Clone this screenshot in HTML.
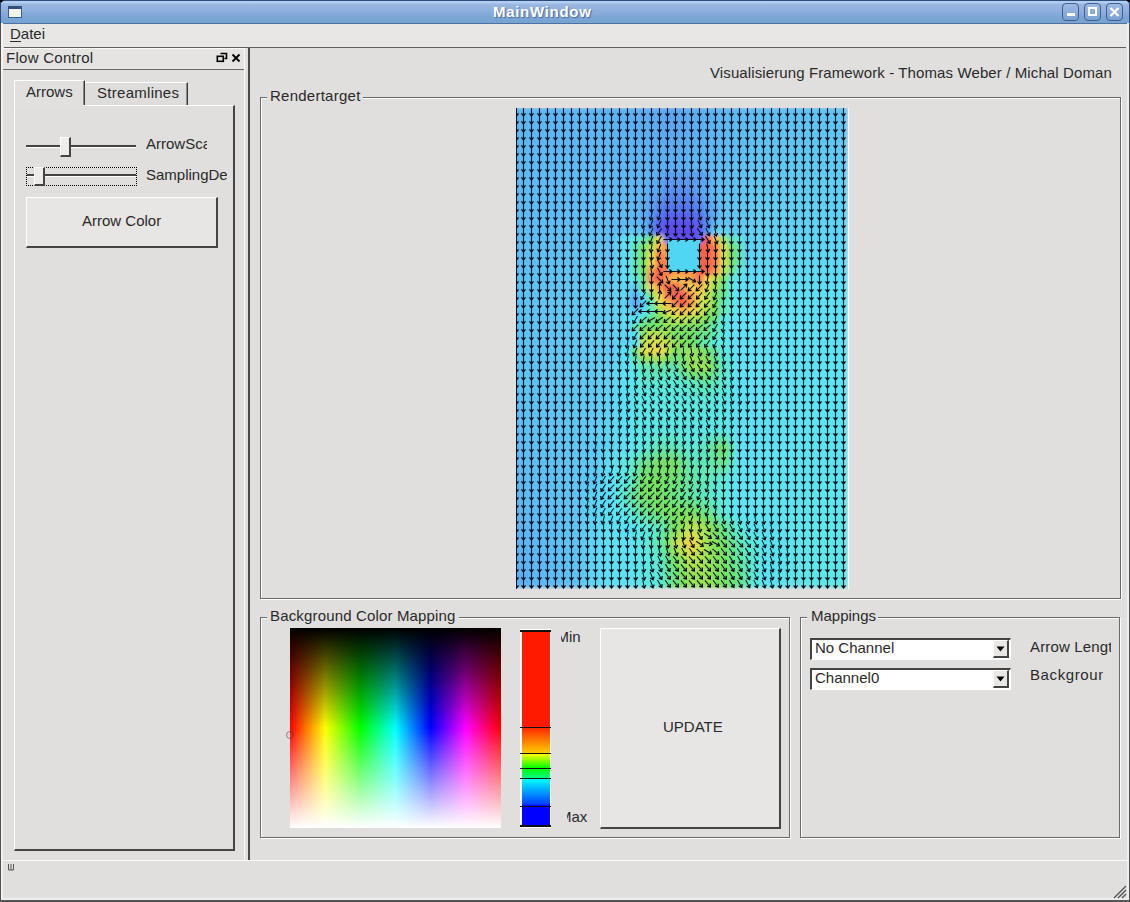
<!DOCTYPE html>
<html><head><meta charset="utf-8">
<style>
*{margin:0;padding:0;box-sizing:border-box}
html,body{width:1130px;height:902px;overflow:hidden;background:#e0dfdd;font-family:"Liberation Sans",sans-serif;font-size:15px;color:#2a2a2a}
.a{position:absolute}
.t{position:absolute;white-space:nowrap;line-height:15px;font-size:15px}
.hl{position:absolute;height:1px}
.vl{position:absolute;width:1px}
</style></head><body>
<!-- title bar -->
<div class="a" style="left:0;top:0;width:1130px;height:24px;background:linear-gradient(#b2cdf2 0,#b2cdf2 2px,#9ab7e0 3px,#8eafdf 10px,#7ba5d5 16px,#76a3d2 22px);border-top:1px solid #2f4d7a"></div>
<div class="a" style="left:0;top:23px;width:1130px;height:1px;background:#50709f"></div>
<div class="a" style="left:0;top:0;width:4px;height:4px;background:#000;clip-path:polygon(0 0,100% 0,0 100%)"></div>
<div class="a" style="left:1126px;top:0;width:4px;height:4px;background:#000;clip-path:polygon(0 0,100% 0,100% 100%)"></div>
<div class="vl" style="left:0;top:2px;height:22px;background:#2f4a78"></div>
<div class="vl" style="left:1129px;top:2px;height:22px;background:#2f4a78"></div>
<!-- window icon -->
<div class="a" style="left:8px;top:6px;width:14px;height:12px;background:#f4f3ea;border:1px solid #3a5c8f;border-top:3px solid #2f4d7d"></div>
<div class="t" style="left:493px;top:4px;font-weight:bold;color:#fff;font-size:15px;letter-spacing:0.7px;text-shadow:1px 1px 1px #4a6a9a">MainWindow</div>
<!-- title buttons -->
<div class="a" style="left:1062px;top:3px;width:17px;height:18px;border:1px solid #3f5f92;border-radius:4px;background:linear-gradient(#9fbbe3,#7c9fd2)"></div>
<div class="a" style="left:1067px;top:13px;width:8px;height:3px;background:#fff"></div>
<div class="a" style="left:1084px;top:3px;width:17px;height:18px;border:1px solid #3f5f92;border-radius:4px;background:linear-gradient(#9fbbe3,#7c9fd2)"></div>
<div class="a" style="left:1088px;top:7px;width:9px;height:9px;border:2px solid #fff"></div>
<div class="a" style="left:1106px;top:3px;width:17px;height:18px;border:1px solid #3f5f92;border-radius:4px;background:linear-gradient(#9fbbe3,#7c9fd2)"></div>
<svg class="a" style="left:1106px;top:3px" width="17" height="18"><path d="M4.5 5 L12.5 13 M12.5 5 L4.5 13" stroke="#fff" stroke-width="2.2"/></svg>
<!-- window borders -->
<div class="vl" style="left:0;top:23px;height:879px;background:#505050"></div>
<div class="a" style="left:1px;top:23px;width:2px;height:877px;background:#f4f3f1"></div>
<div class="vl" style="left:1129px;top:23px;height:879px;background:#505050"></div>
<div class="a" style="left:1127px;top:23px;width:2px;height:877px;background:#efeeec"></div>
<div class="a" style="left:1px;top:898px;width:1128px;height:2px;background:#efeeec"></div>
<div class="a" style="left:0;top:900px;width:1130px;height:2px;background:#555"></div>
<!-- menubar -->
<div class="a" style="left:3px;top:24px;width:1124px;height:23px;background:#e8e7e5"></div>
<div class="hl" style="left:4px;top:47px;width:1122px;background:#606060"></div>
<div class="t" style="left:10px;top:26px">Datei</div>
<div class="hl" style="left:10px;top:41px;width:11px;background:#2a2a2a"></div>
<!-- dock -->
<div class="a" style="left:3px;top:48px;width:242px;height:1px;background:#fafafa"></div>
<div class="a" style="left:3px;top:49px;width:241px;height:20px;background:#e5e4e2"></div>
<div class="hl" style="left:3px;top:69px;width:241px;background:#6a6a6a"></div>
<div class="t" style="left:6px;top:50px;letter-spacing:0.27px">Flow Control</div>
<svg class="a" style="left:214px;top:50px" width="30" height="16">
 <path d="M6.5 3.5h6v5h-2" fill="none" stroke="#000" stroke-width="1.6"/>
 <rect x="3.3" y="6.3" width="6" height="5" fill="none" stroke="#000" stroke-width="1.6"/>
 <path d="M18.5 4.5l7 7M25.5 4.5l-7 7" stroke="#000" stroke-width="1.8"/>
</svg>
<!-- splitter -->
<div class="vl" style="left:244px;top:48px;height:812px;background:#fbfbfa"></div>
<div class="a" style="left:248px;top:48px;width:2px;height:812px;background:#4a4a4a"></div>
<!-- tabs -->
<div class="a" style="left:14px;top:80px;width:71px;height:26px;background:#e1e0de;border-left:1px solid #fff;border-top:1px solid #fff;border-right:1px solid #3a3a3a;box-shadow:inset -1px 0 0 #8a8a8a"></div>
<div class="t" style="left:26px;top:84px">Arrows</div>
<div class="a" style="left:85px;top:82px;width:103px;height:23px;background:#dedddb;border-top:1px solid #fff;border-right:1px solid #3a3a3a;box-shadow:inset -1px 0 0 #8a8a8a"></div>
<div class="t" style="left:97px;top:85px;letter-spacing:0.28px">Streamlines</div>
<div class="a" style="left:14px;top:105px;width:221px;height:746px;border-left:1px solid #fff;border-top:1px solid #fff;border-right:2px solid #444;border-bottom:2px solid #444"></div>
<div class="a" style="left:15px;top:104px;width:68px;height:3px;background:#e1e0de"></div>
<!-- slider1 -->
<div class="a" style="left:26px;top:145px;width:110px;height:2px;background:#444"></div>
<div class="a" style="left:26px;top:147px;width:110px;height:1px;background:#fff"></div>
<div class="a" style="left:60px;top:137px;width:11px;height:20px;background:#edecea;border-left:1px solid #fff;border-top:1px solid #fff;border-right:2px solid #444;border-bottom:2px solid #444"></div>
<div class="t" style="left:146px;top:136px;width:61px;height:19px;overflow:hidden">ArrowScale</div>
<!-- slider2 -->
<div class="a" style="left:26px;top:167px;width:111px;height:19px;border:1px dotted #000"></div>
<div class="a" style="left:27px;top:174px;width:109px;height:2px;background:#444"></div>
<div class="a" style="left:27px;top:176px;width:109px;height:1px;background:#fff"></div>
<div class="a" style="left:34px;top:167px;width:11px;height:19px;background:#edecea;border-left:1px solid #fff;border-top:1px solid #fff;border-right:2px solid #444;border-bottom:2px solid #444"></div>
<div class="t" style="left:146px;top:167px;width:81px;height:19px;overflow:hidden">SamplingDensity</div>
<!-- button -->
<div class="a" style="left:26px;top:197px;width:192px;height:51px;background:#e7e6e4;border-left:1px solid #fff;border-top:1px solid #fff;border-right:2px solid #444;border-bottom:2px solid #444"></div>
<div class="t" style="left:82px;top:213px">Arrow Color</div>
<!-- statusbar -->
<div class="hl" style="left:3px;top:860px;width:1124px;background:#fbfbfa"></div>
<svg class="a" style="left:6px;top:862px" width="10" height="10"><path d="M2.5 2v6h5v-6M5 2v6" fill="none" stroke="#555" stroke-width="1"/></svg>
<svg class="a" style="left:1112px;top:884px" width="16" height="16"><path d="M2 14L14 2M6 14L14 6M10 14L14 10" stroke="#555" stroke-width="1.4"/></svg>
<!-- header label -->
<div class="t" style="left:710px;top:65px;letter-spacing:0.11px">Visualisierung Framework - Thomas Weber / Michal Doman</div>
<!-- groupbox Rendertarget -->
<div class="a" style="left:260px;top:97px;width:861px;height:502px;border:1px solid #6a6a6a;box-shadow:inset 1px 1px 0 #fff,1px 1px 0 #fff"></div>
<div class="a" style="left:267px;top:90px;width:96px;height:12px;background:#e0dfdd"></div>
<div class="t" style="left:270px;top:88px;letter-spacing:0.25px">Rendertarget</div>
<!-- groupbox BCM -->
<div class="a" style="left:260px;top:617px;width:530px;height:221px;border:1px solid #6a6a6a;box-shadow:inset 1px 1px 0 #fff,1px 1px 0 #fff"></div>
<div class="a" style="left:267px;top:610px;width:192px;height:12px;background:#e0dfdd"></div>
<div class="t" style="left:270px;top:608px;letter-spacing:0.16px">Background Color Mapping</div>
<!-- groupbox Mappings -->
<div class="a" style="left:800px;top:617px;width:320px;height:221px;border:1px solid #6a6a6a;box-shadow:inset 1px 1px 0 #fff,1px 1px 0 #fff"></div>
<div class="a" style="left:807px;top:610px;width:71px;height:12px;background:#e0dfdd"></div>
<div class="t" style="left:811px;top:608px">Mappings</div>
<!-- color picker -->
<div class="a" style="left:290px;top:628px;width:211px;height:200px;background:linear-gradient(to bottom,#000 0%,rgba(0,0,0,0) 50%,rgba(255,255,255,0) 50%,#fff 100%),linear-gradient(to right,#f00,#ff0 16.667%,#0f0 33.333%,#0ff 50%,#00f 66.667%,#f0f 83.333%,#f00)"></div>
<!-- color bar -->
<div class="a" style="left:520px;top:629px;width:31px;height:199px;background:#fff"></div>
<div class="a" style="left:522px;top:630px;width:28px;height:197px;background:linear-gradient(to bottom,#ff1a00 0px,#ff1a00 97px,#ff2a00 98px,#ffcc00 123px,#ffff00 124px,#00ff00 138px,#00ff80 148px,#00ffff 149px,#0040ff 174px,#0000ff 176px,#0000ff 197px)"></div>
<div class="a" style="left:520px;top:630px;width:31px;height:2px;background:#111"></div>
<div class="a" style="left:520px;top:727px;width:31px;height:1px;background:#111"></div>
<div class="a" style="left:520px;top:753px;width:31px;height:1px;background:#111"></div>
<div class="a" style="left:520px;top:768px;width:31px;height:1px;background:#111"></div>
<div class="a" style="left:520px;top:778px;width:31px;height:1px;background:#111"></div>
<div class="a" style="left:520px;top:806px;width:31px;height:1px;background:#111"></div>
<div class="a" style="left:520px;top:825px;width:31px;height:2px;background:#111"></div>
<div class="a" style="left:561px;top:629px;width:30px;height:16px;overflow:hidden"><div class="t" style="left:-4.5px;top:0">Min</div></div>
<div class="a" style="left:567px;top:809px;width:30px;height:16px;overflow:hidden"><div class="t" style="left:-8px;top:0">Max</div></div>
<!-- UPDATE -->
<div class="a" style="left:600px;top:628px;width:181px;height:201px;background:#e7e6e4;border-left:1px solid #fff;border-top:1px solid #fff;border-right:2px solid #444;border-bottom:2px solid #444"></div>
<div class="t" style="left:663px;top:719px">UPDATE</div>
<!-- combos -->
<div class="a" style="left:810px;top:638px;width:201px;height:22px;background:#fff;border-left:2px solid #444;border-top:2px solid #444;border-right:1px solid #fff;border-bottom:1px solid #fff"></div>
<div class="a" style="left:993px;top:640px;width:16px;height:18px;background:#e9e8e6;border-left:1px solid #fff;border-top:1px solid #fff;border-right:2px solid #444;border-bottom:2px solid #444"></div>
<svg class="a" style="left:996px;top:646px" width="10" height="6"><path d="M0.5 0.5h8l-4 5z" fill="#000"/></svg>
<div class="t" style="left:815px;top:640px">No Channel</div>
<div class="a" style="left:810px;top:668px;width:201px;height:22px;background:#fff;border-left:2px solid #444;border-top:2px solid #444;border-right:1px solid #fff;border-bottom:1px solid #fff"></div>
<div class="a" style="left:993px;top:670px;width:16px;height:18px;background:#e9e8e6;border-left:1px solid #fff;border-top:1px solid #fff;border-right:2px solid #444;border-bottom:2px solid #444"></div>
<svg class="a" style="left:996px;top:676px" width="10" height="6"><path d="M0.5 0.5h8l-4 5z" fill="#000"/></svg>
<div class="t" style="left:815px;top:670px">Channel0</div>
<div class="t" style="left:1030px;top:639px;width:81px;height:19px;overflow:hidden;letter-spacing:0.15px">Arrow Length</div>
<div class="t" style="left:1030px;top:667px;width:73px;height:19px;overflow:hidden;letter-spacing:0.6px">Background</div>

<svg class="a" style="left:284px;top:728px" width="12" height="14"><circle cx="6" cy="7" r="3.5" fill="none" stroke="rgba(90,40,40,0.55)" stroke-width="1"/></svg>
<svg class="a" style="left:516px;top:108px" width="332" height="481" viewBox="0 0 332 481">
<defs><filter id="bl" x="-5%" y="-5%" width="110%" height="110%"><feGaussianBlur stdDeviation="2.2"/></filter><clipPath id="cp"><rect x="0" y="0" width="332" height="481"/></clipPath></defs>
<g clip-path="url(#cp)"><g filter="url(#bl)"><rect x="-4.5" y="-0.5" width="8" height="8" fill="#51b4f5"/><rect x="3.5" y="-0.5" width="8" height="8" fill="#51b4f5"/><rect x="11.5" y="-0.5" width="8" height="8" fill="#51b4f5"/><rect x="19.5" y="-0.5" width="8" height="8" fill="#51b4f5"/><rect x="27.5" y="-0.5" width="8" height="8" fill="#51b3f5"/><rect x="35.5" y="-0.5" width="8" height="8" fill="#50b3f5"/><rect x="43.5" y="-0.5" width="8" height="8" fill="#50b3f5"/><rect x="51.5" y="-0.5" width="8" height="8" fill="#50b2f5"/><rect x="59.5" y="-0.5" width="8" height="8" fill="#50b2f5"/><rect x="67.5" y="-0.5" width="8" height="8" fill="#50b2f5"/><rect x="75.5" y="-0.5" width="8" height="8" fill="#50b2f5"/><rect x="83.5" y="-0.5" width="8" height="8" fill="#50b0f5"/><rect x="91.5" y="-0.5" width="8" height="8" fill="#50aff5"/><rect x="99.5" y="-0.5" width="8" height="8" fill="#50aef5"/><rect x="107.5" y="-0.5" width="8" height="8" fill="#50adf5"/><rect x="115.5" y="-0.5" width="8" height="8" fill="#50acf5"/><rect x="123.5" y="-0.5" width="8" height="8" fill="#50aaf5"/><rect x="131.5" y="-0.5" width="8" height="8" fill="#50a8f5"/><rect x="139.5" y="-0.5" width="8" height="8" fill="#4fa6f4"/><rect x="147.5" y="-0.5" width="8" height="8" fill="#4fa4f4"/><rect x="155.5" y="-0.5" width="8" height="8" fill="#4fa2f4"/><rect x="163.5" y="-0.5" width="8" height="8" fill="#4fa5f4"/><rect x="171.5" y="-0.5" width="8" height="8" fill="#50a9f5"/><rect x="179.5" y="-0.5" width="8" height="8" fill="#50acf5"/><rect x="187.5" y="-0.5" width="8" height="8" fill="#50aef5"/><rect x="195.5" y="-0.5" width="8" height="8" fill="#50b0f5"/><rect x="203.5" y="-0.5" width="8" height="8" fill="#50b2f5"/><rect x="211.5" y="-0.5" width="8" height="8" fill="#51b4f5"/><rect x="219.5" y="-0.5" width="8" height="8" fill="#51b6f5"/><rect x="227.5" y="-0.5" width="8" height="8" fill="#51b8f5"/><rect x="235.5" y="-0.5" width="8" height="8" fill="#51baf6"/><rect x="243.5" y="-0.5" width="8" height="8" fill="#51bbf6"/><rect x="251.5" y="-0.5" width="8" height="8" fill="#51bcf6"/><rect x="259.5" y="-0.5" width="8" height="8" fill="#51bdf6"/><rect x="267.5" y="-0.5" width="8" height="8" fill="#51bdf6"/><rect x="275.5" y="-0.5" width="8" height="8" fill="#51bef6"/><rect x="283.5" y="-0.5" width="8" height="8" fill="#51bff6"/><rect x="291.5" y="-0.5" width="8" height="8" fill="#51c0f6"/><rect x="299.5" y="-0.5" width="8" height="8" fill="#51c1f6"/><rect x="307.5" y="-0.5" width="8" height="8" fill="#52c2f6"/><rect x="315.5" y="-0.5" width="8" height="8" fill="#52c2f6"/><rect x="323.5" y="-0.5" width="8" height="8" fill="#52c2f6"/><rect x="-4.5" y="7.5" width="8" height="8" fill="#51b5f5"/><rect x="3.5" y="7.5" width="8" height="8" fill="#51b5f5"/><rect x="11.5" y="7.5" width="8" height="8" fill="#51b4f5"/><rect x="19.5" y="7.5" width="8" height="8" fill="#51b4f5"/><rect x="27.5" y="7.5" width="8" height="8" fill="#51b4f5"/><rect x="35.5" y="7.5" width="8" height="8" fill="#51b4f5"/><rect x="43.5" y="7.5" width="8" height="8" fill="#51b3f5"/><rect x="51.5" y="7.5" width="8" height="8" fill="#51b3f5"/><rect x="59.5" y="7.5" width="8" height="8" fill="#50b3f5"/><rect x="67.5" y="7.5" width="8" height="8" fill="#50b3f5"/><rect x="75.5" y="7.5" width="8" height="8" fill="#50b2f5"/><rect x="83.5" y="7.5" width="8" height="8" fill="#50b1f5"/><rect x="91.5" y="7.5" width="8" height="8" fill="#50b0f5"/><rect x="99.5" y="7.5" width="8" height="8" fill="#50aff5"/><rect x="107.5" y="7.5" width="8" height="8" fill="#50aef5"/><rect x="115.5" y="7.5" width="8" height="8" fill="#50adf5"/><rect x="123.5" y="7.5" width="8" height="8" fill="#50abf5"/><rect x="131.5" y="7.5" width="8" height="8" fill="#50a9f5"/><rect x="139.5" y="7.5" width="8" height="8" fill="#4fa7f5"/><rect x="147.5" y="7.5" width="8" height="8" fill="#4fa5f4"/><rect x="155.5" y="7.5" width="8" height="8" fill="#4fa3f4"/><rect x="163.5" y="7.5" width="8" height="8" fill="#4fa7f5"/><rect x="171.5" y="7.5" width="8" height="8" fill="#50abf5"/><rect x="179.5" y="7.5" width="8" height="8" fill="#50adf5"/><rect x="187.5" y="7.5" width="8" height="8" fill="#50aff5"/><rect x="195.5" y="7.5" width="8" height="8" fill="#50b1f5"/><rect x="203.5" y="7.5" width="8" height="8" fill="#51b3f5"/><rect x="211.5" y="7.5" width="8" height="8" fill="#51b5f5"/><rect x="219.5" y="7.5" width="8" height="8" fill="#51b7f5"/><rect x="227.5" y="7.5" width="8" height="8" fill="#51b9f5"/><rect x="235.5" y="7.5" width="8" height="8" fill="#51bbf6"/><rect x="243.5" y="7.5" width="8" height="8" fill="#51bcf6"/><rect x="251.5" y="7.5" width="8" height="8" fill="#51bdf6"/><rect x="259.5" y="7.5" width="8" height="8" fill="#51bef6"/><rect x="267.5" y="7.5" width="8" height="8" fill="#51bff6"/><rect x="275.5" y="7.5" width="8" height="8" fill="#51c0f6"/><rect x="283.5" y="7.5" width="8" height="8" fill="#51c0f6"/><rect x="291.5" y="7.5" width="8" height="8" fill="#52c1f6"/><rect x="299.5" y="7.5" width="8" height="8" fill="#52c2f6"/><rect x="307.5" y="7.5" width="8" height="8" fill="#52c3f6"/><rect x="315.5" y="7.5" width="8" height="8" fill="#52c4f6"/><rect x="323.5" y="7.5" width="8" height="8" fill="#52c4f6"/><rect x="-4.5" y="15.5" width="8" height="8" fill="#51b5f5"/><rect x="3.5" y="15.5" width="8" height="8" fill="#51b5f5"/><rect x="11.5" y="15.5" width="8" height="8" fill="#51b5f5"/><rect x="19.5" y="15.5" width="8" height="8" fill="#51b5f5"/><rect x="27.5" y="15.5" width="8" height="8" fill="#51b4f5"/><rect x="35.5" y="15.5" width="8" height="8" fill="#51b4f5"/><rect x="43.5" y="15.5" width="8" height="8" fill="#51b4f5"/><rect x="51.5" y="15.5" width="8" height="8" fill="#51b4f5"/><rect x="59.5" y="15.5" width="8" height="8" fill="#51b4f5"/><rect x="67.5" y="15.5" width="8" height="8" fill="#51b3f5"/><rect x="75.5" y="15.5" width="8" height="8" fill="#51b3f5"/><rect x="83.5" y="15.5" width="8" height="8" fill="#50b2f5"/><rect x="91.5" y="15.5" width="8" height="8" fill="#50b1f5"/><rect x="99.5" y="15.5" width="8" height="8" fill="#50b0f5"/><rect x="107.5" y="15.5" width="8" height="8" fill="#50aff5"/><rect x="115.5" y="15.5" width="8" height="8" fill="#50aef5"/><rect x="123.5" y="15.5" width="8" height="8" fill="#50acf5"/><rect x="131.5" y="15.5" width="8" height="8" fill="#50abf5"/><rect x="139.5" y="15.5" width="8" height="8" fill="#50a9f5"/><rect x="147.5" y="15.5" width="8" height="8" fill="#4fa7f4"/><rect x="155.5" y="15.5" width="8" height="8" fill="#4fa5f4"/><rect x="163.5" y="15.5" width="8" height="8" fill="#50a8f5"/><rect x="171.5" y="15.5" width="8" height="8" fill="#50acf5"/><rect x="179.5" y="15.5" width="8" height="8" fill="#50aef5"/><rect x="187.5" y="15.5" width="8" height="8" fill="#50b0f5"/><rect x="195.5" y="15.5" width="8" height="8" fill="#50b2f5"/><rect x="203.5" y="15.5" width="8" height="8" fill="#51b4f5"/><rect x="211.5" y="15.5" width="8" height="8" fill="#51b7f5"/><rect x="219.5" y="15.5" width="8" height="8" fill="#51b9f5"/><rect x="227.5" y="15.5" width="8" height="8" fill="#51bbf6"/><rect x="235.5" y="15.5" width="8" height="8" fill="#51bdf6"/><rect x="243.5" y="15.5" width="8" height="8" fill="#51bef6"/><rect x="251.5" y="15.5" width="8" height="8" fill="#51bef6"/><rect x="259.5" y="15.5" width="8" height="8" fill="#51bff6"/><rect x="267.5" y="15.5" width="8" height="8" fill="#51c0f6"/><rect x="275.5" y="15.5" width="8" height="8" fill="#51c1f6"/><rect x="283.5" y="15.5" width="8" height="8" fill="#52c2f6"/><rect x="291.5" y="15.5" width="8" height="8" fill="#52c2f6"/><rect x="299.5" y="15.5" width="8" height="8" fill="#52c3f6"/><rect x="307.5" y="15.5" width="8" height="8" fill="#52c4f6"/><rect x="315.5" y="15.5" width="8" height="8" fill="#52c5f6"/><rect x="323.5" y="15.5" width="8" height="8" fill="#52c5f6"/><rect x="-4.5" y="23.5" width="8" height="8" fill="#51b6f5"/><rect x="3.5" y="23.5" width="8" height="8" fill="#51b5f5"/><rect x="11.5" y="23.5" width="8" height="8" fill="#51b5f5"/><rect x="19.5" y="23.5" width="8" height="8" fill="#51b5f5"/><rect x="27.5" y="23.5" width="8" height="8" fill="#51b5f5"/><rect x="35.5" y="23.5" width="8" height="8" fill="#51b5f5"/><rect x="43.5" y="23.5" width="8" height="8" fill="#51b5f5"/><rect x="51.5" y="23.5" width="8" height="8" fill="#51b4f5"/><rect x="59.5" y="23.5" width="8" height="8" fill="#51b4f5"/><rect x="67.5" y="23.5" width="8" height="8" fill="#51b4f5"/><rect x="75.5" y="23.5" width="8" height="8" fill="#51b4f5"/><rect x="83.5" y="23.5" width="8" height="8" fill="#50b3f5"/><rect x="91.5" y="23.5" width="8" height="8" fill="#50b2f5"/><rect x="99.5" y="23.5" width="8" height="8" fill="#50b1f5"/><rect x="107.5" y="23.5" width="8" height="8" fill="#50b0f5"/><rect x="115.5" y="23.5" width="8" height="8" fill="#50aef5"/><rect x="123.5" y="23.5" width="8" height="8" fill="#50adf5"/><rect x="131.5" y="23.5" width="8" height="8" fill="#50acf5"/><rect x="139.5" y="23.5" width="8" height="8" fill="#50aaf5"/><rect x="147.5" y="23.5" width="8" height="8" fill="#50a8f5"/><rect x="155.5" y="23.5" width="8" height="8" fill="#4fa6f4"/><rect x="163.5" y="23.5" width="8" height="8" fill="#50aaf5"/><rect x="171.5" y="23.5" width="8" height="8" fill="#50adf5"/><rect x="179.5" y="23.5" width="8" height="8" fill="#50aff5"/><rect x="187.5" y="23.5" width="8" height="8" fill="#50b1f5"/><rect x="195.5" y="23.5" width="8" height="8" fill="#51b4f5"/><rect x="203.5" y="23.5" width="8" height="8" fill="#51b6f5"/><rect x="211.5" y="23.5" width="8" height="8" fill="#51b8f5"/><rect x="219.5" y="23.5" width="8" height="8" fill="#51baf5"/><rect x="227.5" y="23.5" width="8" height="8" fill="#51bcf6"/><rect x="235.5" y="23.5" width="8" height="8" fill="#51bef6"/><rect x="243.5" y="23.5" width="8" height="8" fill="#51bff6"/><rect x="251.5" y="23.5" width="8" height="8" fill="#51c0f6"/><rect x="259.5" y="23.5" width="8" height="8" fill="#51c1f6"/><rect x="267.5" y="23.5" width="8" height="8" fill="#52c1f6"/><rect x="275.5" y="23.5" width="8" height="8" fill="#52c2f6"/><rect x="283.5" y="23.5" width="8" height="8" fill="#52c3f6"/><rect x="291.5" y="23.5" width="8" height="8" fill="#52c4f6"/><rect x="299.5" y="23.5" width="8" height="8" fill="#52c4f6"/><rect x="307.5" y="23.5" width="8" height="8" fill="#52c5f6"/><rect x="315.5" y="23.5" width="8" height="8" fill="#52c6f6"/><rect x="323.5" y="23.5" width="8" height="8" fill="#52c6f6"/><rect x="-4.5" y="31.5" width="8" height="8" fill="#51b6f5"/><rect x="3.5" y="31.5" width="8" height="8" fill="#51b6f5"/><rect x="11.5" y="31.5" width="8" height="8" fill="#51b6f5"/><rect x="19.5" y="31.5" width="8" height="8" fill="#51b6f5"/><rect x="27.5" y="31.5" width="8" height="8" fill="#51b6f5"/><rect x="35.5" y="31.5" width="8" height="8" fill="#51b5f5"/><rect x="43.5" y="31.5" width="8" height="8" fill="#51b5f5"/><rect x="51.5" y="31.5" width="8" height="8" fill="#51b5f5"/><rect x="59.5" y="31.5" width="8" height="8" fill="#51b5f5"/><rect x="67.5" y="31.5" width="8" height="8" fill="#51b5f5"/><rect x="75.5" y="31.5" width="8" height="8" fill="#51b5f5"/><rect x="83.5" y="31.5" width="8" height="8" fill="#51b4f5"/><rect x="91.5" y="31.5" width="8" height="8" fill="#50b3f5"/><rect x="99.5" y="31.5" width="8" height="8" fill="#50b1f5"/><rect x="107.5" y="31.5" width="8" height="8" fill="#50b0f5"/><rect x="115.5" y="31.5" width="8" height="8" fill="#50aff5"/><rect x="123.5" y="31.5" width="8" height="8" fill="#50aef5"/><rect x="131.5" y="31.5" width="8" height="8" fill="#50adf5"/><rect x="139.5" y="31.5" width="8" height="8" fill="#50acf5"/><rect x="147.5" y="31.5" width="8" height="8" fill="#50aaf5"/><rect x="155.5" y="31.5" width="8" height="8" fill="#4fa8f5"/><rect x="163.5" y="31.5" width="8" height="8" fill="#50acf5"/><rect x="171.5" y="31.5" width="8" height="8" fill="#50aef5"/><rect x="179.5" y="31.5" width="8" height="8" fill="#50b0f5"/><rect x="187.5" y="31.5" width="8" height="8" fill="#50b2f5"/><rect x="195.5" y="31.5" width="8" height="8" fill="#51b5f5"/><rect x="203.5" y="31.5" width="8" height="8" fill="#51b7f5"/><rect x="211.5" y="31.5" width="8" height="8" fill="#51b9f5"/><rect x="219.5" y="31.5" width="8" height="8" fill="#51bbf6"/><rect x="227.5" y="31.5" width="8" height="8" fill="#51bdf6"/><rect x="235.5" y="31.5" width="8" height="8" fill="#51c0f6"/><rect x="243.5" y="31.5" width="8" height="8" fill="#51c0f6"/><rect x="251.5" y="31.5" width="8" height="8" fill="#52c1f6"/><rect x="259.5" y="31.5" width="8" height="8" fill="#52c2f6"/><rect x="267.5" y="31.5" width="8" height="8" fill="#52c3f6"/><rect x="275.5" y="31.5" width="8" height="8" fill="#52c3f6"/><rect x="283.5" y="31.5" width="8" height="8" fill="#52c4f6"/><rect x="291.5" y="31.5" width="8" height="8" fill="#52c5f6"/><rect x="299.5" y="31.5" width="8" height="8" fill="#52c6f6"/><rect x="307.5" y="31.5" width="8" height="8" fill="#52c6f6"/><rect x="315.5" y="31.5" width="8" height="8" fill="#52c7f6"/><rect x="323.5" y="31.5" width="8" height="8" fill="#52c7f6"/><rect x="-4.5" y="39.5" width="8" height="8" fill="#51b6f5"/><rect x="3.5" y="39.5" width="8" height="8" fill="#51b6f5"/><rect x="11.5" y="39.5" width="8" height="8" fill="#51b6f5"/><rect x="19.5" y="39.5" width="8" height="8" fill="#51b6f5"/><rect x="27.5" y="39.5" width="8" height="8" fill="#51b6f5"/><rect x="35.5" y="39.5" width="8" height="8" fill="#51b6f5"/><rect x="43.5" y="39.5" width="8" height="8" fill="#51b6f5"/><rect x="51.5" y="39.5" width="8" height="8" fill="#51b6f5"/><rect x="59.5" y="39.5" width="8" height="8" fill="#51b6f5"/><rect x="67.5" y="39.5" width="8" height="8" fill="#51b6f5"/><rect x="75.5" y="39.5" width="8" height="8" fill="#51b6f5"/><rect x="83.5" y="39.5" width="8" height="8" fill="#51b4f5"/><rect x="91.5" y="39.5" width="8" height="8" fill="#51b3f5"/><rect x="99.5" y="39.5" width="8" height="8" fill="#50b2f5"/><rect x="107.5" y="39.5" width="8" height="8" fill="#50b1f5"/><rect x="115.5" y="39.5" width="8" height="8" fill="#50b0f5"/><rect x="123.5" y="39.5" width="8" height="8" fill="#50aff5"/><rect x="131.5" y="39.5" width="8" height="8" fill="#50aef5"/><rect x="139.5" y="39.5" width="8" height="8" fill="#50adf5"/><rect x="147.5" y="39.5" width="8" height="8" fill="#50abf5"/><rect x="155.5" y="39.5" width="8" height="8" fill="#50a9f5"/><rect x="163.5" y="39.5" width="8" height="8" fill="#50adf5"/><rect x="171.5" y="39.5" width="8" height="8" fill="#50aff5"/><rect x="179.5" y="39.5" width="8" height="8" fill="#50b1f5"/><rect x="187.5" y="39.5" width="8" height="8" fill="#51b3f5"/><rect x="195.5" y="39.5" width="8" height="8" fill="#51b6f5"/><rect x="203.5" y="39.5" width="8" height="8" fill="#51b8f5"/><rect x="211.5" y="39.5" width="8" height="8" fill="#51baf6"/><rect x="219.5" y="39.5" width="8" height="8" fill="#51bcf6"/><rect x="227.5" y="39.5" width="8" height="8" fill="#51bff6"/><rect x="235.5" y="39.5" width="8" height="8" fill="#52c1f6"/><rect x="243.5" y="39.5" width="8" height="8" fill="#52c2f6"/><rect x="251.5" y="39.5" width="8" height="8" fill="#52c2f6"/><rect x="259.5" y="39.5" width="8" height="8" fill="#52c3f6"/><rect x="267.5" y="39.5" width="8" height="8" fill="#52c4f6"/><rect x="275.5" y="39.5" width="8" height="8" fill="#52c5f6"/><rect x="283.5" y="39.5" width="8" height="8" fill="#52c5f6"/><rect x="291.5" y="39.5" width="8" height="8" fill="#52c6f6"/><rect x="299.5" y="39.5" width="8" height="8" fill="#52c7f6"/><rect x="307.5" y="39.5" width="8" height="8" fill="#52c8f6"/><rect x="315.5" y="39.5" width="8" height="8" fill="#52c8f6"/><rect x="323.5" y="39.5" width="8" height="8" fill="#52c8f6"/><rect x="-4.5" y="47.5" width="8" height="8" fill="#51b7f5"/><rect x="3.5" y="47.5" width="8" height="8" fill="#51b7f5"/><rect x="11.5" y="47.5" width="8" height="8" fill="#51b7f5"/><rect x="19.5" y="47.5" width="8" height="8" fill="#51b7f5"/><rect x="27.5" y="47.5" width="8" height="8" fill="#51b7f5"/><rect x="35.5" y="47.5" width="8" height="8" fill="#51b7f5"/><rect x="43.5" y="47.5" width="8" height="8" fill="#51b7f5"/><rect x="51.5" y="47.5" width="8" height="8" fill="#51b7f5"/><rect x="59.5" y="47.5" width="8" height="8" fill="#51b6f5"/><rect x="67.5" y="47.5" width="8" height="8" fill="#51b6f5"/><rect x="75.5" y="47.5" width="8" height="8" fill="#51b6f5"/><rect x="83.5" y="47.5" width="8" height="8" fill="#51b5f5"/><rect x="91.5" y="47.5" width="8" height="8" fill="#51b4f5"/><rect x="99.5" y="47.5" width="8" height="8" fill="#51b3f5"/><rect x="107.5" y="47.5" width="8" height="8" fill="#50b2f5"/><rect x="115.5" y="47.5" width="8" height="8" fill="#50b1f5"/><rect x="123.5" y="47.5" width="8" height="8" fill="#50b0f5"/><rect x="131.5" y="47.5" width="8" height="8" fill="#50aff5"/><rect x="139.5" y="47.5" width="8" height="8" fill="#50adf5"/><rect x="147.5" y="47.5" width="8" height="8" fill="#50acf5"/><rect x="155.5" y="47.5" width="8" height="8" fill="#50abf5"/><rect x="163.5" y="47.5" width="8" height="8" fill="#50aef5"/><rect x="171.5" y="47.5" width="8" height="8" fill="#50b0f5"/><rect x="179.5" y="47.5" width="8" height="8" fill="#50b2f5"/><rect x="187.5" y="47.5" width="8" height="8" fill="#51b4f5"/><rect x="195.5" y="47.5" width="8" height="8" fill="#51b7f5"/><rect x="203.5" y="47.5" width="8" height="8" fill="#51b9f5"/><rect x="211.5" y="47.5" width="8" height="8" fill="#51bbf6"/><rect x="219.5" y="47.5" width="8" height="8" fill="#51bef6"/><rect x="227.5" y="47.5" width="8" height="8" fill="#51c0f6"/><rect x="235.5" y="47.5" width="8" height="8" fill="#52c2f6"/><rect x="243.5" y="47.5" width="8" height="8" fill="#52c3f6"/><rect x="251.5" y="47.5" width="8" height="8" fill="#52c4f6"/><rect x="259.5" y="47.5" width="8" height="8" fill="#52c5f6"/><rect x="267.5" y="47.5" width="8" height="8" fill="#52c5f6"/><rect x="275.5" y="47.5" width="8" height="8" fill="#52c6f6"/><rect x="283.5" y="47.5" width="8" height="8" fill="#52c7f6"/><rect x="291.5" y="47.5" width="8" height="8" fill="#52c7f6"/><rect x="299.5" y="47.5" width="8" height="8" fill="#52c8f6"/><rect x="307.5" y="47.5" width="8" height="8" fill="#52c9f6"/><rect x="315.5" y="47.5" width="8" height="8" fill="#52caf6"/><rect x="323.5" y="47.5" width="8" height="8" fill="#52caf6"/><rect x="-4.5" y="55.5" width="8" height="8" fill="#51b7f5"/><rect x="3.5" y="55.5" width="8" height="8" fill="#51b7f5"/><rect x="11.5" y="55.5" width="8" height="8" fill="#51b7f5"/><rect x="19.5" y="55.5" width="8" height="8" fill="#51b7f5"/><rect x="27.5" y="55.5" width="8" height="8" fill="#51b7f5"/><rect x="35.5" y="55.5" width="8" height="8" fill="#51b7f5"/><rect x="43.5" y="55.5" width="8" height="8" fill="#51b7f5"/><rect x="51.5" y="55.5" width="8" height="8" fill="#51b7f5"/><rect x="59.5" y="55.5" width="8" height="8" fill="#51b7f5"/><rect x="67.5" y="55.5" width="8" height="8" fill="#51b7f5"/><rect x="75.5" y="55.5" width="8" height="8" fill="#51b7f5"/><rect x="83.5" y="55.5" width="8" height="8" fill="#51b6f5"/><rect x="91.5" y="55.5" width="8" height="8" fill="#51b5f5"/><rect x="99.5" y="55.5" width="8" height="8" fill="#51b4f5"/><rect x="107.5" y="55.5" width="8" height="8" fill="#50b3f5"/><rect x="115.5" y="55.5" width="8" height="8" fill="#50b2f5"/><rect x="123.5" y="55.5" width="8" height="8" fill="#50b0f5"/><rect x="131.5" y="55.5" width="8" height="8" fill="#50aff5"/><rect x="139.5" y="55.5" width="8" height="8" fill="#50aef5"/><rect x="147.5" y="55.5" width="8" height="8" fill="#50adf5"/><rect x="155.5" y="55.5" width="8" height="8" fill="#50acf5"/><rect x="163.5" y="55.5" width="8" height="8" fill="#50aef5"/><rect x="171.5" y="55.5" width="8" height="8" fill="#50b1f5"/><rect x="179.5" y="55.5" width="8" height="8" fill="#51b3f5"/><rect x="187.5" y="55.5" width="8" height="8" fill="#51b6f5"/><rect x="195.5" y="55.5" width="8" height="8" fill="#51b8f5"/><rect x="203.5" y="55.5" width="8" height="8" fill="#51baf6"/><rect x="211.5" y="55.5" width="8" height="8" fill="#51bdf6"/><rect x="219.5" y="55.5" width="8" height="8" fill="#51bff6"/><rect x="227.5" y="55.5" width="8" height="8" fill="#52c1f6"/><rect x="235.5" y="55.5" width="8" height="8" fill="#52c4f6"/><rect x="243.5" y="55.5" width="8" height="8" fill="#52c4f6"/><rect x="251.5" y="55.5" width="8" height="8" fill="#52c5f6"/><rect x="259.5" y="55.5" width="8" height="8" fill="#52c6f6"/><rect x="267.5" y="55.5" width="8" height="8" fill="#52c7f6"/><rect x="275.5" y="55.5" width="8" height="8" fill="#52c7f6"/><rect x="283.5" y="55.5" width="8" height="8" fill="#52c8f6"/><rect x="291.5" y="55.5" width="8" height="8" fill="#52c9f6"/><rect x="299.5" y="55.5" width="8" height="8" fill="#52c9f6"/><rect x="307.5" y="55.5" width="8" height="8" fill="#52caf6"/><rect x="315.5" y="55.5" width="8" height="8" fill="#52cbf6"/><rect x="323.5" y="55.5" width="8" height="8" fill="#52cbf6"/><rect x="-4.5" y="63.5" width="8" height="8" fill="#51b8f5"/><rect x="3.5" y="63.5" width="8" height="8" fill="#51b8f5"/><rect x="11.5" y="63.5" width="8" height="8" fill="#51b8f5"/><rect x="19.5" y="63.5" width="8" height="8" fill="#51b8f5"/><rect x="27.5" y="63.5" width="8" height="8" fill="#51b8f5"/><rect x="35.5" y="63.5" width="8" height="8" fill="#51b8f5"/><rect x="43.5" y="63.5" width="8" height="8" fill="#51b8f5"/><rect x="51.5" y="63.5" width="8" height="8" fill="#51b8f5"/><rect x="59.5" y="63.5" width="8" height="8" fill="#51b8f5"/><rect x="67.5" y="63.5" width="8" height="8" fill="#51b8f5"/><rect x="75.5" y="63.5" width="8" height="8" fill="#51b8f5"/><rect x="83.5" y="63.5" width="8" height="8" fill="#51b7f5"/><rect x="91.5" y="63.5" width="8" height="8" fill="#51b6f5"/><rect x="99.5" y="63.5" width="8" height="8" fill="#51b5f5"/><rect x="107.5" y="63.5" width="8" height="8" fill="#51b4f5"/><rect x="115.5" y="63.5" width="8" height="8" fill="#50b2f5"/><rect x="123.5" y="63.5" width="8" height="8" fill="#50b1f5"/><rect x="131.5" y="63.5" width="8" height="8" fill="#50b0f5"/><rect x="139.5" y="63.5" width="8" height="8" fill="#4fa2f4"/><rect x="147.5" y="63.5" width="8" height="8" fill="#4e9cf4"/><rect x="155.5" y="63.5" width="8" height="8" fill="#4e9cf4"/><rect x="163.5" y="63.5" width="8" height="8" fill="#4e9cf4"/><rect x="171.5" y="63.5" width="8" height="8" fill="#4e9cf4"/><rect x="179.5" y="63.5" width="8" height="8" fill="#4e9cf4"/><rect x="187.5" y="63.5" width="8" height="8" fill="#4fa2f4"/><rect x="195.5" y="63.5" width="8" height="8" fill="#51b9f5"/><rect x="203.5" y="63.5" width="8" height="8" fill="#51bbf6"/><rect x="211.5" y="63.5" width="8" height="8" fill="#51bef6"/><rect x="219.5" y="63.5" width="8" height="8" fill="#51c0f6"/><rect x="227.5" y="63.5" width="8" height="8" fill="#52c3f6"/><rect x="235.5" y="63.5" width="8" height="8" fill="#52c5f6"/><rect x="243.5" y="63.5" width="8" height="8" fill="#52c6f6"/><rect x="251.5" y="63.5" width="8" height="8" fill="#52c7f6"/><rect x="259.5" y="63.5" width="8" height="8" fill="#52c7f6"/><rect x="267.5" y="63.5" width="8" height="8" fill="#52c8f6"/><rect x="275.5" y="63.5" width="8" height="8" fill="#52c9f6"/><rect x="283.5" y="63.5" width="8" height="8" fill="#52c9f6"/><rect x="291.5" y="63.5" width="8" height="8" fill="#52caf6"/><rect x="299.5" y="63.5" width="8" height="8" fill="#52cbf6"/><rect x="307.5" y="63.5" width="8" height="8" fill="#52cbf6"/><rect x="315.5" y="63.5" width="8" height="8" fill="#52ccf6"/><rect x="323.5" y="63.5" width="8" height="8" fill="#52ccf6"/><rect x="-4.5" y="71.5" width="8" height="8" fill="#51b8f5"/><rect x="3.5" y="71.5" width="8" height="8" fill="#51b8f5"/><rect x="11.5" y="71.5" width="8" height="8" fill="#51b8f5"/><rect x="19.5" y="71.5" width="8" height="8" fill="#51b8f5"/><rect x="27.5" y="71.5" width="8" height="8" fill="#51b8f5"/><rect x="35.5" y="71.5" width="8" height="8" fill="#51b8f5"/><rect x="43.5" y="71.5" width="8" height="8" fill="#51b8f5"/><rect x="51.5" y="71.5" width="8" height="8" fill="#51b9f5"/><rect x="59.5" y="71.5" width="8" height="8" fill="#51b9f5"/><rect x="67.5" y="71.5" width="8" height="8" fill="#51b9f5"/><rect x="75.5" y="71.5" width="8" height="8" fill="#51b9f5"/><rect x="83.5" y="71.5" width="8" height="8" fill="#51b8f5"/><rect x="91.5" y="71.5" width="8" height="8" fill="#51b7f5"/><rect x="99.5" y="71.5" width="8" height="8" fill="#51b5f5"/><rect x="107.5" y="71.5" width="8" height="8" fill="#51b4f5"/><rect x="115.5" y="71.5" width="8" height="8" fill="#51b3f5"/><rect x="123.5" y="71.5" width="8" height="8" fill="#50b2f5"/><rect x="131.5" y="71.5" width="8" height="8" fill="#50adf5"/><rect x="139.5" y="71.5" width="8" height="8" fill="#4fa2f4"/><rect x="147.5" y="71.5" width="8" height="8" fill="#4d95f3"/><rect x="155.5" y="71.5" width="8" height="8" fill="#4d95f3"/><rect x="163.5" y="71.5" width="8" height="8" fill="#4d95f3"/><rect x="171.5" y="71.5" width="8" height="8" fill="#4d95f3"/><rect x="179.5" y="71.5" width="8" height="8" fill="#4e9ff4"/><rect x="187.5" y="71.5" width="8" height="8" fill="#4fa4f4"/><rect x="195.5" y="71.5" width="8" height="8" fill="#51baf6"/><rect x="203.5" y="71.5" width="8" height="8" fill="#51bdf6"/><rect x="211.5" y="71.5" width="8" height="8" fill="#51bff6"/><rect x="219.5" y="71.5" width="8" height="8" fill="#52c2f6"/><rect x="227.5" y="71.5" width="8" height="8" fill="#52c4f6"/><rect x="235.5" y="71.5" width="8" height="8" fill="#52c7f6"/><rect x="243.5" y="71.5" width="8" height="8" fill="#52c7f6"/><rect x="251.5" y="71.5" width="8" height="8" fill="#52c8f6"/><rect x="259.5" y="71.5" width="8" height="8" fill="#52c9f6"/><rect x="267.5" y="71.5" width="8" height="8" fill="#52c9f6"/><rect x="275.5" y="71.5" width="8" height="8" fill="#52caf6"/><rect x="283.5" y="71.5" width="8" height="8" fill="#52cbf6"/><rect x="291.5" y="71.5" width="8" height="8" fill="#52cbf6"/><rect x="299.5" y="71.5" width="8" height="8" fill="#52ccf6"/><rect x="307.5" y="71.5" width="8" height="8" fill="#52cdf6"/><rect x="315.5" y="71.5" width="8" height="8" fill="#52cdf6"/><rect x="323.5" y="71.5" width="8" height="8" fill="#52cdf6"/><rect x="-4.5" y="79.5" width="8" height="8" fill="#51b8f5"/><rect x="3.5" y="79.5" width="8" height="8" fill="#51b9f5"/><rect x="11.5" y="79.5" width="8" height="8" fill="#51b9f5"/><rect x="19.5" y="79.5" width="8" height="8" fill="#51b9f5"/><rect x="27.5" y="79.5" width="8" height="8" fill="#51b9f5"/><rect x="35.5" y="79.5" width="8" height="8" fill="#51b9f5"/><rect x="43.5" y="79.5" width="8" height="8" fill="#51b9f5"/><rect x="51.5" y="79.5" width="8" height="8" fill="#51b9f5"/><rect x="59.5" y="79.5" width="8" height="8" fill="#51b9f5"/><rect x="67.5" y="79.5" width="8" height="8" fill="#51b9f5"/><rect x="75.5" y="79.5" width="8" height="8" fill="#51baf5"/><rect x="83.5" y="79.5" width="8" height="8" fill="#51b8f5"/><rect x="91.5" y="79.5" width="8" height="8" fill="#51b7f5"/><rect x="99.5" y="79.5" width="8" height="8" fill="#51b6f5"/><rect x="107.5" y="79.5" width="8" height="8" fill="#51b5f5"/><rect x="115.5" y="79.5" width="8" height="8" fill="#51b4f5"/><rect x="123.5" y="79.5" width="8" height="8" fill="#50b3f5"/><rect x="131.5" y="79.5" width="8" height="8" fill="#4fa7f4"/><rect x="139.5" y="79.5" width="8" height="8" fill="#4fa2f4"/><rect x="147.5" y="79.5" width="8" height="8" fill="#4c8df2"/><rect x="155.5" y="79.5" width="8" height="8" fill="#4c8df2"/><rect x="163.5" y="79.5" width="8" height="8" fill="#4c8df2"/><rect x="171.5" y="79.5" width="8" height="8" fill="#4c8df2"/><rect x="179.5" y="79.5" width="8" height="8" fill="#4fa2f4"/><rect x="187.5" y="79.5" width="8" height="8" fill="#4fa7f4"/><rect x="195.5" y="79.5" width="8" height="8" fill="#51bbf6"/><rect x="203.5" y="79.5" width="8" height="8" fill="#51bef6"/><rect x="211.5" y="79.5" width="8" height="8" fill="#51c0f6"/><rect x="219.5" y="79.5" width="8" height="8" fill="#52c3f6"/><rect x="227.5" y="79.5" width="8" height="8" fill="#52c5f6"/><rect x="235.5" y="79.5" width="8" height="8" fill="#52c8f6"/><rect x="243.5" y="79.5" width="8" height="8" fill="#52c9f6"/><rect x="251.5" y="79.5" width="8" height="8" fill="#52c9f6"/><rect x="259.5" y="79.5" width="8" height="8" fill="#52caf6"/><rect x="267.5" y="79.5" width="8" height="8" fill="#52cbf6"/><rect x="275.5" y="79.5" width="8" height="8" fill="#52cbf6"/><rect x="283.5" y="79.5" width="8" height="8" fill="#52ccf6"/><rect x="291.5" y="79.5" width="8" height="8" fill="#52ccf6"/><rect x="299.5" y="79.5" width="8" height="8" fill="#52cdf6"/><rect x="307.5" y="79.5" width="8" height="8" fill="#52cef6"/><rect x="315.5" y="79.5" width="8" height="8" fill="#52cef6"/><rect x="323.5" y="79.5" width="8" height="8" fill="#52cef6"/><rect x="-4.5" y="87.5" width="8" height="8" fill="#51b9f5"/><rect x="3.5" y="87.5" width="8" height="8" fill="#51b9f5"/><rect x="11.5" y="87.5" width="8" height="8" fill="#51b9f5"/><rect x="19.5" y="87.5" width="8" height="8" fill="#51b9f5"/><rect x="27.5" y="87.5" width="8" height="8" fill="#51b9f5"/><rect x="35.5" y="87.5" width="8" height="8" fill="#51baf5"/><rect x="43.5" y="87.5" width="8" height="8" fill="#51baf5"/><rect x="51.5" y="87.5" width="8" height="8" fill="#51baf5"/><rect x="59.5" y="87.5" width="8" height="8" fill="#51baf6"/><rect x="67.5" y="87.5" width="8" height="8" fill="#51baf6"/><rect x="75.5" y="87.5" width="8" height="8" fill="#51baf6"/><rect x="83.5" y="87.5" width="8" height="8" fill="#51b9f5"/><rect x="91.5" y="87.5" width="8" height="8" fill="#51b8f5"/><rect x="99.5" y="87.5" width="8" height="8" fill="#51b7f5"/><rect x="107.5" y="87.5" width="8" height="8" fill="#51b6f5"/><rect x="115.5" y="87.5" width="8" height="8" fill="#51b5f5"/><rect x="123.5" y="87.5" width="8" height="8" fill="#50aff5"/><rect x="131.5" y="87.5" width="8" height="8" fill="#4fa2f4"/><rect x="139.5" y="87.5" width="8" height="8" fill="#4d92f2"/><rect x="147.5" y="87.5" width="8" height="8" fill="#4b80f1"/><rect x="155.5" y="87.5" width="8" height="8" fill="#4b80f1"/><rect x="163.5" y="87.5" width="8" height="8" fill="#4b80f1"/><rect x="171.5" y="87.5" width="8" height="8" fill="#4b80f1"/><rect x="179.5" y="87.5" width="8" height="8" fill="#4d92f2"/><rect x="187.5" y="87.5" width="8" height="8" fill="#4fa2f4"/><rect x="195.5" y="87.5" width="8" height="8" fill="#51b4f5"/><rect x="203.5" y="87.5" width="8" height="8" fill="#51bff6"/><rect x="211.5" y="87.5" width="8" height="8" fill="#52c2f6"/><rect x="219.5" y="87.5" width="8" height="8" fill="#52c4f6"/><rect x="227.5" y="87.5" width="8" height="8" fill="#52c7f6"/><rect x="235.5" y="87.5" width="8" height="8" fill="#52c9f6"/><rect x="243.5" y="87.5" width="8" height="8" fill="#52caf6"/><rect x="251.5" y="87.5" width="8" height="8" fill="#52cbf6"/><rect x="259.5" y="87.5" width="8" height="8" fill="#52cbf6"/><rect x="267.5" y="87.5" width="8" height="8" fill="#52ccf6"/><rect x="275.5" y="87.5" width="8" height="8" fill="#52ccf6"/><rect x="283.5" y="87.5" width="8" height="8" fill="#52cdf6"/><rect x="291.5" y="87.5" width="8" height="8" fill="#52cef6"/><rect x="299.5" y="87.5" width="8" height="8" fill="#52cef6"/><rect x="307.5" y="87.5" width="8" height="8" fill="#52cff6"/><rect x="315.5" y="87.5" width="8" height="8" fill="#51d0f7"/><rect x="323.5" y="87.5" width="8" height="8" fill="#51d0f7"/><rect x="-4.5" y="95.5" width="8" height="8" fill="#51b9f5"/><rect x="3.5" y="95.5" width="8" height="8" fill="#51b9f5"/><rect x="11.5" y="95.5" width="8" height="8" fill="#51baf5"/><rect x="19.5" y="95.5" width="8" height="8" fill="#51baf5"/><rect x="27.5" y="95.5" width="8" height="8" fill="#51baf6"/><rect x="35.5" y="95.5" width="8" height="8" fill="#51baf6"/><rect x="43.5" y="95.5" width="8" height="8" fill="#51baf6"/><rect x="51.5" y="95.5" width="8" height="8" fill="#51bbf6"/><rect x="59.5" y="95.5" width="8" height="8" fill="#51bbf6"/><rect x="67.5" y="95.5" width="8" height="8" fill="#51bbf6"/><rect x="75.5" y="95.5" width="8" height="8" fill="#51bbf6"/><rect x="83.5" y="95.5" width="8" height="8" fill="#51baf6"/><rect x="91.5" y="95.5" width="8" height="8" fill="#51b9f5"/><rect x="99.5" y="95.5" width="8" height="8" fill="#51b8f5"/><rect x="107.5" y="95.5" width="8" height="8" fill="#51b7f5"/><rect x="115.5" y="95.5" width="8" height="8" fill="#51b6f5"/><rect x="123.5" y="95.5" width="8" height="8" fill="#50acf5"/><rect x="131.5" y="95.5" width="8" height="8" fill="#4e9cf4"/><rect x="139.5" y="95.5" width="8" height="8" fill="#4b82f1"/><rect x="147.5" y="95.5" width="8" height="8" fill="#4b72f0"/><rect x="155.5" y="95.5" width="8" height="8" fill="#4b72f0"/><rect x="163.5" y="95.5" width="8" height="8" fill="#4b72f0"/><rect x="171.5" y="95.5" width="8" height="8" fill="#4b72f0"/><rect x="179.5" y="95.5" width="8" height="8" fill="#4b82f1"/><rect x="187.5" y="95.5" width="8" height="8" fill="#4e9cf4"/><rect x="195.5" y="95.5" width="8" height="8" fill="#50acf5"/><rect x="203.5" y="95.5" width="8" height="8" fill="#51c0f6"/><rect x="211.5" y="95.5" width="8" height="8" fill="#52c3f6"/><rect x="219.5" y="95.5" width="8" height="8" fill="#52c5f6"/><rect x="227.5" y="95.5" width="8" height="8" fill="#52c8f6"/><rect x="235.5" y="95.5" width="8" height="8" fill="#52cbf6"/><rect x="243.5" y="95.5" width="8" height="8" fill="#52cbf6"/><rect x="251.5" y="95.5" width="8" height="8" fill="#52ccf6"/><rect x="259.5" y="95.5" width="8" height="8" fill="#52cdf6"/><rect x="267.5" y="95.5" width="8" height="8" fill="#52cdf6"/><rect x="275.5" y="95.5" width="8" height="8" fill="#52cef6"/><rect x="283.5" y="95.5" width="8" height="8" fill="#52cef6"/><rect x="291.5" y="95.5" width="8" height="8" fill="#52cff6"/><rect x="299.5" y="95.5" width="8" height="8" fill="#51d0f7"/><rect x="307.5" y="95.5" width="8" height="8" fill="#51d0f7"/><rect x="315.5" y="95.5" width="8" height="8" fill="#51d1f7"/><rect x="323.5" y="95.5" width="8" height="8" fill="#51d1f7"/><rect x="-4.5" y="103.5" width="8" height="8" fill="#51baf5"/><rect x="3.5" y="103.5" width="8" height="8" fill="#51baf5"/><rect x="11.5" y="103.5" width="8" height="8" fill="#51baf6"/><rect x="19.5" y="103.5" width="8" height="8" fill="#51baf6"/><rect x="27.5" y="103.5" width="8" height="8" fill="#51bbf6"/><rect x="35.5" y="103.5" width="8" height="8" fill="#51bbf6"/><rect x="43.5" y="103.5" width="8" height="8" fill="#51bbf6"/><rect x="51.5" y="103.5" width="8" height="8" fill="#51bbf6"/><rect x="59.5" y="103.5" width="8" height="8" fill="#51bcf6"/><rect x="67.5" y="103.5" width="8" height="8" fill="#51bcf6"/><rect x="75.5" y="103.5" width="8" height="8" fill="#51bcf6"/><rect x="83.5" y="103.5" width="8" height="8" fill="#51bbf6"/><rect x="91.5" y="103.5" width="8" height="8" fill="#51baf5"/><rect x="99.5" y="103.5" width="8" height="8" fill="#51b9f5"/><rect x="107.5" y="103.5" width="8" height="8" fill="#51b8f5"/><rect x="115.5" y="103.5" width="8" height="8" fill="#51b6f5"/><rect x="123.5" y="103.5" width="8" height="8" fill="#50acf5"/><rect x="131.5" y="103.5" width="8" height="8" fill="#4d92f2"/><rect x="139.5" y="103.5" width="8" height="8" fill="#4b72f0"/><rect x="147.5" y="103.5" width="8" height="8" fill="#515bf0"/><rect x="155.5" y="103.5" width="8" height="8" fill="#515bf0"/><rect x="163.5" y="103.5" width="8" height="8" fill="#515bf0"/><rect x="171.5" y="103.5" width="8" height="8" fill="#515bf0"/><rect x="179.5" y="103.5" width="8" height="8" fill="#4b72f0"/><rect x="187.5" y="103.5" width="8" height="8" fill="#4d92f2"/><rect x="195.5" y="103.5" width="8" height="8" fill="#50acf5"/><rect x="203.5" y="103.5" width="8" height="8" fill="#52c1f6"/><rect x="211.5" y="103.5" width="8" height="8" fill="#52c4f6"/><rect x="219.5" y="103.5" width="8" height="8" fill="#52c7f6"/><rect x="227.5" y="103.5" width="8" height="8" fill="#52c9f6"/><rect x="235.5" y="103.5" width="8" height="8" fill="#52ccf6"/><rect x="243.5" y="103.5" width="8" height="8" fill="#52cdf6"/><rect x="251.5" y="103.5" width="8" height="8" fill="#52cdf6"/><rect x="259.5" y="103.5" width="8" height="8" fill="#52cef6"/><rect x="267.5" y="103.5" width="8" height="8" fill="#52cff6"/><rect x="275.5" y="103.5" width="8" height="8" fill="#51cff7"/><rect x="283.5" y="103.5" width="8" height="8" fill="#51d0f7"/><rect x="291.5" y="103.5" width="8" height="8" fill="#51d0f7"/><rect x="299.5" y="103.5" width="8" height="8" fill="#51d1f7"/><rect x="307.5" y="103.5" width="8" height="8" fill="#51d1f7"/><rect x="315.5" y="103.5" width="8" height="8" fill="#51d2f7"/><rect x="323.5" y="103.5" width="8" height="8" fill="#51d2f7"/><rect x="-4.5" y="111.5" width="8" height="8" fill="#51baf6"/><rect x="3.5" y="111.5" width="8" height="8" fill="#51baf6"/><rect x="11.5" y="111.5" width="8" height="8" fill="#51bbf6"/><rect x="19.5" y="111.5" width="8" height="8" fill="#51bbf6"/><rect x="27.5" y="111.5" width="8" height="8" fill="#51bbf6"/><rect x="35.5" y="111.5" width="8" height="8" fill="#51bbf6"/><rect x="43.5" y="111.5" width="8" height="8" fill="#51bcf6"/><rect x="51.5" y="111.5" width="8" height="8" fill="#51bcf6"/><rect x="59.5" y="111.5" width="8" height="8" fill="#51bcf6"/><rect x="67.5" y="111.5" width="8" height="8" fill="#51bdf6"/><rect x="75.5" y="111.5" width="8" height="8" fill="#51bdf6"/><rect x="83.5" y="111.5" width="8" height="8" fill="#51bcf6"/><rect x="91.5" y="111.5" width="8" height="8" fill="#51bbf6"/><rect x="99.5" y="111.5" width="8" height="8" fill="#51b9f5"/><rect x="107.5" y="111.5" width="8" height="8" fill="#51b8f5"/><rect x="115.5" y="111.5" width="8" height="8" fill="#51b7f5"/><rect x="123.5" y="111.5" width="8" height="8" fill="#50b2f5"/><rect x="131.5" y="111.5" width="8" height="8" fill="#4c88f2"/><rect x="139.5" y="111.5" width="8" height="8" fill="#515bf0"/><rect x="147.5" y="111.5" width="8" height="8" fill="#554af0"/><rect x="155.5" y="111.5" width="8" height="8" fill="#554af0"/><rect x="163.5" y="111.5" width="8" height="8" fill="#554af0"/><rect x="171.5" y="111.5" width="8" height="8" fill="#554af0"/><rect x="179.5" y="111.5" width="8" height="8" fill="#515bf0"/><rect x="187.5" y="111.5" width="8" height="8" fill="#4c88f2"/><rect x="195.5" y="111.5" width="8" height="8" fill="#51baf6"/><rect x="203.5" y="111.5" width="8" height="8" fill="#52c2f6"/><rect x="211.5" y="111.5" width="8" height="8" fill="#52c5f6"/><rect x="219.5" y="111.5" width="8" height="8" fill="#52c8f6"/><rect x="227.5" y="111.5" width="8" height="8" fill="#52cbf6"/><rect x="235.5" y="111.5" width="8" height="8" fill="#52cef6"/><rect x="243.5" y="111.5" width="8" height="8" fill="#52cef6"/><rect x="251.5" y="111.5" width="8" height="8" fill="#52cff6"/><rect x="259.5" y="111.5" width="8" height="8" fill="#51cff7"/><rect x="267.5" y="111.5" width="8" height="8" fill="#51d0f7"/><rect x="275.5" y="111.5" width="8" height="8" fill="#51d0f7"/><rect x="283.5" y="111.5" width="8" height="8" fill="#51d1f7"/><rect x="291.5" y="111.5" width="8" height="8" fill="#51d2f7"/><rect x="299.5" y="111.5" width="8" height="8" fill="#51d2f7"/><rect x="307.5" y="111.5" width="8" height="8" fill="#51d3f7"/><rect x="315.5" y="111.5" width="8" height="8" fill="#51d3f7"/><rect x="323.5" y="111.5" width="8" height="8" fill="#51d3f7"/><rect x="-4.5" y="119.5" width="8" height="8" fill="#51bbf6"/><rect x="3.5" y="119.5" width="8" height="8" fill="#51bbf6"/><rect x="11.5" y="119.5" width="8" height="8" fill="#51bbf6"/><rect x="19.5" y="119.5" width="8" height="8" fill="#51bcf6"/><rect x="27.5" y="119.5" width="8" height="8" fill="#51bcf6"/><rect x="35.5" y="119.5" width="8" height="8" fill="#51bcf6"/><rect x="43.5" y="119.5" width="8" height="8" fill="#51bdf6"/><rect x="51.5" y="119.5" width="8" height="8" fill="#51bdf6"/><rect x="59.5" y="119.5" width="8" height="8" fill="#51bdf6"/><rect x="67.5" y="119.5" width="8" height="8" fill="#51bef6"/><rect x="75.5" y="119.5" width="8" height="8" fill="#51bef6"/><rect x="83.5" y="119.5" width="8" height="8" fill="#51bdf6"/><rect x="91.5" y="119.5" width="8" height="8" fill="#51bcf6"/><rect x="99.5" y="119.5" width="8" height="8" fill="#51bbf6"/><rect x="107.5" y="119.5" width="8" height="8" fill="#52c8f6"/><rect x="115.5" y="119.5" width="8" height="8" fill="#52c2f6"/><rect x="123.5" y="119.5" width="8" height="8" fill="#51baf6"/><rect x="131.5" y="119.5" width="8" height="8" fill="#4c88f2"/><rect x="139.5" y="119.5" width="8" height="8" fill="#544ff0"/><rect x="147.5" y="119.5" width="8" height="8" fill="#583ef0"/><rect x="155.5" y="119.5" width="8" height="8" fill="#583ef0"/><rect x="163.5" y="119.5" width="8" height="8" fill="#583ef0"/><rect x="171.5" y="119.5" width="8" height="8" fill="#583ef0"/><rect x="179.5" y="119.5" width="8" height="8" fill="#544ff0"/><rect x="187.5" y="119.5" width="8" height="8" fill="#4d92f2"/><rect x="195.5" y="119.5" width="8" height="8" fill="#52cef6"/><rect x="203.5" y="119.5" width="8" height="8" fill="#51d6f7"/><rect x="211.5" y="119.5" width="8" height="8" fill="#52c8f6"/><rect x="219.5" y="119.5" width="8" height="8" fill="#52cbf6"/><rect x="227.5" y="119.5" width="8" height="8" fill="#52cdf6"/><rect x="235.5" y="119.5" width="8" height="8" fill="#51d0f7"/><rect x="243.5" y="119.5" width="8" height="8" fill="#51d0f7"/><rect x="251.5" y="119.5" width="8" height="8" fill="#51d1f7"/><rect x="259.5" y="119.5" width="8" height="8" fill="#51d1f7"/><rect x="267.5" y="119.5" width="8" height="8" fill="#51d2f7"/><rect x="275.5" y="119.5" width="8" height="8" fill="#51d2f7"/><rect x="283.5" y="119.5" width="8" height="8" fill="#51d3f7"/><rect x="291.5" y="119.5" width="8" height="8" fill="#51d3f7"/><rect x="299.5" y="119.5" width="8" height="8" fill="#51d4f7"/><rect x="307.5" y="119.5" width="8" height="8" fill="#51d4f7"/><rect x="315.5" y="119.5" width="8" height="8" fill="#51d5f7"/><rect x="323.5" y="119.5" width="8" height="8" fill="#51d5f7"/><rect x="-4.5" y="127.5" width="8" height="8" fill="#51bbf6"/><rect x="3.5" y="127.5" width="8" height="8" fill="#51bcf6"/><rect x="11.5" y="127.5" width="8" height="8" fill="#51bcf6"/><rect x="19.5" y="127.5" width="8" height="8" fill="#51bcf6"/><rect x="27.5" y="127.5" width="8" height="8" fill="#51bdf6"/><rect x="35.5" y="127.5" width="8" height="8" fill="#51bdf6"/><rect x="43.5" y="127.5" width="8" height="8" fill="#51bdf6"/><rect x="51.5" y="127.5" width="8" height="8" fill="#51bef6"/><rect x="59.5" y="127.5" width="8" height="8" fill="#51bef6"/><rect x="67.5" y="127.5" width="8" height="8" fill="#51bff6"/><rect x="75.5" y="127.5" width="8" height="8" fill="#51bff6"/><rect x="83.5" y="127.5" width="8" height="8" fill="#51bef6"/><rect x="91.5" y="127.5" width="8" height="8" fill="#51bef6"/><rect x="99.5" y="127.5" width="8" height="8" fill="#51d6f7"/><rect x="107.5" y="127.5" width="8" height="8" fill="#50e4f8"/><rect x="115.5" y="127.5" width="8" height="8" fill="#50ece1"/><rect x="123.5" y="127.5" width="8" height="8" fill="#54eab4"/><rect x="131.5" y="127.5" width="8" height="8" fill="#6ee25a"/><rect x="139.5" y="127.5" width="8" height="8" fill="#f5d740"/><rect x="147.5" y="127.5" width="8" height="8" fill="#515bf0"/><rect x="155.5" y="127.5" width="8" height="8" fill="#583ef0"/><rect x="163.5" y="127.5" width="8" height="8" fill="#583ef0"/><rect x="171.5" y="127.5" width="8" height="8" fill="#583ef0"/><rect x="179.5" y="127.5" width="8" height="8" fill="#515bf0"/><rect x="187.5" y="127.5" width="8" height="8" fill="#ff5a40"/><rect x="195.5" y="127.5" width="8" height="8" fill="#fab640"/><rect x="203.5" y="127.5" width="8" height="8" fill="#96e34d"/><rect x="211.5" y="127.5" width="8" height="8" fill="#54eab4"/><rect x="219.5" y="127.5" width="8" height="8" fill="#50ece1"/><rect x="227.5" y="127.5" width="8" height="8" fill="#51d0f7"/><rect x="235.5" y="127.5" width="8" height="8" fill="#51d2f7"/><rect x="243.5" y="127.5" width="8" height="8" fill="#51d3f7"/><rect x="251.5" y="127.5" width="8" height="8" fill="#51d3f7"/><rect x="259.5" y="127.5" width="8" height="8" fill="#51d3f7"/><rect x="267.5" y="127.5" width="8" height="8" fill="#51d4f7"/><rect x="275.5" y="127.5" width="8" height="8" fill="#51d4f7"/><rect x="283.5" y="127.5" width="8" height="8" fill="#51d5f7"/><rect x="291.5" y="127.5" width="8" height="8" fill="#51d5f7"/><rect x="299.5" y="127.5" width="8" height="8" fill="#51d6f7"/><rect x="307.5" y="127.5" width="8" height="8" fill="#51d6f7"/><rect x="315.5" y="127.5" width="8" height="8" fill="#51d7f7"/><rect x="323.5" y="127.5" width="8" height="8" fill="#51d7f7"/><rect x="-4.5" y="135.5" width="8" height="8" fill="#51bcf6"/><rect x="3.5" y="135.5" width="8" height="8" fill="#51bcf6"/><rect x="11.5" y="135.5" width="8" height="8" fill="#51bdf6"/><rect x="19.5" y="135.5" width="8" height="8" fill="#51bdf6"/><rect x="27.5" y="135.5" width="8" height="8" fill="#51bdf6"/><rect x="35.5" y="135.5" width="8" height="8" fill="#51bef6"/><rect x="43.5" y="135.5" width="8" height="8" fill="#51bef6"/><rect x="51.5" y="135.5" width="8" height="8" fill="#51bff6"/><rect x="59.5" y="135.5" width="8" height="8" fill="#51bff6"/><rect x="67.5" y="135.5" width="8" height="8" fill="#51c0f6"/><rect x="75.5" y="135.5" width="8" height="8" fill="#51c0f6"/><rect x="83.5" y="135.5" width="8" height="8" fill="#51c0f6"/><rect x="91.5" y="135.5" width="8" height="8" fill="#51bff6"/><rect x="99.5" y="135.5" width="8" height="8" fill="#51d6f7"/><rect x="107.5" y="135.5" width="8" height="8" fill="#50e4f8"/><rect x="115.5" y="135.5" width="8" height="8" fill="#54eab4"/><rect x="123.5" y="135.5" width="8" height="8" fill="#6ee25a"/><rect x="131.5" y="135.5" width="8" height="8" fill="#bee440"/><rect x="139.5" y="135.5" width="8" height="8" fill="#fab640"/><rect x="147.5" y="135.5" width="8" height="8" fill="#ff9640"/><rect x="155.5" y="135.5" width="8" height="8" fill="#ff9640"/><rect x="163.5" y="135.5" width="8" height="8" fill="#583ef0"/><rect x="171.5" y="135.5" width="8" height="8" fill="#ff5a40"/><rect x="179.5" y="135.5" width="8" height="8" fill="#ff5a40"/><rect x="187.5" y="135.5" width="8" height="8" fill="#ff5a40"/><rect x="195.5" y="135.5" width="8" height="8" fill="#ff7840"/><rect x="203.5" y="135.5" width="8" height="8" fill="#dade40"/><rect x="211.5" y="135.5" width="8" height="8" fill="#6ee25a"/><rect x="219.5" y="135.5" width="8" height="8" fill="#54eab4"/><rect x="227.5" y="135.5" width="8" height="8" fill="#51d2f7"/><rect x="235.5" y="135.5" width="8" height="8" fill="#51d4f7"/><rect x="243.5" y="135.5" width="8" height="8" fill="#51d5f7"/><rect x="251.5" y="135.5" width="8" height="8" fill="#51d5f7"/><rect x="259.5" y="135.5" width="8" height="8" fill="#51d5f7"/><rect x="267.5" y="135.5" width="8" height="8" fill="#51d6f7"/><rect x="275.5" y="135.5" width="8" height="8" fill="#51d6f7"/><rect x="283.5" y="135.5" width="8" height="8" fill="#51d7f7"/><rect x="291.5" y="135.5" width="8" height="8" fill="#51d7f7"/><rect x="299.5" y="135.5" width="8" height="8" fill="#51d7f7"/><rect x="307.5" y="135.5" width="8" height="8" fill="#51d8f7"/><rect x="315.5" y="135.5" width="8" height="8" fill="#51d8f7"/><rect x="323.5" y="135.5" width="8" height="8" fill="#51d8f7"/><rect x="-4.5" y="143.5" width="8" height="8" fill="#51bcf6"/><rect x="3.5" y="143.5" width="8" height="8" fill="#51bdf6"/><rect x="11.5" y="143.5" width="8" height="8" fill="#51bdf6"/><rect x="19.5" y="143.5" width="8" height="8" fill="#51bef6"/><rect x="27.5" y="143.5" width="8" height="8" fill="#51bef6"/><rect x="35.5" y="143.5" width="8" height="8" fill="#51bff6"/><rect x="43.5" y="143.5" width="8" height="8" fill="#51bff6"/><rect x="51.5" y="143.5" width="8" height="8" fill="#51c0f6"/><rect x="59.5" y="143.5" width="8" height="8" fill="#51c0f6"/><rect x="67.5" y="143.5" width="8" height="8" fill="#51c1f6"/><rect x="75.5" y="143.5" width="8" height="8" fill="#52c1f6"/><rect x="83.5" y="143.5" width="8" height="8" fill="#52c1f6"/><rect x="91.5" y="143.5" width="8" height="8" fill="#52c1f6"/><rect x="99.5" y="143.5" width="8" height="8" fill="#51d6f7"/><rect x="107.5" y="143.5" width="8" height="8" fill="#50e4f8"/><rect x="115.5" y="143.5" width="8" height="8" fill="#54eab4"/><rect x="123.5" y="143.5" width="8" height="8" fill="#6ee25a"/><rect x="131.5" y="143.5" width="8" height="8" fill="#dade40"/><rect x="139.5" y="143.5" width="8" height="8" fill="#ff7840"/><rect x="147.5" y="143.5" width="8" height="8" fill="#ff9640"/><rect x="155.5" y="143.5" width="8" height="8" fill="#ff9640"/><rect x="163.5" y="143.5" width="8" height="8" fill="#ff9640"/><rect x="171.5" y="143.5" width="8" height="8" fill="#ff5a40"/><rect x="179.5" y="143.5" width="8" height="8" fill="#ff5a40"/><rect x="187.5" y="143.5" width="8" height="8" fill="#ff5a40"/><rect x="195.5" y="143.5" width="8" height="8" fill="#ff7840"/><rect x="203.5" y="143.5" width="8" height="8" fill="#dade40"/><rect x="211.5" y="143.5" width="8" height="8" fill="#6ee25a"/><rect x="219.5" y="143.5" width="8" height="8" fill="#54eab4"/><rect x="227.5" y="143.5" width="8" height="8" fill="#51d4f7"/><rect x="235.5" y="143.5" width="8" height="8" fill="#51d7f7"/><rect x="243.5" y="143.5" width="8" height="8" fill="#51d7f7"/><rect x="251.5" y="143.5" width="8" height="8" fill="#51d7f7"/><rect x="259.5" y="143.5" width="8" height="8" fill="#51d8f7"/><rect x="267.5" y="143.5" width="8" height="8" fill="#51d8f7"/><rect x="275.5" y="143.5" width="8" height="8" fill="#51d8f7"/><rect x="283.5" y="143.5" width="8" height="8" fill="#51d9f7"/><rect x="291.5" y="143.5" width="8" height="8" fill="#51d9f7"/><rect x="299.5" y="143.5" width="8" height="8" fill="#51d9f7"/><rect x="307.5" y="143.5" width="8" height="8" fill="#51daf7"/><rect x="315.5" y="143.5" width="8" height="8" fill="#51daf7"/><rect x="323.5" y="143.5" width="8" height="8" fill="#51daf7"/><rect x="-4.5" y="151.5" width="8" height="8" fill="#51bdf6"/><rect x="3.5" y="151.5" width="8" height="8" fill="#51bdf6"/><rect x="11.5" y="151.5" width="8" height="8" fill="#51bef6"/><rect x="19.5" y="151.5" width="8" height="8" fill="#51bef6"/><rect x="27.5" y="151.5" width="8" height="8" fill="#51bff6"/><rect x="35.5" y="151.5" width="8" height="8" fill="#51c0f6"/><rect x="43.5" y="151.5" width="8" height="8" fill="#51c0f6"/><rect x="51.5" y="151.5" width="8" height="8" fill="#51c1f6"/><rect x="59.5" y="151.5" width="8" height="8" fill="#52c1f6"/><rect x="67.5" y="151.5" width="8" height="8" fill="#52c2f6"/><rect x="75.5" y="151.5" width="8" height="8" fill="#52c2f6"/><rect x="83.5" y="151.5" width="8" height="8" fill="#52c3f6"/><rect x="91.5" y="151.5" width="8" height="8" fill="#52c3f6"/><rect x="99.5" y="151.5" width="8" height="8" fill="#51d6f7"/><rect x="107.5" y="151.5" width="8" height="8" fill="#50e4f8"/><rect x="115.5" y="151.5" width="8" height="8" fill="#54eab4"/><rect x="123.5" y="151.5" width="8" height="8" fill="#6ee25a"/><rect x="131.5" y="151.5" width="8" height="8" fill="#f5d740"/><rect x="139.5" y="151.5" width="8" height="8" fill="#ff7840"/><rect x="147.5" y="151.5" width="8" height="8" fill="#ff7840"/><rect x="155.5" y="151.5" width="8" height="8" fill="#ff9640"/><rect x="163.5" y="151.5" width="8" height="8" fill="#ff9640"/><rect x="171.5" y="151.5" width="8" height="8" fill="#ff9640"/><rect x="179.5" y="151.5" width="8" height="8" fill="#ff5a40"/><rect x="187.5" y="151.5" width="8" height="8" fill="#ff5a40"/><rect x="195.5" y="151.5" width="8" height="8" fill="#ff7840"/><rect x="203.5" y="151.5" width="8" height="8" fill="#dade40"/><rect x="211.5" y="151.5" width="8" height="8" fill="#6ee25a"/><rect x="219.5" y="151.5" width="8" height="8" fill="#54eab4"/><rect x="227.5" y="151.5" width="8" height="8" fill="#51d7f7"/><rect x="235.5" y="151.5" width="8" height="8" fill="#51d9f7"/><rect x="243.5" y="151.5" width="8" height="8" fill="#51d9f7"/><rect x="251.5" y="151.5" width="8" height="8" fill="#51d9f7"/><rect x="259.5" y="151.5" width="8" height="8" fill="#51daf7"/><rect x="267.5" y="151.5" width="8" height="8" fill="#51daf7"/><rect x="275.5" y="151.5" width="8" height="8" fill="#51daf7"/><rect x="283.5" y="151.5" width="8" height="8" fill="#51daf7"/><rect x="291.5" y="151.5" width="8" height="8" fill="#51dbf7"/><rect x="299.5" y="151.5" width="8" height="8" fill="#51dbf7"/><rect x="307.5" y="151.5" width="8" height="8" fill="#51dbf7"/><rect x="315.5" y="151.5" width="8" height="8" fill="#51dcf7"/><rect x="323.5" y="151.5" width="8" height="8" fill="#51dcf7"/><rect x="-4.5" y="159.5" width="8" height="8" fill="#51bdf6"/><rect x="3.5" y="159.5" width="8" height="8" fill="#51bef6"/><rect x="11.5" y="159.5" width="8" height="8" fill="#51bff6"/><rect x="19.5" y="159.5" width="8" height="8" fill="#51bff6"/><rect x="27.5" y="159.5" width="8" height="8" fill="#51c0f6"/><rect x="35.5" y="159.5" width="8" height="8" fill="#51c0f6"/><rect x="43.5" y="159.5" width="8" height="8" fill="#52c1f6"/><rect x="51.5" y="159.5" width="8" height="8" fill="#52c2f6"/><rect x="59.5" y="159.5" width="8" height="8" fill="#52c2f6"/><rect x="67.5" y="159.5" width="8" height="8" fill="#52c3f6"/><rect x="75.5" y="159.5" width="8" height="8" fill="#52c4f6"/><rect x="83.5" y="159.5" width="8" height="8" fill="#52c4f6"/><rect x="91.5" y="159.5" width="8" height="8" fill="#52c4f6"/><rect x="99.5" y="159.5" width="8" height="8" fill="#51d6f7"/><rect x="107.5" y="159.5" width="8" height="8" fill="#50e4f8"/><rect x="115.5" y="159.5" width="8" height="8" fill="#54eab4"/><rect x="123.5" y="159.5" width="8" height="8" fill="#6ee25a"/><rect x="131.5" y="159.5" width="8" height="8" fill="#ff9640"/><rect x="139.5" y="159.5" width="8" height="8" fill="#ff5a40"/><rect x="147.5" y="159.5" width="8" height="8" fill="#ff7840"/><rect x="155.5" y="159.5" width="8" height="8" fill="#ff9640"/><rect x="163.5" y="159.5" width="8" height="8" fill="#ff9640"/><rect x="171.5" y="159.5" width="8" height="8" fill="#ff9640"/><rect x="179.5" y="159.5" width="8" height="8" fill="#ff5a40"/><rect x="187.5" y="159.5" width="8" height="8" fill="#ff5a40"/><rect x="195.5" y="159.5" width="8" height="8" fill="#ff9640"/><rect x="203.5" y="159.5" width="8" height="8" fill="#bee440"/><rect x="211.5" y="159.5" width="8" height="8" fill="#61e687"/><rect x="219.5" y="159.5" width="8" height="8" fill="#50ece1"/><rect x="227.5" y="159.5" width="8" height="8" fill="#51d9f7"/><rect x="235.5" y="159.5" width="8" height="8" fill="#51dbf7"/><rect x="243.5" y="159.5" width="8" height="8" fill="#51dbf7"/><rect x="251.5" y="159.5" width="8" height="8" fill="#51dbf7"/><rect x="259.5" y="159.5" width="8" height="8" fill="#51dcf7"/><rect x="267.5" y="159.5" width="8" height="8" fill="#51dcf7"/><rect x="275.5" y="159.5" width="8" height="8" fill="#51dcf7"/><rect x="283.5" y="159.5" width="8" height="8" fill="#51dcf7"/><rect x="291.5" y="159.5" width="8" height="8" fill="#51ddf7"/><rect x="299.5" y="159.5" width="8" height="8" fill="#51ddf7"/><rect x="307.5" y="159.5" width="8" height="8" fill="#50ddf8"/><rect x="315.5" y="159.5" width="8" height="8" fill="#50ddf8"/><rect x="323.5" y="159.5" width="8" height="8" fill="#50ddf8"/><rect x="-4.5" y="167.5" width="8" height="8" fill="#51bef6"/><rect x="3.5" y="167.5" width="8" height="8" fill="#51bff6"/><rect x="11.5" y="167.5" width="8" height="8" fill="#51bff6"/><rect x="19.5" y="167.5" width="8" height="8" fill="#51c0f6"/><rect x="27.5" y="167.5" width="8" height="8" fill="#51c1f6"/><rect x="35.5" y="167.5" width="8" height="8" fill="#52c1f6"/><rect x="43.5" y="167.5" width="8" height="8" fill="#52c2f6"/><rect x="51.5" y="167.5" width="8" height="8" fill="#52c3f6"/><rect x="59.5" y="167.5" width="8" height="8" fill="#52c3f6"/><rect x="67.5" y="167.5" width="8" height="8" fill="#52c4f6"/><rect x="75.5" y="167.5" width="8" height="8" fill="#52c5f6"/><rect x="83.5" y="167.5" width="8" height="8" fill="#52c5f6"/><rect x="91.5" y="167.5" width="8" height="8" fill="#52c6f6"/><rect x="99.5" y="167.5" width="8" height="8" fill="#51d6f7"/><rect x="107.5" y="167.5" width="8" height="8" fill="#50e4f8"/><rect x="115.5" y="167.5" width="8" height="8" fill="#50ece1"/><rect x="123.5" y="167.5" width="8" height="8" fill="#61e687"/><rect x="131.5" y="167.5" width="8" height="8" fill="#ff7840"/><rect x="139.5" y="167.5" width="8" height="8" fill="#ff5a40"/><rect x="147.5" y="167.5" width="8" height="8" fill="#ff9640"/><rect x="155.5" y="167.5" width="8" height="8" fill="#fab640"/><rect x="163.5" y="167.5" width="8" height="8" fill="#fab640"/><rect x="171.5" y="167.5" width="8" height="8" fill="#ff9640"/><rect x="179.5" y="167.5" width="8" height="8" fill="#ff7840"/><rect x="187.5" y="167.5" width="8" height="8" fill="#f5d740"/><rect x="195.5" y="167.5" width="8" height="8" fill="#bee440"/><rect x="203.5" y="167.5" width="8" height="8" fill="#6ee25a"/><rect x="211.5" y="167.5" width="8" height="8" fill="#50ece1"/><rect x="219.5" y="167.5" width="8" height="8" fill="#50e4f8"/><rect x="227.5" y="167.5" width="8" height="8" fill="#51dbf7"/><rect x="235.5" y="167.5" width="8" height="8" fill="#50ddf8"/><rect x="243.5" y="167.5" width="8" height="8" fill="#50ddf8"/><rect x="251.5" y="167.5" width="8" height="8" fill="#50def8"/><rect x="259.5" y="167.5" width="8" height="8" fill="#50def8"/><rect x="267.5" y="167.5" width="8" height="8" fill="#50def8"/><rect x="275.5" y="167.5" width="8" height="8" fill="#50def8"/><rect x="283.5" y="167.5" width="8" height="8" fill="#50def8"/><rect x="291.5" y="167.5" width="8" height="8" fill="#50def8"/><rect x="299.5" y="167.5" width="8" height="8" fill="#50dff8"/><rect x="307.5" y="167.5" width="8" height="8" fill="#50dff8"/><rect x="315.5" y="167.5" width="8" height="8" fill="#50dff8"/><rect x="323.5" y="167.5" width="8" height="8" fill="#50dff8"/><rect x="-4.5" y="175.5" width="8" height="8" fill="#51bef6"/><rect x="3.5" y="175.5" width="8" height="8" fill="#51bff6"/><rect x="11.5" y="175.5" width="8" height="8" fill="#51c0f6"/><rect x="19.5" y="175.5" width="8" height="8" fill="#51c1f6"/><rect x="27.5" y="175.5" width="8" height="8" fill="#52c1f6"/><rect x="35.5" y="175.5" width="8" height="8" fill="#52c2f6"/><rect x="43.5" y="175.5" width="8" height="8" fill="#52c3f6"/><rect x="51.5" y="175.5" width="8" height="8" fill="#52c4f6"/><rect x="59.5" y="175.5" width="8" height="8" fill="#52c4f6"/><rect x="67.5" y="175.5" width="8" height="8" fill="#52c5f6"/><rect x="75.5" y="175.5" width="8" height="8" fill="#52c6f6"/><rect x="83.5" y="175.5" width="8" height="8" fill="#52c7f6"/><rect x="91.5" y="175.5" width="8" height="8" fill="#52c8f6"/><rect x="99.5" y="175.5" width="8" height="8" fill="#51d6f7"/><rect x="107.5" y="175.5" width="8" height="8" fill="#51d6f7"/><rect x="115.5" y="175.5" width="8" height="8" fill="#52c8f6"/><rect x="123.5" y="175.5" width="8" height="8" fill="#61e687"/><rect x="131.5" y="175.5" width="8" height="8" fill="#f5d740"/><rect x="139.5" y="175.5" width="8" height="8" fill="#ff9640"/><rect x="147.5" y="175.5" width="8" height="8" fill="#ff5a40"/><rect x="155.5" y="175.5" width="8" height="8" fill="#ff5a40"/><rect x="163.5" y="175.5" width="8" height="8" fill="#ff9640"/><rect x="171.5" y="175.5" width="8" height="8" fill="#f5d740"/><rect x="179.5" y="175.5" width="8" height="8" fill="#fab640"/><rect x="187.5" y="175.5" width="8" height="8" fill="#dade40"/><rect x="195.5" y="175.5" width="8" height="8" fill="#96e34d"/><rect x="203.5" y="175.5" width="8" height="8" fill="#61e687"/><rect x="211.5" y="175.5" width="8" height="8" fill="#50ece1"/><rect x="219.5" y="175.5" width="8" height="8" fill="#50e4f8"/><rect x="227.5" y="175.5" width="8" height="8" fill="#50def8"/><rect x="235.5" y="175.5" width="8" height="8" fill="#50e0f8"/><rect x="243.5" y="175.5" width="8" height="8" fill="#50e0f8"/><rect x="251.5" y="175.5" width="8" height="8" fill="#50e0f8"/><rect x="259.5" y="175.5" width="8" height="8" fill="#50e0f8"/><rect x="267.5" y="175.5" width="8" height="8" fill="#50e0f8"/><rect x="275.5" y="175.5" width="8" height="8" fill="#50e0f8"/><rect x="283.5" y="175.5" width="8" height="8" fill="#50e0f8"/><rect x="291.5" y="175.5" width="8" height="8" fill="#50e0f8"/><rect x="299.5" y="175.5" width="8" height="8" fill="#50e0f8"/><rect x="307.5" y="175.5" width="8" height="8" fill="#50e1f8"/><rect x="315.5" y="175.5" width="8" height="8" fill="#50e1f8"/><rect x="323.5" y="175.5" width="8" height="8" fill="#50e1f8"/><rect x="-4.5" y="183.5" width="8" height="8" fill="#51bff6"/><rect x="3.5" y="183.5" width="8" height="8" fill="#51c0f6"/><rect x="11.5" y="183.5" width="8" height="8" fill="#51c1f6"/><rect x="19.5" y="183.5" width="8" height="8" fill="#52c1f6"/><rect x="27.5" y="183.5" width="8" height="8" fill="#52c2f6"/><rect x="35.5" y="183.5" width="8" height="8" fill="#52c3f6"/><rect x="43.5" y="183.5" width="8" height="8" fill="#52c4f6"/><rect x="51.5" y="183.5" width="8" height="8" fill="#52c5f6"/><rect x="59.5" y="183.5" width="8" height="8" fill="#52c5f6"/><rect x="67.5" y="183.5" width="8" height="8" fill="#52c6f6"/><rect x="75.5" y="183.5" width="8" height="8" fill="#52c7f6"/><rect x="83.5" y="183.5" width="8" height="8" fill="#52c8f6"/><rect x="91.5" y="183.5" width="8" height="8" fill="#52c9f6"/><rect x="99.5" y="183.5" width="8" height="8" fill="#51d6f7"/><rect x="107.5" y="183.5" width="8" height="8" fill="#51d6f7"/><rect x="115.5" y="183.5" width="8" height="8" fill="#50acf5"/><rect x="123.5" y="183.5" width="8" height="8" fill="#50e4f8"/><rect x="131.5" y="183.5" width="8" height="8" fill="#6ee25a"/><rect x="139.5" y="183.5" width="8" height="8" fill="#f5d740"/><rect x="147.5" y="183.5" width="8" height="8" fill="#ff7840"/><rect x="155.5" y="183.5" width="8" height="8" fill="#ff5a40"/><rect x="163.5" y="183.5" width="8" height="8" fill="#ff5a40"/><rect x="171.5" y="183.5" width="8" height="8" fill="#ff9640"/><rect x="179.5" y="183.5" width="8" height="8" fill="#f5d740"/><rect x="187.5" y="183.5" width="8" height="8" fill="#bee440"/><rect x="195.5" y="183.5" width="8" height="8" fill="#6ee25a"/><rect x="203.5" y="183.5" width="8" height="8" fill="#61e687"/><rect x="211.5" y="183.5" width="8" height="8" fill="#50ece1"/><rect x="219.5" y="183.5" width="8" height="8" fill="#50e4f8"/><rect x="227.5" y="183.5" width="8" height="8" fill="#50e0f8"/><rect x="235.5" y="183.5" width="8" height="8" fill="#50e2f8"/><rect x="243.5" y="183.5" width="8" height="8" fill="#50e2f8"/><rect x="251.5" y="183.5" width="8" height="8" fill="#50e2f8"/><rect x="259.5" y="183.5" width="8" height="8" fill="#50e2f8"/><rect x="267.5" y="183.5" width="8" height="8" fill="#50e2f8"/><rect x="275.5" y="183.5" width="8" height="8" fill="#50e2f8"/><rect x="283.5" y="183.5" width="8" height="8" fill="#50e2f8"/><rect x="291.5" y="183.5" width="8" height="8" fill="#50e2f8"/><rect x="299.5" y="183.5" width="8" height="8" fill="#50e2f8"/><rect x="307.5" y="183.5" width="8" height="8" fill="#50e2f8"/><rect x="315.5" y="183.5" width="8" height="8" fill="#50e2f8"/><rect x="323.5" y="183.5" width="8" height="8" fill="#50e2f8"/><rect x="-4.5" y="191.5" width="8" height="8" fill="#51c0f6"/><rect x="3.5" y="191.5" width="8" height="8" fill="#51c0f6"/><rect x="11.5" y="191.5" width="8" height="8" fill="#52c1f6"/><rect x="19.5" y="191.5" width="8" height="8" fill="#52c2f6"/><rect x="27.5" y="191.5" width="8" height="8" fill="#52c3f6"/><rect x="35.5" y="191.5" width="8" height="8" fill="#52c4f6"/><rect x="43.5" y="191.5" width="8" height="8" fill="#52c5f6"/><rect x="51.5" y="191.5" width="8" height="8" fill="#52c5f6"/><rect x="59.5" y="191.5" width="8" height="8" fill="#52c6f6"/><rect x="67.5" y="191.5" width="8" height="8" fill="#52c7f6"/><rect x="75.5" y="191.5" width="8" height="8" fill="#52c8f6"/><rect x="83.5" y="191.5" width="8" height="8" fill="#52c9f6"/><rect x="91.5" y="191.5" width="8" height="8" fill="#52cbf6"/><rect x="99.5" y="191.5" width="8" height="8" fill="#51d6f7"/><rect x="107.5" y="191.5" width="8" height="8" fill="#52c8f6"/><rect x="115.5" y="191.5" width="8" height="8" fill="#4fa2f4"/><rect x="123.5" y="191.5" width="8" height="8" fill="#52c8f6"/><rect x="131.5" y="191.5" width="8" height="8" fill="#54eab4"/><rect x="139.5" y="191.5" width="8" height="8" fill="#dade40"/><rect x="147.5" y="191.5" width="8" height="8" fill="#fab640"/><rect x="155.5" y="191.5" width="8" height="8" fill="#ff7840"/><rect x="163.5" y="191.5" width="8" height="8" fill="#ff5a40"/><rect x="171.5" y="191.5" width="8" height="8" fill="#ff9640"/><rect x="179.5" y="191.5" width="8" height="8" fill="#dade40"/><rect x="187.5" y="191.5" width="8" height="8" fill="#bee440"/><rect x="195.5" y="191.5" width="8" height="8" fill="#6ee25a"/><rect x="203.5" y="191.5" width="8" height="8" fill="#54eab4"/><rect x="211.5" y="191.5" width="8" height="8" fill="#50ece1"/><rect x="219.5" y="191.5" width="8" height="8" fill="#50e4f8"/><rect x="227.5" y="191.5" width="8" height="8" fill="#50e3f8"/><rect x="235.5" y="191.5" width="8" height="8" fill="#50e4f8"/><rect x="243.5" y="191.5" width="8" height="8" fill="#50e4f8"/><rect x="251.5" y="191.5" width="8" height="8" fill="#50e4f8"/><rect x="259.5" y="191.5" width="8" height="8" fill="#50e4f8"/><rect x="267.5" y="191.5" width="8" height="8" fill="#50e4f8"/><rect x="275.5" y="191.5" width="8" height="8" fill="#50e4f8"/><rect x="283.5" y="191.5" width="8" height="8" fill="#50e4f8"/><rect x="291.5" y="191.5" width="8" height="8" fill="#50e4f8"/><rect x="299.5" y="191.5" width="8" height="8" fill="#50e4f8"/><rect x="307.5" y="191.5" width="8" height="8" fill="#50e4f8"/><rect x="315.5" y="191.5" width="8" height="8" fill="#50e4f8"/><rect x="323.5" y="191.5" width="8" height="8" fill="#50e4f8"/><rect x="-4.5" y="199.5" width="8" height="8" fill="#51bff6"/><rect x="3.5" y="199.5" width="8" height="8" fill="#51c0f6"/><rect x="11.5" y="199.5" width="8" height="8" fill="#52c1f6"/><rect x="19.5" y="199.5" width="8" height="8" fill="#52c2f6"/><rect x="27.5" y="199.5" width="8" height="8" fill="#52c3f6"/><rect x="35.5" y="199.5" width="8" height="8" fill="#52c4f6"/><rect x="43.5" y="199.5" width="8" height="8" fill="#52c5f6"/><rect x="51.5" y="199.5" width="8" height="8" fill="#52c5f6"/><rect x="59.5" y="199.5" width="8" height="8" fill="#52c6f6"/><rect x="67.5" y="199.5" width="8" height="8" fill="#52c7f6"/><rect x="75.5" y="199.5" width="8" height="8" fill="#52c8f6"/><rect x="83.5" y="199.5" width="8" height="8" fill="#52c9f6"/><rect x="91.5" y="199.5" width="8" height="8" fill="#52cbf6"/><rect x="99.5" y="199.5" width="8" height="8" fill="#51d6f7"/><rect x="107.5" y="199.5" width="8" height="8" fill="#51d6f7"/><rect x="115.5" y="199.5" width="8" height="8" fill="#52c8f6"/><rect x="123.5" y="199.5" width="8" height="8" fill="#50e4f8"/><rect x="131.5" y="199.5" width="8" height="8" fill="#54eab4"/><rect x="139.5" y="199.5" width="8" height="8" fill="#96e34d"/><rect x="147.5" y="199.5" width="8" height="8" fill="#dade40"/><rect x="155.5" y="199.5" width="8" height="8" fill="#f5d740"/><rect x="163.5" y="199.5" width="8" height="8" fill="#fab640"/><rect x="171.5" y="199.5" width="8" height="8" fill="#f5d740"/><rect x="179.5" y="199.5" width="8" height="8" fill="#dade40"/><rect x="187.5" y="199.5" width="8" height="8" fill="#96e34d"/><rect x="195.5" y="199.5" width="8" height="8" fill="#6ee25a"/><rect x="203.5" y="199.5" width="8" height="8" fill="#54eab4"/><rect x="211.5" y="199.5" width="8" height="8" fill="#50ece1"/><rect x="219.5" y="199.5" width="8" height="8" fill="#50e4f8"/><rect x="227.5" y="199.5" width="8" height="8" fill="#50e3f8"/><rect x="235.5" y="199.5" width="8" height="8" fill="#50e4f8"/><rect x="243.5" y="199.5" width="8" height="8" fill="#50e4f8"/><rect x="251.5" y="199.5" width="8" height="8" fill="#50e4f8"/><rect x="259.5" y="199.5" width="8" height="8" fill="#50e4f8"/><rect x="267.5" y="199.5" width="8" height="8" fill="#50e4f8"/><rect x="275.5" y="199.5" width="8" height="8" fill="#50e4f8"/><rect x="283.5" y="199.5" width="8" height="8" fill="#50e4f8"/><rect x="291.5" y="199.5" width="8" height="8" fill="#50e4f8"/><rect x="299.5" y="199.5" width="8" height="8" fill="#50e4f8"/><rect x="307.5" y="199.5" width="8" height="8" fill="#50e4f8"/><rect x="315.5" y="199.5" width="8" height="8" fill="#50e4f8"/><rect x="323.5" y="199.5" width="8" height="8" fill="#50e4f8"/><rect x="-4.5" y="207.5" width="8" height="8" fill="#51bff6"/><rect x="3.5" y="207.5" width="8" height="8" fill="#51c0f6"/><rect x="11.5" y="207.5" width="8" height="8" fill="#52c1f6"/><rect x="19.5" y="207.5" width="8" height="8" fill="#52c2f6"/><rect x="27.5" y="207.5" width="8" height="8" fill="#52c3f6"/><rect x="35.5" y="207.5" width="8" height="8" fill="#52c4f6"/><rect x="43.5" y="207.5" width="8" height="8" fill="#52c4f6"/><rect x="51.5" y="207.5" width="8" height="8" fill="#52c5f6"/><rect x="59.5" y="207.5" width="8" height="8" fill="#52c6f6"/><rect x="67.5" y="207.5" width="8" height="8" fill="#52c7f6"/><rect x="75.5" y="207.5" width="8" height="8" fill="#52c8f6"/><rect x="83.5" y="207.5" width="8" height="8" fill="#52caf6"/><rect x="91.5" y="207.5" width="8" height="8" fill="#52cbf6"/><rect x="99.5" y="207.5" width="8" height="8" fill="#51d6f7"/><rect x="107.5" y="207.5" width="8" height="8" fill="#50e4f8"/><rect x="115.5" y="207.5" width="8" height="8" fill="#50e4f8"/><rect x="123.5" y="207.5" width="8" height="8" fill="#54eab4"/><rect x="131.5" y="207.5" width="8" height="8" fill="#61e687"/><rect x="139.5" y="207.5" width="8" height="8" fill="#6ee25a"/><rect x="147.5" y="207.5" width="8" height="8" fill="#96e34d"/><rect x="155.5" y="207.5" width="8" height="8" fill="#bee440"/><rect x="163.5" y="207.5" width="8" height="8" fill="#bee440"/><rect x="171.5" y="207.5" width="8" height="8" fill="#96e34d"/><rect x="179.5" y="207.5" width="8" height="8" fill="#96e34d"/><rect x="187.5" y="207.5" width="8" height="8" fill="#6ee25a"/><rect x="195.5" y="207.5" width="8" height="8" fill="#61e687"/><rect x="203.5" y="207.5" width="8" height="8" fill="#50ece1"/><rect x="211.5" y="207.5" width="8" height="8" fill="#50e4f8"/><rect x="219.5" y="207.5" width="8" height="8" fill="#50e4f8"/><rect x="227.5" y="207.5" width="8" height="8" fill="#50e3f8"/><rect x="235.5" y="207.5" width="8" height="8" fill="#50e4f8"/><rect x="243.5" y="207.5" width="8" height="8" fill="#50e4f8"/><rect x="251.5" y="207.5" width="8" height="8" fill="#50e4f8"/><rect x="259.5" y="207.5" width="8" height="8" fill="#50e4f8"/><rect x="267.5" y="207.5" width="8" height="8" fill="#50e4f8"/><rect x="275.5" y="207.5" width="8" height="8" fill="#50e4f8"/><rect x="283.5" y="207.5" width="8" height="8" fill="#50e4f8"/><rect x="291.5" y="207.5" width="8" height="8" fill="#50e4f8"/><rect x="299.5" y="207.5" width="8" height="8" fill="#50e4f8"/><rect x="307.5" y="207.5" width="8" height="8" fill="#50e4f7"/><rect x="315.5" y="207.5" width="8" height="8" fill="#50e4f7"/><rect x="323.5" y="207.5" width="8" height="8" fill="#50e4f7"/><rect x="-4.5" y="215.5" width="8" height="8" fill="#51bff6"/><rect x="3.5" y="215.5" width="8" height="8" fill="#51c0f6"/><rect x="11.5" y="215.5" width="8" height="8" fill="#51c1f6"/><rect x="19.5" y="215.5" width="8" height="8" fill="#52c2f6"/><rect x="27.5" y="215.5" width="8" height="8" fill="#52c3f6"/><rect x="35.5" y="215.5" width="8" height="8" fill="#52c4f6"/><rect x="43.5" y="215.5" width="8" height="8" fill="#52c4f6"/><rect x="51.5" y="215.5" width="8" height="8" fill="#52c5f6"/><rect x="59.5" y="215.5" width="8" height="8" fill="#52c6f6"/><rect x="67.5" y="215.5" width="8" height="8" fill="#52c7f6"/><rect x="75.5" y="215.5" width="8" height="8" fill="#52c8f6"/><rect x="83.5" y="215.5" width="8" height="8" fill="#52caf6"/><rect x="91.5" y="215.5" width="8" height="8" fill="#52cbf6"/><rect x="99.5" y="215.5" width="8" height="8" fill="#51d6f7"/><rect x="107.5" y="215.5" width="8" height="8" fill="#51d6f7"/><rect x="115.5" y="215.5" width="8" height="8" fill="#54eab4"/><rect x="123.5" y="215.5" width="8" height="8" fill="#6ee25a"/><rect x="131.5" y="215.5" width="8" height="8" fill="#6ee25a"/><rect x="139.5" y="215.5" width="8" height="8" fill="#6ee25a"/><rect x="147.5" y="215.5" width="8" height="8" fill="#96e34d"/><rect x="155.5" y="215.5" width="8" height="8" fill="#6ee25a"/><rect x="163.5" y="215.5" width="8" height="8" fill="#6ee25a"/><rect x="171.5" y="215.5" width="8" height="8" fill="#6ee25a"/><rect x="179.5" y="215.5" width="8" height="8" fill="#6ee25a"/><rect x="187.5" y="215.5" width="8" height="8" fill="#61e687"/><rect x="195.5" y="215.5" width="8" height="8" fill="#54eab4"/><rect x="203.5" y="215.5" width="8" height="8" fill="#50ece1"/><rect x="211.5" y="215.5" width="8" height="8" fill="#50e4f8"/><rect x="219.5" y="215.5" width="8" height="8" fill="#50e4f8"/><rect x="227.5" y="215.5" width="8" height="8" fill="#50e3f8"/><rect x="235.5" y="215.5" width="8" height="8" fill="#50e4f8"/><rect x="243.5" y="215.5" width="8" height="8" fill="#50e4f8"/><rect x="251.5" y="215.5" width="8" height="8" fill="#50e4f8"/><rect x="259.5" y="215.5" width="8" height="8" fill="#50e4f8"/><rect x="267.5" y="215.5" width="8" height="8" fill="#50e4f8"/><rect x="275.5" y="215.5" width="8" height="8" fill="#50e4f8"/><rect x="283.5" y="215.5" width="8" height="8" fill="#50e4f7"/><rect x="291.5" y="215.5" width="8" height="8" fill="#50e4f7"/><rect x="299.5" y="215.5" width="8" height="8" fill="#50e4f7"/><rect x="307.5" y="215.5" width="8" height="8" fill="#50e4f7"/><rect x="315.5" y="215.5" width="8" height="8" fill="#50e4f7"/><rect x="323.5" y="215.5" width="8" height="8" fill="#50e4f7"/><rect x="-4.5" y="223.5" width="8" height="8" fill="#51bff6"/><rect x="3.5" y="223.5" width="8" height="8" fill="#51c0f6"/><rect x="11.5" y="223.5" width="8" height="8" fill="#51c1f6"/><rect x="19.5" y="223.5" width="8" height="8" fill="#52c2f6"/><rect x="27.5" y="223.5" width="8" height="8" fill="#52c3f6"/><rect x="35.5" y="223.5" width="8" height="8" fill="#52c3f6"/><rect x="43.5" y="223.5" width="8" height="8" fill="#52c4f6"/><rect x="51.5" y="223.5" width="8" height="8" fill="#52c5f6"/><rect x="59.5" y="223.5" width="8" height="8" fill="#52c6f6"/><rect x="67.5" y="223.5" width="8" height="8" fill="#52c7f6"/><rect x="75.5" y="223.5" width="8" height="8" fill="#52c8f6"/><rect x="83.5" y="223.5" width="8" height="8" fill="#52caf6"/><rect x="91.5" y="223.5" width="8" height="8" fill="#52ccf6"/><rect x="99.5" y="223.5" width="8" height="8" fill="#51d6f7"/><rect x="107.5" y="223.5" width="8" height="8" fill="#51d6f7"/><rect x="115.5" y="223.5" width="8" height="8" fill="#50e4f8"/><rect x="123.5" y="223.5" width="8" height="8" fill="#96e34d"/><rect x="131.5" y="223.5" width="8" height="8" fill="#bee440"/><rect x="139.5" y="223.5" width="8" height="8" fill="#bee440"/><rect x="147.5" y="223.5" width="8" height="8" fill="#96e34d"/><rect x="155.5" y="223.5" width="8" height="8" fill="#6ee25a"/><rect x="163.5" y="223.5" width="8" height="8" fill="#6ee25a"/><rect x="171.5" y="223.5" width="8" height="8" fill="#6ee25a"/><rect x="179.5" y="223.5" width="8" height="8" fill="#61e687"/><rect x="187.5" y="223.5" width="8" height="8" fill="#61e687"/><rect x="195.5" y="223.5" width="8" height="8" fill="#54eab4"/><rect x="203.5" y="223.5" width="8" height="8" fill="#50ece1"/><rect x="211.5" y="223.5" width="8" height="8" fill="#50e4f8"/><rect x="219.5" y="223.5" width="8" height="8" fill="#50e4f8"/><rect x="227.5" y="223.5" width="8" height="8" fill="#50e3f8"/><rect x="235.5" y="223.5" width="8" height="8" fill="#50e4f8"/><rect x="243.5" y="223.5" width="8" height="8" fill="#50e4f8"/><rect x="251.5" y="223.5" width="8" height="8" fill="#50e4f8"/><rect x="259.5" y="223.5" width="8" height="8" fill="#50e4f8"/><rect x="267.5" y="223.5" width="8" height="8" fill="#50e4f8"/><rect x="275.5" y="223.5" width="8" height="8" fill="#50e4f7"/><rect x="283.5" y="223.5" width="8" height="8" fill="#50e4f7"/><rect x="291.5" y="223.5" width="8" height="8" fill="#50e4f7"/><rect x="299.5" y="223.5" width="8" height="8" fill="#50e4f7"/><rect x="307.5" y="223.5" width="8" height="8" fill="#50e4f7"/><rect x="315.5" y="223.5" width="8" height="8" fill="#50e4f7"/><rect x="323.5" y="223.5" width="8" height="8" fill="#50e4f7"/><rect x="-4.5" y="231.5" width="8" height="8" fill="#51bff6"/><rect x="3.5" y="231.5" width="8" height="8" fill="#51c0f6"/><rect x="11.5" y="231.5" width="8" height="8" fill="#51c1f6"/><rect x="19.5" y="231.5" width="8" height="8" fill="#52c2f6"/><rect x="27.5" y="231.5" width="8" height="8" fill="#52c2f6"/><rect x="35.5" y="231.5" width="8" height="8" fill="#52c3f6"/><rect x="43.5" y="231.5" width="8" height="8" fill="#52c4f6"/><rect x="51.5" y="231.5" width="8" height="8" fill="#52c5f6"/><rect x="59.5" y="231.5" width="8" height="8" fill="#52c6f6"/><rect x="67.5" y="231.5" width="8" height="8" fill="#52c7f6"/><rect x="75.5" y="231.5" width="8" height="8" fill="#52c8f6"/><rect x="83.5" y="231.5" width="8" height="8" fill="#52c9f6"/><rect x="91.5" y="231.5" width="8" height="8" fill="#52caf6"/><rect x="99.5" y="231.5" width="8" height="8" fill="#51d6f7"/><rect x="107.5" y="231.5" width="8" height="8" fill="#51d6f7"/><rect x="115.5" y="231.5" width="8" height="8" fill="#50e4f8"/><rect x="123.5" y="231.5" width="8" height="8" fill="#bee440"/><rect x="131.5" y="231.5" width="8" height="8" fill="#dade40"/><rect x="139.5" y="231.5" width="8" height="8" fill="#dade40"/><rect x="147.5" y="231.5" width="8" height="8" fill="#bee440"/><rect x="155.5" y="231.5" width="8" height="8" fill="#96e34d"/><rect x="163.5" y="231.5" width="8" height="8" fill="#6ee25a"/><rect x="171.5" y="231.5" width="8" height="8" fill="#6ee25a"/><rect x="179.5" y="231.5" width="8" height="8" fill="#61e687"/><rect x="187.5" y="231.5" width="8" height="8" fill="#54eab4"/><rect x="195.5" y="231.5" width="8" height="8" fill="#50ece1"/><rect x="203.5" y="231.5" width="8" height="8" fill="#50ece1"/><rect x="211.5" y="231.5" width="8" height="8" fill="#50e4f8"/><rect x="219.5" y="231.5" width="8" height="8" fill="#50e4f8"/><rect x="227.5" y="231.5" width="8" height="8" fill="#50e3f8"/><rect x="235.5" y="231.5" width="8" height="8" fill="#50e4f8"/><rect x="243.5" y="231.5" width="8" height="8" fill="#50e4f8"/><rect x="251.5" y="231.5" width="8" height="8" fill="#50e4f8"/><rect x="259.5" y="231.5" width="8" height="8" fill="#50e4f8"/><rect x="267.5" y="231.5" width="8" height="8" fill="#50e4f7"/><rect x="275.5" y="231.5" width="8" height="8" fill="#50e4f7"/><rect x="283.5" y="231.5" width="8" height="8" fill="#50e4f7"/><rect x="291.5" y="231.5" width="8" height="8" fill="#50e4f7"/><rect x="299.5" y="231.5" width="8" height="8" fill="#50e4f7"/><rect x="307.5" y="231.5" width="8" height="8" fill="#50e4f7"/><rect x="315.5" y="231.5" width="8" height="8" fill="#50e4f7"/><rect x="323.5" y="231.5" width="8" height="8" fill="#50e4f7"/><rect x="-4.5" y="239.5" width="8" height="8" fill="#51bff6"/><rect x="3.5" y="239.5" width="8" height="8" fill="#51bff6"/><rect x="11.5" y="239.5" width="8" height="8" fill="#51c0f6"/><rect x="19.5" y="239.5" width="8" height="8" fill="#52c1f6"/><rect x="27.5" y="239.5" width="8" height="8" fill="#52c2f6"/><rect x="35.5" y="239.5" width="8" height="8" fill="#52c3f6"/><rect x="43.5" y="239.5" width="8" height="8" fill="#52c4f6"/><rect x="51.5" y="239.5" width="8" height="8" fill="#52c5f6"/><rect x="59.5" y="239.5" width="8" height="8" fill="#52c6f6"/><rect x="67.5" y="239.5" width="8" height="8" fill="#52c7f6"/><rect x="75.5" y="239.5" width="8" height="8" fill="#52c8f6"/><rect x="83.5" y="239.5" width="8" height="8" fill="#52c8f6"/><rect x="91.5" y="239.5" width="8" height="8" fill="#52c8f6"/><rect x="99.5" y="239.5" width="8" height="8" fill="#51d6f7"/><rect x="107.5" y="239.5" width="8" height="8" fill="#50e4f8"/><rect x="115.5" y="239.5" width="8" height="8" fill="#68e470"/><rect x="123.5" y="239.5" width="8" height="8" fill="#dade40"/><rect x="131.5" y="239.5" width="8" height="8" fill="#e7da40"/><rect x="139.5" y="239.5" width="8" height="8" fill="#f5d740"/><rect x="147.5" y="239.5" width="8" height="8" fill="#bee440"/><rect x="155.5" y="239.5" width="8" height="8" fill="#6ee25a"/><rect x="163.5" y="239.5" width="8" height="8" fill="#82e254"/><rect x="171.5" y="239.5" width="8" height="8" fill="#96e34d"/><rect x="179.5" y="239.5" width="8" height="8" fill="#82e254"/><rect x="187.5" y="239.5" width="8" height="8" fill="#6ee25a"/><rect x="195.5" y="239.5" width="8" height="8" fill="#5ae89e"/><rect x="203.5" y="239.5" width="8" height="8" fill="#50ece1"/><rect x="211.5" y="239.5" width="8" height="8" fill="#50e8ec"/><rect x="219.5" y="239.5" width="8" height="8" fill="#50e4f8"/><rect x="227.5" y="239.5" width="8" height="8" fill="#50e4f8"/><rect x="235.5" y="239.5" width="8" height="8" fill="#50e4f8"/><rect x="243.5" y="239.5" width="8" height="8" fill="#50e4f8"/><rect x="251.5" y="239.5" width="8" height="8" fill="#50e4f8"/><rect x="259.5" y="239.5" width="8" height="8" fill="#50e4f7"/><rect x="267.5" y="239.5" width="8" height="8" fill="#50e4f7"/><rect x="275.5" y="239.5" width="8" height="8" fill="#50e4f7"/><rect x="283.5" y="239.5" width="8" height="8" fill="#50e4f7"/><rect x="291.5" y="239.5" width="8" height="8" fill="#50e4f7"/><rect x="299.5" y="239.5" width="8" height="8" fill="#50e4f7"/><rect x="307.5" y="239.5" width="8" height="8" fill="#50e5f6"/><rect x="315.5" y="239.5" width="8" height="8" fill="#50e5f6"/><rect x="323.5" y="239.5" width="8" height="8" fill="#50e5f6"/><rect x="-4.5" y="247.5" width="8" height="8" fill="#51bef6"/><rect x="3.5" y="247.5" width="8" height="8" fill="#51bff6"/><rect x="11.5" y="247.5" width="8" height="8" fill="#51c0f6"/><rect x="19.5" y="247.5" width="8" height="8" fill="#52c1f6"/><rect x="27.5" y="247.5" width="8" height="8" fill="#52c2f6"/><rect x="35.5" y="247.5" width="8" height="8" fill="#52c3f6"/><rect x="43.5" y="247.5" width="8" height="8" fill="#52c4f6"/><rect x="51.5" y="247.5" width="8" height="8" fill="#52c5f6"/><rect x="59.5" y="247.5" width="8" height="8" fill="#52c6f6"/><rect x="67.5" y="247.5" width="8" height="8" fill="#52c7f6"/><rect x="75.5" y="247.5" width="8" height="8" fill="#52c8f6"/><rect x="83.5" y="247.5" width="8" height="8" fill="#52caf6"/><rect x="91.5" y="247.5" width="8" height="8" fill="#52ccf6"/><rect x="99.5" y="247.5" width="8" height="8" fill="#51d8f7"/><rect x="107.5" y="247.5" width="8" height="8" fill="#50e4f8"/><rect x="115.5" y="247.5" width="8" height="8" fill="#57e9a9"/><rect x="123.5" y="247.5" width="8" height="8" fill="#82e254"/><rect x="131.5" y="247.5" width="8" height="8" fill="#90e34f"/><rect x="139.5" y="247.5" width="8" height="8" fill="#9ee34a"/><rect x="147.5" y="247.5" width="8" height="8" fill="#72e259"/><rect x="155.5" y="247.5" width="8" height="8" fill="#61e687"/><rect x="163.5" y="247.5" width="8" height="8" fill="#6ee25a"/><rect x="171.5" y="247.5" width="8" height="8" fill="#96e34d"/><rect x="179.5" y="247.5" width="8" height="8" fill="#8ce350"/><rect x="187.5" y="247.5" width="8" height="8" fill="#82e254"/><rect x="195.5" y="247.5" width="8" height="8" fill="#60e68c"/><rect x="203.5" y="247.5" width="8" height="8" fill="#51ebd3"/><rect x="211.5" y="247.5" width="8" height="8" fill="#50e9e9"/><rect x="219.5" y="247.5" width="8" height="8" fill="#50e4f8"/><rect x="227.5" y="247.5" width="8" height="8" fill="#50e4f8"/><rect x="235.5" y="247.5" width="8" height="8" fill="#50e4f8"/><rect x="243.5" y="247.5" width="8" height="8" fill="#50e4f8"/><rect x="251.5" y="247.5" width="8" height="8" fill="#50e4f8"/><rect x="259.5" y="247.5" width="8" height="8" fill="#50e4f7"/><rect x="267.5" y="247.5" width="8" height="8" fill="#50e4f7"/><rect x="275.5" y="247.5" width="8" height="8" fill="#50e4f7"/><rect x="283.5" y="247.5" width="8" height="8" fill="#50e4f7"/><rect x="291.5" y="247.5" width="8" height="8" fill="#50e4f7"/><rect x="299.5" y="247.5" width="8" height="8" fill="#50e5f6"/><rect x="307.5" y="247.5" width="8" height="8" fill="#50e5f6"/><rect x="315.5" y="247.5" width="8" height="8" fill="#50e5f6"/><rect x="323.5" y="247.5" width="8" height="8" fill="#50e5f6"/><rect x="-4.5" y="255.5" width="8" height="8" fill="#51bef6"/><rect x="3.5" y="255.5" width="8" height="8" fill="#51bff6"/><rect x="11.5" y="255.5" width="8" height="8" fill="#51c0f6"/><rect x="19.5" y="255.5" width="8" height="8" fill="#52c1f6"/><rect x="27.5" y="255.5" width="8" height="8" fill="#52c2f6"/><rect x="35.5" y="255.5" width="8" height="8" fill="#52c3f6"/><rect x="43.5" y="255.5" width="8" height="8" fill="#52c4f6"/><rect x="51.5" y="255.5" width="8" height="8" fill="#52c5f6"/><rect x="59.5" y="255.5" width="8" height="8" fill="#52c6f6"/><rect x="67.5" y="255.5" width="8" height="8" fill="#52c7f6"/><rect x="75.5" y="255.5" width="8" height="8" fill="#52c8f6"/><rect x="83.5" y="255.5" width="8" height="8" fill="#52ccf6"/><rect x="91.5" y="255.5" width="8" height="8" fill="#51d0f7"/><rect x="99.5" y="255.5" width="8" height="8" fill="#51daf7"/><rect x="107.5" y="255.5" width="8" height="8" fill="#50e4f8"/><rect x="115.5" y="255.5" width="8" height="8" fill="#50ece1"/><rect x="123.5" y="255.5" width="8" height="8" fill="#54eab4"/><rect x="131.5" y="255.5" width="8" height="8" fill="#57e9ab"/><rect x="139.5" y="255.5" width="8" height="8" fill="#59e8a2"/><rect x="147.5" y="255.5" width="8" height="8" fill="#57e9ab"/><rect x="155.5" y="255.5" width="8" height="8" fill="#54eab4"/><rect x="163.5" y="255.5" width="8" height="8" fill="#68e470"/><rect x="171.5" y="255.5" width="8" height="8" fill="#96e34d"/><rect x="179.5" y="255.5" width="8" height="8" fill="#96e34d"/><rect x="187.5" y="255.5" width="8" height="8" fill="#96e34d"/><rect x="195.5" y="255.5" width="8" height="8" fill="#65e579"/><rect x="203.5" y="255.5" width="8" height="8" fill="#52ebc6"/><rect x="211.5" y="255.5" width="8" height="8" fill="#50eae6"/><rect x="219.5" y="255.5" width="8" height="8" fill="#50e4f8"/><rect x="227.5" y="255.5" width="8" height="8" fill="#50e4f8"/><rect x="235.5" y="255.5" width="8" height="8" fill="#50e4f8"/><rect x="243.5" y="255.5" width="8" height="8" fill="#50e4f8"/><rect x="251.5" y="255.5" width="8" height="8" fill="#50e4f8"/><rect x="259.5" y="255.5" width="8" height="8" fill="#50e4f7"/><rect x="267.5" y="255.5" width="8" height="8" fill="#50e4f7"/><rect x="275.5" y="255.5" width="8" height="8" fill="#50e4f7"/><rect x="283.5" y="255.5" width="8" height="8" fill="#50e4f7"/><rect x="291.5" y="255.5" width="8" height="8" fill="#50e5f6"/><rect x="299.5" y="255.5" width="8" height="8" fill="#50e5f6"/><rect x="307.5" y="255.5" width="8" height="8" fill="#50e5f6"/><rect x="315.5" y="255.5" width="8" height="8" fill="#50e5f6"/><rect x="323.5" y="255.5" width="8" height="8" fill="#50e5f6"/><rect x="-4.5" y="263.5" width="8" height="8" fill="#51bef6"/><rect x="3.5" y="263.5" width="8" height="8" fill="#51bff6"/><rect x="11.5" y="263.5" width="8" height="8" fill="#51c0f6"/><rect x="19.5" y="263.5" width="8" height="8" fill="#52c1f6"/><rect x="27.5" y="263.5" width="8" height="8" fill="#52c2f6"/><rect x="35.5" y="263.5" width="8" height="8" fill="#52c3f6"/><rect x="43.5" y="263.5" width="8" height="8" fill="#52c4f6"/><rect x="51.5" y="263.5" width="8" height="8" fill="#52c5f6"/><rect x="59.5" y="263.5" width="8" height="8" fill="#52c6f6"/><rect x="67.5" y="263.5" width="8" height="8" fill="#52c7f6"/><rect x="75.5" y="263.5" width="8" height="8" fill="#52c8f6"/><rect x="83.5" y="263.5" width="8" height="8" fill="#52cef6"/><rect x="91.5" y="263.5" width="8" height="8" fill="#51d3f7"/><rect x="99.5" y="263.5" width="8" height="8" fill="#51dcf7"/><rect x="107.5" y="263.5" width="8" height="8" fill="#50e4f8"/><rect x="115.5" y="263.5" width="8" height="8" fill="#50eae6"/><rect x="123.5" y="263.5" width="8" height="8" fill="#52ebc6"/><rect x="131.5" y="263.5" width="8" height="8" fill="#53ebc2"/><rect x="139.5" y="263.5" width="8" height="8" fill="#53eabd"/><rect x="147.5" y="263.5" width="8" height="8" fill="#53ebc2"/><rect x="155.5" y="263.5" width="8" height="8" fill="#52ebc6"/><rect x="163.5" y="263.5" width="8" height="8" fill="#5ae8a0"/><rect x="171.5" y="263.5" width="8" height="8" fill="#65e579"/><rect x="179.5" y="263.5" width="8" height="8" fill="#68e470"/><rect x="187.5" y="263.5" width="8" height="8" fill="#6ae368"/><rect x="195.5" y="263.5" width="8" height="8" fill="#5be89b"/><rect x="203.5" y="263.5" width="8" height="8" fill="#52ebcf"/><rect x="211.5" y="263.5" width="8" height="8" fill="#50eae8"/><rect x="219.5" y="263.5" width="8" height="8" fill="#50e4f8"/><rect x="227.5" y="263.5" width="8" height="8" fill="#50e4f8"/><rect x="235.5" y="263.5" width="8" height="8" fill="#50e4f8"/><rect x="243.5" y="263.5" width="8" height="8" fill="#50e4f8"/><rect x="251.5" y="263.5" width="8" height="8" fill="#50e4f7"/><rect x="259.5" y="263.5" width="8" height="8" fill="#50e4f7"/><rect x="267.5" y="263.5" width="8" height="8" fill="#50e4f7"/><rect x="275.5" y="263.5" width="8" height="8" fill="#50e4f7"/><rect x="283.5" y="263.5" width="8" height="8" fill="#50e5f6"/><rect x="291.5" y="263.5" width="8" height="8" fill="#50e5f6"/><rect x="299.5" y="263.5" width="8" height="8" fill="#50e5f6"/><rect x="307.5" y="263.5" width="8" height="8" fill="#50e5f6"/><rect x="315.5" y="263.5" width="8" height="8" fill="#50e5f5"/><rect x="323.5" y="263.5" width="8" height="8" fill="#50e5f5"/><rect x="-4.5" y="271.5" width="8" height="8" fill="#51bef6"/><rect x="3.5" y="271.5" width="8" height="8" fill="#51bff6"/><rect x="11.5" y="271.5" width="8" height="8" fill="#51c0f6"/><rect x="19.5" y="271.5" width="8" height="8" fill="#51c1f6"/><rect x="27.5" y="271.5" width="8" height="8" fill="#52c2f6"/><rect x="35.5" y="271.5" width="8" height="8" fill="#52c3f6"/><rect x="43.5" y="271.5" width="8" height="8" fill="#52c4f6"/><rect x="51.5" y="271.5" width="8" height="8" fill="#52c5f6"/><rect x="59.5" y="271.5" width="8" height="8" fill="#52c6f6"/><rect x="67.5" y="271.5" width="8" height="8" fill="#52c7f6"/><rect x="75.5" y="271.5" width="8" height="8" fill="#52c8f6"/><rect x="83.5" y="271.5" width="8" height="8" fill="#52cff6"/><rect x="91.5" y="271.5" width="8" height="8" fill="#51d6f7"/><rect x="99.5" y="271.5" width="8" height="8" fill="#50ddf8"/><rect x="107.5" y="271.5" width="8" height="8" fill="#50e4f8"/><rect x="115.5" y="271.5" width="8" height="8" fill="#50e9ea"/><rect x="123.5" y="271.5" width="8" height="8" fill="#51ecd8"/><rect x="131.5" y="271.5" width="8" height="8" fill="#51ecd8"/><rect x="139.5" y="271.5" width="8" height="8" fill="#51ecd8"/><rect x="147.5" y="271.5" width="8" height="8" fill="#51ecd8"/><rect x="155.5" y="271.5" width="8" height="8" fill="#51ecd8"/><rect x="163.5" y="271.5" width="8" height="8" fill="#52ebcf"/><rect x="171.5" y="271.5" width="8" height="8" fill="#52ebc6"/><rect x="179.5" y="271.5" width="8" height="8" fill="#54eab4"/><rect x="187.5" y="271.5" width="8" height="8" fill="#59e8a2"/><rect x="195.5" y="271.5" width="8" height="8" fill="#53eabd"/><rect x="203.5" y="271.5" width="8" height="8" fill="#51ecd8"/><rect x="211.5" y="271.5" width="8" height="8" fill="#50e9ea"/><rect x="219.5" y="271.5" width="8" height="8" fill="#50e4f8"/><rect x="227.5" y="271.5" width="8" height="8" fill="#50e4f8"/><rect x="235.5" y="271.5" width="8" height="8" fill="#50e4f8"/><rect x="243.5" y="271.5" width="8" height="8" fill="#50e4f8"/><rect x="251.5" y="271.5" width="8" height="8" fill="#50e4f7"/><rect x="259.5" y="271.5" width="8" height="8" fill="#50e4f7"/><rect x="267.5" y="271.5" width="8" height="8" fill="#50e4f7"/><rect x="275.5" y="271.5" width="8" height="8" fill="#50e4f7"/><rect x="283.5" y="271.5" width="8" height="8" fill="#50e5f6"/><rect x="291.5" y="271.5" width="8" height="8" fill="#50e5f6"/><rect x="299.5" y="271.5" width="8" height="8" fill="#50e5f6"/><rect x="307.5" y="271.5" width="8" height="8" fill="#50e5f5"/><rect x="315.5" y="271.5" width="8" height="8" fill="#50e5f5"/><rect x="323.5" y="271.5" width="8" height="8" fill="#50e5f5"/><rect x="-4.5" y="279.5" width="8" height="8" fill="#51bef6"/><rect x="3.5" y="279.5" width="8" height="8" fill="#51bff6"/><rect x="11.5" y="279.5" width="8" height="8" fill="#51c0f6"/><rect x="19.5" y="279.5" width="8" height="8" fill="#51c1f6"/><rect x="27.5" y="279.5" width="8" height="8" fill="#52c2f6"/><rect x="35.5" y="279.5" width="8" height="8" fill="#52c3f6"/><rect x="43.5" y="279.5" width="8" height="8" fill="#52c4f6"/><rect x="51.5" y="279.5" width="8" height="8" fill="#52c5f6"/><rect x="59.5" y="279.5" width="8" height="8" fill="#52c6f6"/><rect x="67.5" y="279.5" width="8" height="8" fill="#52c7f6"/><rect x="75.5" y="279.5" width="8" height="8" fill="#52c8f6"/><rect x="83.5" y="279.5" width="8" height="8" fill="#52cff6"/><rect x="91.5" y="279.5" width="8" height="8" fill="#51d6f7"/><rect x="99.5" y="279.5" width="8" height="8" fill="#50ddf8"/><rect x="107.5" y="279.5" width="8" height="8" fill="#50e4f8"/><rect x="115.5" y="279.5" width="8" height="8" fill="#50e8ec"/><rect x="123.5" y="279.5" width="8" height="8" fill="#50ece1"/><rect x="131.5" y="279.5" width="8" height="8" fill="#50ece1"/><rect x="139.5" y="279.5" width="8" height="8" fill="#50ece1"/><rect x="147.5" y="279.5" width="8" height="8" fill="#50ecdf"/><rect x="155.5" y="279.5" width="8" height="8" fill="#50ecdd"/><rect x="163.5" y="279.5" width="8" height="8" fill="#51ecd8"/><rect x="171.5" y="279.5" width="8" height="8" fill="#51ebd3"/><rect x="179.5" y="279.5" width="8" height="8" fill="#52ebc8"/><rect x="187.5" y="279.5" width="8" height="8" fill="#53eabd"/><rect x="195.5" y="279.5" width="8" height="8" fill="#52ebcf"/><rect x="203.5" y="279.5" width="8" height="8" fill="#50ece1"/><rect x="211.5" y="279.5" width="8" height="8" fill="#50e8ec"/><rect x="219.5" y="279.5" width="8" height="8" fill="#50e4f8"/><rect x="227.5" y="279.5" width="8" height="8" fill="#50e4f8"/><rect x="235.5" y="279.5" width="8" height="8" fill="#50e4f8"/><rect x="243.5" y="279.5" width="8" height="8" fill="#50e4f8"/><rect x="251.5" y="279.5" width="8" height="8" fill="#50e4f7"/><rect x="259.5" y="279.5" width="8" height="8" fill="#50e4f7"/><rect x="267.5" y="279.5" width="8" height="8" fill="#50e4f7"/><rect x="275.5" y="279.5" width="8" height="8" fill="#50e5f6"/><rect x="283.5" y="279.5" width="8" height="8" fill="#50e5f6"/><rect x="291.5" y="279.5" width="8" height="8" fill="#50e5f6"/><rect x="299.5" y="279.5" width="8" height="8" fill="#50e5f5"/><rect x="307.5" y="279.5" width="8" height="8" fill="#50e5f5"/><rect x="315.5" y="279.5" width="8" height="8" fill="#50e5f5"/><rect x="323.5" y="279.5" width="8" height="8" fill="#50e5f5"/><rect x="-4.5" y="287.5" width="8" height="8" fill="#51bef6"/><rect x="3.5" y="287.5" width="8" height="8" fill="#51bff6"/><rect x="11.5" y="287.5" width="8" height="8" fill="#51c0f6"/><rect x="19.5" y="287.5" width="8" height="8" fill="#51c1f6"/><rect x="27.5" y="287.5" width="8" height="8" fill="#52c2f6"/><rect x="35.5" y="287.5" width="8" height="8" fill="#52c3f6"/><rect x="43.5" y="287.5" width="8" height="8" fill="#52c4f6"/><rect x="51.5" y="287.5" width="8" height="8" fill="#52c5f6"/><rect x="59.5" y="287.5" width="8" height="8" fill="#52c6f6"/><rect x="67.5" y="287.5" width="8" height="8" fill="#52c7f6"/><rect x="75.5" y="287.5" width="8" height="8" fill="#52c8f6"/><rect x="83.5" y="287.5" width="8" height="8" fill="#52cff6"/><rect x="91.5" y="287.5" width="8" height="8" fill="#51d6f7"/><rect x="99.5" y="287.5" width="8" height="8" fill="#50ddf8"/><rect x="107.5" y="287.5" width="8" height="8" fill="#50e4f8"/><rect x="115.5" y="287.5" width="8" height="8" fill="#50e7ef"/><rect x="123.5" y="287.5" width="8" height="8" fill="#50eae6"/><rect x="131.5" y="287.5" width="8" height="8" fill="#50eae6"/><rect x="139.5" y="287.5" width="8" height="8" fill="#50eae6"/><rect x="147.5" y="287.5" width="8" height="8" fill="#50ebe3"/><rect x="155.5" y="287.5" width="8" height="8" fill="#50ece1"/><rect x="163.5" y="287.5" width="8" height="8" fill="#50ece1"/><rect x="171.5" y="287.5" width="8" height="8" fill="#50ece1"/><rect x="179.5" y="287.5" width="8" height="8" fill="#50ecdd"/><rect x="187.5" y="287.5" width="8" height="8" fill="#51ecd8"/><rect x="195.5" y="287.5" width="8" height="8" fill="#50ece1"/><rect x="203.5" y="287.5" width="8" height="8" fill="#50eae6"/><rect x="211.5" y="287.5" width="8" height="8" fill="#50e7ef"/><rect x="219.5" y="287.5" width="8" height="8" fill="#50e4f8"/><rect x="227.5" y="287.5" width="8" height="8" fill="#50e4f8"/><rect x="235.5" y="287.5" width="8" height="8" fill="#50e4f8"/><rect x="243.5" y="287.5" width="8" height="8" fill="#50e4f8"/><rect x="251.5" y="287.5" width="8" height="8" fill="#50e4f7"/><rect x="259.5" y="287.5" width="8" height="8" fill="#50e4f7"/><rect x="267.5" y="287.5" width="8" height="8" fill="#50e4f7"/><rect x="275.5" y="287.5" width="8" height="8" fill="#50e5f6"/><rect x="283.5" y="287.5" width="8" height="8" fill="#50e5f6"/><rect x="291.5" y="287.5" width="8" height="8" fill="#50e5f6"/><rect x="299.5" y="287.5" width="8" height="8" fill="#50e5f5"/><rect x="307.5" y="287.5" width="8" height="8" fill="#50e5f5"/><rect x="315.5" y="287.5" width="8" height="8" fill="#50e5f5"/><rect x="323.5" y="287.5" width="8" height="8" fill="#50e5f5"/><rect x="-4.5" y="295.5" width="8" height="8" fill="#51bdf6"/><rect x="3.5" y="295.5" width="8" height="8" fill="#51bef6"/><rect x="11.5" y="295.5" width="8" height="8" fill="#51bff6"/><rect x="19.5" y="295.5" width="8" height="8" fill="#51c1f6"/><rect x="27.5" y="295.5" width="8" height="8" fill="#52c2f6"/><rect x="35.5" y="295.5" width="8" height="8" fill="#52c3f6"/><rect x="43.5" y="295.5" width="8" height="8" fill="#52c4f6"/><rect x="51.5" y="295.5" width="8" height="8" fill="#52c5f6"/><rect x="59.5" y="295.5" width="8" height="8" fill="#52c6f6"/><rect x="67.5" y="295.5" width="8" height="8" fill="#52c7f6"/><rect x="75.5" y="295.5" width="8" height="8" fill="#52c8f6"/><rect x="83.5" y="295.5" width="8" height="8" fill="#52cff6"/><rect x="91.5" y="295.5" width="8" height="8" fill="#51d6f7"/><rect x="99.5" y="295.5" width="8" height="8" fill="#50ddf8"/><rect x="107.5" y="295.5" width="8" height="8" fill="#50e4f8"/><rect x="115.5" y="295.5" width="8" height="8" fill="#50e7f0"/><rect x="123.5" y="295.5" width="8" height="8" fill="#50eae8"/><rect x="131.5" y="295.5" width="8" height="8" fill="#50eae8"/><rect x="139.5" y="295.5" width="8" height="8" fill="#50eae8"/><rect x="147.5" y="295.5" width="8" height="8" fill="#50eae6"/><rect x="155.5" y="295.5" width="8" height="8" fill="#50ebe3"/><rect x="163.5" y="295.5" width="8" height="8" fill="#50ebe3"/><rect x="171.5" y="295.5" width="8" height="8" fill="#50ebe3"/><rect x="179.5" y="295.5" width="8" height="8" fill="#50ece2"/><rect x="187.5" y="295.5" width="8" height="8" fill="#50ece1"/><rect x="195.5" y="295.5" width="8" height="8" fill="#50ebe4"/><rect x="203.5" y="295.5" width="8" height="8" fill="#50eae8"/><rect x="211.5" y="295.5" width="8" height="8" fill="#50e7f0"/><rect x="219.5" y="295.5" width="8" height="8" fill="#50e4f8"/><rect x="227.5" y="295.5" width="8" height="8" fill="#50e4f8"/><rect x="235.5" y="295.5" width="8" height="8" fill="#50e4f8"/><rect x="243.5" y="295.5" width="8" height="8" fill="#50e4f8"/><rect x="251.5" y="295.5" width="8" height="8" fill="#50e4f7"/><rect x="259.5" y="295.5" width="8" height="8" fill="#50e4f7"/><rect x="267.5" y="295.5" width="8" height="8" fill="#50e5f7"/><rect x="275.5" y="295.5" width="8" height="8" fill="#50e5f6"/><rect x="283.5" y="295.5" width="8" height="8" fill="#50e5f6"/><rect x="291.5" y="295.5" width="8" height="8" fill="#50e5f5"/><rect x="299.5" y="295.5" width="8" height="8" fill="#50e5f5"/><rect x="307.5" y="295.5" width="8" height="8" fill="#50e5f5"/><rect x="315.5" y="295.5" width="8" height="8" fill="#50e5f4"/><rect x="323.5" y="295.5" width="8" height="8" fill="#50e5f4"/><rect x="-4.5" y="303.5" width="8" height="8" fill="#51bdf6"/><rect x="3.5" y="303.5" width="8" height="8" fill="#51bef6"/><rect x="11.5" y="303.5" width="8" height="8" fill="#51bff6"/><rect x="19.5" y="303.5" width="8" height="8" fill="#51c0f6"/><rect x="27.5" y="303.5" width="8" height="8" fill="#52c1f6"/><rect x="35.5" y="303.5" width="8" height="8" fill="#52c3f6"/><rect x="43.5" y="303.5" width="8" height="8" fill="#52c4f6"/><rect x="51.5" y="303.5" width="8" height="8" fill="#52c5f6"/><rect x="59.5" y="303.5" width="8" height="8" fill="#52c6f6"/><rect x="67.5" y="303.5" width="8" height="8" fill="#52c7f6"/><rect x="75.5" y="303.5" width="8" height="8" fill="#52c8f6"/><rect x="83.5" y="303.5" width="8" height="8" fill="#52cff6"/><rect x="91.5" y="303.5" width="8" height="8" fill="#51d6f7"/><rect x="99.5" y="303.5" width="8" height="8" fill="#50ddf8"/><rect x="107.5" y="303.5" width="8" height="8" fill="#50e4f8"/><rect x="115.5" y="303.5" width="8" height="8" fill="#50e6f1"/><rect x="123.5" y="303.5" width="8" height="8" fill="#50e9ea"/><rect x="131.5" y="303.5" width="8" height="8" fill="#50e9ea"/><rect x="139.5" y="303.5" width="8" height="8" fill="#50e9ea"/><rect x="147.5" y="303.5" width="8" height="8" fill="#50eae8"/><rect x="155.5" y="303.5" width="8" height="8" fill="#50eae6"/><rect x="163.5" y="303.5" width="8" height="8" fill="#50eae6"/><rect x="171.5" y="303.5" width="8" height="8" fill="#50eae6"/><rect x="179.5" y="303.5" width="8" height="8" fill="#50eae6"/><rect x="187.5" y="303.5" width="8" height="8" fill="#50eae6"/><rect x="195.5" y="303.5" width="8" height="8" fill="#50eae8"/><rect x="203.5" y="303.5" width="8" height="8" fill="#50e9ea"/><rect x="211.5" y="303.5" width="8" height="8" fill="#50e6f1"/><rect x="219.5" y="303.5" width="8" height="8" fill="#50e4f8"/><rect x="227.5" y="303.5" width="8" height="8" fill="#50e4f8"/><rect x="235.5" y="303.5" width="8" height="8" fill="#50e4f8"/><rect x="243.5" y="303.5" width="8" height="8" fill="#50e4f8"/><rect x="251.5" y="303.5" width="8" height="8" fill="#50e4f7"/><rect x="259.5" y="303.5" width="8" height="8" fill="#50e4f7"/><rect x="267.5" y="303.5" width="8" height="8" fill="#50e5f6"/><rect x="275.5" y="303.5" width="8" height="8" fill="#50e5f6"/><rect x="283.5" y="303.5" width="8" height="8" fill="#50e5f6"/><rect x="291.5" y="303.5" width="8" height="8" fill="#50e5f5"/><rect x="299.5" y="303.5" width="8" height="8" fill="#50e5f5"/><rect x="307.5" y="303.5" width="8" height="8" fill="#50e5f4"/><rect x="315.5" y="303.5" width="8" height="8" fill="#50e5f4"/><rect x="323.5" y="303.5" width="8" height="8" fill="#50e5f4"/><rect x="-4.5" y="311.5" width="8" height="8" fill="#51bdf6"/><rect x="3.5" y="311.5" width="8" height="8" fill="#51bef6"/><rect x="11.5" y="311.5" width="8" height="8" fill="#51bff6"/><rect x="19.5" y="311.5" width="8" height="8" fill="#51c0f6"/><rect x="27.5" y="311.5" width="8" height="8" fill="#52c1f6"/><rect x="35.5" y="311.5" width="8" height="8" fill="#52c2f6"/><rect x="43.5" y="311.5" width="8" height="8" fill="#52c4f6"/><rect x="51.5" y="311.5" width="8" height="8" fill="#52c5f6"/><rect x="59.5" y="311.5" width="8" height="8" fill="#52c6f6"/><rect x="67.5" y="311.5" width="8" height="8" fill="#52c8f6"/><rect x="75.5" y="311.5" width="8" height="8" fill="#52cbf6"/><rect x="83.5" y="311.5" width="8" height="8" fill="#51d1f7"/><rect x="91.5" y="311.5" width="8" height="8" fill="#51d7f7"/><rect x="99.5" y="311.5" width="8" height="8" fill="#50def8"/><rect x="107.5" y="311.5" width="8" height="8" fill="#50e4f8"/><rect x="115.5" y="311.5" width="8" height="8" fill="#50e7f0"/><rect x="123.5" y="311.5" width="8" height="8" fill="#50eae8"/><rect x="131.5" y="311.5" width="8" height="8" fill="#50eae8"/><rect x="139.5" y="311.5" width="8" height="8" fill="#50eae8"/><rect x="147.5" y="311.5" width="8" height="8" fill="#50eae6"/><rect x="155.5" y="311.5" width="8" height="8" fill="#50ebe3"/><rect x="163.5" y="311.5" width="8" height="8" fill="#50ebe4"/><rect x="171.5" y="311.5" width="8" height="8" fill="#50eae6"/><rect x="179.5" y="311.5" width="8" height="8" fill="#50eae6"/><rect x="187.5" y="311.5" width="8" height="8" fill="#50eae6"/><rect x="195.5" y="311.5" width="8" height="8" fill="#50eae7"/><rect x="203.5" y="311.5" width="8" height="8" fill="#50eae8"/><rect x="211.5" y="311.5" width="8" height="8" fill="#50e7f0"/><rect x="219.5" y="311.5" width="8" height="8" fill="#50e4f8"/><rect x="227.5" y="311.5" width="8" height="8" fill="#50e4f8"/><rect x="235.5" y="311.5" width="8" height="8" fill="#50e4f8"/><rect x="243.5" y="311.5" width="8" height="8" fill="#50e4f8"/><rect x="251.5" y="311.5" width="8" height="8" fill="#50e4f7"/><rect x="259.5" y="311.5" width="8" height="8" fill="#50e4f7"/><rect x="267.5" y="311.5" width="8" height="8" fill="#50e5f6"/><rect x="275.5" y="311.5" width="8" height="8" fill="#50e5f6"/><rect x="283.5" y="311.5" width="8" height="8" fill="#50e5f5"/><rect x="291.5" y="311.5" width="8" height="8" fill="#50e5f5"/><rect x="299.5" y="311.5" width="8" height="8" fill="#50e5f5"/><rect x="307.5" y="311.5" width="8" height="8" fill="#50e5f4"/><rect x="315.5" y="311.5" width="8" height="8" fill="#50e6f4"/><rect x="323.5" y="311.5" width="8" height="8" fill="#50e6f4"/><rect x="-4.5" y="319.5" width="8" height="8" fill="#51bdf6"/><rect x="3.5" y="319.5" width="8" height="8" fill="#51bef6"/><rect x="11.5" y="319.5" width="8" height="8" fill="#51bff6"/><rect x="19.5" y="319.5" width="8" height="8" fill="#51c0f6"/><rect x="27.5" y="319.5" width="8" height="8" fill="#52c1f6"/><rect x="35.5" y="319.5" width="8" height="8" fill="#52c2f6"/><rect x="43.5" y="319.5" width="8" height="8" fill="#52c4f6"/><rect x="51.5" y="319.5" width="8" height="8" fill="#52c5f6"/><rect x="59.5" y="319.5" width="8" height="8" fill="#52c6f6"/><rect x="67.5" y="319.5" width="8" height="8" fill="#52caf6"/><rect x="75.5" y="319.5" width="8" height="8" fill="#52cef6"/><rect x="83.5" y="319.5" width="8" height="8" fill="#51d3f7"/><rect x="91.5" y="319.5" width="8" height="8" fill="#51d9f7"/><rect x="99.5" y="319.5" width="8" height="8" fill="#50def8"/><rect x="107.5" y="319.5" width="8" height="8" fill="#50e4f8"/><rect x="115.5" y="319.5" width="8" height="8" fill="#50e7ef"/><rect x="123.5" y="319.5" width="8" height="8" fill="#50eae6"/><rect x="131.5" y="319.5" width="8" height="8" fill="#50eae6"/><rect x="139.5" y="319.5" width="8" height="8" fill="#50eae6"/><rect x="147.5" y="319.5" width="8" height="8" fill="#50ebe3"/><rect x="155.5" y="319.5" width="8" height="8" fill="#50ece1"/><rect x="163.5" y="319.5" width="8" height="8" fill="#50ebe3"/><rect x="171.5" y="319.5" width="8" height="8" fill="#50eae6"/><rect x="179.5" y="319.5" width="8" height="8" fill="#50eae6"/><rect x="187.5" y="319.5" width="8" height="8" fill="#50eae6"/><rect x="195.5" y="319.5" width="8" height="8" fill="#50eae6"/><rect x="203.5" y="319.5" width="8" height="8" fill="#50eae6"/><rect x="211.5" y="319.5" width="8" height="8" fill="#50e7ef"/><rect x="219.5" y="319.5" width="8" height="8" fill="#50e4f8"/><rect x="227.5" y="319.5" width="8" height="8" fill="#50e4f8"/><rect x="235.5" y="319.5" width="8" height="8" fill="#50e4f8"/><rect x="243.5" y="319.5" width="8" height="8" fill="#50e4f8"/><rect x="251.5" y="319.5" width="8" height="8" fill="#50e4f7"/><rect x="259.5" y="319.5" width="8" height="8" fill="#50e4f7"/><rect x="267.5" y="319.5" width="8" height="8" fill="#50e5f6"/><rect x="275.5" y="319.5" width="8" height="8" fill="#50e5f6"/><rect x="283.5" y="319.5" width="8" height="8" fill="#50e5f5"/><rect x="291.5" y="319.5" width="8" height="8" fill="#50e5f5"/><rect x="299.5" y="319.5" width="8" height="8" fill="#50e5f4"/><rect x="307.5" y="319.5" width="8" height="8" fill="#50e5f4"/><rect x="315.5" y="319.5" width="8" height="8" fill="#50e6f3"/><rect x="323.5" y="319.5" width="8" height="8" fill="#50e6f3"/><rect x="-4.5" y="327.5" width="8" height="8" fill="#51bcf6"/><rect x="3.5" y="327.5" width="8" height="8" fill="#51bdf6"/><rect x="11.5" y="327.5" width="8" height="8" fill="#51bef6"/><rect x="19.5" y="327.5" width="8" height="8" fill="#51c0f6"/><rect x="27.5" y="327.5" width="8" height="8" fill="#51c1f6"/><rect x="35.5" y="327.5" width="8" height="8" fill="#52c2f6"/><rect x="43.5" y="327.5" width="8" height="8" fill="#52c3f6"/><rect x="51.5" y="327.5" width="8" height="8" fill="#52c4f6"/><rect x="59.5" y="327.5" width="8" height="8" fill="#52c6f6"/><rect x="67.5" y="327.5" width="8" height="8" fill="#52c8f6"/><rect x="75.5" y="327.5" width="8" height="8" fill="#52cbf6"/><rect x="83.5" y="327.5" width="8" height="8" fill="#51d1f7"/><rect x="91.5" y="327.5" width="8" height="8" fill="#51d7f7"/><rect x="99.5" y="327.5" width="8" height="8" fill="#50def8"/><rect x="107.5" y="327.5" width="8" height="8" fill="#50e4f8"/><rect x="115.5" y="327.5" width="8" height="8" fill="#50e8ee"/><rect x="123.5" y="327.5" width="8" height="8" fill="#50ebe3"/><rect x="131.5" y="327.5" width="8" height="8" fill="#51ecda"/><rect x="139.5" y="327.5" width="8" height="8" fill="#52ebcf"/><rect x="147.5" y="327.5" width="8" height="8" fill="#52ebcd"/><rect x="155.5" y="327.5" width="8" height="8" fill="#52ebca"/><rect x="163.5" y="327.5" width="8" height="8" fill="#51ecd8"/><rect x="171.5" y="327.5" width="8" height="8" fill="#50ebe3"/><rect x="179.5" y="327.5" width="8" height="8" fill="#51ecda"/><rect x="187.5" y="327.5" width="8" height="8" fill="#52ebcf"/><rect x="195.5" y="327.5" width="8" height="8" fill="#54eab8"/><rect x="203.5" y="327.5" width="8" height="8" fill="#59e8a2"/><rect x="211.5" y="327.5" width="8" height="8" fill="#51ecd8"/><rect x="219.5" y="327.5" width="8" height="8" fill="#50e4f8"/><rect x="227.5" y="327.5" width="8" height="8" fill="#50e4f8"/><rect x="235.5" y="327.5" width="8" height="8" fill="#50e4f7"/><rect x="243.5" y="327.5" width="8" height="8" fill="#50e4f7"/><rect x="251.5" y="327.5" width="8" height="8" fill="#50e4f7"/><rect x="259.5" y="327.5" width="8" height="8" fill="#50e5f6"/><rect x="267.5" y="327.5" width="8" height="8" fill="#50e5f6"/><rect x="275.5" y="327.5" width="8" height="8" fill="#50e5f5"/><rect x="283.5" y="327.5" width="8" height="8" fill="#50e5f5"/><rect x="291.5" y="327.5" width="8" height="8" fill="#50e5f4"/><rect x="299.5" y="327.5" width="8" height="8" fill="#50e5f4"/><rect x="307.5" y="327.5" width="8" height="8" fill="#50e6f3"/><rect x="315.5" y="327.5" width="8" height="8" fill="#50e6f3"/><rect x="323.5" y="327.5" width="8" height="8" fill="#50e6f3"/><rect x="-4.5" y="335.5" width="8" height="8" fill="#51bbf6"/><rect x="3.5" y="335.5" width="8" height="8" fill="#51bcf6"/><rect x="11.5" y="335.5" width="8" height="8" fill="#51bef6"/><rect x="19.5" y="335.5" width="8" height="8" fill="#51bff6"/><rect x="27.5" y="335.5" width="8" height="8" fill="#51c0f6"/><rect x="35.5" y="335.5" width="8" height="8" fill="#52c1f6"/><rect x="43.5" y="335.5" width="8" height="8" fill="#52c3f6"/><rect x="51.5" y="335.5" width="8" height="8" fill="#52c4f6"/><rect x="59.5" y="335.5" width="8" height="8" fill="#52c5f6"/><rect x="67.5" y="335.5" width="8" height="8" fill="#52c7f6"/><rect x="75.5" y="335.5" width="8" height="8" fill="#52c8f6"/><rect x="83.5" y="335.5" width="8" height="8" fill="#52cff6"/><rect x="91.5" y="335.5" width="8" height="8" fill="#51d6f7"/><rect x="99.5" y="335.5" width="8" height="8" fill="#50ddf8"/><rect x="107.5" y="335.5" width="8" height="8" fill="#50e4f8"/><rect x="115.5" y="335.5" width="8" height="8" fill="#50e8ec"/><rect x="123.5" y="335.5" width="8" height="8" fill="#50ece1"/><rect x="131.5" y="335.5" width="8" height="8" fill="#52ebca"/><rect x="139.5" y="335.5" width="8" height="8" fill="#54eab4"/><rect x="147.5" y="335.5" width="8" height="8" fill="#54eab4"/><rect x="155.5" y="335.5" width="8" height="8" fill="#54eab4"/><rect x="163.5" y="335.5" width="8" height="8" fill="#52ebca"/><rect x="171.5" y="335.5" width="8" height="8" fill="#50ece1"/><rect x="179.5" y="335.5" width="8" height="8" fill="#52ebca"/><rect x="187.5" y="335.5" width="8" height="8" fill="#54eab4"/><rect x="195.5" y="335.5" width="8" height="8" fill="#61e687"/><rect x="203.5" y="335.5" width="8" height="8" fill="#6ee25a"/><rect x="211.5" y="335.5" width="8" height="8" fill="#54eab4"/><rect x="219.5" y="335.5" width="8" height="8" fill="#50e4f8"/><rect x="227.5" y="335.5" width="8" height="8" fill="#50e4f7"/><rect x="235.5" y="335.5" width="8" height="8" fill="#50e4f7"/><rect x="243.5" y="335.5" width="8" height="8" fill="#50e5f7"/><rect x="251.5" y="335.5" width="8" height="8" fill="#50e5f6"/><rect x="259.5" y="335.5" width="8" height="8" fill="#50e5f6"/><rect x="267.5" y="335.5" width="8" height="8" fill="#50e5f5"/><rect x="275.5" y="335.5" width="8" height="8" fill="#50e5f5"/><rect x="283.5" y="335.5" width="8" height="8" fill="#50e5f4"/><rect x="291.5" y="335.5" width="8" height="8" fill="#50e5f4"/><rect x="299.5" y="335.5" width="8" height="8" fill="#50e6f3"/><rect x="307.5" y="335.5" width="8" height="8" fill="#50e6f3"/><rect x="315.5" y="335.5" width="8" height="8" fill="#50e6f2"/><rect x="323.5" y="335.5" width="8" height="8" fill="#50e6f2"/><rect x="-4.5" y="343.5" width="8" height="8" fill="#51baf6"/><rect x="3.5" y="343.5" width="8" height="8" fill="#51bbf6"/><rect x="11.5" y="343.5" width="8" height="8" fill="#51bdf6"/><rect x="19.5" y="343.5" width="8" height="8" fill="#51bef6"/><rect x="27.5" y="343.5" width="8" height="8" fill="#51c0f6"/><rect x="35.5" y="343.5" width="8" height="8" fill="#52c1f6"/><rect x="43.5" y="343.5" width="8" height="8" fill="#52c2f6"/><rect x="51.5" y="343.5" width="8" height="8" fill="#52c4f6"/><rect x="59.5" y="343.5" width="8" height="8" fill="#52c5f6"/><rect x="67.5" y="343.5" width="8" height="8" fill="#52c7f6"/><rect x="75.5" y="343.5" width="8" height="8" fill="#52c8f6"/><rect x="83.5" y="343.5" width="8" height="8" fill="#51d2f7"/><rect x="91.5" y="343.5" width="8" height="8" fill="#50ddf8"/><rect x="99.5" y="343.5" width="8" height="8" fill="#50e4f8"/><rect x="107.5" y="343.5" width="8" height="8" fill="#50e8ec"/><rect x="115.5" y="343.5" width="8" height="8" fill="#51ecd6"/><rect x="123.5" y="343.5" width="8" height="8" fill="#54eab4"/><rect x="131.5" y="343.5" width="8" height="8" fill="#5ae89e"/><rect x="139.5" y="343.5" width="8" height="8" fill="#61e687"/><rect x="147.5" y="343.5" width="8" height="8" fill="#61e687"/><rect x="155.5" y="343.5" width="8" height="8" fill="#61e687"/><rect x="163.5" y="343.5" width="8" height="8" fill="#57e9a9"/><rect x="171.5" y="343.5" width="8" height="8" fill="#52ebca"/><rect x="179.5" y="343.5" width="8" height="8" fill="#53eabf"/><rect x="187.5" y="343.5" width="8" height="8" fill="#54eab4"/><rect x="195.5" y="343.5" width="8" height="8" fill="#5ee792"/><rect x="203.5" y="343.5" width="8" height="8" fill="#68e470"/><rect x="211.5" y="343.5" width="8" height="8" fill="#53eabf"/><rect x="219.5" y="343.5" width="8" height="8" fill="#50e4f8"/><rect x="227.5" y="343.5" width="8" height="8" fill="#50e4f7"/><rect x="235.5" y="343.5" width="8" height="8" fill="#50e5f6"/><rect x="243.5" y="343.5" width="8" height="8" fill="#50e5f6"/><rect x="251.5" y="343.5" width="8" height="8" fill="#50e5f6"/><rect x="259.5" y="343.5" width="8" height="8" fill="#50e5f5"/><rect x="267.5" y="343.5" width="8" height="8" fill="#50e5f5"/><rect x="275.5" y="343.5" width="8" height="8" fill="#50e5f4"/><rect x="283.5" y="343.5" width="8" height="8" fill="#50e5f4"/><rect x="291.5" y="343.5" width="8" height="8" fill="#50e6f3"/><rect x="299.5" y="343.5" width="8" height="8" fill="#50e6f3"/><rect x="307.5" y="343.5" width="8" height="8" fill="#50e6f2"/><rect x="315.5" y="343.5" width="8" height="8" fill="#50e6f2"/><rect x="323.5" y="343.5" width="8" height="8" fill="#50e6f2"/><rect x="-4.5" y="351.5" width="8" height="8" fill="#51b9f5"/><rect x="3.5" y="351.5" width="8" height="8" fill="#51bbf6"/><rect x="11.5" y="351.5" width="8" height="8" fill="#51bcf6"/><rect x="19.5" y="351.5" width="8" height="8" fill="#51bef6"/><rect x="27.5" y="351.5" width="8" height="8" fill="#51bff6"/><rect x="35.5" y="351.5" width="8" height="8" fill="#51c1f6"/><rect x="43.5" y="351.5" width="8" height="8" fill="#52c2f6"/><rect x="51.5" y="351.5" width="8" height="8" fill="#52c4f6"/><rect x="59.5" y="351.5" width="8" height="8" fill="#52c5f6"/><rect x="67.5" y="351.5" width="8" height="8" fill="#52c7f6"/><rect x="75.5" y="351.5" width="8" height="8" fill="#52c8f6"/><rect x="83.5" y="351.5" width="8" height="8" fill="#51d6f7"/><rect x="91.5" y="351.5" width="8" height="8" fill="#50e4f8"/><rect x="99.5" y="351.5" width="8" height="8" fill="#50e8ec"/><rect x="107.5" y="351.5" width="8" height="8" fill="#50ece1"/><rect x="115.5" y="351.5" width="8" height="8" fill="#54eab4"/><rect x="123.5" y="351.5" width="8" height="8" fill="#61e687"/><rect x="131.5" y="351.5" width="8" height="8" fill="#68e470"/><rect x="139.5" y="351.5" width="8" height="8" fill="#6ee25a"/><rect x="147.5" y="351.5" width="8" height="8" fill="#6ee25a"/><rect x="155.5" y="351.5" width="8" height="8" fill="#6ee25a"/><rect x="163.5" y="351.5" width="8" height="8" fill="#61e687"/><rect x="171.5" y="351.5" width="8" height="8" fill="#54eab4"/><rect x="179.5" y="351.5" width="8" height="8" fill="#54eab4"/><rect x="187.5" y="351.5" width="8" height="8" fill="#54eab4"/><rect x="195.5" y="351.5" width="8" height="8" fill="#5ae89e"/><rect x="203.5" y="351.5" width="8" height="8" fill="#61e687"/><rect x="211.5" y="351.5" width="8" height="8" fill="#52ebca"/><rect x="219.5" y="351.5" width="8" height="8" fill="#50e4f8"/><rect x="227.5" y="351.5" width="8" height="8" fill="#50e4f7"/><rect x="235.5" y="351.5" width="8" height="8" fill="#50e5f6"/><rect x="243.5" y="351.5" width="8" height="8" fill="#50e5f5"/><rect x="251.5" y="351.5" width="8" height="8" fill="#50e5f5"/><rect x="259.5" y="351.5" width="8" height="8" fill="#50e5f5"/><rect x="267.5" y="351.5" width="8" height="8" fill="#50e5f4"/><rect x="275.5" y="351.5" width="8" height="8" fill="#50e6f4"/><rect x="283.5" y="351.5" width="8" height="8" fill="#50e6f3"/><rect x="291.5" y="351.5" width="8" height="8" fill="#50e6f3"/><rect x="299.5" y="351.5" width="8" height="8" fill="#50e6f2"/><rect x="307.5" y="351.5" width="8" height="8" fill="#50e6f2"/><rect x="315.5" y="351.5" width="8" height="8" fill="#50e6f1"/><rect x="323.5" y="351.5" width="8" height="8" fill="#50e6f1"/><rect x="-4.5" y="359.5" width="8" height="8" fill="#51b8f5"/><rect x="3.5" y="359.5" width="8" height="8" fill="#51baf5"/><rect x="11.5" y="359.5" width="8" height="8" fill="#51bbf6"/><rect x="19.5" y="359.5" width="8" height="8" fill="#51bdf6"/><rect x="27.5" y="359.5" width="8" height="8" fill="#51bef6"/><rect x="35.5" y="359.5" width="8" height="8" fill="#51c0f6"/><rect x="43.5" y="359.5" width="8" height="8" fill="#52c2f6"/><rect x="51.5" y="359.5" width="8" height="8" fill="#52c3f6"/><rect x="59.5" y="359.5" width="8" height="8" fill="#52c5f6"/><rect x="67.5" y="359.5" width="8" height="8" fill="#52c6f6"/><rect x="75.5" y="359.5" width="8" height="8" fill="#52c8f6"/><rect x="83.5" y="359.5" width="8" height="8" fill="#51d6f7"/><rect x="91.5" y="359.5" width="8" height="8" fill="#50e4f8"/><rect x="99.5" y="359.5" width="8" height="8" fill="#50e8ec"/><rect x="107.5" y="359.5" width="8" height="8" fill="#50ece1"/><rect x="115.5" y="359.5" width="8" height="8" fill="#57e9a9"/><rect x="123.5" y="359.5" width="8" height="8" fill="#68e470"/><rect x="131.5" y="359.5" width="8" height="8" fill="#6be365"/><rect x="139.5" y="359.5" width="8" height="8" fill="#6ee25a"/><rect x="147.5" y="359.5" width="8" height="8" fill="#6de25e"/><rect x="155.5" y="359.5" width="8" height="8" fill="#6be363"/><rect x="163.5" y="359.5" width="8" height="8" fill="#61e687"/><rect x="171.5" y="359.5" width="8" height="8" fill="#57e9ab"/><rect x="179.5" y="359.5" width="8" height="8" fill="#55eab0"/><rect x="187.5" y="359.5" width="8" height="8" fill="#54eab4"/><rect x="195.5" y="359.5" width="8" height="8" fill="#54eab4"/><rect x="203.5" y="359.5" width="8" height="8" fill="#54eab4"/><rect x="211.5" y="359.5" width="8" height="8" fill="#50ece1"/><rect x="219.5" y="359.5" width="8" height="8" fill="#50e4f8"/><rect x="227.5" y="359.5" width="8" height="8" fill="#50e4f7"/><rect x="235.5" y="359.5" width="8" height="8" fill="#50e5f5"/><rect x="243.5" y="359.5" width="8" height="8" fill="#50e5f5"/><rect x="251.5" y="359.5" width="8" height="8" fill="#50e5f5"/><rect x="259.5" y="359.5" width="8" height="8" fill="#50e5f4"/><rect x="267.5" y="359.5" width="8" height="8" fill="#50e6f4"/><rect x="275.5" y="359.5" width="8" height="8" fill="#50e6f3"/><rect x="283.5" y="359.5" width="8" height="8" fill="#50e6f3"/><rect x="291.5" y="359.5" width="8" height="8" fill="#50e6f2"/><rect x="299.5" y="359.5" width="8" height="8" fill="#50e6f2"/><rect x="307.5" y="359.5" width="8" height="8" fill="#50e6f1"/><rect x="315.5" y="359.5" width="8" height="8" fill="#50e6f1"/><rect x="323.5" y="359.5" width="8" height="8" fill="#50e6f1"/><rect x="-4.5" y="367.5" width="8" height="8" fill="#51b7f5"/><rect x="3.5" y="367.5" width="8" height="8" fill="#51b9f5"/><rect x="11.5" y="367.5" width="8" height="8" fill="#51bbf6"/><rect x="19.5" y="367.5" width="8" height="8" fill="#51bcf6"/><rect x="27.5" y="367.5" width="8" height="8" fill="#51bef6"/><rect x="35.5" y="367.5" width="8" height="8" fill="#51c0f6"/><rect x="43.5" y="367.5" width="8" height="8" fill="#52c1f6"/><rect x="51.5" y="367.5" width="8" height="8" fill="#52c3f6"/><rect x="59.5" y="367.5" width="8" height="8" fill="#52c5f6"/><rect x="67.5" y="367.5" width="8" height="8" fill="#52c6f6"/><rect x="75.5" y="367.5" width="8" height="8" fill="#52c8f6"/><rect x="83.5" y="367.5" width="8" height="8" fill="#51d6f7"/><rect x="91.5" y="367.5" width="8" height="8" fill="#50e4f8"/><rect x="99.5" y="367.5" width="8" height="8" fill="#50e8ec"/><rect x="107.5" y="367.5" width="8" height="8" fill="#50ece1"/><rect x="115.5" y="367.5" width="8" height="8" fill="#5ae89e"/><rect x="123.5" y="367.5" width="8" height="8" fill="#6ee25a"/><rect x="131.5" y="367.5" width="8" height="8" fill="#6ee25a"/><rect x="139.5" y="367.5" width="8" height="8" fill="#6ee25a"/><rect x="147.5" y="367.5" width="8" height="8" fill="#6be363"/><rect x="155.5" y="367.5" width="8" height="8" fill="#69e46c"/><rect x="163.5" y="367.5" width="8" height="8" fill="#61e687"/><rect x="171.5" y="367.5" width="8" height="8" fill="#59e8a2"/><rect x="179.5" y="367.5" width="8" height="8" fill="#57e9ab"/><rect x="187.5" y="367.5" width="8" height="8" fill="#54eab4"/><rect x="195.5" y="367.5" width="8" height="8" fill="#52ebca"/><rect x="203.5" y="367.5" width="8" height="8" fill="#50ece1"/><rect x="211.5" y="367.5" width="8" height="8" fill="#50e8ec"/><rect x="219.5" y="367.5" width="8" height="8" fill="#50e4f8"/><rect x="227.5" y="367.5" width="8" height="8" fill="#50e5f6"/><rect x="235.5" y="367.5" width="8" height="8" fill="#50e5f5"/><rect x="243.5" y="367.5" width="8" height="8" fill="#50e5f4"/><rect x="251.5" y="367.5" width="8" height="8" fill="#50e5f4"/><rect x="259.5" y="367.5" width="8" height="8" fill="#50e6f4"/><rect x="267.5" y="367.5" width="8" height="8" fill="#50e6f3"/><rect x="275.5" y="367.5" width="8" height="8" fill="#50e6f3"/><rect x="283.5" y="367.5" width="8" height="8" fill="#50e6f2"/><rect x="291.5" y="367.5" width="8" height="8" fill="#50e6f2"/><rect x="299.5" y="367.5" width="8" height="8" fill="#50e6f1"/><rect x="307.5" y="367.5" width="8" height="8" fill="#50e7f1"/><rect x="315.5" y="367.5" width="8" height="8" fill="#50e7f0"/><rect x="323.5" y="367.5" width="8" height="8" fill="#50e7f0"/><rect x="-4.5" y="375.5" width="8" height="8" fill="#51b6f5"/><rect x="3.5" y="375.5" width="8" height="8" fill="#51b8f5"/><rect x="11.5" y="375.5" width="8" height="8" fill="#51baf5"/><rect x="19.5" y="375.5" width="8" height="8" fill="#51bcf6"/><rect x="27.5" y="375.5" width="8" height="8" fill="#51bdf6"/><rect x="35.5" y="375.5" width="8" height="8" fill="#51bff6"/><rect x="43.5" y="375.5" width="8" height="8" fill="#51c1f6"/><rect x="51.5" y="375.5" width="8" height="8" fill="#52c3f6"/><rect x="59.5" y="375.5" width="8" height="8" fill="#52c4f6"/><rect x="67.5" y="375.5" width="8" height="8" fill="#52caf6"/><rect x="75.5" y="375.5" width="8" height="8" fill="#52cff6"/><rect x="83.5" y="375.5" width="8" height="8" fill="#51daf7"/><rect x="91.5" y="375.5" width="8" height="8" fill="#50e4f8"/><rect x="99.5" y="375.5" width="8" height="8" fill="#50eae7"/><rect x="107.5" y="375.5" width="8" height="8" fill="#52ebca"/><rect x="115.5" y="375.5" width="8" height="8" fill="#5ee792"/><rect x="123.5" y="375.5" width="8" height="8" fill="#6ee25a"/><rect x="131.5" y="375.5" width="8" height="8" fill="#6ee25a"/><rect x="139.5" y="375.5" width="8" height="8" fill="#6ee25a"/><rect x="147.5" y="375.5" width="8" height="8" fill="#6ae368"/><rect x="155.5" y="375.5" width="8" height="8" fill="#66e475"/><rect x="163.5" y="375.5" width="8" height="8" fill="#60e68c"/><rect x="171.5" y="375.5" width="8" height="8" fill="#59e8a2"/><rect x="179.5" y="375.5" width="8" height="8" fill="#55eab0"/><rect x="187.5" y="375.5" width="8" height="8" fill="#53eabd"/><rect x="195.5" y="375.5" width="8" height="8" fill="#52ebcf"/><rect x="203.5" y="375.5" width="8" height="8" fill="#50ece1"/><rect x="211.5" y="375.5" width="8" height="8" fill="#50e8ec"/><rect x="219.5" y="375.5" width="8" height="8" fill="#50e4f8"/><rect x="227.5" y="375.5" width="8" height="8" fill="#50e5f6"/><rect x="235.5" y="375.5" width="8" height="8" fill="#50e5f4"/><rect x="243.5" y="375.5" width="8" height="8" fill="#50e5f4"/><rect x="251.5" y="375.5" width="8" height="8" fill="#50e6f4"/><rect x="259.5" y="375.5" width="8" height="8" fill="#50e6f3"/><rect x="267.5" y="375.5" width="8" height="8" fill="#50e6f3"/><rect x="275.5" y="375.5" width="8" height="8" fill="#50e6f2"/><rect x="283.5" y="375.5" width="8" height="8" fill="#50e6f2"/><rect x="291.5" y="375.5" width="8" height="8" fill="#50e6f1"/><rect x="299.5" y="375.5" width="8" height="8" fill="#50e7f1"/><rect x="307.5" y="375.5" width="8" height="8" fill="#50e7f0"/><rect x="315.5" y="375.5" width="8" height="8" fill="#50e7f0"/><rect x="323.5" y="375.5" width="8" height="8" fill="#50e7f0"/><rect x="-4.5" y="383.5" width="8" height="8" fill="#51b5f5"/><rect x="3.5" y="383.5" width="8" height="8" fill="#51b7f5"/><rect x="11.5" y="383.5" width="8" height="8" fill="#51b9f5"/><rect x="19.5" y="383.5" width="8" height="8" fill="#51bbf6"/><rect x="27.5" y="383.5" width="8" height="8" fill="#51bdf6"/><rect x="35.5" y="383.5" width="8" height="8" fill="#51bff6"/><rect x="43.5" y="383.5" width="8" height="8" fill="#51c1f6"/><rect x="51.5" y="383.5" width="8" height="8" fill="#52c2f6"/><rect x="59.5" y="383.5" width="8" height="8" fill="#52c4f6"/><rect x="67.5" y="383.5" width="8" height="8" fill="#52cdf6"/><rect x="75.5" y="383.5" width="8" height="8" fill="#51d6f7"/><rect x="83.5" y="383.5" width="8" height="8" fill="#50ddf8"/><rect x="91.5" y="383.5" width="8" height="8" fill="#50e4f8"/><rect x="99.5" y="383.5" width="8" height="8" fill="#50ece1"/><rect x="107.5" y="383.5" width="8" height="8" fill="#54eab4"/><rect x="115.5" y="383.5" width="8" height="8" fill="#61e687"/><rect x="123.5" y="383.5" width="8" height="8" fill="#6ee25a"/><rect x="131.5" y="383.5" width="8" height="8" fill="#6ee25a"/><rect x="139.5" y="383.5" width="8" height="8" fill="#6ee25a"/><rect x="147.5" y="383.5" width="8" height="8" fill="#69e46c"/><rect x="155.5" y="383.5" width="8" height="8" fill="#64e57e"/><rect x="163.5" y="383.5" width="8" height="8" fill="#5ee790"/><rect x="171.5" y="383.5" width="8" height="8" fill="#59e8a2"/><rect x="179.5" y="383.5" width="8" height="8" fill="#54eab4"/><rect x="187.5" y="383.5" width="8" height="8" fill="#52ebc6"/><rect x="195.5" y="383.5" width="8" height="8" fill="#51ebd3"/><rect x="203.5" y="383.5" width="8" height="8" fill="#50ece1"/><rect x="211.5" y="383.5" width="8" height="8" fill="#50e8ec"/><rect x="219.5" y="383.5" width="8" height="8" fill="#50e4f8"/><rect x="227.5" y="383.5" width="8" height="8" fill="#50e5f6"/><rect x="235.5" y="383.5" width="8" height="8" fill="#50e5f4"/><rect x="243.5" y="383.5" width="8" height="8" fill="#50e6f3"/><rect x="251.5" y="383.5" width="8" height="8" fill="#50e6f3"/><rect x="259.5" y="383.5" width="8" height="8" fill="#50e6f3"/><rect x="267.5" y="383.5" width="8" height="8" fill="#50e6f2"/><rect x="275.5" y="383.5" width="8" height="8" fill="#50e6f2"/><rect x="283.5" y="383.5" width="8" height="8" fill="#50e6f1"/><rect x="291.5" y="383.5" width="8" height="8" fill="#50e7f1"/><rect x="299.5" y="383.5" width="8" height="8" fill="#50e7f0"/><rect x="307.5" y="383.5" width="8" height="8" fill="#50e7f0"/><rect x="315.5" y="383.5" width="8" height="8" fill="#50e7ef"/><rect x="323.5" y="383.5" width="8" height="8" fill="#50e7ef"/><rect x="-4.5" y="391.5" width="8" height="8" fill="#51b4f5"/><rect x="3.5" y="391.5" width="8" height="8" fill="#51b6f5"/><rect x="11.5" y="391.5" width="8" height="8" fill="#51b8f5"/><rect x="19.5" y="391.5" width="8" height="8" fill="#51baf6"/><rect x="27.5" y="391.5" width="8" height="8" fill="#51bcf6"/><rect x="35.5" y="391.5" width="8" height="8" fill="#51bef6"/><rect x="43.5" y="391.5" width="8" height="8" fill="#51c0f6"/><rect x="51.5" y="391.5" width="8" height="8" fill="#52c2f6"/><rect x="59.5" y="391.5" width="8" height="8" fill="#52c4f6"/><rect x="67.5" y="391.5" width="8" height="8" fill="#52cdf6"/><rect x="75.5" y="391.5" width="8" height="8" fill="#51d6f7"/><rect x="83.5" y="391.5" width="8" height="8" fill="#50ddf8"/><rect x="91.5" y="391.5" width="8" height="8" fill="#50e4f8"/><rect x="99.5" y="391.5" width="8" height="8" fill="#50eae7"/><rect x="107.5" y="391.5" width="8" height="8" fill="#52ebca"/><rect x="115.5" y="391.5" width="8" height="8" fill="#5ae89e"/><rect x="123.5" y="391.5" width="8" height="8" fill="#68e470"/><rect x="131.5" y="391.5" width="8" height="8" fill="#6be365"/><rect x="139.5" y="391.5" width="8" height="8" fill="#6ee25a"/><rect x="147.5" y="391.5" width="8" height="8" fill="#6be363"/><rect x="155.5" y="391.5" width="8" height="8" fill="#69e46c"/><rect x="163.5" y="391.5" width="8" height="8" fill="#66e475"/><rect x="171.5" y="391.5" width="8" height="8" fill="#64e57e"/><rect x="179.5" y="391.5" width="8" height="8" fill="#5ee792"/><rect x="187.5" y="391.5" width="8" height="8" fill="#58e9a6"/><rect x="195.5" y="391.5" width="8" height="8" fill="#53ebc4"/><rect x="203.5" y="391.5" width="8" height="8" fill="#50ece1"/><rect x="211.5" y="391.5" width="8" height="8" fill="#50e8ec"/><rect x="219.5" y="391.5" width="8" height="8" fill="#50e4f8"/><rect x="227.5" y="391.5" width="8" height="8" fill="#50e5f6"/><rect x="235.5" y="391.5" width="8" height="8" fill="#50e6f3"/><rect x="243.5" y="391.5" width="8" height="8" fill="#50e6f3"/><rect x="251.5" y="391.5" width="8" height="8" fill="#50e6f2"/><rect x="259.5" y="391.5" width="8" height="8" fill="#50e6f2"/><rect x="267.5" y="391.5" width="8" height="8" fill="#50e6f2"/><rect x="275.5" y="391.5" width="8" height="8" fill="#50e6f1"/><rect x="283.5" y="391.5" width="8" height="8" fill="#50e7f1"/><rect x="291.5" y="391.5" width="8" height="8" fill="#50e7f0"/><rect x="299.5" y="391.5" width="8" height="8" fill="#50e7f0"/><rect x="307.5" y="391.5" width="8" height="8" fill="#50e7ef"/><rect x="315.5" y="391.5" width="8" height="8" fill="#50e7ef"/><rect x="323.5" y="391.5" width="8" height="8" fill="#50e7ef"/><rect x="-4.5" y="399.5" width="8" height="8" fill="#51b3f5"/><rect x="3.5" y="399.5" width="8" height="8" fill="#51b6f5"/><rect x="11.5" y="399.5" width="8" height="8" fill="#51b8f5"/><rect x="19.5" y="399.5" width="8" height="8" fill="#51baf5"/><rect x="27.5" y="399.5" width="8" height="8" fill="#51bcf6"/><rect x="35.5" y="399.5" width="8" height="8" fill="#51bef6"/><rect x="43.5" y="399.5" width="8" height="8" fill="#51c0f6"/><rect x="51.5" y="399.5" width="8" height="8" fill="#52c2f6"/><rect x="59.5" y="399.5" width="8" height="8" fill="#52c4f6"/><rect x="67.5" y="399.5" width="8" height="8" fill="#52cdf6"/><rect x="75.5" y="399.5" width="8" height="8" fill="#51d6f7"/><rect x="83.5" y="399.5" width="8" height="8" fill="#50ddf8"/><rect x="91.5" y="399.5" width="8" height="8" fill="#50e4f8"/><rect x="99.5" y="399.5" width="8" height="8" fill="#50e8ec"/><rect x="107.5" y="399.5" width="8" height="8" fill="#50ece1"/><rect x="115.5" y="399.5" width="8" height="8" fill="#54eab4"/><rect x="123.5" y="399.5" width="8" height="8" fill="#61e687"/><rect x="131.5" y="399.5" width="8" height="8" fill="#68e470"/><rect x="139.5" y="399.5" width="8" height="8" fill="#6ee25a"/><rect x="147.5" y="399.5" width="8" height="8" fill="#6ee25a"/><rect x="155.5" y="399.5" width="8" height="8" fill="#6ee25a"/><rect x="163.5" y="399.5" width="8" height="8" fill="#6ee25a"/><rect x="171.5" y="399.5" width="8" height="8" fill="#6ee25a"/><rect x="179.5" y="399.5" width="8" height="8" fill="#68e470"/><rect x="187.5" y="399.5" width="8" height="8" fill="#61e687"/><rect x="195.5" y="399.5" width="8" height="8" fill="#54eab4"/><rect x="203.5" y="399.5" width="8" height="8" fill="#50ece1"/><rect x="211.5" y="399.5" width="8" height="8" fill="#50e8ec"/><rect x="219.5" y="399.5" width="8" height="8" fill="#50e4f8"/><rect x="227.5" y="399.5" width="8" height="8" fill="#50e5f5"/><rect x="235.5" y="399.5" width="8" height="8" fill="#50e6f3"/><rect x="243.5" y="399.5" width="8" height="8" fill="#50e6f2"/><rect x="251.5" y="399.5" width="8" height="8" fill="#50e6f2"/><rect x="259.5" y="399.5" width="8" height="8" fill="#50e6f2"/><rect x="267.5" y="399.5" width="8" height="8" fill="#50e6f1"/><rect x="275.5" y="399.5" width="8" height="8" fill="#50e7f1"/><rect x="283.5" y="399.5" width="8" height="8" fill="#50e7f0"/><rect x="291.5" y="399.5" width="8" height="8" fill="#50e7f0"/><rect x="299.5" y="399.5" width="8" height="8" fill="#50e7ef"/><rect x="307.5" y="399.5" width="8" height="8" fill="#50e7ef"/><rect x="315.5" y="399.5" width="8" height="8" fill="#50e7ee"/><rect x="323.5" y="399.5" width="8" height="8" fill="#50e7ee"/><rect x="-4.5" y="407.5" width="8" height="8" fill="#50b3f5"/><rect x="3.5" y="407.5" width="8" height="8" fill="#51b5f5"/><rect x="11.5" y="407.5" width="8" height="8" fill="#51b7f5"/><rect x="19.5" y="407.5" width="8" height="8" fill="#51b9f5"/><rect x="27.5" y="407.5" width="8" height="8" fill="#51bbf6"/><rect x="35.5" y="407.5" width="8" height="8" fill="#51bdf6"/><rect x="43.5" y="407.5" width="8" height="8" fill="#51bff6"/><rect x="51.5" y="407.5" width="8" height="8" fill="#52c2f6"/><rect x="59.5" y="407.5" width="8" height="8" fill="#52c4f6"/><rect x="67.5" y="407.5" width="8" height="8" fill="#52cdf6"/><rect x="75.5" y="407.5" width="8" height="8" fill="#51d6f7"/><rect x="83.5" y="407.5" width="8" height="8" fill="#50ddf8"/><rect x="91.5" y="407.5" width="8" height="8" fill="#50e4f8"/><rect x="99.5" y="407.5" width="8" height="8" fill="#50e6f2"/><rect x="107.5" y="407.5" width="8" height="8" fill="#50e8ec"/><rect x="115.5" y="407.5" width="8" height="8" fill="#51ecd6"/><rect x="123.5" y="407.5" width="8" height="8" fill="#54eab4"/><rect x="131.5" y="407.5" width="8" height="8" fill="#5ae89e"/><rect x="139.5" y="407.5" width="8" height="8" fill="#61e687"/><rect x="147.5" y="407.5" width="8" height="8" fill="#68e470"/><rect x="155.5" y="407.5" width="8" height="8" fill="#6ee25a"/><rect x="163.5" y="407.5" width="8" height="8" fill="#82e254"/><rect x="171.5" y="407.5" width="8" height="8" fill="#96e34d"/><rect x="179.5" y="407.5" width="8" height="8" fill="#82e254"/><rect x="187.5" y="407.5" width="8" height="8" fill="#6ee25a"/><rect x="195.5" y="407.5" width="8" height="8" fill="#61e687"/><rect x="203.5" y="407.5" width="8" height="8" fill="#54eab4"/><rect x="211.5" y="407.5" width="8" height="8" fill="#51ecd6"/><rect x="219.5" y="407.5" width="8" height="8" fill="#50e8ec"/><rect x="227.5" y="407.5" width="8" height="8" fill="#50e6f1"/><rect x="235.5" y="407.5" width="8" height="8" fill="#50e5f5"/><rect x="243.5" y="407.5" width="8" height="8" fill="#50e5f5"/><rect x="251.5" y="407.5" width="8" height="8" fill="#50e5f5"/><rect x="259.5" y="407.5" width="8" height="8" fill="#50e6f3"/><rect x="267.5" y="407.5" width="8" height="8" fill="#50e7f1"/><rect x="275.5" y="407.5" width="8" height="8" fill="#50e7f0"/><rect x="283.5" y="407.5" width="8" height="8" fill="#50e7f0"/><rect x="291.5" y="407.5" width="8" height="8" fill="#50e7ef"/><rect x="299.5" y="407.5" width="8" height="8" fill="#50e7ef"/><rect x="307.5" y="407.5" width="8" height="8" fill="#50e7ee"/><rect x="315.5" y="407.5" width="8" height="8" fill="#50e8ee"/><rect x="323.5" y="407.5" width="8" height="8" fill="#50e8ee"/><rect x="-4.5" y="415.5" width="8" height="8" fill="#50b2f5"/><rect x="3.5" y="415.5" width="8" height="8" fill="#51b4f5"/><rect x="11.5" y="415.5" width="8" height="8" fill="#51b6f5"/><rect x="19.5" y="415.5" width="8" height="8" fill="#51b8f5"/><rect x="27.5" y="415.5" width="8" height="8" fill="#51bbf6"/><rect x="35.5" y="415.5" width="8" height="8" fill="#51bdf6"/><rect x="43.5" y="415.5" width="8" height="8" fill="#51bff6"/><rect x="51.5" y="415.5" width="8" height="8" fill="#52c1f6"/><rect x="59.5" y="415.5" width="8" height="8" fill="#52c4f6"/><rect x="67.5" y="415.5" width="8" height="8" fill="#52cdf6"/><rect x="75.5" y="415.5" width="8" height="8" fill="#51d6f7"/><rect x="83.5" y="415.5" width="8" height="8" fill="#50ddf8"/><rect x="91.5" y="415.5" width="8" height="8" fill="#50e4f8"/><rect x="99.5" y="415.5" width="8" height="8" fill="#50e4f8"/><rect x="107.5" y="415.5" width="8" height="8" fill="#50e4f8"/><rect x="115.5" y="415.5" width="8" height="8" fill="#50e8ec"/><rect x="123.5" y="415.5" width="8" height="8" fill="#50ece1"/><rect x="131.5" y="415.5" width="8" height="8" fill="#52ebca"/><rect x="139.5" y="415.5" width="8" height="8" fill="#54eab4"/><rect x="147.5" y="415.5" width="8" height="8" fill="#61e687"/><rect x="155.5" y="415.5" width="8" height="8" fill="#6ee25a"/><rect x="163.5" y="415.5" width="8" height="8" fill="#96e34d"/><rect x="171.5" y="415.5" width="8" height="8" fill="#bee440"/><rect x="179.5" y="415.5" width="8" height="8" fill="#aae446"/><rect x="187.5" y="415.5" width="8" height="8" fill="#96e34d"/><rect x="195.5" y="415.5" width="8" height="8" fill="#6ee25a"/><rect x="203.5" y="415.5" width="8" height="8" fill="#61e687"/><rect x="211.5" y="415.5" width="8" height="8" fill="#54eab4"/><rect x="219.5" y="415.5" width="8" height="8" fill="#50ece1"/><rect x="227.5" y="415.5" width="8" height="8" fill="#50e8ec"/><rect x="235.5" y="415.5" width="8" height="8" fill="#50e4f8"/><rect x="243.5" y="415.5" width="8" height="8" fill="#50e4f8"/><rect x="251.5" y="415.5" width="8" height="8" fill="#50e4f8"/><rect x="259.5" y="415.5" width="8" height="8" fill="#50e5f4"/><rect x="267.5" y="415.5" width="8" height="8" fill="#50e7f0"/><rect x="275.5" y="415.5" width="8" height="8" fill="#50e7f0"/><rect x="283.5" y="415.5" width="8" height="8" fill="#50e7ef"/><rect x="291.5" y="415.5" width="8" height="8" fill="#50e7ef"/><rect x="299.5" y="415.5" width="8" height="8" fill="#50e7ee"/><rect x="307.5" y="415.5" width="8" height="8" fill="#50e8ee"/><rect x="315.5" y="415.5" width="8" height="8" fill="#50e8ed"/><rect x="323.5" y="415.5" width="8" height="8" fill="#50e8ed"/><rect x="-4.5" y="423.5" width="8" height="8" fill="#50b1f5"/><rect x="3.5" y="423.5" width="8" height="8" fill="#50b3f5"/><rect x="11.5" y="423.5" width="8" height="8" fill="#51b5f5"/><rect x="19.5" y="423.5" width="8" height="8" fill="#51b8f5"/><rect x="27.5" y="423.5" width="8" height="8" fill="#51baf6"/><rect x="35.5" y="423.5" width="8" height="8" fill="#51bcf6"/><rect x="43.5" y="423.5" width="8" height="8" fill="#51bff6"/><rect x="51.5" y="423.5" width="8" height="8" fill="#52c1f6"/><rect x="59.5" y="423.5" width="8" height="8" fill="#52c3f6"/><rect x="67.5" y="423.5" width="8" height="8" fill="#52cdf6"/><rect x="75.5" y="423.5" width="8" height="8" fill="#51d6f7"/><rect x="83.5" y="423.5" width="8" height="8" fill="#50ddf8"/><rect x="91.5" y="423.5" width="8" height="8" fill="#50e4f8"/><rect x="99.5" y="423.5" width="8" height="8" fill="#50e4f8"/><rect x="107.5" y="423.5" width="8" height="8" fill="#50e4f8"/><rect x="115.5" y="423.5" width="8" height="8" fill="#50e8ec"/><rect x="123.5" y="423.5" width="8" height="8" fill="#50ece1"/><rect x="131.5" y="423.5" width="8" height="8" fill="#52ebca"/><rect x="139.5" y="423.5" width="8" height="8" fill="#54eab4"/><rect x="147.5" y="423.5" width="8" height="8" fill="#68e470"/><rect x="155.5" y="423.5" width="8" height="8" fill="#96e34d"/><rect x="163.5" y="423.5" width="8" height="8" fill="#c1e340"/><rect x="171.5" y="423.5" width="8" height="8" fill="#dfdc40"/><rect x="179.5" y="423.5" width="8" height="8" fill="#c1e340"/><rect x="187.5" y="423.5" width="8" height="8" fill="#96e34d"/><rect x="195.5" y="423.5" width="8" height="8" fill="#78e257"/><rect x="203.5" y="423.5" width="8" height="8" fill="#68e470"/><rect x="211.5" y="423.5" width="8" height="8" fill="#5ae89e"/><rect x="219.5" y="423.5" width="8" height="8" fill="#52ebca"/><rect x="227.5" y="423.5" width="8" height="8" fill="#50ece1"/><rect x="235.5" y="423.5" width="8" height="8" fill="#50e8ec"/><rect x="243.5" y="423.5" width="8" height="8" fill="#50e6f2"/><rect x="251.5" y="423.5" width="8" height="8" fill="#50e4f8"/><rect x="259.5" y="423.5" width="8" height="8" fill="#50e5f4"/><rect x="267.5" y="423.5" width="8" height="8" fill="#50e7f0"/><rect x="275.5" y="423.5" width="8" height="8" fill="#50e7ef"/><rect x="283.5" y="423.5" width="8" height="8" fill="#50e7ef"/><rect x="291.5" y="423.5" width="8" height="8" fill="#50e7ee"/><rect x="299.5" y="423.5" width="8" height="8" fill="#50e8ee"/><rect x="307.5" y="423.5" width="8" height="8" fill="#50e8ed"/><rect x="315.5" y="423.5" width="8" height="8" fill="#50e8ed"/><rect x="323.5" y="423.5" width="8" height="8" fill="#50e8ed"/><rect x="-4.5" y="431.5" width="8" height="8" fill="#50b0f5"/><rect x="3.5" y="431.5" width="8" height="8" fill="#50b2f5"/><rect x="11.5" y="431.5" width="8" height="8" fill="#51b5f5"/><rect x="19.5" y="431.5" width="8" height="8" fill="#51b7f5"/><rect x="27.5" y="431.5" width="8" height="8" fill="#51b9f5"/><rect x="35.5" y="431.5" width="8" height="8" fill="#51bcf6"/><rect x="43.5" y="431.5" width="8" height="8" fill="#51bef6"/><rect x="51.5" y="431.5" width="8" height="8" fill="#51c1f6"/><rect x="59.5" y="431.5" width="8" height="8" fill="#52c3f6"/><rect x="67.5" y="431.5" width="8" height="8" fill="#52cdf6"/><rect x="75.5" y="431.5" width="8" height="8" fill="#51d6f7"/><rect x="83.5" y="431.5" width="8" height="8" fill="#50ddf8"/><rect x="91.5" y="431.5" width="8" height="8" fill="#50e4f8"/><rect x="99.5" y="431.5" width="8" height="8" fill="#50e4f8"/><rect x="107.5" y="431.5" width="8" height="8" fill="#50e4f8"/><rect x="115.5" y="431.5" width="8" height="8" fill="#50e8ec"/><rect x="123.5" y="431.5" width="8" height="8" fill="#50ece1"/><rect x="131.5" y="431.5" width="8" height="8" fill="#52ebca"/><rect x="139.5" y="431.5" width="8" height="8" fill="#54eab4"/><rect x="147.5" y="431.5" width="8" height="8" fill="#6ee25a"/><rect x="155.5" y="431.5" width="8" height="8" fill="#bee440"/><rect x="163.5" y="431.5" width="8" height="8" fill="#dfdc40"/><rect x="171.5" y="431.5" width="8" height="8" fill="#f7ca40"/><rect x="179.5" y="431.5" width="8" height="8" fill="#d1df40"/><rect x="187.5" y="431.5" width="8" height="8" fill="#96e34d"/><rect x="195.5" y="431.5" width="8" height="8" fill="#82e254"/><rect x="203.5" y="431.5" width="8" height="8" fill="#6ee25a"/><rect x="211.5" y="431.5" width="8" height="8" fill="#61e687"/><rect x="219.5" y="431.5" width="8" height="8" fill="#54eab4"/><rect x="227.5" y="431.5" width="8" height="8" fill="#52ebca"/><rect x="235.5" y="431.5" width="8" height="8" fill="#50ece1"/><rect x="243.5" y="431.5" width="8" height="8" fill="#50e8ec"/><rect x="251.5" y="431.5" width="8" height="8" fill="#50e4f8"/><rect x="259.5" y="431.5" width="8" height="8" fill="#50e6f4"/><rect x="267.5" y="431.5" width="8" height="8" fill="#50e7ef"/><rect x="275.5" y="431.5" width="8" height="8" fill="#50e7ef"/><rect x="283.5" y="431.5" width="8" height="8" fill="#50e7ee"/><rect x="291.5" y="431.5" width="8" height="8" fill="#50e8ee"/><rect x="299.5" y="431.5" width="8" height="8" fill="#50e8ed"/><rect x="307.5" y="431.5" width="8" height="8" fill="#50e8ed"/><rect x="315.5" y="431.5" width="8" height="8" fill="#50e8ec"/><rect x="323.5" y="431.5" width="8" height="8" fill="#50e8ec"/><rect x="-4.5" y="439.5" width="8" height="8" fill="#50aff5"/><rect x="3.5" y="439.5" width="8" height="8" fill="#50b1f5"/><rect x="11.5" y="439.5" width="8" height="8" fill="#51b4f5"/><rect x="19.5" y="439.5" width="8" height="8" fill="#51b6f5"/><rect x="27.5" y="439.5" width="8" height="8" fill="#51b9f5"/><rect x="35.5" y="439.5" width="8" height="8" fill="#51bbf6"/><rect x="43.5" y="439.5" width="8" height="8" fill="#51bef6"/><rect x="51.5" y="439.5" width="8" height="8" fill="#51c0f6"/><rect x="59.5" y="439.5" width="8" height="8" fill="#52c3f6"/><rect x="67.5" y="439.5" width="8" height="8" fill="#52ccf6"/><rect x="75.5" y="439.5" width="8" height="8" fill="#51d6f7"/><rect x="83.5" y="439.5" width="8" height="8" fill="#50ddf8"/><rect x="91.5" y="439.5" width="8" height="8" fill="#50e4f8"/><rect x="99.5" y="439.5" width="8" height="8" fill="#50e4f8"/><rect x="107.5" y="439.5" width="8" height="8" fill="#50e4f8"/><rect x="115.5" y="439.5" width="8" height="8" fill="#50e7ef"/><rect x="123.5" y="439.5" width="8" height="8" fill="#50eae6"/><rect x="131.5" y="439.5" width="8" height="8" fill="#51ebd3"/><rect x="139.5" y="439.5" width="8" height="8" fill="#53eabd"/><rect x="147.5" y="439.5" width="8" height="8" fill="#66e475"/><rect x="155.5" y="439.5" width="8" height="8" fill="#96e34d"/><rect x="163.5" y="439.5" width="8" height="8" fill="#c1e340"/><rect x="171.5" y="439.5" width="8" height="8" fill="#dfdc40"/><rect x="179.5" y="439.5" width="8" height="8" fill="#c1e340"/><rect x="187.5" y="439.5" width="8" height="8" fill="#96e34d"/><rect x="195.5" y="439.5" width="8" height="8" fill="#82e254"/><rect x="203.5" y="439.5" width="8" height="8" fill="#6ee25a"/><rect x="211.5" y="439.5" width="8" height="8" fill="#62e682"/><rect x="219.5" y="439.5" width="8" height="8" fill="#57e9ab"/><rect x="227.5" y="439.5" width="8" height="8" fill="#52ebc6"/><rect x="235.5" y="439.5" width="8" height="8" fill="#50ece1"/><rect x="243.5" y="439.5" width="8" height="8" fill="#50e8ec"/><rect x="251.5" y="439.5" width="8" height="8" fill="#50e4f8"/><rect x="259.5" y="439.5" width="8" height="8" fill="#50e6f3"/><rect x="267.5" y="439.5" width="8" height="8" fill="#50e7ee"/><rect x="275.5" y="439.5" width="8" height="8" fill="#50e7ee"/><rect x="283.5" y="439.5" width="8" height="8" fill="#50e8ee"/><rect x="291.5" y="439.5" width="8" height="8" fill="#50e8ed"/><rect x="299.5" y="439.5" width="8" height="8" fill="#50e8ed"/><rect x="307.5" y="439.5" width="8" height="8" fill="#50e8ec"/><rect x="315.5" y="439.5" width="8" height="8" fill="#50e8ec"/><rect x="323.5" y="439.5" width="8" height="8" fill="#50e8ec"/><rect x="-4.5" y="447.5" width="8" height="8" fill="#50aef5"/><rect x="3.5" y="447.5" width="8" height="8" fill="#50b0f5"/><rect x="11.5" y="447.5" width="8" height="8" fill="#51b3f5"/><rect x="19.5" y="447.5" width="8" height="8" fill="#51b6f5"/><rect x="27.5" y="447.5" width="8" height="8" fill="#51b8f5"/><rect x="35.5" y="447.5" width="8" height="8" fill="#51bbf6"/><rect x="43.5" y="447.5" width="8" height="8" fill="#51bef6"/><rect x="51.5" y="447.5" width="8" height="8" fill="#51c0f6"/><rect x="59.5" y="447.5" width="8" height="8" fill="#52c3f6"/><rect x="67.5" y="447.5" width="8" height="8" fill="#52ccf6"/><rect x="75.5" y="447.5" width="8" height="8" fill="#51d6f7"/><rect x="83.5" y="447.5" width="8" height="8" fill="#50ddf8"/><rect x="91.5" y="447.5" width="8" height="8" fill="#50e4f8"/><rect x="99.5" y="447.5" width="8" height="8" fill="#50e4f8"/><rect x="107.5" y="447.5" width="8" height="8" fill="#50e4f8"/><rect x="115.5" y="447.5" width="8" height="8" fill="#50e6f1"/><rect x="123.5" y="447.5" width="8" height="8" fill="#50e9ea"/><rect x="131.5" y="447.5" width="8" height="8" fill="#50ecdd"/><rect x="139.5" y="447.5" width="8" height="8" fill="#52ebc6"/><rect x="147.5" y="447.5" width="8" height="8" fill="#5ee790"/><rect x="155.5" y="447.5" width="8" height="8" fill="#6ee25a"/><rect x="163.5" y="447.5" width="8" height="8" fill="#96e34d"/><rect x="171.5" y="447.5" width="8" height="8" fill="#bee440"/><rect x="179.5" y="447.5" width="8" height="8" fill="#aae446"/><rect x="187.5" y="447.5" width="8" height="8" fill="#96e34d"/><rect x="195.5" y="447.5" width="8" height="8" fill="#82e254"/><rect x="203.5" y="447.5" width="8" height="8" fill="#6ee25a"/><rect x="211.5" y="447.5" width="8" height="8" fill="#64e57e"/><rect x="219.5" y="447.5" width="8" height="8" fill="#59e8a2"/><rect x="227.5" y="447.5" width="8" height="8" fill="#53ebc2"/><rect x="235.5" y="447.5" width="8" height="8" fill="#50ece1"/><rect x="243.5" y="447.5" width="8" height="8" fill="#50e8ec"/><rect x="251.5" y="447.5" width="8" height="8" fill="#50e4f8"/><rect x="259.5" y="447.5" width="8" height="8" fill="#50e6f3"/><rect x="267.5" y="447.5" width="8" height="8" fill="#50e7ee"/><rect x="275.5" y="447.5" width="8" height="8" fill="#50e8ee"/><rect x="283.5" y="447.5" width="8" height="8" fill="#50e8ed"/><rect x="291.5" y="447.5" width="8" height="8" fill="#50e8ed"/><rect x="299.5" y="447.5" width="8" height="8" fill="#50e8ec"/><rect x="307.5" y="447.5" width="8" height="8" fill="#50e8ec"/><rect x="315.5" y="447.5" width="8" height="8" fill="#50e8eb"/><rect x="323.5" y="447.5" width="8" height="8" fill="#50e8eb"/><rect x="-4.5" y="455.5" width="8" height="8" fill="#50adf5"/><rect x="3.5" y="455.5" width="8" height="8" fill="#50b0f5"/><rect x="11.5" y="455.5" width="8" height="8" fill="#50b2f5"/><rect x="19.5" y="455.5" width="8" height="8" fill="#51b5f5"/><rect x="27.5" y="455.5" width="8" height="8" fill="#51b8f5"/><rect x="35.5" y="455.5" width="8" height="8" fill="#51baf6"/><rect x="43.5" y="455.5" width="8" height="8" fill="#51bdf6"/><rect x="51.5" y="455.5" width="8" height="8" fill="#51c0f6"/><rect x="59.5" y="455.5" width="8" height="8" fill="#52c3f6"/><rect x="67.5" y="455.5" width="8" height="8" fill="#52ccf6"/><rect x="75.5" y="455.5" width="8" height="8" fill="#51d6f7"/><rect x="83.5" y="455.5" width="8" height="8" fill="#50ddf8"/><rect x="91.5" y="455.5" width="8" height="8" fill="#50e4f8"/><rect x="99.5" y="455.5" width="8" height="8" fill="#50e4f8"/><rect x="107.5" y="455.5" width="8" height="8" fill="#50e4f8"/><rect x="115.5" y="455.5" width="8" height="8" fill="#50e6f1"/><rect x="123.5" y="455.5" width="8" height="8" fill="#50e9ea"/><rect x="131.5" y="455.5" width="8" height="8" fill="#50ece1"/><rect x="139.5" y="455.5" width="8" height="8" fill="#52ebcf"/><rect x="147.5" y="455.5" width="8" height="8" fill="#5ce899"/><rect x="155.5" y="455.5" width="8" height="8" fill="#6be363"/><rect x="163.5" y="455.5" width="8" height="8" fill="#88e352"/><rect x="171.5" y="455.5" width="8" height="8" fill="#aae446"/><rect x="179.5" y="455.5" width="8" height="8" fill="#a0e34a"/><rect x="187.5" y="455.5" width="8" height="8" fill="#96e34d"/><rect x="195.5" y="455.5" width="8" height="8" fill="#82e254"/><rect x="203.5" y="455.5" width="8" height="8" fill="#6ee25a"/><rect x="211.5" y="455.5" width="8" height="8" fill="#66e577"/><rect x="219.5" y="455.5" width="8" height="8" fill="#5de795"/><rect x="227.5" y="455.5" width="8" height="8" fill="#53eabb"/><rect x="235.5" y="455.5" width="8" height="8" fill="#50ece1"/><rect x="243.5" y="455.5" width="8" height="8" fill="#50e8ec"/><rect x="251.5" y="455.5" width="8" height="8" fill="#50e4f8"/><rect x="259.5" y="455.5" width="8" height="8" fill="#50e6f3"/><rect x="267.5" y="455.5" width="8" height="8" fill="#50e8ed"/><rect x="275.5" y="455.5" width="8" height="8" fill="#50e8ed"/><rect x="283.5" y="455.5" width="8" height="8" fill="#50e8ed"/><rect x="291.5" y="455.5" width="8" height="8" fill="#50e8ec"/><rect x="299.5" y="455.5" width="8" height="8" fill="#50e8ec"/><rect x="307.5" y="455.5" width="8" height="8" fill="#50e8eb"/><rect x="315.5" y="455.5" width="8" height="8" fill="#50e9eb"/><rect x="323.5" y="455.5" width="8" height="8" fill="#50e9eb"/><rect x="-4.5" y="463.5" width="8" height="8" fill="#50acf5"/><rect x="3.5" y="463.5" width="8" height="8" fill="#50aff5"/><rect x="11.5" y="463.5" width="8" height="8" fill="#50b2f5"/><rect x="19.5" y="463.5" width="8" height="8" fill="#51b4f5"/><rect x="27.5" y="463.5" width="8" height="8" fill="#51b7f5"/><rect x="35.5" y="463.5" width="8" height="8" fill="#51baf6"/><rect x="43.5" y="463.5" width="8" height="8" fill="#51bdf6"/><rect x="51.5" y="463.5" width="8" height="8" fill="#51c0f6"/><rect x="59.5" y="463.5" width="8" height="8" fill="#52c2f6"/><rect x="67.5" y="463.5" width="8" height="8" fill="#52ccf6"/><rect x="75.5" y="463.5" width="8" height="8" fill="#51d6f7"/><rect x="83.5" y="463.5" width="8" height="8" fill="#50ddf8"/><rect x="91.5" y="463.5" width="8" height="8" fill="#50e4f8"/><rect x="99.5" y="463.5" width="8" height="8" fill="#50e4f8"/><rect x="107.5" y="463.5" width="8" height="8" fill="#50e4f8"/><rect x="115.5" y="463.5" width="8" height="8" fill="#50e6f1"/><rect x="123.5" y="463.5" width="8" height="8" fill="#50e9ea"/><rect x="131.5" y="463.5" width="8" height="8" fill="#50ebe3"/><rect x="139.5" y="463.5" width="8" height="8" fill="#51ecd8"/><rect x="147.5" y="463.5" width="8" height="8" fill="#59e8a2"/><rect x="155.5" y="463.5" width="8" height="8" fill="#69e46c"/><rect x="163.5" y="463.5" width="8" height="8" fill="#7ae256"/><rect x="171.5" y="463.5" width="8" height="8" fill="#96e34d"/><rect x="179.5" y="463.5" width="8" height="8" fill="#96e34d"/><rect x="187.5" y="463.5" width="8" height="8" fill="#96e34d"/><rect x="195.5" y="463.5" width="8" height="8" fill="#82e254"/><rect x="203.5" y="463.5" width="8" height="8" fill="#6ee25a"/><rect x="211.5" y="463.5" width="8" height="8" fill="#68e470"/><rect x="219.5" y="463.5" width="8" height="8" fill="#61e687"/><rect x="227.5" y="463.5" width="8" height="8" fill="#54eab4"/><rect x="235.5" y="463.5" width="8" height="8" fill="#50ece1"/><rect x="243.5" y="463.5" width="8" height="8" fill="#50e8ec"/><rect x="251.5" y="463.5" width="8" height="8" fill="#50e4f8"/><rect x="259.5" y="463.5" width="8" height="8" fill="#50e6f2"/><rect x="267.5" y="463.5" width="8" height="8" fill="#50e8ed"/><rect x="275.5" y="463.5" width="8" height="8" fill="#50e8ec"/><rect x="283.5" y="463.5" width="8" height="8" fill="#50e8ec"/><rect x="291.5" y="463.5" width="8" height="8" fill="#50e8ec"/><rect x="299.5" y="463.5" width="8" height="8" fill="#50e8eb"/><rect x="307.5" y="463.5" width="8" height="8" fill="#50e9eb"/><rect x="315.5" y="463.5" width="8" height="8" fill="#50e9ea"/><rect x="323.5" y="463.5" width="8" height="8" fill="#50e9ea"/><rect x="-4.5" y="471.5" width="8" height="8" fill="#50acf5"/><rect x="3.5" y="471.5" width="8" height="8" fill="#50aff5"/><rect x="11.5" y="471.5" width="8" height="8" fill="#50b2f5"/><rect x="19.5" y="471.5" width="8" height="8" fill="#51b4f5"/><rect x="27.5" y="471.5" width="8" height="8" fill="#51b7f5"/><rect x="35.5" y="471.5" width="8" height="8" fill="#51baf6"/><rect x="43.5" y="471.5" width="8" height="8" fill="#51bdf6"/><rect x="51.5" y="471.5" width="8" height="8" fill="#51c0f6"/><rect x="59.5" y="471.5" width="8" height="8" fill="#52c2f6"/><rect x="67.5" y="471.5" width="8" height="8" fill="#52ccf6"/><rect x="75.5" y="471.5" width="8" height="8" fill="#51d6f7"/><rect x="83.5" y="471.5" width="8" height="8" fill="#50ddf8"/><rect x="91.5" y="471.5" width="8" height="8" fill="#50e4f8"/><rect x="99.5" y="471.5" width="8" height="8" fill="#50e4f8"/><rect x="107.5" y="471.5" width="8" height="8" fill="#50e4f8"/><rect x="115.5" y="471.5" width="8" height="8" fill="#50e6f1"/><rect x="123.5" y="471.5" width="8" height="8" fill="#50e9ea"/><rect x="131.5" y="471.5" width="8" height="8" fill="#50ebe3"/><rect x="139.5" y="471.5" width="8" height="8" fill="#51ecd8"/><rect x="147.5" y="471.5" width="8" height="8" fill="#59e8a2"/><rect x="155.5" y="471.5" width="8" height="8" fill="#69e46c"/><rect x="163.5" y="471.5" width="8" height="8" fill="#7ae256"/><rect x="171.5" y="471.5" width="8" height="8" fill="#96e34d"/><rect x="179.5" y="471.5" width="8" height="8" fill="#96e34d"/><rect x="187.5" y="471.5" width="8" height="8" fill="#96e34d"/><rect x="195.5" y="471.5" width="8" height="8" fill="#82e254"/><rect x="203.5" y="471.5" width="8" height="8" fill="#6ee25a"/><rect x="211.5" y="471.5" width="8" height="8" fill="#68e470"/><rect x="219.5" y="471.5" width="8" height="8" fill="#61e687"/><rect x="227.5" y="471.5" width="8" height="8" fill="#54eab4"/><rect x="235.5" y="471.5" width="8" height="8" fill="#50ece1"/><rect x="243.5" y="471.5" width="8" height="8" fill="#50e8ec"/><rect x="251.5" y="471.5" width="8" height="8" fill="#50e4f8"/><rect x="259.5" y="471.5" width="8" height="8" fill="#50e6f2"/><rect x="267.5" y="471.5" width="8" height="8" fill="#50e8ed"/><rect x="275.5" y="471.5" width="8" height="8" fill="#50e8ec"/><rect x="283.5" y="471.5" width="8" height="8" fill="#50e8ec"/><rect x="291.5" y="471.5" width="8" height="8" fill="#50e8ec"/><rect x="299.5" y="471.5" width="8" height="8" fill="#50e8eb"/><rect x="307.5" y="471.5" width="8" height="8" fill="#50e9eb"/><rect x="315.5" y="471.5" width="8" height="8" fill="#50e9ea"/><rect x="323.5" y="471.5" width="8" height="8" fill="#50e9ea"/></g>
<rect x="152" y="132" width="32" height="31" fill="#50d6f2"/>
<path d="M0.5 -0.5L0.5 7.5M7.5 -0.5L7.5 7.5M15.5 -0.5L15.5 7.5M23.5 -0.5L23.5 7.5M31.5 -0.5L31.5 7.5M39.5 -0.5L39.5 7.5M47.5 -0.5L47.5 7.5M55.5 -0.5L55.5 7.5M63.5 -0.5L63.5 7.5M71.5 -0.5L71.5 7.5M79.5 -0.5L79.5 7.5M87.5 -0.5L87.5 7.5M95.5 -0.5L95.5 7.5M103.5 -0.5L103.5 7.5M111.5 -0.5L111.5 7.5M119.5 -0.5L119.5 7.5M127.5 -0.5L127.5 7.5M135.5 -0.5L135.5 7.5M143.5 -0.5L143.5 7.5M151.5 -0.5L151.5 7.5M159.5 -0.5L159.5 7.5M167.5 -0.5L167.5 7.5M175.5 -0.5L175.5 7.5M183.5 -0.5L183.5 7.5M191.5 -0.5L191.5 7.5M199.5 -0.5L199.5 7.5M207.5 -0.5L207.5 7.5M215.5 -0.5L215.5 7.5M223.5 -0.5L223.5 7.5M231.5 -0.5L231.5 7.5M239.5 -0.5L239.5 7.5M247.5 -0.5L247.5 7.5M255.5 -0.5L255.5 7.5M263.5 -0.5L263.5 7.5M271.5 -0.5L271.5 7.5M279.5 -0.5L279.5 7.5M287.5 -0.5L287.5 7.5M295.5 -0.5L295.5 7.5M303.5 -0.5L303.5 7.5M311.5 -0.5L311.5 7.5M319.5 -0.5L319.5 7.5M327.5 -0.5L327.5 7.5M0.5 7.5L0.5 15.5M7.5 7.5L7.5 15.5M15.5 7.5L15.5 15.5M23.5 7.5L23.5 15.5M31.5 7.5L31.5 15.5M39.5 7.5L39.5 15.5M47.5 7.5L47.5 15.5M55.5 7.5L55.5 15.5M63.5 7.5L63.5 15.5M71.5 7.5L71.5 15.5M79.5 7.5L79.5 15.5M87.5 7.5L87.5 15.5M95.5 7.5L95.5 15.5M103.5 7.5L103.5 15.5M111.5 7.5L111.5 15.5M119.5 7.5L119.5 15.5M127.5 7.5L127.5 15.5M135.5 7.5L135.5 15.5M143.5 7.5L143.5 15.5M151.5 7.5L151.5 15.5M159.5 7.5L159.5 15.5M167.5 7.5L167.5 15.5M175.5 7.5L175.5 15.5M183.5 7.5L183.5 15.5M191.5 7.5L191.5 15.5M199.5 7.5L199.5 15.5M207.5 7.5L207.5 15.5M215.5 7.5L215.5 15.5M223.5 7.5L223.5 15.5M231.5 7.5L231.5 15.5M239.5 7.5L239.5 15.5M247.5 7.5L247.5 15.5M255.5 7.5L255.5 15.5M263.5 7.5L263.5 15.5M271.5 7.5L271.5 15.5M279.5 7.5L279.5 15.5M287.5 7.5L287.5 15.5M295.5 7.5L295.5 15.5M303.5 7.5L303.5 15.5M311.5 7.5L311.5 15.5M319.5 7.5L319.5 15.5M327.5 7.5L327.5 15.5M0.5 15.5L0.5 23.5M7.5 15.5L7.5 23.5M15.5 15.5L15.5 23.5M23.5 15.5L23.5 23.5M31.5 15.5L31.5 23.5M39.5 15.5L39.5 23.5M47.5 15.5L47.5 23.5M55.5 15.5L55.5 23.5M63.5 15.5L63.5 23.5M71.5 15.5L71.5 23.5M79.5 15.5L79.5 23.5M87.5 15.5L87.5 23.5M95.5 15.5L95.5 23.5M103.5 15.5L103.5 23.5M111.5 15.5L111.5 23.5M119.5 15.5L119.5 23.5M127.5 15.5L127.5 23.5M135.5 15.5L135.5 23.5M143.5 15.5L143.5 23.5M151.5 15.5L151.5 23.5M159.5 15.5L159.5 23.5M167.5 15.5L167.5 23.5M175.5 15.5L175.5 23.5M183.5 15.5L183.5 23.5M191.5 15.5L191.5 23.5M199.5 15.5L199.5 23.5M207.5 15.5L207.5 23.5M215.5 15.5L215.5 23.5M223.5 15.5L223.5 23.5M231.5 15.5L231.5 23.5M239.5 15.5L239.5 23.5M247.5 15.5L247.5 23.5M255.5 15.5L255.5 23.5M263.5 15.5L263.5 23.5M271.5 15.5L271.5 23.5M279.5 15.5L279.5 23.5M287.5 15.5L287.5 23.5M295.5 15.5L295.5 23.5M303.5 15.5L303.5 23.5M311.5 15.5L311.5 23.5M319.5 15.5L319.5 23.5M327.5 15.5L327.5 23.5M0.5 23.5L0.5 31.5M7.5 23.5L7.5 31.5M15.5 23.5L15.5 31.5M23.5 23.5L23.5 31.5M31.5 23.5L31.5 31.5M39.5 23.5L39.5 31.5M47.5 23.5L47.5 31.5M55.5 23.5L55.5 31.5M63.5 23.5L63.5 31.5M71.5 23.5L71.5 31.5M79.5 23.5L79.5 31.5M87.5 23.5L87.5 31.5M95.5 23.5L95.5 31.5M103.5 23.5L103.5 31.5M111.5 23.5L111.5 31.5M119.5 23.5L119.5 31.5M127.5 23.5L127.5 31.5M135.5 23.5L135.5 31.5M143.5 23.5L143.5 31.5M151.5 23.5L151.5 31.5M159.5 23.5L159.5 31.5M167.5 23.5L167.5 31.5M175.5 23.5L175.5 31.5M183.5 23.5L183.5 31.5M191.5 23.5L191.5 31.5M199.5 23.5L199.5 31.5M207.5 23.5L207.5 31.5M215.5 23.5L215.5 31.5M223.5 23.5L223.5 31.5M231.5 23.5L231.5 31.5M239.5 23.5L239.5 31.5M247.5 23.5L247.5 31.5M255.5 23.5L255.5 31.5M263.5 23.5L263.5 31.5M271.5 23.5L271.5 31.5M279.5 23.5L279.5 31.5M287.5 23.5L287.5 31.5M295.5 23.5L295.5 31.5M303.5 23.5L303.5 31.5M311.5 23.5L311.5 31.5M319.5 23.5L319.5 31.5M327.5 23.5L327.5 31.5M0.5 31.5L0.5 39.5M7.5 31.5L7.5 39.5M15.5 31.5L15.5 39.5M23.5 31.5L23.5 39.5M31.5 31.5L31.5 39.5M39.5 31.5L39.5 39.5M47.5 31.5L47.5 39.5M55.5 31.5L55.5 39.5M63.5 31.5L63.5 39.5M71.5 31.5L71.5 39.5M79.5 31.5L79.5 39.5M87.5 31.5L87.5 39.5M95.5 31.5L95.5 39.5M103.5 31.5L103.5 39.5M111.5 31.5L111.5 39.5M119.5 31.5L119.5 39.5M127.5 31.5L127.5 39.5M135.5 31.5L135.5 39.5M143.5 31.5L143.5 39.5M151.5 31.5L151.5 39.5M159.5 31.5L159.5 39.5M167.5 31.5L167.5 39.5M175.5 31.5L175.5 39.5M183.5 31.5L183.5 39.5M191.5 31.5L191.5 39.5M199.5 31.5L199.5 39.5M207.5 31.5L207.5 39.5M215.5 31.5L215.5 39.5M223.5 31.5L223.5 39.5M231.5 31.5L231.5 39.5M239.5 31.5L239.5 39.5M247.5 31.5L247.5 39.5M255.5 31.5L255.5 39.5M263.5 31.5L263.5 39.5M271.5 31.5L271.5 39.5M279.5 31.5L279.5 39.5M287.5 31.5L287.5 39.5M295.5 31.5L295.5 39.5M303.5 31.5L303.5 39.5M311.5 31.5L311.5 39.5M319.5 31.5L319.5 39.5M327.5 31.5L327.5 39.5M0.5 39.5L0.5 47.5M7.5 39.5L7.5 47.5M15.5 39.5L15.5 47.5M23.5 39.5L23.5 47.5M31.5 39.5L31.5 47.5M39.5 39.5L39.5 47.5M47.5 39.5L47.5 47.5M55.5 39.5L55.5 47.5M63.5 39.5L63.5 47.5M71.5 39.5L71.5 47.5M79.5 39.5L79.5 47.5M87.5 39.5L87.5 47.5M95.5 39.5L95.5 47.5M103.5 39.5L103.5 47.5M111.5 39.5L111.5 47.5M119.5 39.5L119.5 47.5M127.5 39.5L127.5 47.5M135.5 39.5L135.5 47.5M143.5 39.5L143.5 47.5M151.5 39.5L151.5 47.5M159.5 39.5L159.5 47.5M167.5 39.5L167.5 47.5M175.5 39.5L175.5 47.5M183.5 39.5L183.5 47.5M191.5 39.5L191.5 47.5M199.5 39.5L199.5 47.5M207.5 39.5L207.5 47.5M215.5 39.5L215.5 47.5M223.5 39.5L223.5 47.5M231.5 39.5L231.5 47.5M239.5 39.5L239.5 47.5M247.5 39.5L247.5 47.5M255.5 39.5L255.5 47.5M263.5 39.5L263.5 47.5M271.5 39.5L271.5 47.5M279.5 39.5L279.5 47.5M287.5 39.5L287.5 47.5M295.5 39.5L295.5 47.5M303.5 39.5L303.5 47.5M311.5 39.5L311.5 47.5M319.5 39.5L319.5 47.5M327.5 39.5L327.5 47.5M0.5 47.5L0.5 55.5M7.5 47.5L7.5 55.5M15.5 47.5L15.5 55.5M23.5 47.5L23.5 55.5M31.5 47.5L31.5 55.5M39.5 47.5L39.5 55.5M47.5 47.5L47.5 55.5M55.5 47.5L55.5 55.5M63.5 47.5L63.5 55.5M71.5 47.5L71.5 55.5M79.5 47.5L79.5 55.5M87.5 47.5L87.5 55.5M95.5 47.5L95.5 55.5M103.5 47.5L103.5 55.5M111.5 47.5L111.5 55.5M119.5 47.5L119.5 55.5M127.5 47.5L127.5 55.5M135.5 47.5L135.5 55.5M143.5 47.5L143.5 55.5M151.5 47.5L151.5 55.5M159.5 47.5L159.5 55.5M167.5 47.5L167.5 55.5M175.5 47.5L175.5 55.5M183.5 47.5L183.5 55.5M191.5 47.5L191.5 55.5M199.5 47.5L199.5 55.5M207.5 47.5L207.5 55.5M215.5 47.5L215.5 55.5M223.5 47.5L223.5 55.5M231.5 47.5L231.5 55.5M239.5 47.5L239.5 55.5M247.5 47.5L247.5 55.5M255.5 47.5L255.5 55.5M263.5 47.5L263.5 55.5M271.5 47.5L271.5 55.5M279.5 47.5L279.5 55.5M287.5 47.5L287.5 55.5M295.5 47.5L295.5 55.5M303.5 47.5L303.5 55.5M311.5 47.5L311.5 55.5M319.5 47.5L319.5 55.5M327.5 47.5L327.5 55.5M0.5 55.5L0.5 63.5M7.5 55.5L7.5 63.5M15.5 55.5L15.5 63.5M23.5 55.5L23.5 63.5M31.5 55.5L31.5 63.5M39.5 55.5L39.5 63.5M47.5 55.5L47.5 63.5M55.5 55.5L55.5 63.5M63.5 55.5L63.5 63.5M71.5 55.5L71.5 63.5M79.5 55.5L79.5 63.5M87.5 55.5L87.5 63.5M95.5 55.5L95.5 63.5M103.5 55.5L103.5 63.5M111.5 55.5L111.5 63.5M119.5 55.5L119.5 63.5M127.5 55.5L127.5 63.5M135.5 55.5L135.5 63.5M143.5 55.5L143.5 63.5M151.5 55.5L151.5 63.5M159.5 55.5L159.5 63.5M167.5 55.5L167.5 63.5M175.5 55.5L175.5 63.5M183.5 55.5L183.5 63.5M191.5 55.5L191.5 63.5M199.5 55.5L199.5 63.5M207.5 55.5L207.5 63.5M215.5 55.5L215.5 63.5M223.5 55.5L223.5 63.5M231.5 55.5L231.5 63.5M239.5 55.5L239.5 63.5M247.5 55.5L247.5 63.5M255.5 55.5L255.5 63.5M263.5 55.5L263.5 63.5M271.5 55.5L271.5 63.5M279.5 55.5L279.5 63.5M287.5 55.5L287.5 63.5M295.5 55.5L295.5 63.5M303.5 55.5L303.5 63.5M311.5 55.5L311.5 63.5M319.5 55.5L319.5 63.5M327.5 55.5L327.5 63.5M0.5 63.5L0.5 71.5M7.5 63.5L7.5 71.5M15.5 63.5L15.5 71.5M23.5 63.5L23.5 71.5M31.5 63.5L31.5 71.5M39.5 63.5L39.5 71.5M47.5 63.5L47.5 71.5M55.5 63.5L55.5 71.5M63.5 63.5L63.5 71.5M71.5 63.5L71.5 71.5M79.5 63.5L79.5 71.5M87.5 63.5L87.5 71.5M95.5 63.5L95.5 71.5M103.5 63.5L103.5 71.5M111.5 63.5L111.5 71.5M119.5 63.5L119.5 71.5M127.5 63.5L127.5 71.5M135.5 63.5L135.5 71.5M143.5 63.5L143.5 71.5M151.5 63.5L151.5 71.5M159.5 63.5L159.5 71.5M167.5 63.5L167.5 71.5M175.5 63.5L175.5 71.5M183.5 63.5L183.5 71.5M191.5 63.5L191.5 71.5M199.5 63.5L199.5 71.5M207.5 63.5L207.5 71.5M215.5 63.5L215.5 71.5M223.5 63.5L223.5 71.5M231.5 63.5L231.5 71.5M239.5 63.5L239.5 71.5M247.5 63.5L247.5 71.5M255.5 63.5L255.5 71.5M263.5 63.5L263.5 71.5M271.5 63.5L271.5 71.5M279.5 63.5L279.5 71.5M287.5 63.5L287.5 71.5M295.5 63.5L295.5 71.5M303.5 63.5L303.5 71.5M311.5 63.5L311.5 71.5M319.5 63.5L319.5 71.5M327.5 63.5L327.5 71.5M0.5 71.5L0.5 79.5M7.5 71.5L7.5 79.5M15.5 71.5L15.5 79.5M23.5 71.5L23.5 79.5M31.5 71.5L31.5 79.5M39.5 71.5L39.5 79.5M47.5 71.5L47.5 79.5M55.5 71.5L55.5 79.5M63.5 71.5L63.5 79.5M71.5 71.5L71.5 79.5M79.5 71.5L79.5 79.5M87.5 71.5L87.5 79.5M95.5 71.5L95.5 79.5M103.5 71.5L103.5 79.5M111.5 71.5L111.5 79.5M119.5 71.5L119.5 79.5M127.5 71.5L127.5 79.5M135.5 71.5L135.5 79.5M143.5 71.5L143.5 79.5M151.5 71.5L151.5 79.5M159.5 71.5L159.5 79.5M167.5 71.5L167.5 79.5M175.5 71.5L175.5 79.5M183.5 71.5L183.5 79.5M191.5 71.5L191.5 79.5M199.5 71.5L199.5 79.5M207.5 71.5L207.5 79.5M215.5 71.5L215.5 79.5M223.5 71.5L223.5 79.5M231.5 71.5L231.5 79.5M239.5 71.5L239.5 79.5M247.5 71.5L247.5 79.5M255.5 71.5L255.5 79.5M263.5 71.5L263.5 79.5M271.5 71.5L271.5 79.5M279.5 71.5L279.5 79.5M287.5 71.5L287.5 79.5M295.5 71.5L295.5 79.5M303.5 71.5L303.5 79.5M311.5 71.5L311.5 79.5M319.5 71.5L319.5 79.5M327.5 71.5L327.5 79.5M0.5 79.5L0.5 87.5M7.5 79.5L7.5 87.5M15.5 79.5L15.5 87.5M23.5 79.5L23.5 87.5M31.5 79.5L31.5 87.5M39.5 79.5L39.5 87.5M47.5 79.5L47.5 87.5M55.5 79.5L55.5 87.5M63.5 79.5L63.5 87.5M71.5 79.5L71.5 87.5M79.5 79.5L79.5 87.5M87.5 79.5L87.5 87.5M95.5 79.5L95.5 87.5M103.5 79.5L103.5 87.5M111.5 79.5L111.5 87.5M119.5 79.5L119.5 87.5M127.5 79.5L127.5 87.5M135.5 79.5L135.5 87.5M143.5 79.5L143.5 87.5M151.5 79.5L151.5 87.5M159.5 79.5L159.5 87.5M167.5 79.5L167.5 87.5M175.5 79.5L175.5 87.5M183.5 79.5L183.5 87.5M191.5 79.5L191.5 87.5M199.5 79.5L199.5 87.5M207.5 79.5L207.5 87.5M215.5 79.5L215.5 87.5M223.5 79.5L223.5 87.5M231.5 79.5L231.5 87.5M239.5 79.5L239.5 87.5M247.5 79.5L247.5 87.5M255.5 79.5L255.5 87.5M263.5 79.5L263.5 87.5M271.5 79.5L271.5 87.5M279.5 79.5L279.5 87.5M287.5 79.5L287.5 87.5M295.5 79.5L295.5 87.5M303.5 79.5L303.5 87.5M311.5 79.5L311.5 87.5M319.5 79.5L319.5 87.5M327.5 79.5L327.5 87.5M0.5 87.5L0.5 95.5M7.5 87.5L7.5 95.5M15.5 87.5L15.5 95.5M23.5 87.5L23.5 95.5M31.5 87.5L31.5 95.5M39.5 87.5L39.5 95.5M47.5 87.5L47.5 95.5M55.5 87.5L55.5 95.5M63.5 87.5L63.5 95.5M71.5 87.5L71.5 95.5M79.5 87.5L79.5 95.5M87.5 87.5L87.5 95.5M95.5 87.5L95.5 95.5M103.5 87.5L103.5 95.5M111.5 87.5L111.5 95.5M119.5 87.5L119.5 95.5M127.5 87.5L127.5 95.5M135.5 87.5L135.5 95.5M143.5 87.5L143.5 95.5M151.5 87.5L151.5 95.5M159.5 87.5L159.5 95.5M167.5 87.5L167.5 95.5M175.5 87.5L175.5 95.5M183.5 87.5L183.5 95.5M191.5 87.5L191.5 95.5M199.5 87.5L199.5 95.5M207.5 87.5L207.5 95.5M215.5 87.5L215.5 95.5M223.5 87.5L223.5 95.5M231.5 87.5L231.5 95.5M239.5 87.5L239.5 95.5M247.5 87.5L247.5 95.5M255.5 87.5L255.5 95.5M263.5 87.5L263.5 95.5M271.5 87.5L271.5 95.5M279.5 87.5L279.5 95.5M287.5 87.5L287.5 95.5M295.5 87.5L295.5 95.5M303.5 87.5L303.5 95.5M311.5 87.5L311.5 95.5M319.5 87.5L319.5 95.5M327.5 87.5L327.5 95.5M0.5 95.5L0.5 103.5M7.5 95.5L7.5 103.5M15.5 95.5L15.5 103.5M23.5 95.5L23.5 103.5M31.5 95.5L31.5 103.5M39.5 95.5L39.5 103.5M47.5 95.5L47.5 103.5M55.5 95.5L55.5 103.5M63.5 95.5L63.5 103.5M71.5 95.5L71.5 103.5M79.5 95.5L79.5 103.5M87.5 95.5L87.5 103.5M95.5 95.5L95.5 103.5M103.5 95.5L103.5 103.5M111.5 95.5L111.5 103.5M119.5 95.5L119.5 103.5M127.5 95.5L127.5 103.5M135.5 95.5L135.5 103.5M143.5 95.5L143.5 103.5M151.5 95.5L151.5 103.5M159.5 95.5L159.5 103.5M167.5 95.5L167.5 103.5M175.5 95.5L175.5 103.5M183.5 95.5L183.5 103.5M191.5 95.5L191.5 103.5M199.5 95.5L199.5 103.5M207.5 95.5L207.5 103.5M215.5 95.5L215.5 103.5M223.5 95.5L223.5 103.5M231.5 95.5L231.5 103.5M239.5 95.5L239.5 103.5M247.5 95.5L247.5 103.5M255.5 95.5L255.5 103.5M263.5 95.5L263.5 103.5M271.5 95.5L271.5 103.5M279.5 95.5L279.5 103.5M287.5 95.5L287.5 103.5M295.5 95.5L295.5 103.5M303.5 95.5L303.5 103.5M311.5 95.5L311.5 103.5M319.5 95.5L319.5 103.5M327.5 95.5L327.5 103.5M0.5 103.5L0.5 111.5M7.5 103.5L7.5 111.5M15.5 103.5L15.5 111.5M23.5 103.5L23.5 111.5M31.5 103.5L31.5 111.5M39.5 103.5L39.5 111.5M47.5 103.5L47.5 111.5M55.5 103.5L55.5 111.5M63.5 103.5L63.5 111.5M71.5 103.5L71.5 111.5M79.5 103.5L79.5 111.5M87.5 103.5L87.5 111.5M95.5 103.5L95.5 111.5M103.5 103.5L103.5 111.5M111.5 103.5L111.5 111.5M119.5 103.5L119.5 111.5M127.5 103.5L127.5 111.5M136.2 103.6L134.8 111.4M144.5 103.6L142.5 111.4M151.5 103.5L151.5 111.5M159.5 103.5L159.5 111.5M167.5 103.5L167.5 111.5M175.5 103.5L175.5 111.5M182.5 103.6L184.5 111.4M190.8 103.6L192.2 111.4M199.5 103.5L199.5 111.5M207.5 103.5L207.5 111.5M215.5 103.5L215.5 111.5M223.5 103.5L223.5 111.5M231.5 103.5L231.5 111.5M239.5 103.5L239.5 111.5M247.5 103.5L247.5 111.5M255.5 103.5L255.5 111.5M263.5 103.5L263.5 111.5M271.5 103.5L271.5 111.5M279.5 103.5L279.5 111.5M287.5 103.5L287.5 111.5M295.5 103.5L295.5 111.5M303.5 103.5L303.5 111.5M311.5 103.5L311.5 111.5M319.5 103.5L319.5 111.5M327.5 103.5L327.5 111.5M0.5 111.5L0.5 119.5M7.5 111.5L7.5 119.5M15.5 111.5L15.5 119.5M23.5 111.5L23.5 119.5M31.5 111.5L31.5 119.5M39.5 111.5L39.5 119.5M47.5 111.5L47.5 119.5M55.5 111.5L55.5 119.5M63.5 111.5L63.5 119.5M71.5 111.5L71.5 119.5M79.5 111.5L79.5 119.5M87.5 111.5L87.5 119.5M95.5 111.5L95.5 119.5M103.5 111.5L103.5 119.5M111.5 111.5L111.5 119.5M119.5 111.5L119.5 119.5M128.2 111.6L126.8 119.4M136.9 111.7L134.1 119.3M145.2 111.9L141.8 119.1M151.8 111.5L151.2 119.5M159.5 111.5L159.5 119.5M167.5 111.5L167.5 119.5M175.2 111.5L175.8 119.5M181.8 111.9L185.2 119.1M190.1 111.7L192.9 119.3M198.8 111.6L200.2 119.4M207.5 111.5L207.5 119.5M215.5 111.5L215.5 119.5M223.5 111.5L223.5 119.5M231.5 111.5L231.5 119.5M239.5 111.5L239.5 119.5M247.5 111.5L247.5 119.5M255.5 111.5L255.5 119.5M263.5 111.5L263.5 119.5M271.5 111.5L271.5 119.5M279.5 111.5L279.5 119.5M287.5 111.5L287.5 119.5M295.5 111.5L295.5 119.5M303.5 111.5L303.5 119.5M311.5 111.5L311.5 119.5M319.5 111.5L319.5 119.5M327.5 111.5L327.5 119.5M0.5 119.5L0.5 127.5M7.5 119.5L7.5 127.5M15.5 119.5L15.5 127.5M23.5 119.5L23.5 127.5M31.5 119.5L31.5 127.5M39.5 119.5L39.5 127.5M47.5 119.5L47.5 127.5M55.5 119.5L55.5 127.5M63.5 119.5L63.5 127.5M71.5 119.5L71.5 127.5M79.5 119.5L79.5 127.5M87.5 119.5L87.5 127.5M95.5 119.5L95.5 127.5M103.5 119.5L103.5 127.5M111.5 119.5L111.5 127.5M119.5 119.5L119.5 127.5M128.2 119.6L126.8 127.4M137.2 119.9L133.8 127.1M145.8 120.2L141.2 126.8M152.2 119.6L150.8 127.4M159.5 119.5L159.5 127.5M167.5 119.5L167.5 127.5M174.8 119.6L176.2 127.4M181.2 120.2L185.8 126.8M189.8 119.9L193.2 127.1M198.8 119.6L200.2 127.4M207.5 119.5L207.5 127.5M215.5 119.5L215.5 127.5M223.5 119.5L223.5 127.5M231.5 119.5L231.5 127.5M239.5 119.5L239.5 127.5M247.5 119.5L247.5 127.5M255.5 119.5L255.5 127.5M263.5 119.5L263.5 127.5M271.5 119.5L271.5 127.5M279.5 119.5L279.5 127.5M287.5 119.5L287.5 127.5M295.5 119.5L295.5 127.5M303.5 119.5L303.5 127.5M311.5 119.5L311.5 127.5M319.5 119.5L319.5 127.5M327.5 119.5L327.5 127.5M0.5 127.5L0.5 135.5M7.5 127.5L7.5 135.5M15.5 127.5L15.5 135.5M23.5 127.5L23.5 135.5M31.5 127.5L31.5 135.5M39.5 127.5L39.5 135.5M47.5 127.5L47.5 135.5M55.5 127.5L55.5 135.5M63.5 127.5L63.5 135.5M71.5 127.5L71.5 135.5M79.5 127.5L79.5 135.5M87.5 127.5L87.5 135.5M95.5 127.5L95.5 135.5M103.5 127.5L103.5 135.5M111.5 127.5L111.5 135.5M119.5 127.5L119.5 135.5M127.8 127.5L127.2 135.5M136.9 127.7L134.1 135.3M145.5 128L141.5 135M147.5 131.5L155.5 131.5M155.5 131.5L163.5 131.5M163.5 131.5L171.5 131.5M171.5 131.5L179.5 131.5M179.5 131.5L187.5 131.5M189.5 128L193.5 135M198.1 127.7L200.9 135.3M207.2 127.5L207.8 135.5M215.5 127.5L215.5 135.5M223.5 127.5L223.5 135.5M231.5 127.5L231.5 135.5M239.5 127.5L239.5 135.5M247.5 127.5L247.5 135.5M255.5 127.5L255.5 135.5M263.5 127.5L263.5 135.5M271.5 127.5L271.5 135.5M279.5 127.5L279.5 135.5M287.5 127.5L287.5 135.5M295.5 127.5L295.5 135.5M303.5 127.5L303.5 135.5M311.5 127.5L311.5 135.5M319.5 127.5L319.5 135.5M327.5 127.5L327.5 135.5M0.5 135.5L0.5 143.5M7.5 135.5L7.5 143.5M15.5 135.5L15.5 143.5M23.5 135.5L23.5 143.5M31.5 135.5L31.5 143.5M39.5 135.5L39.5 143.5M47.5 135.5L47.5 143.5M55.5 135.5L55.5 143.5M63.5 135.5L63.5 143.5M71.5 135.5L71.5 143.5M79.5 135.5L79.5 143.5M87.5 135.5L87.5 143.5M95.5 135.5L95.5 143.5M103.5 135.5L103.5 143.5M111.5 135.5L111.5 143.5M119.5 135.5L119.5 143.5M127.5 135.5L127.5 143.5M136.2 135.6L134.8 143.4M144.9 135.7L142.1 143.3M151.5 135.5L151.5 143.5M183.5 135.5L183.5 143.5M190.8 135.6L192.2 143.4M199.2 135.5L199.8 143.5M207.5 135.5L207.5 143.5M215.5 135.5L215.5 143.5M223.5 135.5L223.5 143.5M231.5 135.5L231.5 143.5M239.5 135.5L239.5 143.5M247.5 135.5L247.5 143.5M255.5 135.5L255.5 143.5M263.5 135.5L263.5 143.5M271.5 135.5L271.5 143.5M279.5 135.5L279.5 143.5M287.5 135.5L287.5 143.5M295.5 135.5L295.5 143.5M303.5 135.5L303.5 143.5M311.5 135.5L311.5 143.5M319.5 135.5L319.5 143.5M327.5 135.5L327.5 143.5M0.5 143.5L0.5 151.5M7.5 143.5L7.5 151.5M15.5 143.5L15.5 151.5M23.5 143.5L23.5 151.5M31.5 143.5L31.5 151.5M39.5 143.5L39.5 151.5M47.5 143.5L47.5 151.5M55.5 143.5L55.5 151.5M63.5 143.5L63.5 151.5M71.5 143.5L71.5 151.5M79.5 143.5L79.5 151.5M87.5 143.5L87.5 151.5M95.5 143.5L95.5 151.5M103.5 143.5L103.5 151.5M111.5 143.5L111.5 151.5M119.5 143.5L119.5 151.5M127.5 143.5L127.5 151.5M135.5 143.5L135.5 151.5M144.9 143.7L142.1 151.3M151.5 143.5L151.5 151.5M183.5 143.5L183.5 151.5M191.5 143.5L191.5 151.5M199.5 143.5L199.5 151.5M207.5 143.5L207.5 151.5M215.5 143.5L215.5 151.5M223.5 143.5L223.5 151.5M231.5 143.5L231.5 151.5M239.5 143.5L239.5 151.5M247.5 143.5L247.5 151.5M255.5 143.5L255.5 151.5M263.5 143.5L263.5 151.5M271.5 143.5L271.5 151.5M279.5 143.5L279.5 151.5M287.5 143.5L287.5 151.5M295.5 143.5L295.5 151.5M303.5 143.5L303.5 151.5M311.5 143.5L311.5 151.5M319.5 143.5L319.5 151.5M327.5 143.5L327.5 151.5M0.5 151.5L0.5 159.5M7.5 151.5L7.5 159.5M15.5 151.5L15.5 159.5M23.5 151.5L23.5 159.5M31.5 151.5L31.5 159.5M39.5 151.5L39.5 159.5M47.5 151.5L47.5 159.5M55.5 151.5L55.5 159.5M63.5 151.5L63.5 159.5M71.5 151.5L71.5 159.5M79.5 151.5L79.5 159.5M87.5 151.5L87.5 159.5M95.5 151.5L95.5 159.5M103.5 151.5L103.5 159.5M111.5 151.5L111.5 159.5M119.5 151.5L119.5 159.5M127.5 151.5L127.5 159.5M134.8 151.6L136.2 159.4M141.5 152L145.5 159M151.5 151.5L151.5 159.5M183.5 151.5L183.5 159.5M191.5 151.5L191.5 159.5M199.5 151.5L199.5 159.5M207.5 151.5L207.5 159.5M215.5 151.5L215.5 159.5M223.5 151.5L223.5 159.5M231.5 151.5L231.5 159.5M239.5 151.5L239.5 159.5M247.5 151.5L247.5 159.5M255.5 151.5L255.5 159.5M263.5 151.5L263.5 159.5M271.5 151.5L271.5 159.5M279.5 151.5L279.5 159.5M287.5 151.5L287.5 159.5M295.5 151.5L295.5 159.5M303.5 151.5L303.5 159.5M311.5 151.5L311.5 159.5M319.5 151.5L319.5 159.5M327.5 151.5L327.5 159.5M0.5 159.5L0.5 167.5M7.5 159.5L7.5 167.5M15.5 159.5L15.5 167.5M23.5 159.5L23.5 167.5M31.5 159.5L31.5 167.5M39.5 159.5L39.5 167.5M47.5 159.5L47.5 167.5M55.5 159.5L55.5 167.5M63.5 159.5L63.5 167.5M71.5 159.5L71.5 167.5M79.5 159.5L79.5 167.5M87.5 159.5L87.5 167.5M95.5 159.5L95.5 167.5M103.5 159.5L103.5 167.5M111.5 159.5L111.5 167.5M119.5 159.5L119.5 167.5M127.5 159.5L127.5 167.5M134.8 159.6L136.2 167.4M141.5 160L145.5 167M147.5 163.5L155.5 163.5M155.5 163.5L163.5 163.5M163.5 163.5L171.5 163.5M171.5 163.5L179.5 163.5M179.5 163.5L187.5 163.5M191.5 159.5L191.5 167.5M199.5 159.5L199.5 167.5M207.5 159.5L207.5 167.5M215.5 159.5L215.5 167.5M223.5 159.5L223.5 167.5M231.5 159.5L231.5 167.5M239.5 159.5L239.5 167.5M247.5 159.5L247.5 167.5M255.5 159.5L255.5 167.5M263.5 159.5L263.5 167.5M271.5 159.5L271.5 167.5M279.5 159.5L279.5 167.5M287.5 159.5L287.5 167.5M295.5 159.5L295.5 167.5M303.5 159.5L303.5 167.5M311.5 159.5L311.5 167.5M319.5 159.5L319.5 167.5M327.5 159.5L327.5 167.5M0.5 167.5L0.5 175.5M7.5 167.5L7.5 175.5M15.5 167.5L15.5 175.5M23.5 167.5L23.5 175.5M31.5 167.5L31.5 175.5M39.5 167.5L39.5 175.5M47.5 167.5L47.5 175.5M55.5 167.5L55.5 175.5M63.5 167.5L63.5 175.5M71.5 167.5L71.5 175.5M79.5 167.5L79.5 175.5M87.5 167.5L87.5 175.5M95.5 167.5L95.5 175.5M103.5 167.5L103.5 175.5M111.5 167.5L111.5 175.5M119.5 167.5L119.5 175.5M127.5 167.5L127.5 175.5M135.5 167.5L135.5 175.5M140.7 168.7L146.3 174.3M150.1 167.7L152.9 175.3M155.5 171.5L163.5 171.5M163.5 171.5L171.5 171.5M172 169.5L179 173.5M183.5 167.5L183.5 175.5M192.2 167.6L190.8 175.4M200.2 167.6L198.8 175.4M207.5 167.5L207.5 175.5M215.5 167.5L215.5 175.5M223.5 167.5L223.5 175.5M231.5 167.5L231.5 175.5M239.5 167.5L239.5 175.5M247.5 167.5L247.5 175.5M255.5 167.5L255.5 175.5M263.5 167.5L263.5 175.5M271.5 167.5L271.5 175.5M279.5 167.5L279.5 175.5M287.5 167.5L287.5 175.5M295.5 167.5L295.5 175.5M303.5 167.5L303.5 175.5M311.5 167.5L311.5 175.5M319.5 167.5L319.5 175.5M327.5 167.5L327.5 175.5M0.5 175.5L0.5 183.5M7.5 175.5L7.5 183.5M15.5 175.5L15.5 183.5M23.5 175.5L23.5 183.5M31.5 175.5L31.5 183.5M39.5 175.5L39.5 183.5M47.5 175.5L47.5 183.5M55.5 175.5L55.5 183.5M63.5 175.5L63.5 183.5M71.5 175.5L71.5 183.5M79.5 175.5L79.5 183.5M87.5 175.5L87.5 183.5M95.5 175.5L95.5 183.5M103.5 175.5L103.5 183.5M111.5 175.5L111.5 183.5M119.5 175.5L119.5 183.5M127.5 175.5L127.5 183.5M135.5 175.5L135.5 183.5M143.5 183.5L143.5 175.5M148.7 176.7L154.3 182.3M156.7 176.7L162.3 182.3M164.7 182.3L170.3 176.7M178.3 176.7L172.7 182.3M186.3 176.7L180.7 182.3M192.9 175.7L190.1 183.3M200.2 175.6L198.8 183.4M207.5 175.5L207.5 183.5M215.5 175.5L215.5 183.5M223.5 175.5L223.5 183.5M231.5 175.5L231.5 183.5M239.5 175.5L239.5 183.5M247.5 175.5L247.5 183.5M255.5 175.5L255.5 183.5M263.5 175.5L263.5 183.5M271.5 175.5L271.5 183.5M279.5 175.5L279.5 183.5M287.5 175.5L287.5 183.5M295.5 175.5L295.5 183.5M303.5 175.5L303.5 183.5M311.5 175.5L311.5 183.5M319.5 175.5L319.5 183.5M327.5 175.5L327.5 183.5M0.5 183.5L0.5 191.5M7.5 183.5L7.5 191.5M15.5 183.5L15.5 191.5M23.5 183.5L23.5 191.5M31.5 183.5L31.5 191.5M39.5 183.5L39.5 191.5M47.5 183.5L47.5 191.5M55.5 183.5L55.5 191.5M63.5 183.5L63.5 191.5M71.5 183.5L71.5 191.5M79.5 183.5L79.5 191.5M87.5 183.5L87.5 191.5M95.5 183.5L95.5 191.5M103.5 183.5L103.5 191.5M111.5 183.5L111.5 191.5M119.5 183.5L119.5 191.5M129.5 184L125.5 191M135.5 183.5L135.5 191.5M142.8 191.4L144.2 183.6M148.7 190.3L154.3 184.7M162.1 184.4L156.9 190.6M170.3 184.7L164.7 190.3M178.3 184.7L172.7 190.3M186.1 184.4L180.9 190.6M193.8 184.2L189.2 190.8M200.9 183.7L198.1 191.3M207.5 183.5L207.5 191.5M215.5 183.5L215.5 191.5M223.5 183.5L223.5 191.5M231.5 183.5L231.5 191.5M239.5 183.5L239.5 191.5M247.5 183.5L247.5 191.5M255.5 183.5L255.5 191.5M263.5 183.5L263.5 191.5M271.5 183.5L271.5 191.5M279.5 183.5L279.5 191.5M287.5 183.5L287.5 191.5M295.5 183.5L295.5 191.5M303.5 183.5L303.5 191.5M311.5 183.5L311.5 191.5M319.5 183.5L319.5 191.5M327.5 183.5L327.5 191.5M0.5 191.5L0.5 199.5M7.5 191.5L7.5 199.5M15.5 191.5L15.5 199.5M23.5 191.5L23.5 199.5M31.5 191.5L31.5 199.5M39.5 191.5L39.5 199.5M47.5 191.5L47.5 199.5M55.5 191.5L55.5 199.5M63.5 191.5L63.5 199.5M71.5 191.5L71.5 199.5M79.5 191.5L79.5 199.5M87.5 191.5L87.5 199.5M95.5 191.5L95.5 199.5M103.5 191.5L103.5 199.5M111.5 191.5L111.5 199.5M119.5 191.5L119.5 199.5M130.3 192.7L124.7 198.3M139.5 195.5L131.5 195.5M147.5 195.5L139.5 195.5M155.5 195.5L147.5 195.5M162.3 192.7L156.7 198.3M170.3 192.7L164.7 198.3M178.3 192.7L172.7 198.3M186.3 192.7L180.7 198.3M194.1 192.4L188.9 198.6M201.5 192L197.5 199M207.5 191.5L207.5 199.5M215.5 191.5L215.5 199.5M223.5 191.5L223.5 199.5M231.5 191.5L231.5 199.5M239.5 191.5L239.5 199.5M247.5 191.5L247.5 199.5M255.5 191.5L255.5 199.5M263.5 191.5L263.5 199.5M271.5 191.5L271.5 199.5M279.5 191.5L279.5 199.5M287.5 191.5L287.5 199.5M295.5 191.5L295.5 199.5M303.5 191.5L303.5 199.5M311.5 191.5L311.5 199.5M319.5 191.5L319.5 199.5M327.5 191.5L327.5 199.5M0.5 199.5L0.5 207.5M7.5 199.5L7.5 207.5M15.5 199.5L15.5 207.5M23.5 199.5L23.5 207.5M31.5 199.5L31.5 207.5M39.5 199.5L39.5 207.5M47.5 199.5L47.5 207.5M55.5 199.5L55.5 207.5M63.5 199.5L63.5 207.5M71.5 199.5L71.5 207.5M79.5 199.5L79.5 207.5M87.5 199.5L87.5 207.5M95.5 199.5L95.5 207.5M103.5 199.5L103.5 207.5M111.5 199.5L111.5 207.5M122.3 200.7L116.7 206.3M131.5 203.5L123.5 203.5M139.5 203.5L131.5 203.5M147.5 203.5L139.5 203.5M155.3 202.1L147.7 204.9M162.6 200.9L156.4 206.1M170.3 200.7L164.7 206.3M178.3 200.7L172.7 206.3M186.3 200.7L180.7 206.3M194.1 200.4L188.9 206.6M201.5 200L197.5 207M207.5 199.5L207.5 207.5M215.5 199.5L215.5 207.5M223.5 199.5L223.5 207.5M231.5 199.5L231.5 207.5M239.5 199.5L239.5 207.5M247.5 199.5L247.5 207.5M255.5 199.5L255.5 207.5M263.5 199.5L263.5 207.5M271.5 199.5L271.5 207.5M279.5 199.5L279.5 207.5M287.5 199.5L287.5 207.5M295.5 199.5L295.5 207.5M303.5 199.5L303.5 207.5M311.5 199.5L311.5 207.5M319.5 199.5L319.5 207.5M327.5 199.5L327.5 207.5M0.5 207.5L0.5 215.5M7.5 207.5L7.5 215.5M15.5 207.5L15.5 215.5M23.5 207.5L23.5 215.5M31.5 207.5L31.5 215.5M39.5 207.5L39.5 215.5M47.5 207.5L47.5 215.5M55.5 207.5L55.5 215.5M63.5 207.5L63.5 215.5M71.5 207.5L71.5 215.5M79.5 207.5L79.5 215.5M87.5 207.5L87.5 215.5M95.5 207.5L95.5 215.5M103.5 207.5L103.5 215.5M111.5 207.5L111.5 215.5M121.5 208L117.5 215M130.6 208.9L124.4 214.1M139 209.5L132 213.5M146.8 209.2L140.2 213.8M154.6 208.9L148.4 214.1M162.6 208.9L156.4 214.1M170.3 208.7L164.7 214.3M178.3 208.7L172.7 214.3M186.1 208.4L180.9 214.6M193.5 208L189.5 215M200.9 207.7L198.1 215.3M208.2 207.6L206.8 215.4M215.5 207.5L215.5 215.5M223.5 207.5L223.5 215.5M231.5 207.5L231.5 215.5M239.5 207.5L239.5 215.5M247.5 207.5L247.5 215.5M255.5 207.5L255.5 215.5M263.5 207.5L263.5 215.5M271.5 207.5L271.5 215.5M279.5 207.5L279.5 215.5M287.5 207.5L287.5 215.5M295.5 207.5L295.5 215.5M303.5 207.5L303.5 215.5M311.5 207.5L311.5 215.5M319.5 207.5L319.5 215.5M327.5 207.5L327.5 215.5M0.5 215.5L0.5 223.5M7.5 215.5L7.5 223.5M15.5 215.5L15.5 223.5M23.5 215.5L23.5 223.5M31.5 215.5L31.5 223.5M39.5 215.5L39.5 223.5M47.5 215.5L47.5 223.5M55.5 215.5L55.5 223.5M63.5 215.5L63.5 223.5M71.5 215.5L71.5 223.5M79.5 215.5L79.5 223.5M87.5 215.5L87.5 223.5M95.5 215.5L95.5 223.5M103.5 215.5L103.5 223.5M111.5 215.5L111.5 223.5M122.3 216.7L116.7 222.3M130.6 216.9L124.4 222.1M138.6 216.9L132.4 222.1M146.6 216.9L140.4 222.1M154.6 216.9L148.4 222.1M162.6 216.9L156.4 222.1M170.6 216.9L164.4 222.1M178.6 216.9L172.4 222.1M186.6 216.9L180.4 222.1M194.6 216.9L188.4 222.1M201.5 216L197.5 223M208.2 215.6L206.8 223.4M215.5 215.5L215.5 223.5M223.5 215.5L223.5 223.5M231.5 215.5L231.5 223.5M239.5 215.5L239.5 223.5M247.5 215.5L247.5 223.5M255.5 215.5L255.5 223.5M263.5 215.5L263.5 223.5M271.5 215.5L271.5 223.5M279.5 215.5L279.5 223.5M287.5 215.5L287.5 223.5M295.5 215.5L295.5 223.5M303.5 215.5L303.5 223.5M311.5 215.5L311.5 223.5M319.5 215.5L319.5 223.5M327.5 215.5L327.5 223.5M0.5 223.5L0.5 231.5M7.5 223.5L7.5 231.5M15.5 223.5L15.5 231.5M23.5 223.5L23.5 231.5M31.5 223.5L31.5 231.5M39.5 223.5L39.5 231.5M47.5 223.5L47.5 231.5M55.5 223.5L55.5 231.5M63.5 223.5L63.5 231.5M71.5 223.5L71.5 231.5M79.5 223.5L79.5 231.5M87.5 223.5L87.5 231.5M95.5 223.5L95.5 231.5M103.5 223.5L103.5 231.5M111.5 223.5L111.5 231.5M121.5 224L117.5 231M130.3 224.7L124.7 230.3M138.3 224.7L132.7 230.3M146.3 224.7L140.7 230.3M154.3 224.7L148.7 230.3M162.3 224.7L156.7 230.3M170.3 224.7L164.7 230.3M178.3 224.7L172.7 230.3M186.3 224.7L180.7 230.3M194.1 224.4L188.9 230.6M201.5 224L197.5 231M208.2 223.6L206.8 231.4M215.5 223.5L215.5 231.5M223.5 223.5L223.5 231.5M231.5 223.5L231.5 231.5M239.5 223.5L239.5 231.5M247.5 223.5L247.5 231.5M255.5 223.5L255.5 231.5M263.5 223.5L263.5 231.5M271.5 223.5L271.5 231.5M279.5 223.5L279.5 231.5M287.5 223.5L287.5 231.5M295.5 223.5L295.5 231.5M303.5 223.5L303.5 231.5M311.5 223.5L311.5 231.5M319.5 223.5L319.5 231.5M327.5 223.5L327.5 231.5M0.5 231.5L0.5 239.5M7.5 231.5L7.5 239.5M15.5 231.5L15.5 239.5M23.5 231.5L23.5 239.5M31.5 231.5L31.5 239.5M39.5 231.5L39.5 239.5M47.5 231.5L47.5 239.5M55.5 231.5L55.5 239.5M63.5 231.5L63.5 239.5M71.5 231.5L71.5 239.5M79.5 231.5L79.5 239.5M87.5 231.5L87.5 239.5M95.5 231.5L95.5 239.5M103.8 231.5L103.2 239.5M112 231.5L111 239.5M120.9 231.7L118.1 239.3M130.1 232.4L124.9 238.6M138.1 232.4L132.9 238.6M146.1 232.4L140.9 238.6M154.1 232.4L148.9 238.6M162.1 232.4L156.9 238.6M170.1 232.4L164.9 238.6M178.1 232.4L172.9 238.6M186.1 232.4L180.9 238.6M193.8 232.2L189.2 238.8M201.2 231.9L197.8 239.1M208.2 231.6L206.8 239.4M215.3 231.5L215.7 239.5M223.5 231.5L223.5 239.5M231.5 231.5L231.5 239.5M239.5 231.5L239.5 239.5M247.5 231.5L247.5 239.5M255.5 231.5L255.5 239.5M263.5 231.5L263.5 239.5M271.5 231.5L271.5 239.5M279.5 231.5L279.5 239.5M287.5 231.5L287.5 239.5M295.5 231.5L295.5 239.5M303.5 231.5L303.5 239.5M311.5 231.5L311.5 239.5M319.5 231.5L319.5 239.5M327.5 231.5L327.5 239.5M0.5 239.5L0.5 247.5M7.5 239.5L7.5 247.5M15.5 239.5L15.5 247.5M23.5 239.5L23.5 247.5M31.5 239.5L31.5 247.5M39.5 239.5L39.5 247.5M47.5 239.5L47.5 247.5M55.5 239.5L55.5 247.5M63.5 239.5L63.5 247.5M71.5 239.5L71.5 247.5M79.5 239.5L79.5 247.5M87.5 239.5L87.5 247.5M95.5 239.5L95.5 247.5M104 239.5L103 247.5M112.5 239.6L110.5 247.4M121 239.8L118 247.2M129.5 240L125.5 247M137.2 239.9L133.8 247.1M144.9 239.7L142.1 247.3M152.5 239.6L150.5 247.4M160.2 239.6L158.8 247.4M167.5 239.5L167.5 247.5M174.8 239.6L176.2 247.4M182.5 239.6L184.5 247.4M190.1 239.7L192.9 247.3M198.5 239.6L200.5 247.4M206.8 239.6L208.2 247.4M215.2 239.5L215.8 247.5M223.5 239.5L223.5 247.5M231.5 239.5L231.5 247.5M239.5 239.5L239.5 247.5M247.5 239.5L247.5 247.5M255.5 239.5L255.5 247.5M263.5 239.5L263.5 247.5M271.5 239.5L271.5 247.5M279.5 239.5L279.5 247.5M287.5 239.5L287.5 247.5M295.5 239.5L295.5 247.5M303.5 239.5L303.5 247.5M311.5 239.5L311.5 247.5M319.5 239.5L319.5 247.5M327.5 239.5L327.5 247.5M0.5 247.5L0.5 255.5M7.5 247.5L7.5 255.5M15.5 247.5L15.5 255.5M23.5 247.5L23.5 255.5M31.5 247.5L31.5 255.5M39.5 247.5L39.5 255.5M47.5 247.5L47.5 255.5M55.5 247.5L55.5 255.5M63.5 247.5L63.5 255.5M71.5 247.5L71.5 255.5M79.5 247.5L79.5 255.5M87.5 247.5L87.5 255.5M95.5 247.5L95.5 255.5M103.8 247.5L103.2 255.5M112.2 247.6L110.8 255.4M120.2 247.6L118.8 255.4M128.2 247.6L126.8 255.4M135.8 247.5L135.2 255.5M143.5 247.5L143.5 255.5M151.2 247.5L151.8 255.5M159 247.5L160 255.5M166.5 247.6L168.5 255.4M174.1 247.7L176.9 255.3M181.9 247.8L185.1 255.2M189.7 248L193.3 255M198.1 247.7L200.9 255.3M206.6 247.6L208.4 255.4M215.1 247.5L215.9 255.5M223.5 247.5L223.5 255.5M231.5 247.5L231.5 255.5M239.5 247.5L239.5 255.5M247.5 247.5L247.5 255.5M255.5 247.5L255.5 255.5M263.5 247.5L263.5 255.5M271.5 247.5L271.5 255.5M279.5 247.5L279.5 255.5M287.5 247.5L287.5 255.5M295.5 247.5L295.5 255.5M303.5 247.5L303.5 255.5M311.5 247.5L311.5 255.5M319.5 247.5L319.5 255.5M327.5 247.5L327.5 255.5M0.5 255.5L0.5 263.5M7.5 255.5L7.5 263.5M15.5 255.5L15.5 263.5M23.5 255.5L23.5 263.5M31.5 255.5L31.5 263.5M39.5 255.5L39.5 263.5M47.5 255.5L47.5 263.5M55.5 255.5L55.5 263.5M63.5 255.5L63.5 263.5M71.5 255.5L71.5 263.5M79.5 255.5L79.5 263.5M87.5 255.5L87.5 263.5M95.5 255.5L95.5 263.5M103.7 255.5L103.3 263.5M111.8 255.5L111.2 263.5M119.3 255.5L119.7 263.5M126.8 255.6L128.2 263.4M134.5 255.6L136.5 263.4M142.1 255.7L144.9 263.3M150 255.8L153 263.2M157.8 255.9L161.2 263.1M165.7 256L169.3 263M173.5 256L177.5 263M181.4 256.1L185.6 262.9M189.2 256.2L193.8 262.8M197.8 255.9L201.2 263.1M206.5 255.6L208.5 263.4M215 255.5L216 263.5M223.5 255.5L223.5 263.5M231.5 255.5L231.5 263.5M239.5 255.5L239.5 263.5M247.5 255.5L247.5 263.5M255.5 255.5L255.5 263.5M263.5 255.5L263.5 263.5M271.5 255.5L271.5 263.5M279.5 255.5L279.5 263.5M287.5 255.5L287.5 263.5M295.5 255.5L295.5 263.5M303.5 255.5L303.5 263.5M311.5 255.5L311.5 263.5M319.5 255.5L319.5 263.5M327.5 255.5L327.5 263.5M0.5 263.5L0.5 271.5M7.5 263.5L7.5 271.5M15.5 263.5L15.5 271.5M23.5 263.5L23.5 271.5M31.5 263.5L31.5 271.5M39.5 263.5L39.5 271.5M47.5 263.5L47.5 271.5M55.5 263.5L55.5 271.5M63.5 263.5L63.5 271.5M71.5 263.5L71.5 271.5M79.5 263.5L79.5 271.5M87.5 263.5L87.5 271.5M95.5 263.5L95.5 271.5M103.5 263.5L103.5 271.5M111.5 263.5L111.5 271.5M119 263.5L120 271.5M126.5 263.6L128.5 271.4M134.2 263.7L136.8 271.3M142 263.8L145 271.2M149.8 263.9L153.2 271.1M157.7 264L161.3 271M165.6 264L169.4 271M173.5 264L177.5 271M181.4 264.1L185.6 270.9M189.4 264.1L193.6 270.9M197.8 263.9L201.2 271.1M206.3 263.7L208.7 271.3M214.8 263.6L216.2 271.4M223.3 263.5L223.7 271.5M231.4 263.5L231.6 271.5M239.5 263.5L239.5 271.5M247.5 263.5L247.5 271.5M255.5 263.5L255.5 271.5M263.5 263.5L263.5 271.5M271.5 263.5L271.5 271.5M279.5 263.5L279.5 271.5M287.5 263.5L287.5 271.5M295.5 263.5L295.5 271.5M303.5 263.5L303.5 271.5M311.5 263.5L311.5 271.5M319.5 263.5L319.5 271.5M327.5 263.5L327.5 271.5M0.5 271.5L0.5 279.5M7.5 271.5L7.5 279.5M15.5 271.5L15.5 279.5M23.5 271.5L23.5 279.5M31.5 271.5L31.5 279.5M39.5 271.5L39.5 279.5M47.5 271.5L47.5 279.5M55.5 271.5L55.5 279.5M63.5 271.5L63.5 279.5M71.5 271.5L71.5 279.5M79.5 271.5L79.5 279.5M87.5 271.5L87.5 279.5M95.5 271.5L95.5 279.5M103.3 271.5L103.7 279.5M111.2 271.5L111.8 279.5M118.6 271.6L120.4 279.4M126.1 271.7L128.9 279.3M134 271.8L137 279.2M141.8 271.9L145.2 279.1M149.7 272L153.3 279M157.5 272L161.5 279M165.5 272L169.5 279M173.5 272L177.5 279M181.5 272L185.5 279M189.5 272L193.5 279M197.8 271.9L201.2 279.1M206.1 271.7L208.9 279.3M214.6 271.6L216.4 279.4M223.2 271.5L223.8 279.5M231.3 271.5L231.7 279.5M239.5 271.5L239.5 279.5M247.5 271.5L247.5 279.5M255.5 271.5L255.5 279.5M263.5 271.5L263.5 279.5M271.5 271.5L271.5 279.5M279.5 271.5L279.5 279.5M287.5 271.5L287.5 279.5M295.5 271.5L295.5 279.5M303.5 271.5L303.5 279.5M311.5 271.5L311.5 279.5M319.5 271.5L319.5 279.5M327.5 271.5L327.5 279.5M0.5 279.5L0.5 287.5M7.5 279.5L7.5 287.5M15.5 279.5L15.5 287.5M23.5 279.5L23.5 287.5M31.5 279.5L31.5 287.5M39.5 279.5L39.5 287.5M47.5 279.5L47.5 287.5M55.5 279.5L55.5 287.5M63.5 279.5L63.5 287.5M71.5 279.5L71.5 287.5M79.5 279.5L79.5 287.5M87.4 279.5L87.6 287.5M95.3 279.5L95.7 287.5M103.1 279.5L103.9 287.5M110.8 279.6L112.2 287.4M118.4 279.7L120.6 287.3M126 279.8L129 287.2M133.9 279.8L137.1 287.2M141.8 279.9L145.2 287.1M149.7 279.9L153.3 287.1M157.7 280L161.3 287M165.7 280L169.3 287M173.7 280L177.3 287M181.7 280L185.3 287M189.7 280L193.3 287M197.9 279.8L201.1 287.2M206.1 279.7L208.9 287.3M214.5 279.6L216.5 287.4M223 279.5L224 287.5M231.2 279.5L231.8 287.5M239.5 279.5L239.5 287.5M247.5 279.5L247.5 287.5M255.5 279.5L255.5 287.5M263.5 279.5L263.5 287.5M271.5 279.5L271.5 287.5M279.5 279.5L279.5 287.5M287.5 279.5L287.5 287.5M295.5 279.5L295.5 287.5M303.5 279.5L303.5 287.5M311.5 279.5L311.5 287.5M319.5 279.5L319.5 287.5M327.5 279.5L327.5 287.5M0.5 287.5L0.5 295.5M7.5 287.5L7.5 295.5M15.5 287.5L15.5 295.5M23.5 287.5L23.5 295.5M31.5 287.5L31.5 295.5M39.5 287.5L39.5 295.5M47.5 287.5L47.5 295.5M55.5 287.5L55.5 295.5M63.5 287.5L63.5 295.5M71.5 287.5L71.5 295.5M79.5 287.5L79.5 295.5M87.3 287.5L87.7 295.5M95.2 287.5L95.8 295.5M102.8 287.6L104.2 295.4M110.5 287.6L112.5 295.4M118.1 287.7L120.9 295.3M125.8 287.9L129.2 295.1M133.8 287.9L137.2 295.1M141.8 287.9L145.2 295.1M149.8 287.9L153.2 295.1M157.8 287.9L161.2 295.1M165.8 287.9L169.2 295.1M173.8 287.9L177.2 295.1M181.8 287.9L185.2 295.1M189.8 287.9L193.2 295.1M198 287.8L201 295.2M206.1 287.7L208.9 295.3M214.5 287.6L216.5 295.4M222.8 287.6L224.2 295.4M231.2 287.5L231.8 295.5M239.5 287.5L239.5 295.5M247.5 287.5L247.5 295.5M255.5 287.5L255.5 295.5M263.5 287.5L263.5 295.5M271.5 287.5L271.5 295.5M279.5 287.5L279.5 295.5M287.5 287.5L287.5 295.5M295.5 287.5L295.5 295.5M303.5 287.5L303.5 295.5M311.5 287.5L311.5 295.5M319.5 287.5L319.5 295.5M327.5 287.5L327.5 295.5M0.5 295.5L0.5 303.5M7.5 295.5L7.5 303.5M15.5 295.5L15.5 303.5M23.5 295.5L23.5 303.5M31.5 295.5L31.5 303.5M39.5 295.5L39.5 303.5M47.5 295.5L47.5 303.5M55.5 295.5L55.5 303.5M63.5 295.5L63.5 303.5M71.5 295.5L71.5 303.5M79.5 295.5L79.5 303.5M87.3 295.5L87.7 303.5M95.2 295.5L95.8 303.5M102.8 295.6L104.2 303.4M110.5 295.6L112.5 303.4M118.2 295.7L120.8 303.3M126 295.8L129 303.2M134 295.8L137 303.2M142 295.8L145 303.2M150 295.8L153 303.2M158 295.8L161 303.2M166 295.8L169 303.2M174 295.8L177 303.2M182 295.8L185 303.2M190 295.8L193 303.2M198.1 295.7L200.9 303.3M206.3 295.7L208.7 303.3M214.6 295.6L216.4 303.4M223 295.5L224 303.5M231.2 295.5L231.8 303.5M239.5 295.5L239.5 303.5M247.5 295.5L247.5 303.5M255.5 295.5L255.5 303.5M263.5 295.5L263.5 303.5M271.5 295.5L271.5 303.5M279.5 295.5L279.5 303.5M287.5 295.5L287.5 303.5M295.5 295.5L295.5 303.5M303.5 295.5L303.5 303.5M311.5 295.5L311.5 303.5M319.5 295.5L319.5 303.5M327.5 295.5L327.5 303.5M0.5 303.5L0.5 311.5M7.5 303.5L7.5 311.5M15.5 303.5L15.5 311.5M23.5 303.5L23.5 311.5M31.5 303.5L31.5 311.5M39.5 303.5L39.5 311.5M47.5 303.5L47.5 311.5M55.5 303.5L55.5 311.5M63.5 303.5L63.5 311.5M71.5 303.5L71.5 311.5M79.5 303.5L79.5 311.5M87.3 303.5L87.7 311.5M95.2 303.5L95.8 311.5M102.8 303.6L104.2 311.4M110.5 303.6L112.5 311.4M118.3 303.7L120.7 311.3M126.1 303.7L128.9 311.3M134.1 303.7L136.9 311.3M142.1 303.7L144.9 311.3M150.1 303.7L152.9 311.3M158.1 303.7L160.9 311.3M166.1 303.7L168.9 311.3M174.1 303.7L176.9 311.3M182.1 303.7L184.9 311.3M190.1 303.7L192.9 311.3M198.3 303.7L200.7 311.3M206.5 303.6L208.5 311.4M214.8 303.6L216.2 311.4M223.2 303.5L223.8 311.5M231.3 303.5L231.7 311.5M239.5 303.5L239.5 311.5M247.5 303.5L247.5 311.5M255.5 303.5L255.5 311.5M263.5 303.5L263.5 311.5M271.5 303.5L271.5 311.5M279.5 303.5L279.5 311.5M287.5 303.5L287.5 311.5M295.5 303.5L295.5 311.5M303.5 303.5L303.5 311.5M311.5 303.5L311.5 311.5M319.5 303.5L319.5 311.5M327.5 303.5L327.5 311.5M0.5 311.5L0.5 319.5M7.5 311.5L7.5 319.5M15.5 311.5L15.5 319.5M23.5 311.5L23.5 319.5M31.5 311.5L31.5 319.5M39.5 311.5L39.5 319.5M47.5 311.5L47.5 319.5M55.5 311.5L55.5 319.5M63.5 311.5L63.5 319.5M71.5 311.5L71.5 319.5M79.5 311.5L79.5 319.5M87.3 311.5L87.7 319.5M95.2 311.5L95.8 319.5M102.9 311.5L104.1 319.5M110.6 311.6L112.4 319.4M118.5 311.6L120.5 319.4M126.3 311.7L128.7 319.3M134.3 311.7L136.7 319.3M142.3 311.7L144.7 319.3M150.3 311.7L152.7 319.3M158.3 311.7L160.7 319.3M166.3 311.7L168.7 319.3M174.3 311.7L176.7 319.3M182.2 311.7L184.8 319.3M190.1 311.7L192.9 319.3M198.4 311.7L200.6 319.3M206.6 311.6L208.4 319.4M215 311.5L216 319.5M223.3 311.5L223.7 319.5M231.4 311.5L231.6 319.5M239.5 311.5L239.5 319.5M247.5 311.5L247.5 319.5M255.5 311.5L255.5 319.5M263.5 311.5L263.5 319.5M271.5 311.5L271.5 319.5M279.5 311.5L279.5 319.5M287.5 311.5L287.5 319.5M295.5 311.5L295.5 319.5M303.5 311.5L303.5 319.5M311.5 311.5L311.5 319.5M319.5 311.5L319.5 319.5M327.5 311.5L327.5 319.5M0.5 319.5L0.5 327.5M7.5 319.5L7.5 327.5M15.5 319.5L15.5 327.5M23.5 319.5L23.5 327.5M31.5 319.5L31.5 327.5M39.5 319.5L39.5 327.5M47.5 319.5L47.5 327.5M55.5 319.5L55.5 327.5M63.5 319.5L63.5 327.5M71.5 319.5L71.5 327.5M79.5 319.5L79.5 327.5M87.3 319.5L87.7 327.5M95.2 319.5L95.8 327.5M103 319.5L104 327.5M110.8 319.6L112.2 327.4M118.6 319.6L120.4 327.4M126.5 319.6L128.5 327.4M134.5 319.6L136.5 327.4M142.5 319.6L144.5 327.4M150.5 319.6L152.5 327.4M158.5 319.6L160.5 327.4M166.5 319.6L168.5 327.4M174.5 319.6L176.5 327.4M182.3 319.7L184.7 327.3M190.1 319.7L192.9 327.3M198.5 319.6L200.5 327.4M206.8 319.6L208.2 327.4M215.2 319.5L215.8 327.5M223.5 319.5L223.5 327.5M231.5 319.5L231.5 327.5M239.5 319.5L239.5 327.5M247.5 319.5L247.5 327.5M255.5 319.5L255.5 327.5M263.5 319.5L263.5 327.5M271.5 319.5L271.5 327.5M279.5 319.5L279.5 327.5M287.5 319.5L287.5 327.5M295.5 319.5L295.5 327.5M303.5 319.5L303.5 327.5M311.5 319.5L311.5 327.5M319.5 319.5L319.5 327.5M327.5 319.5L327.5 327.5M0.5 327.5L0.5 335.5M7.5 327.5L7.5 335.5M15.5 327.5L15.5 335.5M23.5 327.5L23.5 335.5M31.5 327.5L31.5 335.5M39.5 327.5L39.5 335.5M47.5 327.5L47.5 335.5M55.5 327.5L55.5 335.5M63.5 327.5L63.5 335.5M71.7 327.5L71.3 335.5M79.8 327.5L79.2 335.5M87.7 327.5L87.3 335.5M95.5 327.5L95.5 335.5M103.2 327.5L103.8 335.5M111 327.5L112 335.5M118.8 327.6L120.2 335.4M126.6 327.6L128.4 335.4M134.6 327.6L136.4 335.4M142.6 327.6L144.4 335.4M150.6 327.6L152.4 335.4M158.6 327.6L160.4 335.4M166.6 327.6L168.4 335.4M174.6 327.6L176.4 335.4M182.5 327.6L184.5 335.4M190.3 327.7L192.7 335.3M198.5 327.6L200.5 335.4M206.8 327.6L208.2 335.4M215.2 327.5L215.8 335.5M223.5 327.5L223.5 335.5M231.5 327.5L231.5 335.5M239.5 327.5L239.5 335.5M247.5 327.5L247.5 335.5M255.5 327.5L255.5 335.5M263.5 327.5L263.5 335.5M271.5 327.5L271.5 335.5M279.5 327.5L279.5 335.5M287.5 327.5L287.5 335.5M295.5 327.5L295.5 335.5M303.5 327.5L303.5 335.5M311.5 327.5L311.5 335.5M319.5 327.5L319.5 335.5M327.5 327.5L327.5 335.5M0.5 335.5L0.5 343.5M7.5 335.5L7.5 343.5M15.5 335.5L15.5 343.5M23.5 335.5L23.5 343.5M31.5 335.5L31.5 343.5M39.5 335.5L39.5 343.5M47.5 335.5L47.5 343.5M55.5 335.5L55.5 343.5M63.5 335.5L63.5 343.5M71.8 335.5L71.2 343.5M80.2 335.6L78.8 343.4M88 335.5L87 343.5M95.8 335.5L95.2 343.5M103.5 335.5L103.5 343.5M111.2 335.5L111.8 343.5M119 335.5L120 343.5M126.8 335.6L128.2 343.4M134.8 335.6L136.2 343.4M142.8 335.6L144.2 343.4M150.8 335.6L152.2 343.4M158.8 335.6L160.2 343.4M166.8 335.6L168.2 343.4M174.8 335.6L176.2 343.4M182.6 335.6L184.4 343.4M190.5 335.6L192.5 343.4M198.6 335.6L200.4 343.4M206.8 335.6L208.2 343.4M215.2 335.5L215.8 343.5M223.5 335.5L223.5 343.5M231.5 335.5L231.5 343.5M239.5 335.5L239.5 343.5M247.5 335.5L247.5 343.5M255.5 335.5L255.5 343.5M263.5 335.5L263.5 343.5M271.5 335.5L271.5 343.5M279.5 335.5L279.5 343.5M287.5 335.5L287.5 343.5M295.5 335.5L295.5 343.5M303.5 335.5L303.5 343.5M311.5 335.5L311.5 343.5M319.5 335.5L319.5 343.5M327.5 335.5L327.5 343.5M0.5 343.5L0.5 351.5M7.5 343.5L7.5 351.5M15.5 343.5L15.5 351.5M23.5 343.5L23.5 351.5M31.5 343.5L31.5 351.5M39.5 343.5L39.5 351.5M47.5 343.5L47.5 351.5M55.5 343.5L55.5 351.5M63.5 343.5L63.5 351.5M71.7 343.5L71.3 351.5M79.8 343.5L79.2 351.5M87.7 343.5L87.3 351.5M95.5 343.5L95.5 351.5M103.3 343.5L103.7 351.5M111.2 343.5L111.8 351.5M119 343.5L120 351.5M126.8 343.6L128.2 351.4M134.8 343.6L136.2 351.4M142.8 343.6L144.2 351.4M150.8 343.6L152.2 351.4M158.8 343.6L160.2 351.4M166.8 343.6L168.2 351.4M174.8 343.6L176.2 351.4M182.7 343.6L184.3 351.4M190.6 343.6L192.4 351.4M198.9 343.5L200.1 351.5M207.2 343.5L207.8 351.5M215.3 343.5L215.7 351.5M223.5 343.5L223.5 351.5M231.5 343.5L231.5 351.5M239.5 343.5L239.5 351.5M247.5 343.5L247.5 351.5M255.5 343.5L255.5 351.5M263.5 343.5L263.5 351.5M271.5 343.5L271.5 351.5M279.5 343.5L279.5 351.5M287.5 343.5L287.5 351.5M295.5 343.5L295.5 351.5M303.5 343.5L303.5 351.5M311.5 343.5L311.5 351.5M319.5 343.5L319.5 351.5M327.5 343.5L327.5 351.5M0.5 351.5L0.5 359.5M7.5 351.5L7.5 359.5M15.5 351.5L15.5 359.5M23.5 351.5L23.5 359.5M31.5 351.5L31.5 359.5M39.5 351.5L39.5 359.5M47.5 351.5L47.5 359.5M55.5 351.5L55.5 359.5M63.5 351.5L63.5 359.5M71.5 351.5L71.5 359.5M79.5 351.5L79.5 359.5M87.3 351.5L87.7 359.5M95.2 351.5L95.8 359.5M103.2 351.5L103.8 359.5M111.2 351.5L111.8 359.5M119 351.5L120 359.5M126.8 351.6L128.2 359.4M134.8 351.6L136.2 359.4M142.8 351.6L144.2 359.4M150.8 351.6L152.2 359.4M158.8 351.6L160.2 359.4M166.8 351.6L168.2 359.4M174.8 351.6L176.2 359.4M182.8 351.6L184.2 359.4M190.8 351.6L192.2 359.4M199.2 351.5L199.8 359.5M207.5 351.5L207.5 359.5M215.5 351.5L215.5 359.5M223.5 351.5L223.5 359.5M231.5 351.5L231.5 359.5M239.5 351.5L239.5 359.5M247.5 351.5L247.5 359.5M255.5 351.5L255.5 359.5M263.5 351.5L263.5 359.5M271.5 351.5L271.5 359.5M279.5 351.5L279.5 359.5M287.5 351.5L287.5 359.5M295.5 351.5L295.5 359.5M303.5 351.5L303.5 359.5M311.5 351.5L311.5 359.5M319.5 351.5L319.5 359.5M327.5 351.5L327.5 359.5M0.5 359.5L0.5 367.5M7.5 359.5L7.5 367.5M15.5 359.5L15.5 367.5M23.5 359.5L23.5 367.5M31.5 359.5L31.5 367.5M39.5 359.5L39.5 367.5M47.5 359.5L47.5 367.5M55.6 359.5L55.4 367.5M63.7 359.5L63.3 367.5M71.9 359.5L71.1 367.5M80.2 359.6L78.8 367.4M88.4 359.6L86.6 367.4M96.7 359.7L94.3 367.3M104.7 359.7L102.3 367.3M112.7 359.7L110.3 367.3M120.5 359.6L118.5 367.4M128.4 359.6L126.6 367.4M136.3 359.6L134.7 367.4M144.2 359.6L142.8 367.4M152.1 359.5L150.9 367.5M160 359.5L159 367.5M167.9 359.5L167.1 367.5M175.8 359.5L175.2 367.5M183.7 359.5L183.3 367.5M191.5 359.5L191.5 367.5M199.5 359.5L199.5 367.5M207.5 359.5L207.5 367.5M215.5 359.5L215.5 367.5M223.5 359.5L223.5 367.5M231.5 359.5L231.5 367.5M239.5 359.5L239.5 367.5M247.5 359.5L247.5 367.5M255.5 359.5L255.5 367.5M263.5 359.5L263.5 367.5M271.5 359.5L271.5 367.5M279.5 359.5L279.5 367.5M287.5 359.5L287.5 367.5M295.5 359.5L295.5 367.5M303.5 359.5L303.5 367.5M311.5 359.5L311.5 367.5M319.5 359.5L319.5 367.5M327.5 359.5L327.5 367.5M0.5 367.5L0.5 375.5M7.5 367.5L7.5 375.5M15.5 367.5L15.5 375.5M23.5 367.5L23.5 375.5M31.5 367.5L31.5 375.5M39.5 367.5L39.5 375.5M47.5 367.5L47.5 375.5M55.7 367.5L55.3 375.5M63.8 367.5L63.2 375.5M72.4 367.6L70.6 375.4M80.9 367.7L78.1 375.3M89.5 368L85.5 375M98.1 368.4L92.9 374.6M106.1 368.4L100.9 374.6M114.1 368.4L108.9 374.6M121.9 368.3L117.1 374.7M129.8 368.2L125.2 374.8M137.6 368.1L133.4 374.9M145.5 368L141.5 375M153.3 368L149.7 375M161.2 367.9L157.8 375.1M169 367.8L166 375.2M176.9 367.7L174.1 375.3M184.5 367.6L182.5 375.4M192.2 367.6L190.8 375.4M199.8 367.5L199.2 375.5M207.5 367.5L207.5 375.5M215.5 367.5L215.5 375.5M223.5 367.5L223.5 375.5M231.5 367.5L231.5 375.5M239.5 367.5L239.5 375.5M247.5 367.5L247.5 375.5M255.5 367.5L255.5 375.5M263.5 367.5L263.5 375.5M271.5 367.5L271.5 375.5M279.5 367.5L279.5 375.5M287.5 367.5L287.5 375.5M295.5 367.5L295.5 375.5M303.5 367.5L303.5 375.5M311.5 367.5L311.5 375.5M319.5 367.5L319.5 375.5M327.5 367.5L327.5 375.5M0.5 375.5L0.5 383.5M7.5 375.5L7.5 383.5M15.5 375.5L15.5 383.5M23.5 375.5L23.5 383.5M31.5 375.5L31.5 383.5M39.5 375.5L39.5 383.5M47.5 375.5L47.5 383.5M55.6 375.5L55.4 383.5M63.7 375.5L63.3 383.5M72.3 375.6L70.7 383.4M80.9 375.7L78.1 383.3M89.6 376.1L85.4 382.9M98.2 376.6L92.8 382.4M106.2 376.6L100.8 382.4M114.2 376.6L108.8 382.4M122.1 376.5L116.9 382.5M130.1 376.4L124.9 382.6M137.9 376.3L133.1 382.7M145.8 376.2L141.2 382.8M153.6 376.1L149.4 382.9M161.5 376L157.5 383M169.3 376L165.7 383M177.2 375.9L173.8 383.1M184.9 375.7L182.1 383.3M192.5 375.6L190.5 383.4M200 375.5L199 383.5M207.5 375.5L207.5 383.5M215.5 375.5L215.5 383.5M223.5 375.5L223.5 383.5M231.5 375.5L231.5 383.5M239.5 375.5L239.5 383.5M247.5 375.5L247.5 383.5M255.5 375.5L255.5 383.5M263.5 375.5L263.5 383.5M271.5 375.5L271.5 383.5M279.5 375.5L279.5 383.5M287.5 375.5L287.5 383.5M295.5 375.5L295.5 383.5M303.5 375.5L303.5 383.5M311.5 375.5L311.5 383.5M319.5 375.5L319.5 383.5M327.5 375.5L327.5 383.5M0.5 383.5L0.5 391.5M7.5 383.5L7.5 391.5M15.5 383.5L15.5 391.5M23.5 383.5L23.5 391.5M31.5 383.5L31.5 391.5M39.5 383.5L39.5 391.5M47.5 383.5L47.5 391.5M55.5 383.5L55.5 391.5M63.5 383.5L63.5 391.5M72.2 383.6L70.8 391.4M80.9 383.7L78.1 391.3M89.6 384.1L85.4 390.9M98.3 384.7L92.7 390.3M106.3 384.7L100.7 390.3M114.3 384.7L108.7 390.3M122.3 384.7L116.7 390.3M130.3 384.7L124.7 390.3M138.2 384.6L132.8 390.4M146.1 384.4L140.9 390.6M153.9 384.3L149.1 390.7M161.8 384.2L157.2 390.8M169.6 384.1L165.4 390.9M177.5 384L173.5 391M185.2 383.9L181.8 391.1M192.9 383.7L190.1 391.3M200.2 383.6L198.8 391.4M207.5 383.5L207.5 391.5M215.5 383.5L215.5 391.5M223.5 383.5L223.5 391.5M231.5 383.5L231.5 391.5M239.5 383.5L239.5 391.5M247.5 383.5L247.5 391.5M255.5 383.5L255.5 391.5M263.5 383.5L263.5 391.5M271.5 383.5L271.5 391.5M279.5 383.5L279.5 391.5M287.5 383.5L287.5 391.5M295.5 383.5L295.5 391.5M303.5 383.5L303.5 391.5M311.5 383.5L311.5 391.5M319.5 383.5L319.5 391.5M327.5 383.5L327.5 391.5M0.5 391.5L0.5 399.5M7.5 391.5L7.5 399.5M15.5 391.5L15.5 399.5M23.5 391.5L23.5 399.5M31.5 391.5L31.5 399.5M39.5 391.5L39.5 399.5M47.5 391.5L47.5 399.5M55.5 391.5L55.5 399.5M63.5 391.5L63.5 399.5M72.2 391.6L70.8 399.4M80.9 391.7L78.1 399.3M89.5 392L85.5 399M98.1 392.4L92.9 398.6M106.1 392.5L100.9 398.5M114.2 392.6L108.8 398.4M122.2 392.6L116.8 398.4M130.2 392.6L124.8 398.4M138.1 392.5L132.9 398.5M146.1 392.4L140.9 398.6M153.9 392.3L149.1 398.7M161.8 392.2L157.2 398.8M169.6 392.1L165.4 398.9M177.5 392L173.5 399M185.2 391.9L181.8 399.1M192.9 391.7L190.1 399.3M200.2 391.6L198.8 399.4M207.5 391.5L207.5 399.5M215.5 391.5L215.5 399.5M223.5 391.5L223.5 399.5M231.5 391.5L231.5 399.5M239.5 391.5L239.5 399.5M247.5 391.5L247.5 399.5M255.5 391.5L255.5 399.5M263.5 391.5L263.5 399.5M271.5 391.5L271.5 399.5M279.5 391.5L279.5 399.5M287.5 391.5L287.5 399.5M295.5 391.5L295.5 399.5M303.5 391.5L303.5 399.5M311.5 391.5L311.5 399.5M319.5 391.5L319.5 399.5M327.5 391.5L327.5 399.5M0.5 399.5L0.5 407.5M7.5 399.5L7.5 407.5M15.5 399.5L15.5 407.5M23.5 399.5L23.5 407.5M31.5 399.5L31.5 407.5M39.5 399.5L39.5 407.5M47.5 399.5L47.5 407.5M55.5 399.5L55.5 407.5M63.5 399.5L63.5 407.5M72.2 399.6L70.8 407.4M80.9 399.7L78.1 407.3M89.3 400L85.7 407M97.8 400.2L93.2 406.8M105.9 400.3L101.1 406.7M114.1 400.4L108.9 406.6M122.1 400.4L116.9 406.6M130.1 400.4L124.9 406.6M138.1 400.4L132.9 406.6M146.1 400.4L140.9 406.6M153.9 400.3L149.1 406.7M161.8 400.2L157.2 406.8M169.6 400.1L165.4 406.9M177.5 400L173.5 407M185.2 399.9L181.8 407.1M192.9 399.7L190.1 407.3M200.2 399.6L198.8 407.4M207.5 399.5L207.5 407.5M215.5 399.5L215.5 407.5M223.5 399.5L223.5 407.5M231.5 399.5L231.5 407.5M239.5 399.5L239.5 407.5M247.5 399.5L247.5 407.5M255.5 399.5L255.5 407.5M263.5 399.5L263.5 407.5M271.5 399.5L271.5 407.5M279.5 399.5L279.5 407.5M287.5 399.5L287.5 407.5M295.5 399.5L295.5 407.5M303.5 399.5L303.5 407.5M311.5 399.5L311.5 407.5M319.5 399.5L319.5 407.5M327.5 399.5L327.5 407.5M0.5 407.5L0.5 415.5M7.5 407.5L7.5 415.5M15.5 407.5L15.5 415.5M23.5 407.5L23.5 415.5M31.5 407.5L31.5 415.5M39.5 407.5L39.5 415.5M47.5 407.5L47.5 415.5M55.5 407.5L55.5 415.5M63.5 407.5L63.5 415.5M71.8 407.5L71.2 415.5M80.2 407.6L78.8 415.4M88.5 407.6L86.5 415.4M96.9 407.7L94.1 415.3M105.2 407.9L101.8 415.1M113.5 408L109.5 415M121.7 408.2L117.3 414.8M129.9 408.3L125.1 414.7M137.9 408.3L133.1 414.7M145.8 408.2L141.2 414.8M153.6 408.1L149.4 414.9M161.5 408L157.5 415M169.2 407.9L165.8 415.1M176.9 407.7L174.1 415.3M184.1 407.5L182.9 415.5M191.2 407.5L191.8 415.5M198.8 407.6L200.2 415.4M206.5 407.6L208.5 415.4M214.5 407.6L216.5 415.4M222.6 407.6L224.4 415.4M230.7 407.6L232.3 415.4M238.8 407.6L240.2 415.4M247 407.5L248 415.5M255.2 407.5L255.8 415.5M263.3 407.5L263.7 415.5M271.5 407.5L271.5 415.5M279.5 407.5L279.5 415.5M287.5 407.5L287.5 415.5M295.5 407.5L295.5 415.5M303.5 407.5L303.5 415.5M311.5 407.5L311.5 415.5M319.5 407.5L319.5 415.5M327.5 407.5L327.5 415.5M0.5 415.5L0.5 423.5M7.5 415.5L7.5 423.5M15.5 415.5L15.5 423.5M23.5 415.5L23.5 423.5M31.5 415.5L31.5 423.5M39.5 415.5L39.5 423.5M47.5 415.5L47.5 423.5M55.5 415.5L55.5 423.5M63.5 415.5L63.5 423.5M71.5 415.5L71.5 423.5M79.5 415.5L79.5 423.5M87.7 415.5L87.3 423.5M95.8 415.5L95.2 423.5M104.4 415.6L102.6 423.4M112.9 415.7L110.1 423.3M121.3 416L117.7 423M129.8 416.2L125.2 422.8M137.6 416.1L133.4 422.9M145.5 416L141.5 423M153.3 416L149.7 423M161.2 415.9L157.8 423.1M168.7 415.7L166.3 423.3M176.2 415.6L174.8 423.4M182.8 415.6L184.2 423.4M189.5 416L193.5 423M197.5 416L201.5 423M205.5 416L209.5 423M213.7 416L217.3 423M221.8 415.9L225.2 423.1M230 415.8L233 423.2M238.1 415.7L240.9 423.3M246.5 415.6L248.5 423.4M254.8 415.6L256.2 423.4M263.2 415.5L263.8 423.5M271.5 415.5L271.5 423.5M279.5 415.5L279.5 423.5M287.5 415.5L287.5 423.5M295.5 415.5L295.5 423.5M303.5 415.5L303.5 423.5M311.5 415.5L311.5 423.5M319.5 415.5L319.5 423.5M327.5 415.5L327.5 423.5M0.5 423.5L0.5 431.5M7.5 423.5L7.5 431.5M15.5 423.5L15.5 431.5M23.5 423.5L23.5 431.5M31.5 423.5L31.5 431.5M39.5 423.5L39.5 431.5M47.5 423.5L47.5 431.5M55.5 423.5L55.5 431.5M63.5 423.5L63.5 431.5M71.5 423.5L71.5 431.5M79.5 423.5L79.5 431.5M87.6 423.5L87.4 431.5M95.7 423.5L95.3 431.5M103.9 423.5L103.1 431.5M112.2 423.6L110.8 431.4M120.6 423.7L118.4 431.3M129 423.8L126 431.2M136.8 423.7L134.2 431.3M144.5 423.6L142.5 431.4M152.3 423.6L150.7 431.4M160 423.5L159 431.5M167.4 423.5L167.6 431.5M174.8 423.6L176.2 431.4M181.4 424.1L185.6 430.9M188.2 425.2L194.8 429.8M196.7 424.6L202.3 430.4M205.2 424.2L209.8 430.8M213.2 424.2L217.8 430.8M221.2 424.2L225.8 430.8M229.5 424L233.5 431M237.8 423.9L241.2 431.1M246.1 423.7L248.9 431.3M254.5 423.6L256.5 431.4M262.9 423.5L264.1 431.5M271.3 423.5L271.7 431.5M279.4 423.5L279.6 431.5M287.5 423.5L287.5 431.5M295.5 423.5L295.5 431.5M303.5 423.5L303.5 431.5M311.5 423.5L311.5 431.5M319.5 423.5L319.5 431.5M327.5 423.5L327.5 431.5M0.5 431.5L0.5 439.5M7.5 431.5L7.5 439.5M15.5 431.5L15.5 439.5M23.5 431.5L23.5 439.5M31.5 431.5L31.5 439.5M39.5 431.5L39.5 439.5M47.5 431.5L47.5 439.5M55.5 431.5L55.5 439.5M63.5 431.5L63.5 439.5M71.5 431.5L71.5 439.5M79.5 431.5L79.5 439.5M87.5 431.5L87.5 439.5M95.5 431.5L95.5 439.5M103.5 431.5L103.5 439.5M111.5 431.5L111.5 439.5M119.8 431.5L119.2 439.5M128.2 431.6L126.8 439.4M135.8 431.5L135.2 439.5M143.5 431.5L143.5 439.5M151.2 431.5L151.8 439.5M158.8 431.6L160.2 439.4M166.1 431.7L168.9 439.3M173.5 432L177.5 439M180.2 433.2L186.8 437.8M187.6 434.8L195.4 436.2M196 433.5L203 437.5M204.9 432.4L210.1 438.6M212.8 432.6L218.2 438.4M220.7 432.7L226.3 438.3M229.1 432.3L233.9 438.7M237.5 432L241.5 439M245.8 431.9L249.2 439.1M254.1 431.7L256.9 439.3M262.6 431.6L264.4 439.4M271.2 431.5L271.8 439.5M279.3 431.5L279.7 439.5M287.5 431.5L287.5 439.5M295.5 431.5L295.5 439.5M303.5 431.5L303.5 439.5M311.5 431.5L311.5 439.5M319.5 431.5L319.5 439.5M327.5 431.5L327.5 439.5M0.5 439.5L0.5 447.5M7.5 439.5L7.5 447.5M15.5 439.5L15.5 447.5M23.5 439.5L23.5 447.5M31.5 439.5L31.5 447.5M39.5 439.5L39.5 447.5M47.5 439.5L47.5 447.5M55.5 439.5L55.5 447.5M63.5 439.5L63.5 447.5M71.5 439.5L71.5 447.5M79.5 439.5L79.5 447.5M87.5 439.5L87.5 447.5M95.5 439.5L95.5 447.5M103.5 439.5L103.5 447.5M111.5 439.5L111.5 447.5M119.6 439.5L119.4 447.5M127.7 439.5L127.3 447.5M135.2 439.5L135.8 447.5M142.6 439.6L144.4 447.4M150.3 439.7L152.7 447.3M158 439.8L161 447.2M165.6 440L169.4 447M173.2 440.2L177.8 446.8M180.6 440.8L186.4 446.2M188 441.5L195 445.5M196.5 440.8L202.5 446.2M205.1 440.3L209.9 446.7M213.1 440.3L217.9 446.7M221.1 440.3L225.9 446.7M229.4 440.1L233.6 446.9M237.7 440L241.3 447M245.9 439.8L249.1 447.2M254.1 439.7L256.9 447.3M262.6 439.6L264.4 447.4M271 439.5L272 447.5M279.3 439.5L279.7 447.5M287.5 439.5L287.5 447.5M295.5 439.5L295.5 447.5M303.5 439.5L303.5 447.5M311.5 439.5L311.5 447.5M319.5 439.5L319.5 447.5M327.5 439.5L327.5 447.5M0.5 447.5L0.5 455.5M7.5 447.5L7.5 455.5M15.5 447.5L15.5 455.5M23.5 447.5L23.5 455.5M31.5 447.5L31.5 455.5M39.5 447.5L39.5 455.5M47.5 447.5L47.5 455.5M55.5 447.5L55.5 455.5M63.5 447.5L63.5 455.5M71.5 447.5L71.5 455.5M79.5 447.5L79.5 455.5M87.5 447.5L87.5 455.5M95.5 447.5L95.5 455.5M103.5 447.5L103.5 455.5M111.5 447.5L111.5 455.5M119.3 447.5L119.7 455.5M127.2 447.5L127.8 455.5M134.5 447.6L136.5 455.4M141.8 447.9L145.2 455.1M149.5 448L153.5 455M157.2 448.2L161.8 454.8M165.1 448.3L169.9 454.7M172.9 448.4L178.1 454.6M180.9 448.4L186.1 454.6M188.9 448.4L194.1 454.6M197.1 448.3L201.9 454.7M205.2 448.2L209.8 454.8M213.4 448.1L217.6 454.9M221.5 448L225.5 455M229.7 448L233.3 455M237.8 447.9L241.2 455.1M246 447.8L249 455.2M254.1 447.7L256.9 455.3M262.5 447.6L264.5 455.4M270.9 447.5L272.1 455.5M279.2 447.5L279.8 455.5M287.5 447.5L287.5 455.5M295.5 447.5L295.5 455.5M303.5 447.5L303.5 455.5M311.5 447.5L311.5 455.5M319.5 447.5L319.5 455.5M327.5 447.5L327.5 455.5M0.5 455.5L0.5 463.5M7.5 455.5L7.5 463.5M15.5 455.5L15.5 463.5M23.5 455.5L23.5 463.5M31.5 455.5L31.5 463.5M39.5 455.5L39.5 463.5M47.5 455.5L47.5 463.5M55.5 455.5L55.5 463.5M63.5 455.5L63.5 463.5M71.5 455.5L71.5 463.5M79.5 455.5L79.5 463.5M87.5 455.5L87.5 463.5M95.5 455.5L95.5 463.5M103.5 455.5L103.5 463.5M111.5 455.5L111.5 463.5M119.2 455.5L119.8 463.5M127 455.5L128 463.5M134.3 455.7L136.7 463.3M141.7 456L145.3 463M149.4 456.1L153.6 462.9M157.1 456.3L161.9 462.7M165 456.4L170 462.6M172.9 456.4L178.1 462.6M180.9 456.4L186.1 462.6M188.9 456.4L194.1 462.6M197.1 456.3L201.9 462.7M205.2 456.2L209.8 462.8M213.4 456.1L217.6 462.9M221.5 456L225.5 463M229.7 456L233.3 463M237.8 455.9L241.2 463.1M246.1 455.8L248.9 463.2M254.3 455.7L256.7 463.3M262.7 455.6L264.3 463.4M271 455.5L272 463.5M279.3 455.5L279.7 463.5M287.5 455.5L287.5 463.5M295.5 455.5L295.5 463.5M303.5 455.5L303.5 463.5M311.5 455.5L311.5 463.5M319.5 455.5L319.5 463.5M327.5 455.5L327.5 463.5M0.5 463.5L0.5 471.5M7.5 463.5L7.5 471.5M15.5 463.5L15.5 471.5M23.5 463.5L23.5 471.5M31.5 463.5L31.5 471.5M39.5 463.5L39.5 471.5M47.5 463.5L47.5 471.5M55.5 463.5L55.5 471.5M63.5 463.5L63.5 471.5M71.5 463.5L71.5 471.5M79.5 463.5L79.5 471.5M87.5 463.5L87.5 471.5M95.5 463.5L95.5 471.5M103.5 463.5L103.5 471.5M111.5 463.5L111.5 471.5M119.2 463.5L119.8 471.5M126.8 463.6L128.2 471.4M134.1 463.7L136.9 471.3M141.5 464L145.5 471M149.2 464.2L153.8 470.8M156.9 464.4L162.1 470.6M164.9 464.4L170.1 470.6M172.9 464.4L178.1 470.6M180.9 464.4L186.1 470.6M188.9 464.4L194.1 470.6M197.1 464.3L201.9 470.7M205.2 464.2L209.8 470.8M213.4 464.1L217.6 470.9M221.5 464L225.5 471M229.7 464L233.3 471M237.8 463.9L241.2 471.1M246.1 463.7L248.9 471.3M254.5 463.6L256.5 471.4M262.8 463.6L264.2 471.4M271.2 463.5L271.8 471.5M279.3 463.5L279.7 471.5M287.5 463.5L287.5 471.5M295.5 463.5L295.5 471.5M303.5 463.5L303.5 471.5M311.5 463.5L311.5 471.5M319.5 463.5L319.5 471.5M327.5 463.5L327.5 471.5M0.5 471.5L0.5 479.5M7.5 471.5L7.5 479.5M15.5 471.5L15.5 479.5M23.5 471.5L23.5 479.5M31.5 471.5L31.5 479.5M39.5 471.5L39.5 479.5M47.5 471.5L47.5 479.5M55.5 471.5L55.5 479.5M63.5 471.5L63.5 479.5M71.5 471.5L71.5 479.5M79.5 471.5L79.5 479.5M87.5 471.5L87.5 479.5M95.5 471.5L95.5 479.5M103.5 471.5L103.5 479.5M111.5 471.5L111.5 479.5M119.2 471.5L119.8 479.5M126.8 471.6L128.2 479.4M134.1 471.7L136.9 479.3M141.5 472L145.5 479M149.2 472.2L153.8 478.8M156.9 472.4L162.1 478.6M164.9 472.4L170.1 478.6M172.9 472.4L178.1 478.6M180.9 472.4L186.1 478.6M188.9 472.4L194.1 478.6M197.1 472.3L201.9 478.7M205.2 472.2L209.8 478.8M213.4 472.1L217.6 478.9M221.5 472L225.5 479M229.7 472L233.3 479M237.8 471.9L241.2 479.1M246.1 471.7L248.9 479.3M254.5 471.6L256.5 479.4M262.8 471.6L264.2 479.4M271.2 471.5L271.8 479.5M279.3 471.5L279.7 479.5M287.5 471.5L287.5 479.5M295.5 471.5L295.5 479.5M303.5 471.5L303.5 479.5M311.5 471.5L311.5 479.5M319.5 471.5L319.5 479.5M327.5 471.5L327.5 479.5" fill="none" stroke="#03101e" stroke-width="1.05"/>
<path d="M2.5 5.4L0.5 8 -1.5 5.4M9.5 5.4L7.5 8 5.5 5.4M17.5 5.4L15.5 8 13.5 5.4M25.5 5.4L23.5 8 21.5 5.4M33.5 5.4L31.5 8 29.5 5.4M41.5 5.4L39.5 8 37.5 5.4M49.5 5.4L47.5 8 45.5 5.4M57.5 5.4L55.5 8 53.5 5.4M65.5 5.4L63.5 8 61.5 5.4M73.5 5.4L71.5 8 69.5 5.4M81.5 5.4L79.5 8 77.5 5.4M89.5 5.4L87.5 8 85.5 5.4M97.5 5.4L95.5 8 93.5 5.4M105.5 5.4L103.5 8 101.5 5.4M113.5 5.4L111.5 8 109.5 5.4M121.5 5.4L119.5 8 117.5 5.4M129.5 5.4L127.5 8 125.5 5.4M137.5 5.4L135.5 8 133.5 5.4M145.5 5.4L143.5 8 141.5 5.4M153.5 5.4L151.5 8 149.5 5.4M161.5 5.4L159.5 8 157.5 5.4M169.5 5.4L167.5 8 165.5 5.4M177.5 5.4L175.5 8 173.5 5.4M185.5 5.4L183.5 8 181.5 5.4M193.5 5.4L191.5 8 189.5 5.4M201.5 5.4L199.5 8 197.5 5.4M209.5 5.4L207.5 8 205.5 5.4M217.5 5.4L215.5 8 213.5 5.4M225.5 5.4L223.5 8 221.5 5.4M233.5 5.4L231.5 8 229.5 5.4M241.5 5.4L239.5 8 237.5 5.4M249.5 5.4L247.5 8 245.5 5.4M257.5 5.4L255.5 8 253.5 5.4M265.5 5.4L263.5 8 261.5 5.4M273.5 5.4L271.5 8 269.5 5.4M281.5 5.4L279.5 8 277.5 5.4M289.5 5.4L287.5 8 285.5 5.4M297.5 5.4L295.5 8 293.5 5.4M305.5 5.4L303.5 8 301.5 5.4M313.5 5.4L311.5 8 309.5 5.4M321.5 5.4L319.5 8 317.5 5.4M329.5 5.4L327.5 8 325.5 5.4M2.5 13.4L0.5 16 -1.5 13.4M9.5 13.4L7.5 16 5.5 13.4M17.5 13.4L15.5 16 13.5 13.4M25.5 13.4L23.5 16 21.5 13.4M33.5 13.4L31.5 16 29.5 13.4M41.5 13.4L39.5 16 37.5 13.4M49.5 13.4L47.5 16 45.5 13.4M57.5 13.4L55.5 16 53.5 13.4M65.5 13.4L63.5 16 61.5 13.4M73.5 13.4L71.5 16 69.5 13.4M81.5 13.4L79.5 16 77.5 13.4M89.5 13.4L87.5 16 85.5 13.4M97.5 13.4L95.5 16 93.5 13.4M105.5 13.4L103.5 16 101.5 13.4M113.5 13.4L111.5 16 109.5 13.4M121.5 13.4L119.5 16 117.5 13.4M129.5 13.4L127.5 16 125.5 13.4M137.5 13.4L135.5 16 133.5 13.4M145.5 13.4L143.5 16 141.5 13.4M153.5 13.4L151.5 16 149.5 13.4M161.5 13.4L159.5 16 157.5 13.4M169.5 13.4L167.5 16 165.5 13.4M177.5 13.4L175.5 16 173.5 13.4M185.5 13.4L183.5 16 181.5 13.4M193.5 13.4L191.5 16 189.5 13.4M201.5 13.4L199.5 16 197.5 13.4M209.5 13.4L207.5 16 205.5 13.4M217.5 13.4L215.5 16 213.5 13.4M225.5 13.4L223.5 16 221.5 13.4M233.5 13.4L231.5 16 229.5 13.4M241.5 13.4L239.5 16 237.5 13.4M249.5 13.4L247.5 16 245.5 13.4M257.5 13.4L255.5 16 253.5 13.4M265.5 13.4L263.5 16 261.5 13.4M273.5 13.4L271.5 16 269.5 13.4M281.5 13.4L279.5 16 277.5 13.4M289.5 13.4L287.5 16 285.5 13.4M297.5 13.4L295.5 16 293.5 13.4M305.5 13.4L303.5 16 301.5 13.4M313.5 13.4L311.5 16 309.5 13.4M321.5 13.4L319.5 16 317.5 13.4M329.5 13.4L327.5 16 325.5 13.4M2.5 21.4L0.5 24 -1.5 21.4M9.5 21.4L7.5 24 5.5 21.4M17.5 21.4L15.5 24 13.5 21.4M25.5 21.4L23.5 24 21.5 21.4M33.5 21.4L31.5 24 29.5 21.4M41.5 21.4L39.5 24 37.5 21.4M49.5 21.4L47.5 24 45.5 21.4M57.5 21.4L55.5 24 53.5 21.4M65.5 21.4L63.5 24 61.5 21.4M73.5 21.4L71.5 24 69.5 21.4M81.5 21.4L79.5 24 77.5 21.4M89.5 21.4L87.5 24 85.5 21.4M97.5 21.4L95.5 24 93.5 21.4M105.5 21.4L103.5 24 101.5 21.4M113.5 21.4L111.5 24 109.5 21.4M121.5 21.4L119.5 24 117.5 21.4M129.5 21.4L127.5 24 125.5 21.4M137.5 21.4L135.5 24 133.5 21.4M145.5 21.4L143.5 24 141.5 21.4M153.5 21.4L151.5 24 149.5 21.4M161.5 21.4L159.5 24 157.5 21.4M169.5 21.4L167.5 24 165.5 21.4M177.5 21.4L175.5 24 173.5 21.4M185.5 21.4L183.5 24 181.5 21.4M193.5 21.4L191.5 24 189.5 21.4M201.5 21.4L199.5 24 197.5 21.4M209.5 21.4L207.5 24 205.5 21.4M217.5 21.4L215.5 24 213.5 21.4M225.5 21.4L223.5 24 221.5 21.4M233.5 21.4L231.5 24 229.5 21.4M241.5 21.4L239.5 24 237.5 21.4M249.5 21.4L247.5 24 245.5 21.4M257.5 21.4L255.5 24 253.5 21.4M265.5 21.4L263.5 24 261.5 21.4M273.5 21.4L271.5 24 269.5 21.4M281.5 21.4L279.5 24 277.5 21.4M289.5 21.4L287.5 24 285.5 21.4M297.5 21.4L295.5 24 293.5 21.4M305.5 21.4L303.5 24 301.5 21.4M313.5 21.4L311.5 24 309.5 21.4M321.5 21.4L319.5 24 317.5 21.4M329.5 21.4L327.5 24 325.5 21.4M2.5 29.4L0.5 32 -1.5 29.4M9.5 29.4L7.5 32 5.5 29.4M17.5 29.4L15.5 32 13.5 29.4M25.5 29.4L23.5 32 21.5 29.4M33.5 29.4L31.5 32 29.5 29.4M41.5 29.4L39.5 32 37.5 29.4M49.5 29.4L47.5 32 45.5 29.4M57.5 29.4L55.5 32 53.5 29.4M65.5 29.4L63.5 32 61.5 29.4M73.5 29.4L71.5 32 69.5 29.4M81.5 29.4L79.5 32 77.5 29.4M89.5 29.4L87.5 32 85.5 29.4M97.5 29.4L95.5 32 93.5 29.4M105.5 29.4L103.5 32 101.5 29.4M113.5 29.4L111.5 32 109.5 29.4M121.5 29.4L119.5 32 117.5 29.4M129.5 29.4L127.5 32 125.5 29.4M137.5 29.4L135.5 32 133.5 29.4M145.5 29.4L143.5 32 141.5 29.4M153.5 29.4L151.5 32 149.5 29.4M161.5 29.4L159.5 32 157.5 29.4M169.5 29.4L167.5 32 165.5 29.4M177.5 29.4L175.5 32 173.5 29.4M185.5 29.4L183.5 32 181.5 29.4M193.5 29.4L191.5 32 189.5 29.4M201.5 29.4L199.5 32 197.5 29.4M209.5 29.4L207.5 32 205.5 29.4M217.5 29.4L215.5 32 213.5 29.4M225.5 29.4L223.5 32 221.5 29.4M233.5 29.4L231.5 32 229.5 29.4M241.5 29.4L239.5 32 237.5 29.4M249.5 29.4L247.5 32 245.5 29.4M257.5 29.4L255.5 32 253.5 29.4M265.5 29.4L263.5 32 261.5 29.4M273.5 29.4L271.5 32 269.5 29.4M281.5 29.4L279.5 32 277.5 29.4M289.5 29.4L287.5 32 285.5 29.4M297.5 29.4L295.5 32 293.5 29.4M305.5 29.4L303.5 32 301.5 29.4M313.5 29.4L311.5 32 309.5 29.4M321.5 29.4L319.5 32 317.5 29.4M329.5 29.4L327.5 32 325.5 29.4M2.5 37.4L0.5 40 -1.5 37.4M9.5 37.4L7.5 40 5.5 37.4M17.5 37.4L15.5 40 13.5 37.4M25.5 37.4L23.5 40 21.5 37.4M33.5 37.4L31.5 40 29.5 37.4M41.5 37.4L39.5 40 37.5 37.4M49.5 37.4L47.5 40 45.5 37.4M57.5 37.4L55.5 40 53.5 37.4M65.5 37.4L63.5 40 61.5 37.4M73.5 37.4L71.5 40 69.5 37.4M81.5 37.4L79.5 40 77.5 37.4M89.5 37.4L87.5 40 85.5 37.4M97.5 37.4L95.5 40 93.5 37.4M105.5 37.4L103.5 40 101.5 37.4M113.5 37.4L111.5 40 109.5 37.4M121.5 37.4L119.5 40 117.5 37.4M129.5 37.4L127.5 40 125.5 37.4M137.5 37.4L135.5 40 133.5 37.4M145.5 37.4L143.5 40 141.5 37.4M153.5 37.4L151.5 40 149.5 37.4M161.5 37.4L159.5 40 157.5 37.4M169.5 37.4L167.5 40 165.5 37.4M177.5 37.4L175.5 40 173.5 37.4M185.5 37.4L183.5 40 181.5 37.4M193.5 37.4L191.5 40 189.5 37.4M201.5 37.4L199.5 40 197.5 37.4M209.5 37.4L207.5 40 205.5 37.4M217.5 37.4L215.5 40 213.5 37.4M225.5 37.4L223.5 40 221.5 37.4M233.5 37.4L231.5 40 229.5 37.4M241.5 37.4L239.5 40 237.5 37.4M249.5 37.4L247.5 40 245.5 37.4M257.5 37.4L255.5 40 253.5 37.4M265.5 37.4L263.5 40 261.5 37.4M273.5 37.4L271.5 40 269.5 37.4M281.5 37.4L279.5 40 277.5 37.4M289.5 37.4L287.5 40 285.5 37.4M297.5 37.4L295.5 40 293.5 37.4M305.5 37.4L303.5 40 301.5 37.4M313.5 37.4L311.5 40 309.5 37.4M321.5 37.4L319.5 40 317.5 37.4M329.5 37.4L327.5 40 325.5 37.4M2.5 45.4L0.5 48 -1.5 45.4M9.5 45.4L7.5 48 5.5 45.4M17.5 45.4L15.5 48 13.5 45.4M25.5 45.4L23.5 48 21.5 45.4M33.5 45.4L31.5 48 29.5 45.4M41.5 45.4L39.5 48 37.5 45.4M49.5 45.4L47.5 48 45.5 45.4M57.5 45.4L55.5 48 53.5 45.4M65.5 45.4L63.5 48 61.5 45.4M73.5 45.4L71.5 48 69.5 45.4M81.5 45.4L79.5 48 77.5 45.4M89.5 45.4L87.5 48 85.5 45.4M97.5 45.4L95.5 48 93.5 45.4M105.5 45.4L103.5 48 101.5 45.4M113.5 45.4L111.5 48 109.5 45.4M121.5 45.4L119.5 48 117.5 45.4M129.5 45.4L127.5 48 125.5 45.4M137.5 45.4L135.5 48 133.5 45.4M145.5 45.4L143.5 48 141.5 45.4M153.5 45.4L151.5 48 149.5 45.4M161.5 45.4L159.5 48 157.5 45.4M169.5 45.4L167.5 48 165.5 45.4M177.5 45.4L175.5 48 173.5 45.4M185.5 45.4L183.5 48 181.5 45.4M193.5 45.4L191.5 48 189.5 45.4M201.5 45.4L199.5 48 197.5 45.4M209.5 45.4L207.5 48 205.5 45.4M217.5 45.4L215.5 48 213.5 45.4M225.5 45.4L223.5 48 221.5 45.4M233.5 45.4L231.5 48 229.5 45.4M241.5 45.4L239.5 48 237.5 45.4M249.5 45.4L247.5 48 245.5 45.4M257.5 45.4L255.5 48 253.5 45.4M265.5 45.4L263.5 48 261.5 45.4M273.5 45.4L271.5 48 269.5 45.4M281.5 45.4L279.5 48 277.5 45.4M289.5 45.4L287.5 48 285.5 45.4M297.5 45.4L295.5 48 293.5 45.4M305.5 45.4L303.5 48 301.5 45.4M313.5 45.4L311.5 48 309.5 45.4M321.5 45.4L319.5 48 317.5 45.4M329.5 45.4L327.5 48 325.5 45.4M2.5 53.4L0.5 56 -1.5 53.4M9.5 53.4L7.5 56 5.5 53.4M17.5 53.4L15.5 56 13.5 53.4M25.5 53.4L23.5 56 21.5 53.4M33.5 53.4L31.5 56 29.5 53.4M41.5 53.4L39.5 56 37.5 53.4M49.5 53.4L47.5 56 45.5 53.4M57.5 53.4L55.5 56 53.5 53.4M65.5 53.4L63.5 56 61.5 53.4M73.5 53.4L71.5 56 69.5 53.4M81.5 53.4L79.5 56 77.5 53.4M89.5 53.4L87.5 56 85.5 53.4M97.5 53.4L95.5 56 93.5 53.4M105.5 53.4L103.5 56 101.5 53.4M113.5 53.4L111.5 56 109.5 53.4M121.5 53.4L119.5 56 117.5 53.4M129.5 53.4L127.5 56 125.5 53.4M137.5 53.4L135.5 56 133.5 53.4M145.5 53.4L143.5 56 141.5 53.4M153.5 53.4L151.5 56 149.5 53.4M161.5 53.4L159.5 56 157.5 53.4M169.5 53.4L167.5 56 165.5 53.4M177.5 53.4L175.5 56 173.5 53.4M185.5 53.4L183.5 56 181.5 53.4M193.5 53.4L191.5 56 189.5 53.4M201.5 53.4L199.5 56 197.5 53.4M209.5 53.4L207.5 56 205.5 53.4M217.5 53.4L215.5 56 213.5 53.4M225.5 53.4L223.5 56 221.5 53.4M233.5 53.4L231.5 56 229.5 53.4M241.5 53.4L239.5 56 237.5 53.4M249.5 53.4L247.5 56 245.5 53.4M257.5 53.4L255.5 56 253.5 53.4M265.5 53.4L263.5 56 261.5 53.4M273.5 53.4L271.5 56 269.5 53.4M281.5 53.4L279.5 56 277.5 53.4M289.5 53.4L287.5 56 285.5 53.4M297.5 53.4L295.5 56 293.5 53.4M305.5 53.4L303.5 56 301.5 53.4M313.5 53.4L311.5 56 309.5 53.4M321.5 53.4L319.5 56 317.5 53.4M329.5 53.4L327.5 56 325.5 53.4M2.5 61.4L0.5 64 -1.5 61.4M9.5 61.4L7.5 64 5.5 61.4M17.5 61.4L15.5 64 13.5 61.4M25.5 61.4L23.5 64 21.5 61.4M33.5 61.4L31.5 64 29.5 61.4M41.5 61.4L39.5 64 37.5 61.4M49.5 61.4L47.5 64 45.5 61.4M57.5 61.4L55.5 64 53.5 61.4M65.5 61.4L63.5 64 61.5 61.4M73.5 61.4L71.5 64 69.5 61.4M81.5 61.4L79.5 64 77.5 61.4M89.5 61.4L87.5 64 85.5 61.4M97.5 61.4L95.5 64 93.5 61.4M105.5 61.4L103.5 64 101.5 61.4M113.5 61.4L111.5 64 109.5 61.4M121.5 61.4L119.5 64 117.5 61.4M129.5 61.4L127.5 64 125.5 61.4M137.5 61.4L135.5 64 133.5 61.4M145.5 61.4L143.5 64 141.5 61.4M153.5 61.4L151.5 64 149.5 61.4M161.5 61.4L159.5 64 157.5 61.4M169.5 61.4L167.5 64 165.5 61.4M177.5 61.4L175.5 64 173.5 61.4M185.5 61.4L183.5 64 181.5 61.4M193.5 61.4L191.5 64 189.5 61.4M201.5 61.4L199.5 64 197.5 61.4M209.5 61.4L207.5 64 205.5 61.4M217.5 61.4L215.5 64 213.5 61.4M225.5 61.4L223.5 64 221.5 61.4M233.5 61.4L231.5 64 229.5 61.4M241.5 61.4L239.5 64 237.5 61.4M249.5 61.4L247.5 64 245.5 61.4M257.5 61.4L255.5 64 253.5 61.4M265.5 61.4L263.5 64 261.5 61.4M273.5 61.4L271.5 64 269.5 61.4M281.5 61.4L279.5 64 277.5 61.4M289.5 61.4L287.5 64 285.5 61.4M297.5 61.4L295.5 64 293.5 61.4M305.5 61.4L303.5 64 301.5 61.4M313.5 61.4L311.5 64 309.5 61.4M321.5 61.4L319.5 64 317.5 61.4M329.5 61.4L327.5 64 325.5 61.4M2.5 69.4L0.5 72 -1.5 69.4M9.5 69.4L7.5 72 5.5 69.4M17.5 69.4L15.5 72 13.5 69.4M25.5 69.4L23.5 72 21.5 69.4M33.5 69.4L31.5 72 29.5 69.4M41.5 69.4L39.5 72 37.5 69.4M49.5 69.4L47.5 72 45.5 69.4M57.5 69.4L55.5 72 53.5 69.4M65.5 69.4L63.5 72 61.5 69.4M73.5 69.4L71.5 72 69.5 69.4M81.5 69.4L79.5 72 77.5 69.4M89.5 69.4L87.5 72 85.5 69.4M97.5 69.4L95.5 72 93.5 69.4M105.5 69.4L103.5 72 101.5 69.4M113.5 69.4L111.5 72 109.5 69.4M121.5 69.4L119.5 72 117.5 69.4M129.5 69.4L127.5 72 125.5 69.4M137.5 69.4L135.5 72 133.5 69.4M145.5 69.4L143.5 72 141.5 69.4M153.5 69.4L151.5 72 149.5 69.4M161.5 69.4L159.5 72 157.5 69.4M169.5 69.4L167.5 72 165.5 69.4M177.5 69.4L175.5 72 173.5 69.4M185.5 69.4L183.5 72 181.5 69.4M193.5 69.4L191.5 72 189.5 69.4M201.5 69.4L199.5 72 197.5 69.4M209.5 69.4L207.5 72 205.5 69.4M217.5 69.4L215.5 72 213.5 69.4M225.5 69.4L223.5 72 221.5 69.4M233.5 69.4L231.5 72 229.5 69.4M241.5 69.4L239.5 72 237.5 69.4M249.5 69.4L247.5 72 245.5 69.4M257.5 69.4L255.5 72 253.5 69.4M265.5 69.4L263.5 72 261.5 69.4M273.5 69.4L271.5 72 269.5 69.4M281.5 69.4L279.5 72 277.5 69.4M289.5 69.4L287.5 72 285.5 69.4M297.5 69.4L295.5 72 293.5 69.4M305.5 69.4L303.5 72 301.5 69.4M313.5 69.4L311.5 72 309.5 69.4M321.5 69.4L319.5 72 317.5 69.4M329.5 69.4L327.5 72 325.5 69.4M2.5 77.4L0.5 80 -1.5 77.4M9.5 77.4L7.5 80 5.5 77.4M17.5 77.4L15.5 80 13.5 77.4M25.5 77.4L23.5 80 21.5 77.4M33.5 77.4L31.5 80 29.5 77.4M41.5 77.4L39.5 80 37.5 77.4M49.5 77.4L47.5 80 45.5 77.4M57.5 77.4L55.5 80 53.5 77.4M65.5 77.4L63.5 80 61.5 77.4M73.5 77.4L71.5 80 69.5 77.4M81.5 77.4L79.5 80 77.5 77.4M89.5 77.4L87.5 80 85.5 77.4M97.5 77.4L95.5 80 93.5 77.4M105.5 77.4L103.5 80 101.5 77.4M113.5 77.4L111.5 80 109.5 77.4M121.5 77.4L119.5 80 117.5 77.4M129.5 77.4L127.5 80 125.5 77.4M137.5 77.4L135.5 80 133.5 77.4M145.5 77.4L143.5 80 141.5 77.4M153.5 77.4L151.5 80 149.5 77.4M161.5 77.4L159.5 80 157.5 77.4M169.5 77.4L167.5 80 165.5 77.4M177.5 77.4L175.5 80 173.5 77.4M185.5 77.4L183.5 80 181.5 77.4M193.5 77.4L191.5 80 189.5 77.4M201.5 77.4L199.5 80 197.5 77.4M209.5 77.4L207.5 80 205.5 77.4M217.5 77.4L215.5 80 213.5 77.4M225.5 77.4L223.5 80 221.5 77.4M233.5 77.4L231.5 80 229.5 77.4M241.5 77.4L239.5 80 237.5 77.4M249.5 77.4L247.5 80 245.5 77.4M257.5 77.4L255.5 80 253.5 77.4M265.5 77.4L263.5 80 261.5 77.4M273.5 77.4L271.5 80 269.5 77.4M281.5 77.4L279.5 80 277.5 77.4M289.5 77.4L287.5 80 285.5 77.4M297.5 77.4L295.5 80 293.5 77.4M305.5 77.4L303.5 80 301.5 77.4M313.5 77.4L311.5 80 309.5 77.4M321.5 77.4L319.5 80 317.5 77.4M329.5 77.4L327.5 80 325.5 77.4M2.5 85.4L0.5 88 -1.5 85.4M9.5 85.4L7.5 88 5.5 85.4M17.5 85.4L15.5 88 13.5 85.4M25.5 85.4L23.5 88 21.5 85.4M33.5 85.4L31.5 88 29.5 85.4M41.5 85.4L39.5 88 37.5 85.4M49.5 85.4L47.5 88 45.5 85.4M57.5 85.4L55.5 88 53.5 85.4M65.5 85.4L63.5 88 61.5 85.4M73.5 85.4L71.5 88 69.5 85.4M81.5 85.4L79.5 88 77.5 85.4M89.5 85.4L87.5 88 85.5 85.4M97.5 85.4L95.5 88 93.5 85.4M105.5 85.4L103.5 88 101.5 85.4M113.5 85.4L111.5 88 109.5 85.4M121.5 85.4L119.5 88 117.5 85.4M129.5 85.4L127.5 88 125.5 85.4M137.5 85.4L135.5 88 133.5 85.4M145.5 85.4L143.5 88 141.5 85.4M153.5 85.4L151.5 88 149.5 85.4M161.5 85.4L159.5 88 157.5 85.4M169.5 85.4L167.5 88 165.5 85.4M177.5 85.4L175.5 88 173.5 85.4M185.5 85.4L183.5 88 181.5 85.4M193.5 85.4L191.5 88 189.5 85.4M201.5 85.4L199.5 88 197.5 85.4M209.5 85.4L207.5 88 205.5 85.4M217.5 85.4L215.5 88 213.5 85.4M225.5 85.4L223.5 88 221.5 85.4M233.5 85.4L231.5 88 229.5 85.4M241.5 85.4L239.5 88 237.5 85.4M249.5 85.4L247.5 88 245.5 85.4M257.5 85.4L255.5 88 253.5 85.4M265.5 85.4L263.5 88 261.5 85.4M273.5 85.4L271.5 88 269.5 85.4M281.5 85.4L279.5 88 277.5 85.4M289.5 85.4L287.5 88 285.5 85.4M297.5 85.4L295.5 88 293.5 85.4M305.5 85.4L303.5 88 301.5 85.4M313.5 85.4L311.5 88 309.5 85.4M321.5 85.4L319.5 88 317.5 85.4M329.5 85.4L327.5 88 325.5 85.4M2.5 93.4L0.5 96 -1.5 93.4M9.5 93.4L7.5 96 5.5 93.4M17.5 93.4L15.5 96 13.5 93.4M25.5 93.4L23.5 96 21.5 93.4M33.5 93.4L31.5 96 29.5 93.4M41.5 93.4L39.5 96 37.5 93.4M49.5 93.4L47.5 96 45.5 93.4M57.5 93.4L55.5 96 53.5 93.4M65.5 93.4L63.5 96 61.5 93.4M73.5 93.4L71.5 96 69.5 93.4M81.5 93.4L79.5 96 77.5 93.4M89.5 93.4L87.5 96 85.5 93.4M97.5 93.4L95.5 96 93.5 93.4M105.5 93.4L103.5 96 101.5 93.4M113.5 93.4L111.5 96 109.5 93.4M121.5 93.4L119.5 96 117.5 93.4M129.5 93.4L127.5 96 125.5 93.4M137.5 93.4L135.5 96 133.5 93.4M145.5 93.4L143.5 96 141.5 93.4M153.5 93.4L151.5 96 149.5 93.4M161.5 93.4L159.5 96 157.5 93.4M169.5 93.4L167.5 96 165.5 93.4M177.5 93.4L175.5 96 173.5 93.4M185.5 93.4L183.5 96 181.5 93.4M193.5 93.4L191.5 96 189.5 93.4M201.5 93.4L199.5 96 197.5 93.4M209.5 93.4L207.5 96 205.5 93.4M217.5 93.4L215.5 96 213.5 93.4M225.5 93.4L223.5 96 221.5 93.4M233.5 93.4L231.5 96 229.5 93.4M241.5 93.4L239.5 96 237.5 93.4M249.5 93.4L247.5 96 245.5 93.4M257.5 93.4L255.5 96 253.5 93.4M265.5 93.4L263.5 96 261.5 93.4M273.5 93.4L271.5 96 269.5 93.4M281.5 93.4L279.5 96 277.5 93.4M289.5 93.4L287.5 96 285.5 93.4M297.5 93.4L295.5 96 293.5 93.4M305.5 93.4L303.5 96 301.5 93.4M313.5 93.4L311.5 96 309.5 93.4M321.5 93.4L319.5 96 317.5 93.4M329.5 93.4L327.5 96 325.5 93.4M2.5 101.4L0.5 104 -1.5 101.4M9.5 101.4L7.5 104 5.5 101.4M17.5 101.4L15.5 104 13.5 101.4M25.5 101.4L23.5 104 21.5 101.4M33.5 101.4L31.5 104 29.5 101.4M41.5 101.4L39.5 104 37.5 101.4M49.5 101.4L47.5 104 45.5 101.4M57.5 101.4L55.5 104 53.5 101.4M65.5 101.4L63.5 104 61.5 101.4M73.5 101.4L71.5 104 69.5 101.4M81.5 101.4L79.5 104 77.5 101.4M89.5 101.4L87.5 104 85.5 101.4M97.5 101.4L95.5 104 93.5 101.4M105.5 101.4L103.5 104 101.5 101.4M113.5 101.4L111.5 104 109.5 101.4M121.5 101.4L119.5 104 117.5 101.4M129.5 101.4L127.5 104 125.5 101.4M137.5 101.4L135.5 104 133.5 101.4M145.5 101.4L143.5 104 141.5 101.4M153.5 101.4L151.5 104 149.5 101.4M161.5 101.4L159.5 104 157.5 101.4M169.5 101.4L167.5 104 165.5 101.4M177.5 101.4L175.5 104 173.5 101.4M185.5 101.4L183.5 104 181.5 101.4M193.5 101.4L191.5 104 189.5 101.4M201.5 101.4L199.5 104 197.5 101.4M209.5 101.4L207.5 104 205.5 101.4M217.5 101.4L215.5 104 213.5 101.4M225.5 101.4L223.5 104 221.5 101.4M233.5 101.4L231.5 104 229.5 101.4M241.5 101.4L239.5 104 237.5 101.4M249.5 101.4L247.5 104 245.5 101.4M257.5 101.4L255.5 104 253.5 101.4M265.5 101.4L263.5 104 261.5 101.4M273.5 101.4L271.5 104 269.5 101.4M281.5 101.4L279.5 104 277.5 101.4M289.5 101.4L287.5 104 285.5 101.4M297.5 101.4L295.5 104 293.5 101.4M305.5 101.4L303.5 104 301.5 101.4M313.5 101.4L311.5 104 309.5 101.4M321.5 101.4L319.5 104 317.5 101.4M329.5 101.4L327.5 104 325.5 101.4M2.5 109.4L0.5 112 -1.5 109.4M9.5 109.4L7.5 112 5.5 109.4M17.5 109.4L15.5 112 13.5 109.4M25.5 109.4L23.5 112 21.5 109.4M33.5 109.4L31.5 112 29.5 109.4M41.5 109.4L39.5 112 37.5 109.4M49.5 109.4L47.5 112 45.5 109.4M57.5 109.4L55.5 112 53.5 109.4M65.5 109.4L63.5 112 61.5 109.4M73.5 109.4L71.5 112 69.5 109.4M81.5 109.4L79.5 112 77.5 109.4M89.5 109.4L87.5 112 85.5 109.4M97.5 109.4L95.5 112 93.5 109.4M105.5 109.4L103.5 112 101.5 109.4M113.5 109.4L111.5 112 109.5 109.4M121.5 109.4L119.5 112 117.5 109.4M129.5 109.4L127.5 112 125.5 109.4M137.2 109.7L134.7 111.9 133.2 109M145 109.9L142.3 111.8 141 108.8M153.5 109.4L151.5 112 149.5 109.4M161.5 109.4L159.5 112 157.5 109.4M169.5 109.4L167.5 112 165.5 109.4M177.5 109.4L175.5 112 173.5 109.4M186 108.8L184.7 111.8 182 109.9M193.8 109L192.3 111.9 189.8 109.7M201.5 109.4L199.5 112 197.5 109.4M209.5 109.4L207.5 112 205.5 109.4M217.5 109.4L215.5 112 213.5 109.4M225.5 109.4L223.5 112 221.5 109.4M233.5 109.4L231.5 112 229.5 109.4M241.5 109.4L239.5 112 237.5 109.4M249.5 109.4L247.5 112 245.5 109.4M257.5 109.4L255.5 112 253.5 109.4M265.5 109.4L263.5 112 261.5 109.4M273.5 109.4L271.5 112 269.5 109.4M281.5 109.4L279.5 112 277.5 109.4M289.5 109.4L287.5 112 285.5 109.4M297.5 109.4L295.5 112 293.5 109.4M305.5 109.4L303.5 112 301.5 109.4M313.5 109.4L311.5 112 309.5 109.4M321.5 109.4L319.5 112 317.5 109.4M329.5 109.4L327.5 112 325.5 109.4M2.5 117.4L0.5 120 -1.5 117.4M9.5 117.4L7.5 120 5.5 117.4M17.5 117.4L15.5 120 13.5 117.4M25.5 117.4L23.5 120 21.5 117.4M33.5 117.4L31.5 120 29.5 117.4M41.5 117.4L39.5 120 37.5 117.4M49.5 117.4L47.5 120 45.5 117.4M57.5 117.4L55.5 120 53.5 117.4M65.5 117.4L63.5 120 61.5 117.4M73.5 117.4L71.5 120 69.5 117.4M81.5 117.4L79.5 120 77.5 117.4M89.5 117.4L87.5 120 85.5 117.4M97.5 117.4L95.5 120 93.5 117.4M105.5 117.4L103.5 120 101.5 117.4M113.5 117.4L111.5 120 109.5 117.4M121.5 117.4L119.5 120 117.5 117.4M129.2 117.7L126.7 119.9 125.2 117M136.8 118L134 119.7 132.9 116.6M144.5 118.1L141.6 119.6 140.9 116.4M153.4 117.6L151.1 120 149.3 117.2M161.5 117.4L159.5 120 157.5 117.4M169.5 117.4L167.5 120 165.5 117.4M177.7 117.2L175.9 120 173.6 117.6M186.1 116.4L185.4 119.6 182.5 118.1M194.1 116.6L193 119.7 190.2 118M201.8 117L200.3 119.9 197.8 117.7M209.5 117.4L207.5 120 205.5 117.4M217.5 117.4L215.5 120 213.5 117.4M225.5 117.4L223.5 120 221.5 117.4M233.5 117.4L231.5 120 229.5 117.4M241.5 117.4L239.5 120 237.5 117.4M249.5 117.4L247.5 120 245.5 117.4M257.5 117.4L255.5 120 253.5 117.4M265.5 117.4L263.5 120 261.5 117.4M273.5 117.4L271.5 120 269.5 117.4M281.5 117.4L279.5 120 277.5 117.4M289.5 117.4L287.5 120 285.5 117.4M297.5 117.4L295.5 120 293.5 117.4M305.5 117.4L303.5 120 301.5 117.4M313.5 117.4L311.5 120 309.5 117.4M321.5 117.4L319.5 120 317.5 117.4M329.5 117.4L327.5 120 325.5 117.4M2.5 125.4L0.5 128 -1.5 125.4M9.5 125.4L7.5 128 5.5 125.4M17.5 125.4L15.5 128 13.5 125.4M25.5 125.4L23.5 128 21.5 125.4M33.5 125.4L31.5 128 29.5 125.4M41.5 125.4L39.5 128 37.5 125.4M49.5 125.4L47.5 128 45.5 125.4M57.5 125.4L55.5 128 53.5 125.4M65.5 125.4L63.5 128 61.5 125.4M73.5 125.4L71.5 128 69.5 125.4M81.5 125.4L79.5 128 77.5 125.4M89.5 125.4L87.5 128 85.5 125.4M97.5 125.4L95.5 128 93.5 125.4M105.5 125.4L103.5 128 101.5 125.4M113.5 125.4L111.5 128 109.5 125.4M121.5 125.4L119.5 128 117.5 125.4M129.2 125.7L126.7 127.9 125.2 125M136.5 126.1L133.6 127.6 132.9 124.4M144.1 126.2L140.9 127.2 140.7 123.9M153.2 125.7L150.7 127.9 149.2 125M161.5 125.4L159.5 128 157.5 125.4M169.5 125.4L167.5 128 165.5 125.4M177.8 125L176.3 127.9 173.8 125.7M186.3 123.9L186.1 127.2 182.9 126.2M194.1 124.4L193.4 127.6 190.5 126.1M201.8 125L200.3 127.9 197.8 125.7M209.5 125.4L207.5 128 205.5 125.4M217.5 125.4L215.5 128 213.5 125.4M225.5 125.4L223.5 128 221.5 125.4M233.5 125.4L231.5 128 229.5 125.4M241.5 125.4L239.5 128 237.5 125.4M249.5 125.4L247.5 128 245.5 125.4M257.5 125.4L255.5 128 253.5 125.4M265.5 125.4L263.5 128 261.5 125.4M273.5 125.4L271.5 128 269.5 125.4M281.5 125.4L279.5 128 277.5 125.4M289.5 125.4L287.5 128 285.5 125.4M297.5 125.4L295.5 128 293.5 125.4M305.5 125.4L303.5 128 301.5 125.4M313.5 125.4L311.5 128 309.5 125.4M321.5 125.4L319.5 128 317.5 125.4M329.5 125.4L327.5 128 325.5 125.4M2.5 133.4L0.5 136 -1.5 133.4M9.5 133.4L7.5 136 5.5 133.4M17.5 133.4L15.5 136 13.5 133.4M25.5 133.4L23.5 136 21.5 133.4M33.5 133.4L31.5 136 29.5 133.4M41.5 133.4L39.5 136 37.5 133.4M49.5 133.4L47.5 136 45.5 133.4M57.5 133.4L55.5 136 53.5 133.4M65.5 133.4L63.5 136 61.5 133.4M73.5 133.4L71.5 136 69.5 133.4M81.5 133.4L79.5 136 77.5 133.4M89.5 133.4L87.5 136 85.5 133.4M97.5 133.4L95.5 136 93.5 133.4M105.5 133.4L103.5 136 101.5 133.4M113.5 133.4L111.5 136 109.5 133.4M121.5 133.4L119.5 136 117.5 133.4M129.4 133.6L127.1 136 125.3 133.2M136.8 134L134 135.7 132.9 132.6M144.3 134.2L141.2 135.4 140.8 132.1M153.4 129.5L156 131.5 153.4 133.5M161.4 129.5L164 131.5 161.4 133.5M169.4 129.5L172 131.5 169.4 133.5M177.4 129.5L180 131.5 177.4 133.5M185.4 129.5L188 131.5 185.4 133.5M194.2 132.1L193.8 135.4 190.7 134.2M202.1 132.6L201 135.7 198.2 134M209.7 133.2L207.9 136 205.6 133.6M217.5 133.4L215.5 136 213.5 133.4M225.5 133.4L223.5 136 221.5 133.4M233.5 133.4L231.5 136 229.5 133.4M241.5 133.4L239.5 136 237.5 133.4M249.5 133.4L247.5 136 245.5 133.4M257.5 133.4L255.5 136 253.5 133.4M265.5 133.4L263.5 136 261.5 133.4M273.5 133.4L271.5 136 269.5 133.4M281.5 133.4L279.5 136 277.5 133.4M289.5 133.4L287.5 136 285.5 133.4M297.5 133.4L295.5 136 293.5 133.4M305.5 133.4L303.5 136 301.5 133.4M313.5 133.4L311.5 136 309.5 133.4M321.5 133.4L319.5 136 317.5 133.4M329.5 133.4L327.5 136 325.5 133.4M2.5 141.4L0.5 144 -1.5 141.4M9.5 141.4L7.5 144 5.5 141.4M17.5 141.4L15.5 144 13.5 141.4M25.5 141.4L23.5 144 21.5 141.4M33.5 141.4L31.5 144 29.5 141.4M41.5 141.4L39.5 144 37.5 141.4M49.5 141.4L47.5 144 45.5 141.4M57.5 141.4L55.5 144 53.5 141.4M65.5 141.4L63.5 144 61.5 141.4M73.5 141.4L71.5 144 69.5 141.4M81.5 141.4L79.5 144 77.5 141.4M89.5 141.4L87.5 144 85.5 141.4M97.5 141.4L95.5 144 93.5 141.4M105.5 141.4L103.5 144 101.5 141.4M113.5 141.4L111.5 144 109.5 141.4M121.5 141.4L119.5 144 117.5 141.4M129.5 141.4L127.5 144 125.5 141.4M137.2 141.7L134.7 143.9 133.2 141M144.8 142L142 143.7 140.9 140.6M153.5 141.4L151.5 144 149.5 141.4M185.5 141.4L183.5 144 181.5 141.4M193.8 141L192.3 143.9 189.8 141.7M201.7 141.2L199.9 144 197.6 141.6M209.5 141.4L207.5 144 205.5 141.4M217.5 141.4L215.5 144 213.5 141.4M225.5 141.4L223.5 144 221.5 141.4M233.5 141.4L231.5 144 229.5 141.4M241.5 141.4L239.5 144 237.5 141.4M249.5 141.4L247.5 144 245.5 141.4M257.5 141.4L255.5 144 253.5 141.4M265.5 141.4L263.5 144 261.5 141.4M273.5 141.4L271.5 144 269.5 141.4M281.5 141.4L279.5 144 277.5 141.4M289.5 141.4L287.5 144 285.5 141.4M297.5 141.4L295.5 144 293.5 141.4M305.5 141.4L303.5 144 301.5 141.4M313.5 141.4L311.5 144 309.5 141.4M321.5 141.4L319.5 144 317.5 141.4M329.5 141.4L327.5 144 325.5 141.4M2.5 149.4L0.5 152 -1.5 149.4M9.5 149.4L7.5 152 5.5 149.4M17.5 149.4L15.5 152 13.5 149.4M25.5 149.4L23.5 152 21.5 149.4M33.5 149.4L31.5 152 29.5 149.4M41.5 149.4L39.5 152 37.5 149.4M49.5 149.4L47.5 152 45.5 149.4M57.5 149.4L55.5 152 53.5 149.4M65.5 149.4L63.5 152 61.5 149.4M73.5 149.4L71.5 152 69.5 149.4M81.5 149.4L79.5 152 77.5 149.4M89.5 149.4L87.5 152 85.5 149.4M97.5 149.4L95.5 152 93.5 149.4M105.5 149.4L103.5 152 101.5 149.4M113.5 149.4L111.5 152 109.5 149.4M121.5 149.4L119.5 152 117.5 149.4M129.5 149.4L127.5 152 125.5 149.4M137.5 149.4L135.5 152 133.5 149.4M144.8 150L142 151.7 140.9 148.6M153.5 149.4L151.5 152 149.5 149.4M185.5 149.4L183.5 152 181.5 149.4M193.5 149.4L191.5 152 189.5 149.4M201.5 149.4L199.5 152 197.5 149.4M209.5 149.4L207.5 152 205.5 149.4M217.5 149.4L215.5 152 213.5 149.4M225.5 149.4L223.5 152 221.5 149.4M233.5 149.4L231.5 152 229.5 149.4M241.5 149.4L239.5 152 237.5 149.4M249.5 149.4L247.5 152 245.5 149.4M257.5 149.4L255.5 152 253.5 149.4M265.5 149.4L263.5 152 261.5 149.4M273.5 149.4L271.5 152 269.5 149.4M281.5 149.4L279.5 152 277.5 149.4M289.5 149.4L287.5 152 285.5 149.4M297.5 149.4L295.5 152 293.5 149.4M305.5 149.4L303.5 152 301.5 149.4M313.5 149.4L311.5 152 309.5 149.4M321.5 149.4L319.5 152 317.5 149.4M329.5 149.4L327.5 152 325.5 149.4M2.5 157.4L0.5 160 -1.5 157.4M9.5 157.4L7.5 160 5.5 157.4M17.5 157.4L15.5 160 13.5 157.4M25.5 157.4L23.5 160 21.5 157.4M33.5 157.4L31.5 160 29.5 157.4M41.5 157.4L39.5 160 37.5 157.4M49.5 157.4L47.5 160 45.5 157.4M57.5 157.4L55.5 160 53.5 157.4M65.5 157.4L63.5 160 61.5 157.4M73.5 157.4L71.5 160 69.5 157.4M81.5 157.4L79.5 160 77.5 157.4M89.5 157.4L87.5 160 85.5 157.4M97.5 157.4L95.5 160 93.5 157.4M105.5 157.4L103.5 160 101.5 157.4M113.5 157.4L111.5 160 109.5 157.4M121.5 157.4L119.5 160 117.5 157.4M129.5 157.4L127.5 160 125.5 157.4M137.8 157L136.3 159.9 133.8 157.7M146.2 156.1L145.8 159.4 142.7 158.2M153.5 157.4L151.5 160 149.5 157.4M185.5 157.4L183.5 160 181.5 157.4M193.5 157.4L191.5 160 189.5 157.4M201.5 157.4L199.5 160 197.5 157.4M209.5 157.4L207.5 160 205.5 157.4M217.5 157.4L215.5 160 213.5 157.4M225.5 157.4L223.5 160 221.5 157.4M233.5 157.4L231.5 160 229.5 157.4M241.5 157.4L239.5 160 237.5 157.4M249.5 157.4L247.5 160 245.5 157.4M257.5 157.4L255.5 160 253.5 157.4M265.5 157.4L263.5 160 261.5 157.4M273.5 157.4L271.5 160 269.5 157.4M281.5 157.4L279.5 160 277.5 157.4M289.5 157.4L287.5 160 285.5 157.4M297.5 157.4L295.5 160 293.5 157.4M305.5 157.4L303.5 160 301.5 157.4M313.5 157.4L311.5 160 309.5 157.4M321.5 157.4L319.5 160 317.5 157.4M329.5 157.4L327.5 160 325.5 157.4M2.5 165.4L0.5 168 -1.5 165.4M9.5 165.4L7.5 168 5.5 165.4M17.5 165.4L15.5 168 13.5 165.4M25.5 165.4L23.5 168 21.5 165.4M33.5 165.4L31.5 168 29.5 165.4M41.5 165.4L39.5 168 37.5 165.4M49.5 165.4L47.5 168 45.5 165.4M57.5 165.4L55.5 168 53.5 165.4M65.5 165.4L63.5 168 61.5 165.4M73.5 165.4L71.5 168 69.5 165.4M81.5 165.4L79.5 168 77.5 165.4M89.5 165.4L87.5 168 85.5 165.4M97.5 165.4L95.5 168 93.5 165.4M105.5 165.4L103.5 168 101.5 165.4M113.5 165.4L111.5 168 109.5 165.4M121.5 165.4L119.5 168 117.5 165.4M129.5 165.4L127.5 168 125.5 165.4M137.8 165L136.3 167.9 133.8 165.7M146.2 164.1L145.8 167.4 142.7 166.2M153.4 161.5L156 163.5 153.4 165.5M161.4 161.5L164 163.5 161.4 165.5M169.4 161.5L172 163.5 169.4 165.5M177.4 161.5L180 163.5 177.4 165.5M185.4 161.5L188 163.5 185.4 165.5M193.5 165.4L191.5 168 189.5 165.4M201.5 165.4L199.5 168 197.5 165.4M209.5 165.4L207.5 168 205.5 165.4M217.5 165.4L215.5 168 213.5 165.4M225.5 165.4L223.5 168 221.5 165.4M233.5 165.4L231.5 168 229.5 165.4M241.5 165.4L239.5 168 237.5 165.4M249.5 165.4L247.5 168 245.5 165.4M257.5 165.4L255.5 168 253.5 165.4M265.5 165.4L263.5 168 261.5 165.4M273.5 165.4L271.5 168 269.5 165.4M281.5 165.4L279.5 168 277.5 165.4M289.5 165.4L287.5 168 285.5 165.4M297.5 165.4L295.5 168 293.5 165.4M305.5 165.4L303.5 168 301.5 165.4M313.5 165.4L311.5 168 309.5 165.4M321.5 165.4L319.5 168 317.5 165.4M329.5 165.4L327.5 168 325.5 165.4M2.5 173.4L0.5 176 -1.5 173.4M9.5 173.4L7.5 176 5.5 173.4M17.5 173.4L15.5 176 13.5 173.4M25.5 173.4L23.5 176 21.5 173.4M33.5 173.4L31.5 176 29.5 173.4M41.5 173.4L39.5 176 37.5 173.4M49.5 173.4L47.5 176 45.5 173.4M57.5 173.4L55.5 176 53.5 173.4M65.5 173.4L63.5 176 61.5 173.4M73.5 173.4L71.5 176 69.5 173.4M81.5 173.4L79.5 176 77.5 173.4M89.5 173.4L87.5 176 85.5 173.4M97.5 173.4L95.5 176 93.5 173.4M105.5 173.4L103.5 176 101.5 173.4M113.5 173.4L111.5 176 109.5 173.4M121.5 173.4L119.5 176 117.5 173.4M129.5 173.4L127.5 176 125.5 173.4M137.5 173.4L135.5 176 133.5 173.4M146.3 171.4L146.7 174.7 143.4 174.3M154.1 172.6L153 175.7 150.2 174M161.4 169.5L164 171.5 161.4 173.5M169.4 169.5L172 171.5 169.4 173.5M178.2 170.7L179.4 173.8 176.1 174.2M185.5 173.4L183.5 176 181.5 173.4M193.2 173.7L190.7 175.9 189.2 173M201.2 173.7L198.7 175.9 197.2 173M209.5 173.4L207.5 176 205.5 173.4M217.5 173.4L215.5 176 213.5 173.4M225.5 173.4L223.5 176 221.5 173.4M233.5 173.4L231.5 176 229.5 173.4M241.5 173.4L239.5 176 237.5 173.4M249.5 173.4L247.5 176 245.5 173.4M257.5 173.4L255.5 176 253.5 173.4M265.5 173.4L263.5 176 261.5 173.4M273.5 173.4L271.5 176 269.5 173.4M281.5 173.4L279.5 176 277.5 173.4M289.5 173.4L287.5 176 285.5 173.4M297.5 173.4L295.5 176 293.5 173.4M305.5 173.4L303.5 176 301.5 173.4M313.5 173.4L311.5 176 309.5 173.4M321.5 173.4L319.5 176 317.5 173.4M329.5 173.4L327.5 176 325.5 173.4M2.5 181.4L0.5 184 -1.5 181.4M9.5 181.4L7.5 184 5.5 181.4M17.5 181.4L15.5 184 13.5 181.4M25.5 181.4L23.5 184 21.5 181.4M33.5 181.4L31.5 184 29.5 181.4M41.5 181.4L39.5 184 37.5 181.4M49.5 181.4L47.5 184 45.5 181.4M57.5 181.4L55.5 184 53.5 181.4M65.5 181.4L63.5 184 61.5 181.4M73.5 181.4L71.5 184 69.5 181.4M81.5 181.4L79.5 184 77.5 181.4M89.5 181.4L87.5 184 85.5 181.4M97.5 181.4L95.5 184 93.5 181.4M105.5 181.4L103.5 184 101.5 181.4M113.5 181.4L111.5 184 109.5 181.4M121.5 181.4L119.5 184 117.5 181.4M129.5 181.4L127.5 184 125.5 181.4M137.5 181.4L135.5 184 133.5 181.4M141.5 177.6L143.5 175 145.5 177.6M154.3 179.4L154.7 182.7 151.4 182.3M162.3 179.4L162.7 182.7 159.4 182.3M167.4 176.7L170.7 176.3 170.3 179.6M175.6 182.3L172.3 182.7 172.7 179.4M183.6 182.3L180.3 182.7 180.7 179.4M192.8 182L190 183.7 188.9 180.6M201.2 181.7L198.7 183.9 197.2 181M209.5 181.4L207.5 184 205.5 181.4M217.5 181.4L215.5 184 213.5 181.4M225.5 181.4L223.5 184 221.5 181.4M233.5 181.4L231.5 184 229.5 181.4M241.5 181.4L239.5 184 237.5 181.4M249.5 181.4L247.5 184 245.5 181.4M257.5 181.4L255.5 184 253.5 181.4M265.5 181.4L263.5 184 261.5 181.4M273.5 181.4L271.5 184 269.5 181.4M281.5 181.4L279.5 184 277.5 181.4M289.5 181.4L287.5 184 285.5 181.4M297.5 181.4L295.5 184 293.5 181.4M305.5 181.4L303.5 184 301.5 181.4M313.5 181.4L311.5 184 309.5 181.4M321.5 181.4L319.5 184 317.5 181.4M329.5 181.4L327.5 184 325.5 181.4M2.5 189.4L0.5 192 -1.5 189.4M9.5 189.4L7.5 192 5.5 189.4M17.5 189.4L15.5 192 13.5 189.4M25.5 189.4L23.5 192 21.5 189.4M33.5 189.4L31.5 192 29.5 189.4M41.5 189.4L39.5 192 37.5 189.4M49.5 189.4L47.5 192 45.5 189.4M57.5 189.4L55.5 192 53.5 189.4M65.5 189.4L63.5 192 61.5 189.4M73.5 189.4L71.5 192 69.5 189.4M81.5 189.4L79.5 192 77.5 189.4M89.5 189.4L87.5 192 85.5 189.4M97.5 189.4L95.5 192 93.5 189.4M105.5 189.4L103.5 192 101.5 189.4M113.5 189.4L111.5 192 109.5 189.4M121.5 189.4L119.5 192 117.5 189.4M128.3 190.2L125.2 191.4 124.8 188.1M137.5 189.4L135.5 192 133.5 189.4M141.8 185.3L144.3 183.1 145.8 186M151.4 184.7L154.7 184.3 154.3 187.6M159.8 190.3L156.6 190.9 156.7 187.6M167.6 190.3L164.3 190.7 164.7 187.4M175.6 190.3L172.3 190.7 172.7 187.4M183.8 190.3L180.6 190.9 180.7 187.6M192.1 190.2L188.9 191.2 188.7 187.9M200.8 190L198 191.7 196.9 188.6M209.5 189.4L207.5 192 205.5 189.4M217.5 189.4L215.5 192 213.5 189.4M225.5 189.4L223.5 192 221.5 189.4M233.5 189.4L231.5 192 229.5 189.4M241.5 189.4L239.5 192 237.5 189.4M249.5 189.4L247.5 192 245.5 189.4M257.5 189.4L255.5 192 253.5 189.4M265.5 189.4L263.5 192 261.5 189.4M273.5 189.4L271.5 192 269.5 189.4M281.5 189.4L279.5 192 277.5 189.4M289.5 189.4L287.5 192 285.5 189.4M297.5 189.4L295.5 192 293.5 189.4M305.5 189.4L303.5 192 301.5 189.4M313.5 189.4L311.5 192 309.5 189.4M321.5 189.4L319.5 192 317.5 189.4M329.5 189.4L327.5 192 325.5 189.4M2.5 197.4L0.5 200 -1.5 197.4M9.5 197.4L7.5 200 5.5 197.4M17.5 197.4L15.5 200 13.5 197.4M25.5 197.4L23.5 200 21.5 197.4M33.5 197.4L31.5 200 29.5 197.4M41.5 197.4L39.5 200 37.5 197.4M49.5 197.4L47.5 200 45.5 197.4M57.5 197.4L55.5 200 53.5 197.4M65.5 197.4L63.5 200 61.5 197.4M73.5 197.4L71.5 200 69.5 197.4M81.5 197.4L79.5 200 77.5 197.4M89.5 197.4L87.5 200 85.5 197.4M97.5 197.4L95.5 200 93.5 197.4M105.5 197.4L103.5 200 101.5 197.4M113.5 197.4L111.5 200 109.5 197.4M121.5 197.4L119.5 200 117.5 197.4M127.6 198.3L124.3 198.7 124.7 195.4M133.6 197.5L131 195.5 133.6 193.5M141.6 197.5L139 195.5 141.6 193.5M149.6 197.5L147 195.5 149.6 193.5M159.6 198.3L156.3 198.7 156.7 195.4M167.6 198.3L164.3 198.7 164.7 195.4M175.6 198.3L172.3 198.7 172.7 195.4M183.6 198.3L180.3 198.7 180.7 195.4M191.8 198.3L188.6 198.9 188.7 195.6M200.3 198.2L197.2 199.4 196.8 196.1M209.5 197.4L207.5 200 205.5 197.4M217.5 197.4L215.5 200 213.5 197.4M225.5 197.4L223.5 200 221.5 197.4M233.5 197.4L231.5 200 229.5 197.4M241.5 197.4L239.5 200 237.5 197.4M249.5 197.4L247.5 200 245.5 197.4M257.5 197.4L255.5 200 253.5 197.4M265.5 197.4L263.5 200 261.5 197.4M273.5 197.4L271.5 200 269.5 197.4M281.5 197.4L279.5 200 277.5 197.4M289.5 197.4L287.5 200 285.5 197.4M297.5 197.4L295.5 200 293.5 197.4M305.5 197.4L303.5 200 301.5 197.4M313.5 197.4L311.5 200 309.5 197.4M321.5 197.4L319.5 200 317.5 197.4M329.5 197.4L327.5 200 325.5 197.4M2.5 205.4L0.5 208 -1.5 205.4M9.5 205.4L7.5 208 5.5 205.4M17.5 205.4L15.5 208 13.5 205.4M25.5 205.4L23.5 208 21.5 205.4M33.5 205.4L31.5 208 29.5 205.4M41.5 205.4L39.5 208 37.5 205.4M49.5 205.4L47.5 208 45.5 205.4M57.5 205.4L55.5 208 53.5 205.4M65.5 205.4L63.5 208 61.5 205.4M73.5 205.4L71.5 208 69.5 205.4M81.5 205.4L79.5 208 77.5 205.4M89.5 205.4L87.5 208 85.5 205.4M97.5 205.4L95.5 208 93.5 205.4M105.5 205.4L103.5 208 101.5 205.4M113.5 205.4L111.5 208 109.5 205.4M119.6 206.3L116.3 206.7 116.7 203.4M125.6 205.5L123 203.5 125.6 201.5M133.6 205.5L131 203.5 133.6 201.5M141.6 205.5L139 203.5 141.6 201.5M150.4 206.1L147.3 205 149 202.2M159.4 206.3L156.1 206.4 156.7 203.2M167.6 206.3L164.3 206.7 164.7 203.4M175.6 206.3L172.3 206.7 172.7 203.4M183.6 206.3L180.3 206.7 180.7 203.4M191.8 206.3L188.6 206.9 188.7 203.6M200.3 206.2L197.2 207.4 196.8 204.1M209.5 205.4L207.5 208 205.5 205.4M217.5 205.4L215.5 208 213.5 205.4M225.5 205.4L223.5 208 221.5 205.4M233.5 205.4L231.5 208 229.5 205.4M241.5 205.4L239.5 208 237.5 205.4M249.5 205.4L247.5 208 245.5 205.4M257.5 205.4L255.5 208 253.5 205.4M265.5 205.4L263.5 208 261.5 205.4M273.5 205.4L271.5 208 269.5 205.4M281.5 205.4L279.5 208 277.5 205.4M289.5 205.4L287.5 208 285.5 205.4M297.5 205.4L295.5 208 293.5 205.4M305.5 205.4L303.5 208 301.5 205.4M313.5 205.4L311.5 208 309.5 205.4M321.5 205.4L319.5 208 317.5 205.4M329.5 205.4L327.5 208 325.5 205.4M2.5 213.4L0.5 216 -1.5 213.4M9.5 213.4L7.5 216 5.5 213.4M17.5 213.4L15.5 216 13.5 213.4M25.5 213.4L23.5 216 21.5 213.4M33.5 213.4L31.5 216 29.5 213.4M41.5 213.4L39.5 216 37.5 213.4M49.5 213.4L47.5 216 45.5 213.4M57.5 213.4L55.5 216 53.5 213.4M65.5 213.4L63.5 216 61.5 213.4M73.5 213.4L71.5 216 69.5 213.4M81.5 213.4L79.5 216 77.5 213.4M89.5 213.4L87.5 216 85.5 213.4M97.5 213.4L95.5 216 93.5 213.4M105.5 213.4L103.5 216 101.5 213.4M113.5 213.4L111.5 216 109.5 213.4M120.3 214.2L117.2 215.4 116.8 212.1M127.4 214.3L124.1 214.4 124.7 211.2M134.9 214.2L131.6 213.8 132.8 210.7M143.1 214.3L139.8 214.1 140.8 210.9M151.4 214.3L148.1 214.4 148.7 211.2M159.4 214.3L156.1 214.4 156.7 211.2M167.6 214.3L164.3 214.7 164.7 211.4M175.6 214.3L172.3 214.7 172.7 211.4M183.8 214.3L180.6 214.9 180.7 211.6M192.3 214.2L189.2 215.4 188.8 212.1M200.8 214L198 215.7 196.9 212.6M209.2 213.7L206.7 215.9 205.2 213M217.5 213.4L215.5 216 213.5 213.4M225.5 213.4L223.5 216 221.5 213.4M233.5 213.4L231.5 216 229.5 213.4M241.5 213.4L239.5 216 237.5 213.4M249.5 213.4L247.5 216 245.5 213.4M257.5 213.4L255.5 216 253.5 213.4M265.5 213.4L263.5 216 261.5 213.4M273.5 213.4L271.5 216 269.5 213.4M281.5 213.4L279.5 216 277.5 213.4M289.5 213.4L287.5 216 285.5 213.4M297.5 213.4L295.5 216 293.5 213.4M305.5 213.4L303.5 216 301.5 213.4M313.5 213.4L311.5 216 309.5 213.4M321.5 213.4L319.5 216 317.5 213.4M329.5 213.4L327.5 216 325.5 213.4M2.5 221.4L0.5 224 -1.5 221.4M9.5 221.4L7.5 224 5.5 221.4M17.5 221.4L15.5 224 13.5 221.4M25.5 221.4L23.5 224 21.5 221.4M33.5 221.4L31.5 224 29.5 221.4M41.5 221.4L39.5 224 37.5 221.4M49.5 221.4L47.5 224 45.5 221.4M57.5 221.4L55.5 224 53.5 221.4M65.5 221.4L63.5 224 61.5 221.4M73.5 221.4L71.5 224 69.5 221.4M81.5 221.4L79.5 224 77.5 221.4M89.5 221.4L87.5 224 85.5 221.4M97.5 221.4L95.5 224 93.5 221.4M105.5 221.4L103.5 224 101.5 221.4M113.5 221.4L111.5 224 109.5 221.4M119.6 222.3L116.3 222.7 116.7 219.4M127.4 222.3L124.1 222.4 124.7 219.2M135.4 222.3L132.1 222.4 132.7 219.2M143.4 222.3L140.1 222.4 140.7 219.2M151.4 222.3L148.1 222.4 148.7 219.2M159.4 222.3L156.1 222.4 156.7 219.2M167.4 222.3L164.1 222.4 164.7 219.2M175.4 222.3L172.1 222.4 172.7 219.2M183.4 222.3L180.1 222.4 180.7 219.2M191.4 222.3L188.1 222.4 188.7 219.2M200.3 222.2L197.2 223.4 196.8 220.1M209.2 221.7L206.7 223.9 205.2 221M217.5 221.4L215.5 224 213.5 221.4M225.5 221.4L223.5 224 221.5 221.4M233.5 221.4L231.5 224 229.5 221.4M241.5 221.4L239.5 224 237.5 221.4M249.5 221.4L247.5 224 245.5 221.4M257.5 221.4L255.5 224 253.5 221.4M265.5 221.4L263.5 224 261.5 221.4M273.5 221.4L271.5 224 269.5 221.4M281.5 221.4L279.5 224 277.5 221.4M289.5 221.4L287.5 224 285.5 221.4M297.5 221.4L295.5 224 293.5 221.4M305.5 221.4L303.5 224 301.5 221.4M313.5 221.4L311.5 224 309.5 221.4M321.5 221.4L319.5 224 317.5 221.4M329.5 221.4L327.5 224 325.5 221.4M2.5 229.4L0.5 232 -1.5 229.4M9.5 229.4L7.5 232 5.5 229.4M17.5 229.4L15.5 232 13.5 229.4M25.5 229.4L23.5 232 21.5 229.4M33.5 229.4L31.5 232 29.5 229.4M41.5 229.4L39.5 232 37.5 229.4M49.5 229.4L47.5 232 45.5 229.4M57.5 229.4L55.5 232 53.5 229.4M65.5 229.4L63.5 232 61.5 229.4M73.5 229.4L71.5 232 69.5 229.4M81.5 229.4L79.5 232 77.5 229.4M89.5 229.4L87.5 232 85.5 229.4M97.5 229.4L95.5 232 93.5 229.4M105.5 229.4L103.5 232 101.5 229.4M113.5 229.4L111.5 232 109.5 229.4M120.3 230.2L117.2 231.4 116.8 228.1M127.6 230.3L124.3 230.7 124.7 227.4M135.6 230.3L132.3 230.7 132.7 227.4M143.6 230.3L140.3 230.7 140.7 227.4M151.6 230.3L148.3 230.7 148.7 227.4M159.6 230.3L156.3 230.7 156.7 227.4M167.6 230.3L164.3 230.7 164.7 227.4M175.6 230.3L172.3 230.7 172.7 227.4M183.6 230.3L180.3 230.7 180.7 227.4M191.8 230.3L188.6 230.9 188.7 227.6M200.3 230.2L197.2 231.4 196.8 228.1M209.2 229.7L206.7 231.9 205.2 229M217.5 229.4L215.5 232 213.5 229.4M225.5 229.4L223.5 232 221.5 229.4M233.5 229.4L231.5 232 229.5 229.4M241.5 229.4L239.5 232 237.5 229.4M249.5 229.4L247.5 232 245.5 229.4M257.5 229.4L255.5 232 253.5 229.4M265.5 229.4L263.5 232 261.5 229.4M273.5 229.4L271.5 232 269.5 229.4M281.5 229.4L279.5 232 277.5 229.4M289.5 229.4L287.5 232 285.5 229.4M297.5 229.4L295.5 232 293.5 229.4M305.5 229.4L303.5 232 301.5 229.4M313.5 229.4L311.5 232 309.5 229.4M321.5 229.4L319.5 232 317.5 229.4M329.5 229.4L327.5 232 325.5 229.4M2.5 237.4L0.5 240 -1.5 237.4M9.5 237.4L7.5 240 5.5 237.4M17.5 237.4L15.5 240 13.5 237.4M25.5 237.4L23.5 240 21.5 237.4M33.5 237.4L31.5 240 29.5 237.4M41.5 237.4L39.5 240 37.5 237.4M49.5 237.4L47.5 240 45.5 237.4M57.5 237.4L55.5 240 53.5 237.4M65.5 237.4L63.5 240 61.5 237.4M73.5 237.4L71.5 240 69.5 237.4M81.5 237.4L79.5 240 77.5 237.4M89.5 237.4L87.5 240 85.5 237.4M97.5 237.4L95.5 240 93.5 237.4M105.4 237.5L103.2 240 101.3 237.3M113.3 237.6L110.9 240 109.2 237.1M120.8 238L118 239.7 116.9 236.6M127.8 238.3L124.6 238.9 124.7 235.6M135.8 238.3L132.6 238.9 132.7 235.6M143.8 238.3L140.6 238.9 140.7 235.6M151.8 238.3L148.6 238.9 148.7 235.6M159.8 238.3L156.6 238.9 156.7 235.6M167.8 238.3L164.6 238.9 164.7 235.6M175.8 238.3L172.6 238.9 172.7 235.6M183.8 238.3L180.6 238.9 180.7 235.6M192.1 238.2L188.9 239.2 188.7 235.9M200.5 238.1L197.6 239.6 196.9 236.4M209.2 237.7L206.7 239.9 205.2 237M217.6 237.3L215.7 240 213.6 237.5M225.5 237.4L223.5 240 221.5 237.4M233.5 237.4L231.5 240 229.5 237.4M241.5 237.4L239.5 240 237.5 237.4M249.5 237.4L247.5 240 245.5 237.4M257.5 237.4L255.5 240 253.5 237.4M265.5 237.4L263.5 240 261.5 237.4M273.5 237.4L271.5 240 269.5 237.4M281.5 237.4L279.5 240 277.5 237.4M289.5 237.4L287.5 240 285.5 237.4M297.5 237.4L295.5 240 293.5 237.4M305.5 237.4L303.5 240 301.5 237.4M313.5 237.4L311.5 240 309.5 237.4M321.5 237.4L319.5 240 317.5 237.4M329.5 237.4L327.5 240 325.5 237.4M2.5 245.4L0.5 248 -1.5 245.4M9.5 245.4L7.5 248 5.5 245.4M17.5 245.4L15.5 248 13.5 245.4M25.5 245.4L23.5 248 21.5 245.4M33.5 245.4L31.5 248 29.5 245.4M41.5 245.4L39.5 248 37.5 245.4M49.5 245.4L47.5 248 45.5 245.4M57.5 245.4L55.5 248 53.5 245.4M65.5 245.4L63.5 248 61.5 245.4M73.5 245.4L71.5 248 69.5 245.4M81.5 245.4L79.5 248 77.5 245.4M89.5 245.4L87.5 248 85.5 245.4M97.5 245.4L95.5 248 93.5 245.4M105.3 245.6L102.9 248 101.2 245.1M113 245.9L110.3 247.8 109 244.8M120.7 246L117.8 247.7 116.9 244.5M128.3 246.2L125.2 247.4 124.8 244.1M136.5 246.1L133.6 247.6 132.9 244.4M144.8 246L142 247.7 140.9 244.6M153 245.9L150.3 247.8 149 244.8M161.2 245.7L158.7 247.9 157.2 245M169.5 245.4L167.5 248 165.5 245.4M177.8 245L176.3 247.9 173.8 245.7M186 244.8L184.7 247.8 182 245.9M194.1 244.6L193 247.7 190.2 246M202 244.8L200.7 247.8 198 245.9M209.8 245L208.3 247.9 205.8 245.7M217.7 245.2L215.9 248 213.6 245.6M225.5 245.4L223.5 248 221.5 245.4M233.5 245.4L231.5 248 229.5 245.4M241.5 245.4L239.5 248 237.5 245.4M249.5 245.4L247.5 248 245.5 245.4M257.5 245.4L255.5 248 253.5 245.4M265.5 245.4L263.5 248 261.5 245.4M273.5 245.4L271.5 248 269.5 245.4M281.5 245.4L279.5 248 277.5 245.4M289.5 245.4L287.5 248 285.5 245.4M297.5 245.4L295.5 248 293.5 245.4M305.5 245.4L303.5 248 301.5 245.4M313.5 245.4L311.5 248 309.5 245.4M321.5 245.4L319.5 248 317.5 245.4M329.5 245.4L327.5 248 325.5 245.4M2.5 253.4L0.5 256 -1.5 253.4M9.5 253.4L7.5 256 5.5 253.4M17.5 253.4L15.5 256 13.5 253.4M25.5 253.4L23.5 256 21.5 253.4M33.5 253.4L31.5 256 29.5 253.4M41.5 253.4L39.5 256 37.5 253.4M49.5 253.4L47.5 256 45.5 253.4M57.5 253.4L55.5 256 53.5 253.4M65.5 253.4L63.5 256 61.5 253.4M73.5 253.4L71.5 256 69.5 253.4M81.5 253.4L79.5 256 77.5 253.4M89.5 253.4L87.5 256 85.5 253.4M97.5 253.4L95.5 256 93.5 253.4M105.4 253.6L103.1 256 101.3 253.2M113.2 253.7L110.7 255.9 109.2 253M121.2 253.7L118.7 255.9 117.2 253M129.2 253.7L126.7 255.9 125.2 253M137.4 253.6L135.1 256 133.3 253.2M145.5 253.4L143.5 256 141.5 253.4M153.7 253.3L151.8 256 149.6 253.5M161.8 253.1L160.1 256 157.7 253.6M169.9 252.9L168.6 255.9 166 253.8M178.1 252.6L177 255.7 174.2 254M186.1 252.4L185.3 255.6 182.4 254.1M194.2 252.2L193.6 255.5 190.6 254.1M202.1 252.6L201 255.7 198.2 254M209.9 252.9L208.5 255.9 205.9 253.8M217.7 253.2L216 256 213.7 253.6M225.5 253.4L223.5 256 221.5 253.4M233.5 253.4L231.5 256 229.5 253.4M241.5 253.4L239.5 256 237.5 253.4M249.5 253.4L247.5 256 245.5 253.4M257.5 253.4L255.5 256 253.5 253.4M265.5 253.4L263.5 256 261.5 253.4M273.5 253.4L271.5 256 269.5 253.4M281.5 253.4L279.5 256 277.5 253.4M289.5 253.4L287.5 256 285.5 253.4M297.5 253.4L295.5 256 293.5 253.4M305.5 253.4L303.5 256 301.5 253.4M313.5 253.4L311.5 256 309.5 253.4M321.5 253.4L319.5 256 317.5 253.4M329.5 253.4L327.5 256 325.5 253.4M2.5 261.4L0.5 264 -1.5 261.4M9.5 261.4L7.5 264 5.5 261.4M17.5 261.4L15.5 264 13.5 261.4M25.5 261.4L23.5 264 21.5 261.4M33.5 261.4L31.5 264 29.5 261.4M41.5 261.4L39.5 264 37.5 261.4M49.5 261.4L47.5 264 45.5 261.4M57.5 261.4L55.5 264 53.5 261.4M65.5 261.4L63.5 264 61.5 261.4M73.5 261.4L71.5 264 69.5 261.4M81.5 261.4L79.5 264 77.5 261.4M89.5 261.4L87.5 264 85.5 261.4M97.5 261.4L95.5 264 93.5 261.4M105.4 261.5L103.3 264 101.4 261.3M113.4 261.6L111.1 264 109.3 261.2M121.6 261.3L119.7 264 117.6 261.5M129.8 261L128.3 263.9 125.8 261.7M138 260.8L136.7 263.8 134 261.9M146.1 260.6L145 263.7 142.2 262M154.1 260.5L153.2 263.7 150.3 262M162.1 260.4L161.4 263.6 158.5 262.1M170.2 260.2L169.6 263.5 166.6 262.1M178.2 260.1L177.8 263.4 174.7 262.2M186.2 260L185.9 263.3 182.8 262.2M194.3 259.9L194.1 263.2 190.9 262.2M202.1 260.4L201.4 263.6 198.5 262.1M210 260.8L208.7 263.8 206 261.9M217.8 261.1L216.1 264 213.7 261.6M225.5 261.4L223.5 264 221.5 261.4M233.5 261.4L231.5 264 229.5 261.4M241.5 261.4L239.5 264 237.5 261.4M249.5 261.4L247.5 264 245.5 261.4M257.5 261.4L255.5 264 253.5 261.4M265.5 261.4L263.5 264 261.5 261.4M273.5 261.4L271.5 264 269.5 261.4M281.5 261.4L279.5 264 277.5 261.4M289.5 261.4L287.5 264 285.5 261.4M297.5 261.4L295.5 264 293.5 261.4M305.5 261.4L303.5 264 301.5 261.4M313.5 261.4L311.5 264 309.5 261.4M321.5 261.4L319.5 264 317.5 261.4M329.5 261.4L327.5 264 325.5 261.4M2.5 269.4L0.5 272 -1.5 269.4M9.5 269.4L7.5 272 5.5 269.4M17.5 269.4L15.5 272 13.5 269.4M25.5 269.4L23.5 272 21.5 269.4M33.5 269.4L31.5 272 29.5 269.4M41.5 269.4L39.5 272 37.5 269.4M49.5 269.4L47.5 272 45.5 269.4M57.5 269.4L55.5 272 53.5 269.4M65.5 269.4L63.5 272 61.5 269.4M73.5 269.4L71.5 272 69.5 269.4M81.5 269.4L79.5 272 77.5 269.4M89.5 269.4L87.5 272 85.5 269.4M97.5 269.4L95.5 272 93.5 269.4M105.5 269.4L103.5 272 101.5 269.4M113.5 269.4L111.5 272 109.5 269.4M121.8 269.1L120.1 272 117.7 269.6M130 268.8L128.7 271.8 126 269.9M138 268.6L136.9 271.8 134.2 270M146.1 268.5L145.2 271.7 142.3 270M154.1 268.4L153.4 271.6 150.5 270.1M162.2 268.2L161.6 271.5 158.6 270.1M170.2 268.2L169.7 271.4 166.6 270.1M178.2 268.1L177.8 271.4 174.7 270.2M186.2 268.1L185.8 271.3 182.7 270.2M194.2 268L193.9 271.3 190.8 270.2M202.1 268.4L201.4 271.6 198.5 270.1M210 268.7L208.9 271.8 206.1 269.9M217.8 269L216.3 271.9 213.8 269.7M225.6 269.3L223.7 272 221.6 269.5M233.6 269.4L231.6 272 229.5 269.4M241.5 269.4L239.5 272 237.5 269.4M249.5 269.4L247.5 272 245.5 269.4M257.5 269.4L255.5 272 253.5 269.4M265.5 269.4L263.5 272 261.5 269.4M273.5 269.4L271.5 272 269.5 269.4M281.5 269.4L279.5 272 277.5 269.4M289.5 269.4L287.5 272 285.5 269.4M297.5 269.4L295.5 272 293.5 269.4M305.5 269.4L303.5 272 301.5 269.4M313.5 269.4L311.5 272 309.5 269.4M321.5 269.4L319.5 272 317.5 269.4M329.5 269.4L327.5 272 325.5 269.4M2.5 277.4L0.5 280 -1.5 277.4M9.5 277.4L7.5 280 5.5 277.4M17.5 277.4L15.5 280 13.5 277.4M25.5 277.4L23.5 280 21.5 277.4M33.5 277.4L31.5 280 29.5 277.4M41.5 277.4L39.5 280 37.5 277.4M49.5 277.4L47.5 280 45.5 277.4M57.5 277.4L55.5 280 53.5 277.4M65.5 277.4L63.5 280 61.5 277.4M73.5 277.4L71.5 280 69.5 277.4M81.5 277.4L79.5 280 77.5 277.4M89.5 277.4L87.5 280 85.5 277.4M97.5 277.4L95.5 280 93.5 277.4M105.6 277.3L103.7 280 101.6 277.5M113.7 277.2L111.9 280 109.6 277.6M121.9 276.9L120.5 279.9 117.9 277.8M130.1 276.6L129 279.7 126.2 278M138.1 276.5L137.2 279.7 134.3 278M146.1 276.4L145.4 279.6 142.5 278.1M154.2 276.2L153.6 279.5 150.6 278.1M162.2 276.1L161.8 279.4 158.7 278.2M170.2 276.1L169.8 279.4 166.7 278.2M178.2 276.1L177.8 279.4 174.7 278.2M186.2 276.1L185.8 279.4 182.7 278.2M194.2 276.1L193.8 279.4 190.7 278.2M202.1 276.4L201.4 279.6 198.5 278.1M210.1 276.6L209 279.7 206.2 278M217.9 276.9L216.5 279.9 213.9 277.8M225.7 277.2L223.9 280 221.6 277.6M233.6 277.3L231.7 280 229.6 277.5M241.5 277.4L239.5 280 237.5 277.4M249.5 277.4L247.5 280 245.5 277.4M257.5 277.4L255.5 280 253.5 277.4M265.5 277.4L263.5 280 261.5 277.4M273.5 277.4L271.5 280 269.5 277.4M281.5 277.4L279.5 280 277.5 277.4M289.5 277.4L287.5 280 285.5 277.4M297.5 277.4L295.5 280 293.5 277.4M305.5 277.4L303.5 280 301.5 277.4M313.5 277.4L311.5 280 309.5 277.4M321.5 277.4L319.5 280 317.5 277.4M329.5 277.4L327.5 280 325.5 277.4M2.5 285.4L0.5 288 -1.5 285.4M9.5 285.4L7.5 288 5.5 285.4M17.5 285.4L15.5 288 13.5 285.4M25.5 285.4L23.5 288 21.5 285.4M33.5 285.4L31.5 288 29.5 285.4M41.5 285.4L39.5 288 37.5 285.4M49.5 285.4L47.5 288 45.5 285.4M57.5 285.4L55.5 288 53.5 285.4M65.5 285.4L63.5 288 61.5 285.4M73.5 285.4L71.5 288 69.5 285.4M81.5 285.4L79.5 288 77.5 285.4M89.6 285.4L87.6 288 85.5 285.4M97.6 285.3L95.7 288 93.6 285.5M105.7 285.2L104 288 101.7 285.6M113.8 285L112.3 287.9 109.8 285.7M122 284.8L120.8 287.8 118.1 285.9M130.1 284.5L129.2 287.7 126.3 286M138.1 284.4L137.3 287.6 134.4 286.1M146.1 284.4L145.4 287.6 142.5 286.1M154.2 284.3L153.5 287.5 150.5 286.1M162.2 284.2L161.6 287.5 158.6 286.1M170.2 284.2L169.6 287.5 166.6 286.1M178.2 284.2L177.6 287.5 174.6 286.1M186.2 284.2L185.6 287.5 182.6 286.1M194.2 284.2L193.6 287.5 190.6 286.1M202.1 284.4L201.3 287.6 198.4 286.1M210.1 284.6L209 287.7 206.2 286M217.9 284.9L216.6 287.9 214 285.8M225.8 285.1L224.1 288 221.7 285.6M233.7 285.3L231.8 288 229.6 285.5M241.5 285.4L239.5 288 237.5 285.4M249.5 285.4L247.5 288 245.5 285.4M257.5 285.4L255.5 288 253.5 285.4M265.5 285.4L263.5 288 261.5 285.4M273.5 285.4L271.5 288 269.5 285.4M281.5 285.4L279.5 288 277.5 285.4M289.5 285.4L287.5 288 285.5 285.4M297.5 285.4L295.5 288 293.5 285.4M305.5 285.4L303.5 288 301.5 285.4M313.5 285.4L311.5 288 309.5 285.4M321.5 285.4L319.5 288 317.5 285.4M329.5 285.4L327.5 288 325.5 285.4M2.5 293.4L0.5 296 -1.5 293.4M9.5 293.4L7.5 296 5.5 293.4M17.5 293.4L15.5 296 13.5 293.4M25.5 293.4L23.5 296 21.5 293.4M33.5 293.4L31.5 296 29.5 293.4M41.5 293.4L39.5 296 37.5 293.4M49.5 293.4L47.5 296 45.5 293.4M57.5 293.4L55.5 296 53.5 293.4M65.5 293.4L63.5 296 61.5 293.4M73.5 293.4L71.5 296 69.5 293.4M81.5 293.4L79.5 296 77.5 293.4M89.6 293.3L87.7 296 85.6 293.5M97.7 293.2L95.9 296 93.6 293.6M105.8 293L104.3 295.9 101.8 293.7M114 292.8L112.7 295.8 110 293.9M122.1 292.6L121 295.7 118.2 294M130.1 292.4L129.4 295.6 126.5 294.1M138.1 292.4L137.4 295.6 134.5 294.1M146.1 292.4L145.4 295.6 142.5 294.1M154.1 292.4L153.4 295.6 150.5 294.1M162.1 292.4L161.4 295.6 158.5 294.1M170.1 292.4L169.4 295.6 166.5 294.1M178.1 292.4L177.4 295.6 174.5 294.1M186.1 292.4L185.4 295.6 182.5 294.1M194.1 292.4L193.4 295.6 190.5 294.1M202.1 292.5L201.2 295.7 198.3 294M210.1 292.6L209 295.7 206.2 294M218 292.8L216.7 295.8 214 293.9M225.8 293L224.3 295.9 221.8 293.7M233.7 293.2L231.9 296 229.6 293.6M241.5 293.4L239.5 296 237.5 293.4M249.5 293.4L247.5 296 245.5 293.4M257.5 293.4L255.5 296 253.5 293.4M265.5 293.4L263.5 296 261.5 293.4M273.5 293.4L271.5 296 269.5 293.4M281.5 293.4L279.5 296 277.5 293.4M289.5 293.4L287.5 296 285.5 293.4M297.5 293.4L295.5 296 293.5 293.4M305.5 293.4L303.5 296 301.5 293.4M313.5 293.4L311.5 296 309.5 293.4M321.5 293.4L319.5 296 317.5 293.4M329.5 293.4L327.5 296 325.5 293.4M2.5 301.4L0.5 304 -1.5 301.4M9.5 301.4L7.5 304 5.5 301.4M17.5 301.4L15.5 304 13.5 301.4M25.5 301.4L23.5 304 21.5 301.4M33.5 301.4L31.5 304 29.5 301.4M41.5 301.4L39.5 304 37.5 301.4M49.5 301.4L47.5 304 45.5 301.4M57.5 301.4L55.5 304 53.5 301.4M65.5 301.4L63.5 304 61.5 301.4M73.5 301.4L71.5 304 69.5 301.4M81.5 301.4L79.5 304 77.5 301.4M89.6 301.3L87.7 304 85.6 301.5M97.7 301.2L95.9 304 93.6 301.6M105.8 301L104.3 303.9 101.8 301.7M114 300.8L112.7 303.8 110 301.9M122 300.6L120.9 303.8 118.2 302M130.1 300.5L129.2 303.7 126.3 302M138.1 300.5L137.2 303.7 134.3 302M146.1 300.5L145.2 303.7 142.3 302M154.1 300.5L153.2 303.7 150.3 302M162.1 300.5L161.2 303.7 158.3 302M170.1 300.5L169.2 303.7 166.3 302M178.1 300.5L177.2 303.7 174.3 302M186.1 300.5L185.2 303.7 182.3 302M194.1 300.5L193.2 303.7 190.3 302M202.1 300.6L201 303.7 198.2 302M210 300.7L208.9 303.8 206.1 301.9M217.9 300.9L216.5 303.9 213.9 301.8M225.8 301.1L224.1 304 221.7 301.6M233.7 301.3L231.8 304 229.6 301.5M241.5 301.4L239.5 304 237.5 301.4M249.5 301.4L247.5 304 245.5 301.4M257.5 301.4L255.5 304 253.5 301.4M265.5 301.4L263.5 304 261.5 301.4M273.5 301.4L271.5 304 269.5 301.4M281.5 301.4L279.5 304 277.5 301.4M289.5 301.4L287.5 304 285.5 301.4M297.5 301.4L295.5 304 293.5 301.4M305.5 301.4L303.5 304 301.5 301.4M313.5 301.4L311.5 304 309.5 301.4M321.5 301.4L319.5 304 317.5 301.4M329.5 301.4L327.5 304 325.5 301.4M2.5 309.4L0.5 312 -1.5 309.4M9.5 309.4L7.5 312 5.5 309.4M17.5 309.4L15.5 312 13.5 309.4M25.5 309.4L23.5 312 21.5 309.4M33.5 309.4L31.5 312 29.5 309.4M41.5 309.4L39.5 312 37.5 309.4M49.5 309.4L47.5 312 45.5 309.4M57.5 309.4L55.5 312 53.5 309.4M65.5 309.4L63.5 312 61.5 309.4M73.5 309.4L71.5 312 69.5 309.4M81.5 309.4L79.5 312 77.5 309.4M89.6 309.3L87.7 312 85.6 309.5M97.7 309.2L95.9 312 93.6 309.6M105.8 309L104.3 311.9 101.8 309.7M114 308.8L112.7 311.8 110 309.9M122 308.7L120.9 311.8 118.1 309.9M130.1 308.6L129 311.7 126.2 310M138.1 308.6L137 311.7 134.2 310M146.1 308.6L145 311.7 142.2 310M154.1 308.6L153 311.7 150.2 310M162.1 308.6L161 311.7 158.2 310M170.1 308.6L169 311.7 166.2 310M178.1 308.6L177 311.7 174.2 310M186.1 308.6L185 311.7 182.2 310M194.1 308.6L193 311.7 190.2 310M202 308.7L200.9 311.8 198.1 309.9M210 308.8L208.7 311.8 206 309.9M217.8 309L216.3 311.9 213.8 309.7M225.7 309.2L223.9 312 221.6 309.6M233.6 309.3L231.7 312 229.6 309.5M241.5 309.4L239.5 312 237.5 309.4M249.5 309.4L247.5 312 245.5 309.4M257.5 309.4L255.5 312 253.5 309.4M265.5 309.4L263.5 312 261.5 309.4M273.5 309.4L271.5 312 269.5 309.4M281.5 309.4L279.5 312 277.5 309.4M289.5 309.4L287.5 312 285.5 309.4M297.5 309.4L295.5 312 293.5 309.4M305.5 309.4L303.5 312 301.5 309.4M313.5 309.4L311.5 312 309.5 309.4M321.5 309.4L319.5 312 317.5 309.4M329.5 309.4L327.5 312 325.5 309.4M2.5 317.4L0.5 320 -1.5 317.4M9.5 317.4L7.5 320 5.5 317.4M17.5 317.4L15.5 320 13.5 317.4M25.5 317.4L23.5 320 21.5 317.4M33.5 317.4L31.5 320 29.5 317.4M41.5 317.4L39.5 320 37.5 317.4M49.5 317.4L47.5 320 45.5 317.4M57.5 317.4L55.5 320 53.5 317.4M65.5 317.4L63.5 320 61.5 317.4M73.5 317.4L71.5 320 69.5 317.4M81.5 317.4L79.5 320 77.5 317.4M89.6 317.3L87.7 320 85.6 317.5M97.7 317.2L95.9 320 93.6 317.6M105.8 317.1L104.2 319.9 101.8 317.7M113.9 316.9L112.5 319.9 109.9 317.8M122 316.8L120.7 319.8 118 317.9M130 316.7L128.9 319.8 126.1 317.9M138 316.7L136.9 319.8 134.1 317.9M146 316.7L144.9 319.8 142.1 317.9M154 316.7L152.9 319.8 150.1 317.9M162 316.7L160.9 319.8 158.1 317.9M170 316.7L168.9 319.8 166.1 317.9M178 316.7L176.9 319.8 174.1 317.9M186 316.6L184.9 319.8 182.2 318M194.1 316.6L193 319.7 190.2 318M202 316.8L200.8 319.8 198.1 317.9M209.9 316.9L208.5 319.9 205.9 317.8M217.8 317.1L216.1 320 213.7 317.6M225.6 317.3L223.7 320 221.6 317.5M233.6 317.4L231.6 320 229.5 317.4M241.5 317.4L239.5 320 237.5 317.4M249.5 317.4L247.5 320 245.5 317.4M257.5 317.4L255.5 320 253.5 317.4M265.5 317.4L263.5 320 261.5 317.4M273.5 317.4L271.5 320 269.5 317.4M281.5 317.4L279.5 320 277.5 317.4M289.5 317.4L287.5 320 285.5 317.4M297.5 317.4L295.5 320 293.5 317.4M305.5 317.4L303.5 320 301.5 317.4M313.5 317.4L311.5 320 309.5 317.4M321.5 317.4L319.5 320 317.5 317.4M329.5 317.4L327.5 320 325.5 317.4M2.5 325.4L0.5 328 -1.5 325.4M9.5 325.4L7.5 328 5.5 325.4M17.5 325.4L15.5 328 13.5 325.4M25.5 325.4L23.5 328 21.5 325.4M33.5 325.4L31.5 328 29.5 325.4M41.5 325.4L39.5 328 37.5 325.4M49.5 325.4L47.5 328 45.5 325.4M57.5 325.4L55.5 328 53.5 325.4M65.5 325.4L63.5 328 61.5 325.4M73.5 325.4L71.5 328 69.5 325.4M81.5 325.4L79.5 328 77.5 325.4M89.6 325.3L87.7 328 85.6 325.5M97.7 325.2L95.9 328 93.6 325.6M105.8 325.1L104.1 328 101.7 325.6M113.8 325L112.3 327.9 109.8 325.7M121.9 324.9L120.5 327.9 117.9 325.8M130 324.8L128.7 327.8 126 325.9M138 324.8L136.7 327.8 134 325.9M146 324.8L144.7 327.8 142 325.9M154 324.8L152.7 327.8 150 325.9M162 324.8L160.7 327.8 158 325.9M170 324.8L168.7 327.8 166 325.9M178 324.8L176.7 327.8 174 325.9M186 324.7L184.9 327.8 182.1 325.9M194.1 324.6L193 327.7 190.2 326M202 324.8L200.7 327.8 198 325.9M209.8 325L208.3 327.9 205.8 325.7M217.7 325.2L215.9 328 213.6 325.6M225.5 325.4L223.5 328 221.5 325.4M233.5 325.4L231.5 328 229.5 325.4M241.5 325.4L239.5 328 237.5 325.4M249.5 325.4L247.5 328 245.5 325.4M257.5 325.4L255.5 328 253.5 325.4M265.5 325.4L263.5 328 261.5 325.4M273.5 325.4L271.5 328 269.5 325.4M281.5 325.4L279.5 328 277.5 325.4M289.5 325.4L287.5 328 285.5 325.4M297.5 325.4L295.5 328 293.5 325.4M305.5 325.4L303.5 328 301.5 325.4M313.5 325.4L311.5 328 309.5 325.4M321.5 325.4L319.5 328 317.5 325.4M329.5 325.4L327.5 328 325.5 325.4M2.5 333.4L0.5 336 -1.5 333.4M9.5 333.4L7.5 336 5.5 333.4M17.5 333.4L15.5 336 13.5 333.4M25.5 333.4L23.5 336 21.5 333.4M33.5 333.4L31.5 336 29.5 333.4M41.5 333.4L39.5 336 37.5 333.4M49.5 333.4L47.5 336 45.5 333.4M57.5 333.4L55.5 336 53.5 333.4M65.5 333.4L63.5 336 61.5 333.4M73.4 333.5L71.3 336 69.4 333.3M81.4 333.6L79.1 336 77.3 333.2M89.4 333.5L87.3 336 85.4 333.3M97.5 333.4L95.5 336 93.5 333.4M105.7 333.3L103.8 336 101.6 333.5M113.8 333.1L112.1 336 109.7 333.6M121.8 333L120.3 335.9 117.8 333.7M129.9 332.9L128.5 335.9 125.9 333.8M137.9 332.9L136.5 335.9 133.9 333.8M145.9 332.9L144.5 335.9 141.9 333.8M153.9 332.9L152.5 335.9 149.9 333.8M161.9 332.9L160.5 335.9 157.9 333.8M169.9 332.9L168.5 335.9 165.9 333.8M177.9 332.9L176.5 335.9 173.9 333.8M186 332.8L184.7 335.8 182 333.9M194 332.7L192.9 335.8 190.1 333.9M201.9 332.9L200.6 335.9 198 333.8M209.8 333L208.3 335.9 205.8 333.7M217.7 333.2L215.9 336 213.6 333.6M225.5 333.4L223.5 336 221.5 333.4M233.5 333.4L231.5 336 229.5 333.4M241.5 333.4L239.5 336 237.5 333.4M249.5 333.4L247.5 336 245.5 333.4M257.5 333.4L255.5 336 253.5 333.4M265.5 333.4L263.5 336 261.5 333.4M273.5 333.4L271.5 336 269.5 333.4M281.5 333.4L279.5 336 277.5 333.4M289.5 333.4L287.5 336 285.5 333.4M297.5 333.4L295.5 336 293.5 333.4M305.5 333.4L303.5 336 301.5 333.4M313.5 333.4L311.5 336 309.5 333.4M321.5 333.4L319.5 336 317.5 333.4M329.5 333.4L327.5 336 325.5 333.4M2.5 341.4L0.5 344 -1.5 341.4M9.5 341.4L7.5 344 5.5 341.4M17.5 341.4L15.5 344 13.5 341.4M25.5 341.4L23.5 344 21.5 341.4M33.5 341.4L31.5 344 29.5 341.4M41.5 341.4L39.5 344 37.5 341.4M49.5 341.4L47.5 344 45.5 341.4M57.5 341.4L55.5 344 53.5 341.4M65.5 341.4L63.5 344 61.5 341.4M73.4 341.6L71.1 344 69.3 341.2M81.2 341.7L78.7 343.9 77.2 341M89.3 341.6L86.9 344 85.2 341.1M97.4 341.6L95.1 344 93.3 341.2M105.5 341.4L103.5 344 101.5 341.4M113.7 341.2L111.9 344 109.6 341.6M121.8 341.1L120.1 344 117.7 341.6M129.8 341L128.3 343.9 125.8 341.7M137.8 341L136.3 343.9 133.8 341.7M145.8 341L144.3 343.9 141.8 341.7M153.8 341L152.3 343.9 149.8 341.7M161.8 341L160.3 343.9 157.8 341.7M169.8 341L168.3 343.9 165.8 341.7M177.8 341L176.3 343.9 173.8 341.7M185.9 340.9L184.5 343.9 181.9 341.8M194 340.8L192.7 343.8 190 341.9M201.9 340.9L200.5 343.9 197.9 341.8M209.8 341L208.3 343.9 205.8 341.7M217.7 341.2L215.9 344 213.6 341.6M225.5 341.4L223.5 344 221.5 341.4M233.5 341.4L231.5 344 229.5 341.4M241.5 341.4L239.5 344 237.5 341.4M249.5 341.4L247.5 344 245.5 341.4M257.5 341.4L255.5 344 253.5 341.4M265.5 341.4L263.5 344 261.5 341.4M273.5 341.4L271.5 344 269.5 341.4M281.5 341.4L279.5 344 277.5 341.4M289.5 341.4L287.5 344 285.5 341.4M297.5 341.4L295.5 344 293.5 341.4M305.5 341.4L303.5 344 301.5 341.4M313.5 341.4L311.5 344 309.5 341.4M321.5 341.4L319.5 344 317.5 341.4M329.5 341.4L327.5 344 325.5 341.4M2.5 349.4L0.5 352 -1.5 349.4M9.5 349.4L7.5 352 5.5 349.4M17.5 349.4L15.5 352 13.5 349.4M25.5 349.4L23.5 352 21.5 349.4M33.5 349.4L31.5 352 29.5 349.4M41.5 349.4L39.5 352 37.5 349.4M49.5 349.4L47.5 352 45.5 349.4M57.5 349.4L55.5 352 53.5 349.4M65.5 349.4L63.5 352 61.5 349.4M73.4 349.5L71.3 352 69.4 349.3M81.4 349.6L79.1 352 77.3 349.2M89.4 349.5L87.3 352 85.4 349.3M97.5 349.4L95.5 352 93.5 349.4M105.6 349.3L103.7 352 101.6 349.5M113.7 349.2L111.9 352 109.6 349.6M121.8 349.1L120.1 352 117.7 349.6M129.8 349L128.3 351.9 125.8 349.7M137.8 349L136.3 351.9 133.8 349.7M145.8 349L144.3 351.9 141.8 349.7M153.8 349L152.3 351.9 149.8 349.7M161.8 349L160.3 351.9 157.8 349.7M169.8 349L168.3 351.9 165.8 349.7M177.8 349L176.3 351.9 173.8 349.7M185.9 349L184.4 351.9 181.9 349.8M193.9 348.9L192.5 351.9 189.9 349.8M201.8 349.1L200.2 351.9 197.8 349.7M209.7 349.2L207.9 352 205.6 349.6M217.6 349.3L215.7 352 213.6 349.5M225.5 349.4L223.5 352 221.5 349.4M233.5 349.4L231.5 352 229.5 349.4M241.5 349.4L239.5 352 237.5 349.4M249.5 349.4L247.5 352 245.5 349.4M257.5 349.4L255.5 352 253.5 349.4M265.5 349.4L263.5 352 261.5 349.4M273.5 349.4L271.5 352 269.5 349.4M281.5 349.4L279.5 352 277.5 349.4M289.5 349.4L287.5 352 285.5 349.4M297.5 349.4L295.5 352 293.5 349.4M305.5 349.4L303.5 352 301.5 349.4M313.5 349.4L311.5 352 309.5 349.4M321.5 349.4L319.5 352 317.5 349.4M329.5 349.4L327.5 352 325.5 349.4M2.5 357.4L0.5 360 -1.5 357.4M9.5 357.4L7.5 360 5.5 357.4M17.5 357.4L15.5 360 13.5 357.4M25.5 357.4L23.5 360 21.5 357.4M33.5 357.4L31.5 360 29.5 357.4M41.5 357.4L39.5 360 37.5 357.4M49.5 357.4L47.5 360 45.5 357.4M57.5 357.4L55.5 360 53.5 357.4M65.5 357.4L63.5 360 61.5 357.4M73.5 357.4L71.5 360 69.5 357.4M81.5 357.4L79.5 360 77.5 357.4M89.6 357.3L87.7 360 85.6 357.5M97.7 357.2L95.9 360 93.6 357.6M105.7 357.2L103.9 360 101.6 357.6M113.7 357.2L111.9 360 109.6 357.6M121.8 357.1L120.1 360 117.7 357.6M129.8 357L128.3 359.9 125.8 357.7M137.8 357L136.3 359.9 133.8 357.7M145.8 357L144.3 359.9 141.8 357.7M153.8 357L152.3 359.9 149.8 357.7M161.8 357L160.3 359.9 157.8 357.7M169.8 357L168.3 359.9 165.8 357.7M177.8 357L176.3 359.9 173.8 357.7M185.8 357L184.3 359.9 181.8 357.7M193.8 357L192.3 359.9 189.8 357.7M201.7 357.2L199.9 360 197.6 357.6M209.5 357.4L207.5 360 205.5 357.4M217.5 357.4L215.5 360 213.5 357.4M225.5 357.4L223.5 360 221.5 357.4M233.5 357.4L231.5 360 229.5 357.4M241.5 357.4L239.5 360 237.5 357.4M249.5 357.4L247.5 360 245.5 357.4M257.5 357.4L255.5 360 253.5 357.4M265.5 357.4L263.5 360 261.5 357.4M273.5 357.4L271.5 360 269.5 357.4M281.5 357.4L279.5 360 277.5 357.4M289.5 357.4L287.5 360 285.5 357.4M297.5 357.4L295.5 360 293.5 357.4M305.5 357.4L303.5 360 301.5 357.4M313.5 357.4L311.5 360 309.5 357.4M321.5 357.4L319.5 360 317.5 357.4M329.5 357.4L327.5 360 325.5 357.4M2.5 365.4L0.5 368 -1.5 365.4M9.5 365.4L7.5 368 5.5 365.4M17.5 365.4L15.5 368 13.5 365.4M25.5 365.4L23.5 368 21.5 365.4M33.5 365.4L31.5 368 29.5 365.4M41.5 365.4L39.5 368 37.5 365.4M49.5 365.4L47.5 368 45.5 365.4M57.5 365.4L55.4 368 53.4 365.4M65.4 365.5L63.3 368 61.4 365.3M73.3 365.6L71 368 69.3 365.2M81.2 365.7L78.7 367.9 77.2 365M89 365.8L86.4 367.9 85.1 364.9M96.9 365.9L94.1 367.8 93 364.7M104.9 365.9L102.1 367.8 101 364.7M112.9 365.9L110.1 367.8 109 364.7M121 365.9L118.3 367.8 117 364.8M129.1 365.8L126.5 367.9 125.1 364.9M137.1 365.8L134.6 367.9 133.1 365M145.2 365.7L142.7 367.9 141.2 365M153.2 365.7L150.8 367.9 149.2 365.1M161.3 365.6L158.9 368 157.2 365.1M169.3 365.6L167 368 165.3 365.2M177.4 365.6L175.1 368 173.3 365.2M185.4 365.5L183.3 368 181.4 365.3M193.5 365.4L191.5 368 189.5 365.4M201.5 365.4L199.5 368 197.5 365.4M209.5 365.4L207.5 368 205.5 365.4M217.5 365.4L215.5 368 213.5 365.4M225.5 365.4L223.5 368 221.5 365.4M233.5 365.4L231.5 368 229.5 365.4M241.5 365.4L239.5 368 237.5 365.4M249.5 365.4L247.5 368 245.5 365.4M257.5 365.4L255.5 368 253.5 365.4M265.5 365.4L263.5 368 261.5 365.4M273.5 365.4L271.5 368 269.5 365.4M281.5 365.4L279.5 368 277.5 365.4M289.5 365.4L287.5 368 285.5 365.4M297.5 365.4L295.5 368 293.5 365.4M305.5 365.4L303.5 368 301.5 365.4M313.5 365.4L311.5 368 309.5 365.4M321.5 365.4L319.5 368 317.5 365.4M329.5 365.4L327.5 368 325.5 365.4M2.5 373.4L0.5 376 -1.5 373.4M9.5 373.4L7.5 376 5.5 373.4M17.5 373.4L15.5 376 13.5 373.4M25.5 373.4L23.5 376 21.5 373.4M33.5 373.4L31.5 376 29.5 373.4M41.5 373.4L39.5 376 37.5 373.4M49.5 373.4L47.5 376 45.5 373.4M57.4 373.5L55.3 376 53.4 373.3M65.4 373.6L63.1 376 61.3 373.2M73.1 373.8L70.5 375.9 69.1 372.9M80.8 374L78 375.7 76.9 372.6M88.3 374.2L85.2 375.4 84.8 372.1M95.8 374.3L92.6 374.9 92.7 371.6M103.8 374.3L100.6 374.9 100.7 371.6M111.8 374.3L108.6 374.9 108.7 371.6M120 374.2L116.8 375.1 116.7 371.8M128.1 374.2L124.9 375.2 124.7 371.9M136.2 374.2L133.1 375.3 132.8 372M144.3 374.2L141.2 375.4 140.8 372.1M152.4 374.1L149.4 375.5 148.8 372.2M160.5 374.1L157.6 375.6 156.9 372.4M168.7 374L165.8 375.7 164.9 372.5M176.8 374L174 375.7 172.9 372.6M185 373.9L182.3 375.8 181 372.8M193.2 373.7L190.7 375.9 189.2 373M201.4 373.6L199.1 376 197.3 373.2M209.5 373.4L207.5 376 205.5 373.4M217.5 373.4L215.5 376 213.5 373.4M225.5 373.4L223.5 376 221.5 373.4M233.5 373.4L231.5 376 229.5 373.4M241.5 373.4L239.5 376 237.5 373.4M249.5 373.4L247.5 376 245.5 373.4M257.5 373.4L255.5 376 253.5 373.4M265.5 373.4L263.5 376 261.5 373.4M273.5 373.4L271.5 376 269.5 373.4M281.5 373.4L279.5 376 277.5 373.4M289.5 373.4L287.5 376 285.5 373.4M297.5 373.4L295.5 376 293.5 373.4M305.5 373.4L303.5 376 301.5 373.4M313.5 373.4L311.5 376 309.5 373.4M321.5 373.4L319.5 376 317.5 373.4M329.5 373.4L327.5 376 325.5 373.4M2.5 381.4L0.5 384 -1.5 381.4M9.5 381.4L7.5 384 5.5 381.4M17.5 381.4L15.5 384 13.5 381.4M25.5 381.4L23.5 384 21.5 381.4M33.5 381.4L31.5 384 29.5 381.4M41.5 381.4L39.5 384 37.5 381.4M49.5 381.4L47.5 384 45.5 381.4M57.5 381.4L55.4 384 53.4 381.4M65.4 381.5L63.3 384 61.4 381.3M73.1 381.8L70.6 383.9 69.1 381M80.8 382L78 383.7 76.9 380.6M88.3 382.2L85.2 383.3 84.8 380.1M95.7 382.3L92.5 382.8 92.7 379.5M103.7 382.3L100.5 382.8 100.7 379.5M111.7 382.3L108.5 382.8 108.7 379.5M119.8 382.3L116.5 382.9 116.7 379.6M127.8 382.3L124.6 382.9 124.7 379.6M136 382.2L132.8 383.1 132.7 379.8M144.1 382.2L140.9 383.2 140.7 379.9M152.2 382.2L149.1 383.3 148.8 380M160.3 382.2L157.2 383.4 156.8 380.1M168.4 382.1L165.4 383.5 164.8 380.2M176.5 382.1L173.6 383.6 172.9 380.4M184.8 382L182 383.7 180.9 380.6M193 381.9L190.3 383.8 189 380.8M201.3 381.6L198.9 384 197.2 381.1M209.5 381.4L207.5 384 205.5 381.4M217.5 381.4L215.5 384 213.5 381.4M225.5 381.4L223.5 384 221.5 381.4M233.5 381.4L231.5 384 229.5 381.4M241.5 381.4L239.5 384 237.5 381.4M249.5 381.4L247.5 384 245.5 381.4M257.5 381.4L255.5 384 253.5 381.4M265.5 381.4L263.5 384 261.5 381.4M273.5 381.4L271.5 384 269.5 381.4M281.5 381.4L279.5 384 277.5 381.4M289.5 381.4L287.5 384 285.5 381.4M297.5 381.4L295.5 384 293.5 381.4M305.5 381.4L303.5 384 301.5 381.4M313.5 381.4L311.5 384 309.5 381.4M321.5 381.4L319.5 384 317.5 381.4M329.5 381.4L327.5 384 325.5 381.4M2.5 389.4L0.5 392 -1.5 389.4M9.5 389.4L7.5 392 5.5 389.4M17.5 389.4L15.5 392 13.5 389.4M25.5 389.4L23.5 392 21.5 389.4M33.5 389.4L31.5 392 29.5 389.4M41.5 389.4L39.5 392 37.5 389.4M49.5 389.4L47.5 392 45.5 389.4M57.5 389.4L55.5 392 53.5 389.4M65.5 389.4L63.5 392 61.5 389.4M73.2 389.7L70.7 391.9 69.2 389M80.8 390L78 391.7 76.9 388.6M88.2 390.2L85.1 391.3 84.8 388M95.6 390.3L92.3 390.7 92.7 387.4M103.6 390.3L100.3 390.7 100.7 387.4M111.6 390.3L108.3 390.7 108.7 387.4M119.6 390.3L116.3 390.7 116.7 387.4M127.6 390.3L124.3 390.7 124.7 387.4M135.7 390.3L132.5 390.8 132.7 387.5M143.8 390.3L140.6 390.9 140.7 387.6M152 390.2L148.8 391.1 148.7 387.8M160.1 390.2L156.9 391.2 156.7 387.9M168.2 390.2L165.1 391.3 164.8 388M176.3 390.2L173.2 391.4 172.8 388.1M184.5 390.1L181.6 391.6 180.9 388.4M192.8 390L190 391.7 188.9 388.6M201.2 389.7L198.7 391.9 197.2 389M209.5 389.4L207.5 392 205.5 389.4M217.5 389.4L215.5 392 213.5 389.4M225.5 389.4L223.5 392 221.5 389.4M233.5 389.4L231.5 392 229.5 389.4M241.5 389.4L239.5 392 237.5 389.4M249.5 389.4L247.5 392 245.5 389.4M257.5 389.4L255.5 392 253.5 389.4M265.5 389.4L263.5 392 261.5 389.4M273.5 389.4L271.5 392 269.5 389.4M281.5 389.4L279.5 392 277.5 389.4M289.5 389.4L287.5 392 285.5 389.4M297.5 389.4L295.5 392 293.5 389.4M305.5 389.4L303.5 392 301.5 389.4M313.5 389.4L311.5 392 309.5 389.4M321.5 389.4L319.5 392 317.5 389.4M329.5 389.4L327.5 392 325.5 389.4M2.5 397.4L0.5 400 -1.5 397.4M9.5 397.4L7.5 400 5.5 397.4M17.5 397.4L15.5 400 13.5 397.4M25.5 397.4L23.5 400 21.5 397.4M33.5 397.4L31.5 400 29.5 397.4M41.5 397.4L39.5 400 37.5 397.4M49.5 397.4L47.5 400 45.5 397.4M57.5 397.4L55.5 400 53.5 397.4M65.5 397.4L63.5 400 61.5 397.4M73.2 397.7L70.7 399.9 69.2 397M80.8 398L78 399.7 76.9 396.6M88.3 398.2L85.3 399.4 84.8 396.1M95.8 398.3L92.6 398.9 92.7 395.6M103.8 398.3L100.5 398.9 100.7 395.6M111.7 398.3L108.5 398.8 108.7 395.5M119.7 398.3L116.5 398.8 116.7 395.5M127.7 398.3L124.5 398.8 124.7 395.5M135.8 398.3L132.5 398.9 132.7 395.6M143.8 398.3L140.6 398.9 140.7 395.6M152 398.2L148.8 399.1 148.7 395.8M160.1 398.2L156.9 399.2 156.7 395.9M168.2 398.2L165.1 399.3 164.8 396M176.3 398.2L173.2 399.4 172.8 396.1M184.5 398.1L181.6 399.6 180.9 396.4M192.8 398L190 399.7 188.9 396.6M201.2 397.7L198.7 399.9 197.2 397M209.5 397.4L207.5 400 205.5 397.4M217.5 397.4L215.5 400 213.5 397.4M225.5 397.4L223.5 400 221.5 397.4M233.5 397.4L231.5 400 229.5 397.4M241.5 397.4L239.5 400 237.5 397.4M249.5 397.4L247.5 400 245.5 397.4M257.5 397.4L255.5 400 253.5 397.4M265.5 397.4L263.5 400 261.5 397.4M273.5 397.4L271.5 400 269.5 397.4M281.5 397.4L279.5 400 277.5 397.4M289.5 397.4L287.5 400 285.5 397.4M297.5 397.4L295.5 400 293.5 397.4M305.5 397.4L303.5 400 301.5 397.4M313.5 397.4L311.5 400 309.5 397.4M321.5 397.4L319.5 400 317.5 397.4M329.5 397.4L327.5 400 325.5 397.4M2.5 405.4L0.5 408 -1.5 405.4M9.5 405.4L7.5 408 5.5 405.4M17.5 405.4L15.5 408 13.5 405.4M25.5 405.4L23.5 408 21.5 405.4M33.5 405.4L31.5 408 29.5 405.4M41.5 405.4L39.5 408 37.5 405.4M49.5 405.4L47.5 408 45.5 405.4M57.5 405.4L55.5 408 53.5 405.4M65.5 405.4L63.5 408 61.5 405.4M73.2 405.7L70.7 407.9 69.2 405M80.8 406L78 407.7 76.9 404.6M88.4 406.1L85.4 407.5 84.8 404.2M96.1 406.2L92.9 407.2 92.7 403.9M104 406.2L100.8 407.1 100.7 403.8M111.8 406.3L108.6 406.9 108.7 403.6M119.8 406.3L116.6 406.9 116.7 403.6M127.8 406.3L124.6 406.9 124.7 403.6M135.8 406.3L132.6 406.9 132.7 403.6M143.8 406.3L140.6 406.9 140.7 403.6M152 406.2L148.8 407.1 148.7 403.8M160.1 406.2L156.9 407.2 156.7 403.9M168.2 406.2L165.1 407.3 164.8 404M176.3 406.2L173.2 407.4 172.8 404.1M184.5 406.1L181.6 407.6 180.9 404.4M192.8 406L190 407.7 188.9 404.6M201.2 405.7L198.7 407.9 197.2 405M209.5 405.4L207.5 408 205.5 405.4M217.5 405.4L215.5 408 213.5 405.4M225.5 405.4L223.5 408 221.5 405.4M233.5 405.4L231.5 408 229.5 405.4M241.5 405.4L239.5 408 237.5 405.4M249.5 405.4L247.5 408 245.5 405.4M257.5 405.4L255.5 408 253.5 405.4M265.5 405.4L263.5 408 261.5 405.4M273.5 405.4L271.5 408 269.5 405.4M281.5 405.4L279.5 408 277.5 405.4M289.5 405.4L287.5 408 285.5 405.4M297.5 405.4L295.5 408 293.5 405.4M305.5 405.4L303.5 408 301.5 405.4M313.5 405.4L311.5 408 309.5 405.4M321.5 405.4L319.5 408 317.5 405.4M329.5 405.4L327.5 408 325.5 405.4M2.5 413.4L0.5 416 -1.5 413.4M9.5 413.4L7.5 416 5.5 413.4M17.5 413.4L15.5 416 13.5 413.4M25.5 413.4L23.5 416 21.5 413.4M33.5 413.4L31.5 416 29.5 413.4M41.5 413.4L39.5 416 37.5 413.4M49.5 413.4L47.5 416 45.5 413.4M57.5 413.4L55.5 416 53.5 413.4M65.5 413.4L63.5 416 61.5 413.4M73.4 413.6L71.1 416 69.3 413.2M81.2 413.7L78.7 415.9 77.2 413M89 413.9L86.3 415.8 85 412.8M96.8 414L94 415.7 92.9 412.6M104.5 414.1L101.6 415.6 100.9 412.4M112.3 414.2L109.2 415.4 108.8 412.1M120.1 414.2L117 415.2 116.8 411.9M128 414.2L124.8 415.1 124.7 411.8M136 414.2L132.8 415.1 132.7 411.8M144.1 414.2L140.9 415.2 140.7 411.9M152.2 414.2L149.1 415.3 148.8 412M160.3 414.2L157.2 415.4 156.8 412.1M168.5 414.1L165.6 415.6 164.9 412.4M176.8 414L174 415.7 172.9 412.6M185.2 413.7L182.9 416 181.2 413.1M193.7 413.2L191.9 416 189.6 413.6M201.8 413L200.3 415.9 197.8 413.7M210 412.8L208.7 415.8 206 413.9M217.9 412.9L216.6 415.9 214 413.8M225.9 412.9L224.5 415.9 221.9 413.8M233.9 413L232.4 415.9 229.9 413.8M241.8 413L240.3 415.9 237.8 413.7M249.8 413.1L248.1 416 245.7 413.6M257.7 413.2L255.9 416 253.6 413.6M265.6 413.3L263.7 416 261.6 413.5M273.5 413.4L271.5 416 269.5 413.4M281.5 413.4L279.5 416 277.5 413.4M289.5 413.4L287.5 416 285.5 413.4M297.5 413.4L295.5 416 293.5 413.4M305.5 413.4L303.5 416 301.5 413.4M313.5 413.4L311.5 416 309.5 413.4M321.5 413.4L319.5 416 317.5 413.4M329.5 413.4L327.5 416 325.5 413.4M2.5 421.4L0.5 424 -1.5 421.4M9.5 421.4L7.5 424 5.5 421.4M17.5 421.4L15.5 424 13.5 421.4M25.5 421.4L23.5 424 21.5 421.4M33.5 421.4L31.5 424 29.5 421.4M41.5 421.4L39.5 424 37.5 421.4M49.5 421.4L47.5 424 45.5 421.4M57.5 421.4L55.5 424 53.5 421.4M65.5 421.4L63.5 424 61.5 421.4M73.5 421.4L71.5 424 69.5 421.4M81.5 421.4L79.5 424 77.5 421.4M89.4 421.5L87.3 424 85.4 421.3M97.4 421.6L95.1 424 93.3 421.2M105.1 421.8L102.5 423.9 101.1 420.9M112.8 422L110 423.7 108.9 420.6M120.4 422.1L117.4 423.5 116.8 420.2M128.1 422.2L124.9 423.2 124.7 419.9M136.2 422.2L133.1 423.3 132.8 420M144.3 422.2L141.2 423.4 140.8 420.1M152.4 422.1L149.4 423.5 148.8 420.2M160.5 422.1L157.6 423.6 156.9 420.4M168.9 421.9L166.1 423.8 165 420.7M177.2 421.7L174.7 423.9 173.2 421M185.8 421L184.3 423.9 181.8 421.7M194.2 420.1L193.8 423.4 190.7 422.2M202.2 420.1L201.8 423.4 198.7 422.2M210.2 420.1L209.8 423.4 206.7 422.2M218.2 420.2L217.6 423.5 214.6 422.1M226.1 420.4L225.4 423.6 222.5 422.1M234.1 420.5L233.2 423.7 230.3 422M242.1 420.6L241 423.7 238.2 422M250 420.8L248.7 423.8 246 421.9M257.8 421L256.3 423.9 253.8 421.7M265.7 421.2L263.9 424 261.6 421.6M273.5 421.4L271.5 424 269.5 421.4M281.5 421.4L279.5 424 277.5 421.4M289.5 421.4L287.5 424 285.5 421.4M297.5 421.4L295.5 424 293.5 421.4M305.5 421.4L303.5 424 301.5 421.4M313.5 421.4L311.5 424 309.5 421.4M321.5 421.4L319.5 424 317.5 421.4M329.5 421.4L327.5 424 325.5 421.4M2.5 429.4L0.5 432 -1.5 429.4M9.5 429.4L7.5 432 5.5 429.4M17.5 429.4L15.5 432 13.5 429.4M25.5 429.4L23.5 432 21.5 429.4M33.5 429.4L31.5 432 29.5 429.4M41.5 429.4L39.5 432 37.5 429.4M49.5 429.4L47.5 432 45.5 429.4M57.5 429.4L55.5 432 53.5 429.4M65.5 429.4L63.5 432 61.5 429.4M73.5 429.4L71.5 432 69.5 429.4M81.5 429.4L79.5 432 77.5 429.4M89.5 429.4L87.4 432 85.4 429.4M97.4 429.5L95.3 432 93.4 429.3M105.3 429.6L103 432 101.3 429.2M113.2 429.7L110.7 431.9 109.2 429M120.9 429.9L118.2 431.8 117 428.8M128.7 430L125.8 431.7 124.9 428.5M136.8 430L134.1 431.8 133 428.6M145 429.9L142.3 431.8 141 428.8M153.1 429.8L150.6 431.9 149.1 429M161.3 429.6L158.9 432 157.2 429.1M169.6 429.4L167.6 432 165.5 429.4M177.8 429L176.3 431.9 173.8 429.7M186.2 428L185.9 431.3 182.8 430.2M194.2 426.9L195.2 430.1 191.9 430.3M202.3 427.4L202.7 430.7 199.4 430.3M210.3 427.9L210.1 431.2 206.9 430.2M218.3 427.9L218.1 431.2 214.9 430.2M226.3 427.9L226.1 431.2 222.9 430.2M234.2 428.1L233.7 431.4 230.7 430.2M242.1 428.4L241.4 431.6 238.5 430.1M250.1 428.6L249 431.7 246.2 430M258 428.8L256.7 431.8 254 429.9M265.8 429.1L264.2 431.9 261.8 429.7M273.6 429.3L271.7 432 269.6 429.5M281.6 429.4L279.6 432 277.5 429.4M289.5 429.4L287.5 432 285.5 429.4M297.5 429.4L295.5 432 293.5 429.4M305.5 429.4L303.5 432 301.5 429.4M313.5 429.4L311.5 432 309.5 429.4M321.5 429.4L319.5 432 317.5 429.4M329.5 429.4L327.5 432 325.5 429.4M2.5 437.4L0.5 440 -1.5 437.4M9.5 437.4L7.5 440 5.5 437.4M17.5 437.4L15.5 440 13.5 437.4M25.5 437.4L23.5 440 21.5 437.4M33.5 437.4L31.5 440 29.5 437.4M41.5 437.4L39.5 440 37.5 437.4M49.5 437.4L47.5 440 45.5 437.4M57.5 437.4L55.5 440 53.5 437.4M65.5 437.4L63.5 440 61.5 437.4M73.5 437.4L71.5 440 69.5 437.4M81.5 437.4L79.5 440 77.5 437.4M89.5 437.4L87.5 440 85.5 437.4M97.5 437.4L95.5 440 93.5 437.4M105.5 437.4L103.5 440 101.5 437.4M113.5 437.4L111.5 440 109.5 437.4M121.4 437.6L119.1 440 117.3 437.2M129.2 437.7L126.7 439.9 125.2 437M137.4 437.6L135.1 440 133.3 437.2M145.5 437.4L143.5 440 141.5 437.4M153.7 437.2L151.9 440 149.6 437.6M161.8 437L160.3 439.9 157.8 437.7M170.1 436.6L169 439.7 166.2 438M178.2 436.1L177.8 439.4 174.7 438.2M186.2 434.9L187.2 438.1 183.9 438.3M193.7 433.8L195.9 436.3 193 437.8M202.2 434.7L203.4 437.8 200.1 438.2M210.3 435.6L210.4 438.9 207.2 438.3M218.3 435.5L218.5 438.8 215.3 438.3M226.3 435.4L226.7 438.7 223.4 438.3M234.3 435.8L234.2 439.1 231 438.2M242.2 436.1L241.8 439.4 238.7 438.2M250.1 436.4L249.4 439.6 246.5 438.1M258.1 436.6L257 439.7 254.2 438M265.9 436.9L264.5 439.9 261.9 437.8M273.7 437.2L271.9 440 269.6 437.6M281.6 437.3L279.7 440 277.6 437.5M289.5 437.4L287.5 440 285.5 437.4M297.5 437.4L295.5 440 293.5 437.4M305.5 437.4L303.5 440 301.5 437.4M313.5 437.4L311.5 440 309.5 437.4M321.5 437.4L319.5 440 317.5 437.4M329.5 437.4L327.5 440 325.5 437.4M2.5 445.4L0.5 448 -1.5 445.4M9.5 445.4L7.5 448 5.5 445.4M17.5 445.4L15.5 448 13.5 445.4M25.5 445.4L23.5 448 21.5 445.4M33.5 445.4L31.5 448 29.5 445.4M41.5 445.4L39.5 448 37.5 445.4M49.5 445.4L47.5 448 45.5 445.4M57.5 445.4L55.5 448 53.5 445.4M65.5 445.4L63.5 448 61.5 445.4M73.5 445.4L71.5 448 69.5 445.4M81.5 445.4L79.5 448 77.5 445.4M89.5 445.4L87.5 448 85.5 445.4M97.5 445.4L95.5 448 93.5 445.4M105.5 445.4L103.5 448 101.5 445.4M113.5 445.4L111.5 448 109.5 445.4M121.5 445.4L119.4 448 117.4 445.4M129.4 445.5L127.3 448 125.4 445.3M137.7 445.2L135.9 448 133.6 445.6M145.9 444.9L144.5 447.9 141.9 445.8M154 444.7L152.9 447.8 150.1 445.9M162.1 444.5L161.2 447.7 158.3 446M170.2 444.2L169.7 447.4 166.6 446.1M178.3 443.9L178.1 447.2 174.9 446.2M186.3 443.3L186.8 446.6 183.5 446.3M194.2 442.7L195.4 445.8 192.1 446.2M202.3 443.2L202.9 446.5 199.6 446.3M210.3 443.8L210.2 447.1 207 446.2M218.3 443.8L218.2 447.1 215 446.2M226.3 443.8L226.2 447.1 223 446.2M234.2 444L233.9 447.3 230.8 446.2M242.2 444.2L241.6 447.5 238.6 446.1M250.1 444.4L249.3 447.6 246.4 446.1M258.1 444.6L257 447.7 254.2 446M265.9 444.9L264.5 447.9 262 445.8M273.7 445.2L272 448 269.7 445.6M281.6 445.3L279.8 448 277.6 445.5M289.5 445.4L287.5 448 285.5 445.4M297.5 445.4L295.5 448 293.5 445.4M305.5 445.4L303.5 448 301.5 445.4M313.5 445.4L311.5 448 309.5 445.4M321.5 445.4L319.5 448 317.5 445.4M329.5 445.4L327.5 448 325.5 445.4M2.5 453.4L0.5 456 -1.5 453.4M9.5 453.4L7.5 456 5.5 453.4M17.5 453.4L15.5 456 13.5 453.4M25.5 453.4L23.5 456 21.5 453.4M33.5 453.4L31.5 456 29.5 453.4M41.5 453.4L39.5 456 37.5 453.4M49.5 453.4L47.5 456 45.5 453.4M57.5 453.4L55.5 456 53.5 453.4M65.5 453.4L63.5 456 61.5 453.4M73.5 453.4L71.5 456 69.5 453.4M81.5 453.4L79.5 456 77.5 453.4M89.5 453.4L87.5 456 85.5 453.4M97.5 453.4L95.5 456 93.5 453.4M105.5 453.4L103.5 456 101.5 453.4M113.5 453.4L111.5 456 109.5 453.4M121.6 453.3L119.7 456 117.6 453.5M129.7 453.2L127.9 456 125.6 453.6M138 452.8L136.7 455.8 134 453.9M146.1 452.4L145.4 455.6 142.5 454.1M154.2 452.1L153.8 455.4 150.7 454.2M162.3 451.9L162.1 455.2 158.9 454.2M170.3 451.8L170.2 455.1 167 454.2M178.3 451.6L178.4 454.9 175.2 454.3M186.3 451.6L186.4 454.9 183.2 454.3M194.3 451.6L194.4 454.9 191.2 454.3M202.3 451.8L202.2 455.1 199 454.2M210.3 451.9L210.1 455.2 206.9 454.2M218.2 452L217.9 455.3 214.8 454.2M226.2 452.1L225.8 455.4 222.7 454.2M234.2 452.2L233.6 455.5 230.6 454.1M242.1 452.4L241.4 455.6 238.5 454.1M250.1 452.5L249.2 455.7 246.3 454M258.1 452.6L257 455.7 254.2 454M265.9 452.9L264.6 455.9 262 453.8M273.8 453.1L272.1 456 269.8 453.7M281.7 453.3L279.8 456 277.6 453.5M289.5 453.4L287.5 456 285.5 453.4M297.5 453.4L295.5 456 293.5 453.4M305.5 453.4L303.5 456 301.5 453.4M313.5 453.4L311.5 456 309.5 453.4M321.5 453.4L319.5 456 317.5 453.4M329.5 453.4L327.5 456 325.5 453.4M2.5 461.4L0.5 464 -1.5 461.4M9.5 461.4L7.5 464 5.5 461.4M17.5 461.4L15.5 464 13.5 461.4M25.5 461.4L23.5 464 21.5 461.4M33.5 461.4L31.5 464 29.5 461.4M41.5 461.4L39.5 464 37.5 461.4M49.5 461.4L47.5 464 45.5 461.4M57.5 461.4L55.5 464 53.5 461.4M65.5 461.4L63.5 464 61.5 461.4M73.5 461.4L71.5 464 69.5 461.4M81.5 461.4L79.5 464 77.5 461.4M89.5 461.4L87.5 464 85.5 461.4M97.5 461.4L95.5 464 93.5 461.4M105.5 461.4L103.5 464 101.5 461.4M113.5 461.4L111.5 464 109.5 461.4M121.7 461.3L119.8 464 117.6 461.5M129.8 461.1L128.1 464 125.7 461.6M138 460.7L136.9 463.8 134.1 461.9M146.2 460.2L145.6 463.5 142.6 462.1M154.2 460L153.9 463.3 150.8 462.2M162.3 459.8L162.2 463.1 159 462.2M170.3 459.7L170.3 463 167.1 462.3M178.3 459.6L178.4 462.9 175.2 462.3M186.3 459.6L186.4 462.9 183.2 462.3M194.3 459.6L194.4 462.9 191.2 462.3M202.3 459.8L202.2 463.1 199 462.2M210.3 459.9L210.1 463.2 206.9 462.2M218.2 460L217.9 463.3 214.8 462.2M226.2 460.1L225.8 463.4 222.7 462.2M234.2 460.2L233.6 463.5 230.6 462.1M242.1 460.4L241.4 463.6 238.5 462.1M250.1 460.5L249.1 463.7 246.3 462M258 460.7L256.9 463.8 254.1 461.9M265.9 460.9L264.4 463.9 261.9 461.8M273.7 461.2L272 464 269.7 461.6M281.6 461.3L279.8 464 277.6 461.5M289.5 461.4L287.5 464 285.5 461.4M297.5 461.4L295.5 464 293.5 461.4M305.5 461.4L303.5 464 301.5 461.4M313.5 461.4L311.5 464 309.5 461.4M321.5 461.4L319.5 464 317.5 461.4M329.5 461.4L327.5 464 325.5 461.4M2.5 469.4L0.5 472 -1.5 469.4M9.5 469.4L7.5 472 5.5 469.4M17.5 469.4L15.5 472 13.5 469.4M25.5 469.4L23.5 472 21.5 469.4M33.5 469.4L31.5 472 29.5 469.4M41.5 469.4L39.5 472 37.5 469.4M49.5 469.4L47.5 472 45.5 469.4M57.5 469.4L55.5 472 53.5 469.4M65.5 469.4L63.5 472 61.5 469.4M73.5 469.4L71.5 472 69.5 469.4M81.5 469.4L79.5 472 77.5 469.4M89.5 469.4L87.5 472 85.5 469.4M97.5 469.4L95.5 472 93.5 469.4M105.5 469.4L103.5 472 101.5 469.4M113.5 469.4L111.5 472 109.5 469.4M121.7 469.2L119.9 472 117.6 469.6M129.8 469L128.3 471.9 125.8 469.7M138.1 468.6L137 471.7 134.2 470M146.2 468.1L145.8 471.4 142.7 470.2M154.3 467.9L154.1 471.2 150.9 470.2M162.3 467.6L162.4 470.9 159.2 470.3M170.3 467.6L170.4 470.9 167.2 470.3M178.3 467.6L178.4 470.9 175.2 470.3M186.3 467.6L186.4 470.9 183.2 470.3M194.3 467.6L194.4 470.9 191.2 470.3M202.3 467.8L202.2 471.1 199 470.2M210.3 467.9L210.1 471.2 206.9 470.2M218.2 468L217.9 471.3 214.8 470.2M226.2 468.1L225.8 471.4 222.7 470.2M234.2 468.2L233.6 471.5 230.6 470.1M242.1 468.4L241.4 471.6 238.5 470.1M250.1 468.6L249 471.7 246.2 470M258 468.8L256.7 471.8 254 469.9M265.8 469L264.3 471.9 261.8 469.7M273.7 469.2L271.9 472 269.6 469.6M281.6 469.3L279.7 472 277.6 469.5M289.5 469.4L287.5 472 285.5 469.4M297.5 469.4L295.5 472 293.5 469.4M305.5 469.4L303.5 472 301.5 469.4M313.5 469.4L311.5 472 309.5 469.4M321.5 469.4L319.5 472 317.5 469.4M329.5 469.4L327.5 472 325.5 469.4M2.5 477.4L0.5 480 -1.5 477.4M9.5 477.4L7.5 480 5.5 477.4M17.5 477.4L15.5 480 13.5 477.4M25.5 477.4L23.5 480 21.5 477.4M33.5 477.4L31.5 480 29.5 477.4M41.5 477.4L39.5 480 37.5 477.4M49.5 477.4L47.5 480 45.5 477.4M57.5 477.4L55.5 480 53.5 477.4M65.5 477.4L63.5 480 61.5 477.4M73.5 477.4L71.5 480 69.5 477.4M81.5 477.4L79.5 480 77.5 477.4M89.5 477.4L87.5 480 85.5 477.4M97.5 477.4L95.5 480 93.5 477.4M105.5 477.4L103.5 480 101.5 477.4M113.5 477.4L111.5 480 109.5 477.4M121.7 477.2L119.9 480 117.6 477.6M129.8 477L128.3 479.9 125.8 477.7M138.1 476.6L137 479.7 134.2 478M146.2 476.1L145.8 479.4 142.7 478.2M154.3 475.9L154.1 479.2 150.9 478.2M162.3 475.6L162.4 478.9 159.2 478.3M170.3 475.6L170.4 478.9 167.2 478.3M178.3 475.6L178.4 478.9 175.2 478.3M186.3 475.6L186.4 478.9 183.2 478.3M194.3 475.6L194.4 478.9 191.2 478.3M202.3 475.8L202.2 479.1 199 478.2M210.3 475.9L210.1 479.2 206.9 478.2M218.2 476L217.9 479.3 214.8 478.2M226.2 476.1L225.8 479.4 222.7 478.2M234.2 476.2L233.6 479.5 230.6 478.1M242.1 476.4L241.4 479.6 238.5 478.1M250.1 476.6L249 479.7 246.2 478M258 476.8L256.7 479.8 254 477.9M265.8 477L264.3 479.9 261.8 477.7M273.7 477.2L271.9 480 269.6 477.6M281.6 477.3L279.7 480 277.6 477.5M289.5 477.4L287.5 480 285.5 477.4M297.5 477.4L295.5 480 293.5 477.4M305.5 477.4L303.5 480 301.5 477.4M313.5 477.4L311.5 480 309.5 477.4M321.5 477.4L319.5 480 317.5 477.4M329.5 477.4L327.5 480 325.5 477.4" fill="none" stroke="#000814" stroke-width="1.3"/>
</g></svg>
<div class="vl" style="left:848px;top:108px;height:481px;background:#f0f8fc"></div>

</body></html>
